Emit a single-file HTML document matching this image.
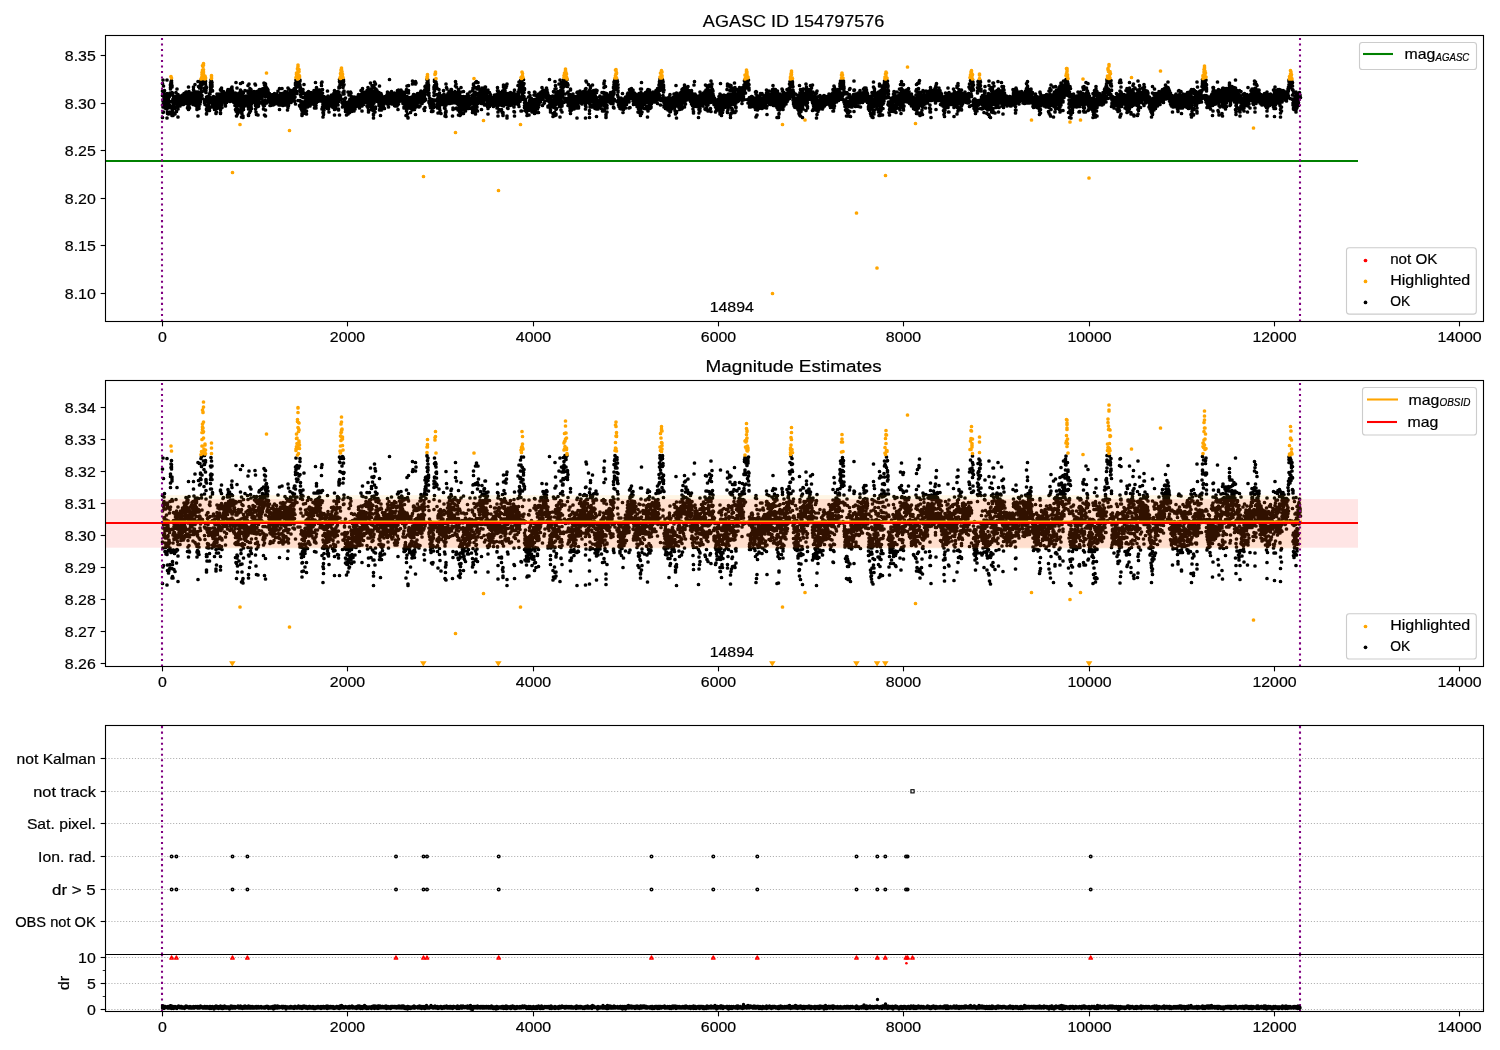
<!DOCTYPE html>
<html><head><meta charset="utf-8"><style>html,body{margin:0;padding:0;background:#fff;overflow:hidden}svg{display:block;will-change:transform}</style></head>
<body><svg width="1500" height="1050" viewBox="0 0 1500 1050" font-family="Liberation Sans, sans-serif">
<defs>
<clipPath id="c1"><rect x="105.5" y="35.5" width="1378.0" height="286.0"/></clipPath>
<clipPath id="c2"><rect x="105.5" y="380.5" width="1378.0" height="286.0"/></clipPath>
<clipPath id="c4"><rect x="105.5" y="954.5" width="1378.0" height="57.0"/></clipPath>
</defs>
<rect width="1500" height="1050" fill="#fff"/>
<text x="793.60" y="26.70" font-size="17.1" text-anchor="middle" textLength="181.46" lengthAdjust="spacingAndGlyphs" fill="#000" stroke="#000" stroke-width="0.2">AGASC ID 154797576</text>
<g clip-path="url(#c1)"><path transform="scale(.5)" d="M0 0m325 167h0m0 24h0m0-9h0m0 53h0m0-25h0m1 15h0m0-23h0m0 12h0m0-26h0m0-28h0m1 64h0m0-18h0m0-34h0m0 28h0m0-13h0m0 2h0m1-6h0m0 3h0m0 10h0m0 11h0m0-16h0m1 14h0m0-8h0m0-1h0m0-15h0m0 14h0m0 3h0m1 5h0m0-1h0m0 9h0m0 5h0m0-13h0m1-1h0m0 5h0m0 1h0m0-18h0m0 23h0m1-25h0m0 29h0m0-5h0m0-1h0m0-8h0m1-9h0m0 6h0m0-3h0m0 11h0m0 5h0m0 3h0m1-29h0m0-27h0m0 58h0m0 18h0m0-19h0m1 7h0m0-13h0m0-22h0m0-1h0m0 39h0m1-37h0m0 9h0m0 7h0m0 1h0m0 5h0m0-11h0m1 27h0m0-26h0m0 9h0m0-14h0m0 18h0m1-6h0m0-6h0m0 8h0m0 16h0m0-18h0m0 2h0m1-1h0m0-6h0m0 22h0m0-33h0m0 22h0m1-1h0m0 10h0m0-38h0m0 39h0m0-10h0m0-24h0m1-2h0m0-11h0m0-3h0m0-6h0m0 2h0m1-7h0m0 39h0m0-37h0m0 50h0m0-52h0m1 0h0m0 1h0m0-4h0m0 6h0m1 59h0m0-55h0m0 3h0m0-1h0m0 12h0m0 46h0m1-8h0m0-1h0m0-20h0m0-16h0m0 45h0m1-25h0m0 5h0m0-8h0m0 12h0m0-17h0m0 33h0m1-34h0m0-5h0m0 23h0m0-10h0m0 11h0m1-7h0m0-1h0m0 18h0m0-27h0m0 2h0m0-8h0m1 13h0m0-2h0m0-6h0m0 19h0m0-15h0m1 6h0m0-15h0m0 13h0m0-8h0m0 10h0m0 20h0m1-33h0m0 3h0m0-1h0m0 11h0m0-14h0m1 22h0m0-1h0m0-19h0m0 1h0m0-12h0m0 30h0m1-14h0m0-1h0m0-8h0m0 31h0m0-17h0m1 8h0m0-15h0m0-4h0m0-17h0m0 18h0m1 19h0m0-13h0m0 6h0m0 2h0m0-17h0m1 5h0m0 20h0m0 16h0m0-22h0m0-12h0m0-11h0m1 13h0m0-4h0m0-4h0m0-1h0m0 13h0m1-3h0m0-6h0m0 7h0m0 3h0m0-4h0m0-2h0m1-7h0m0 10h0m0 2h0m0-3h0m0-8h0m1 17h0m0-14h0m0-4h0m0 9h0m0 1h0m0 3h0m1-2h0m0-4h0m0-9h0m0 5h0m0 6h0m1 6h0m0-1h0m0-15h0m0 16h0m0-16h0m0 5h0m1-5h0m0 4h0m0 6h0m0-4h0m0 3h0m1 5h0m0-6h0m0-1h0m0 7h0m0-5h0m0-7h0m1 5h0m0 6h0m0-16h0m0 14h0m0-12h0m1 6h0m0-6h0m0 6h0m0 8h0m0-14h0m0 12h0m1 5h0m0-13h0m0 6h0m1 6h0m0-21h0m0 7h0m0-2h0m0 5h0m0-7h0m1 11h0m0-12h0m0 8h0m0 2h0m0-8h0m1 2h0m0 1h0m0 12h0m0-4h0m0 2h0m0-3h0m1-6h0m0 7h0m0-6h0m0 6h0m0-4h0m1-5h0m0-5h0m0-4h0m0 10h0m0-7h0m1 19h0m0-3h0m0-13h0m0-1h0m0-5h0m1 1h0m0 5h0m0 4h0m0-7h0m0 20h0m1-12h0m0 10h0m0-9h0m0 20h0m0-25h0m1 4h0m0-10h0m0 24h0m0-10h0m0-12h0m0 26h0m1-16h0m0 22h0m0-45h0m0 32h0m0-11h0m1-3h0m0 23h0m0-13h0m0 10h0m0-21h0m0-8h0m1 33h0m0-20h0m0 11h0m0-14h0m0-1h0m1-3h0m0 2h0m0 15h0m0-2h0m0-8h0m0-5h0m1 10h0m0-3h0m0-6h0m0 3h0m0-6h0m1 14h0m0-10h0m0 3h0m0 1h0m0 3h0m1-12h0m0 13h0m0-7h0m0 2h0m0 5h0m1-6h0m0-9h0m0 15h0m0-9h0m1-2h0m0 10h0m0-6h0m0 9h0m0-10h0m1-5h0m0-2h0m0 23h0m0-11h0m0-6h0m0 14h0m1-27h0m0 13h0m0 13h0m0-31h0m0 17h0m1 15h0m0-7h0m0-1h0m0-4h0m0-11h0m0 15h0m1-2h0m0-3h0m0-4h0m0 1h0m0 12h0m1-16h0m0 14h0m0-1h0m0-30h0m0 41h0m0-17h0m1 12h0m0-21h0m0 4h0m0 16h0m0-6h0m1 1h0m0-12h0m0 24h0m0-22h0m0 2h0m1 4h0m0-9h0m0 1h0m0 2h0m0 2h0m1-7h0m0 29h0m0 6h0m0-14h0m0 11h0m1-1h0m0-9h0m0-8h0m0-6h0m1-29h0m0 69h0m0-15h0m0-13h0m0 11h0m1-42h0m0 43h0m0-5h0m0-27h0m0 7h0m1 22h0m0 4h0m0-25h0m0 16h0m0-16h0m1 5h0m0-5h0m0 3h0m0-19h0m0 20h0m0-33h0m1 39h0m0-39h0m0 45h0m0-20h0m0 7h0m1 4h0m0-23h0m0-4h0m0-2h0m0 33h0m0-34h0m1-8h0m0 12h0m0 24h0m0-1h0m1-37h0m0 38h0m0-13h0m0-2h0m0-17h0m1 26h0m0-21h0m1 27h0m2-35h0m1 2h0m0 13h0m0-10h0m1 15h0m0 19h0m0 5h0m0-42h0m0-5h0m1 50h0m0-7h0m1-34h0m0-5h0m0-1h0m0 37h0m1-19h0m0-6h0m0-1h0m0 1h0m0 11h0m1 42h0m0 1h0m0-10h0m0-43h0m0 19h0m0 25h0m1 3h0m0-19h0m0 16h0m0-17h0m0 11h0m1-11h0m0-6h0m0 15h0m0-7h0m0-1h0m0-10h0m1 0h0m0 19h0m0-14h0m0 2h0m0 4h0m1-1h0m0 10h0m0-2h0m0-5h0m0 8h0m0-11h0m1 1h0m0-8h0m0 16h0m0-16h0m0 6h0m1 1h0m0 3h0m0 11h0m0 4h0m0-33h0m1-2h0m0 9h0m0 7h0m0-14h0m0 10h0m1-15h0m0-10h0m0 2h0m0 4h0m0-9h0m0-5h0m1 6h0m0 1h0m0-12h0m0 5h0m0 5h0m1 9h0m0-17h0m0 8h0m1-5h0m0 49h0m0-44h0m0 3h0m0 32h0m1-24h0m0 1h0m0 22h0m0 8h0m0-15h0m0 10h0m1-13h0m0 14h0m0-3h0m0 7h0m0-10h0m1 11h0m0-9h0m0-11h0m0 5h0m0 14h0m0-15h0m1 14h0m0-6h0m0 2h0m0-1h0m0-2h0m1 15h0m0-22h0m0 7h0m0 6h0m0-8h0m0-7h0m1 15h0m0-10h0m0 4h0m0-1h0m0 3h0m1-3h0m0-4h0m0 13h0m0-3h0m0-1h0m0 2h0m1 16h0m0-11h0m0 12h0m0-27h0m0 8h0m1-4h0m0-5h0m0 18h0m0 7h0m0-29h0m0 14h0m1 0h0m0-21h0m0 22h0m0-14h0m0-4h0m1 11h0m0 1h0m0-6h0m0 8h0m0 7h0m0-20h0m1-3h0m0 18h0m0-13h0m0 3h0m0 2h0m1-5h0m0 7h0m0-1h0m0-3h0m0-2h0m0 20h0m1-27h0m0 5h0m0-6h0m0 15h0m0 11h0m1-20h0m0 1h0m0-5h0m0 3h0m0 15h0m0 4h0m1-10h0m0-7h0m0 6h0m0 6h0m0-9h0m1 27h0m0-24h0m0 26h0m0-48h0m0 40h0m0-39h0m1 10h0m0-2h0m0 2h0m0 13h0m0-4h0m1-18h0m0 32h0m0-11h0m0-15h0m0 21h0m0-32h0m1 39h0m0-6h0m0-11h0m0 11h0m0-7h0m1-3h0m0 2h0m0-6h0m0 1h0m1 1h0m0-3h0m0-4h0m0-6h0m1 17h0m0-18h0m0 7h0m0-1h0m0 9h0m0-5h0m1-1h0m0 4h0m0-7h0m0 12h0m0-2h0m1-11h0m0 3h0m0 13h0m0-13h0m0 2h0m0-4h0m1 6h0m0-1h0m0 7h0m0-6h0m0 2h0m1-6h0m0 16h0m0-13h0m0-7h0m0 25h0m0-22h0m1 2h0m0 2h0m0-2h0m0 7h0m0-10h0m1 3h0m0 13h0m0-15h0m0 11h0m0-2h0m0-8h0m1 5h0m0-3h0m0-2h0m0 3h0m0-3h0m1 11h0m0-20h0m0 5h0m0 9h0m0-2h0m0-11h0m1 15h0m0 4h0m0-23h0m0 4h0m0 6h0m1-9h0m0 8h0m0-2h0m0 1h0m0-1h0m0 11h0m1-6h0m0-2h0m0 9h0m0 1h0m0-8h0m1-11h0m0 11h0m0-8h0m0-1h0m0-1h0m1 5h0m0 14h0m0 3h0m0-7h0m0-5h0m0-1h0m1 2h0m0-1h0m0-6h0m0 12h0m0-12h0m1 0h0m0 14h0m0-12h0m0 2h0m0-4h0m1 17h0m0-26h0m0 11h0m0-5h0m1 11h0m0-6h0m0 1h0m0-14h0m0 22h0m0-18h0m1 10h0m0 6h0m0-6h0m0-6h0m1 10h0m0-7h0m0 7h0m0-6h0m1 0h0m0 18h0m0-5h0m0 2h0m0-4h0m1-9h0m0 2h0m0 1h0m0 6h0m0-9h0m0 17h0m1-1h0m0-13h0m0 7h0m0-8h0m0 1h0m1 0h0m0 11h0m0-1h0m0 10h0m0-12h0m0 1h0m1 7h0m0-1h0m0-6h0m0-14h0m0 33h0m1 3h0m0-12h0m0-16h0m0-29h0m0 22h0m0 25h0m1-6h0m0 26h0m0-21h0m0-19h0m0 31h0m1-47h0m0 42h0m0-13h0m0 15h0m0-9h0m0-17h0m1 30h0m0-16h0m0 20h0m0-10h0m0-21h0m1 13h0m0 1h0m0-11h0m0 8h0m0-9h0m0-6h0m1-2h0m0 15h0m0-4h0m0 6h0m0-15h0m1 7h0m0-14h0m0 21h0m0-3h0m0 17h0m0-14h0m1 0h0m0-7h0m0-3h0m0 11h0m0-4h0m1-5h0m0 4h0m0-4h0m0 13h0m0-10h0m1-16h0m0 22h0m0-41h0m0 57h0m0-44h0m1 25h0m0-9h0m0 19h0m0-23h0m0 25h0m0-25h0m1 13h0m0-3h0m0-19h0m0 51h0m0-43h0m1 9h0m0 23h0m0-35h0m0 23h0m0 1h0m0 16h0m1-16h0m0-47h0m0 34h0m0 34h0m0-22h0m1-23h0m0 47h0m0-3h0m0-33h0m0 5h0m0-8h0m1 23h0m0-34h0m0 9h0m0 20h0m0-14h0m1-1h0m0 7h0m0-4h0m0-1h0m0 6h0m0 1h0m1-9h0m0 13h0m0-15h0m0-2h0m0 8h0m1-5h0m0 7h0m0-9h0m0-15h0m0 16h0m0 3h0m1 0h0m0 9h0m0-4h0m0-3h0m0 2h0m1-5h0m0-7h0m0 17h0m0-5h0m0-5h0m0 9h0m1-2h0m0-9h0m0 1h0m0 9h0m1-10h0m0-2h0m0 8h0m0-2h0m0 2h0m1 3h0m0-9h0m0 13h0m0-28h0m0 12h0m1 12h0m0-35h0m0 30h0m0 12h0m0-28h0m0 6h0m1 14h0m0-2h0m0 15h0m0 13h0m0-2h0m1-40h0m0 29h0m0-16h0m0-34h0m0 50h0m0-13h0m1 5h0m0 15h0m0-31h0m0-1h0m0 11h0m1-1h0m0-10h0m0-16h0m0 15h0m0-2h0m1 20h0m0 12h0m0-40h0m0 33h0m0-23h0m1 9h0m0 12h0m0-15h0m0-19h0m0 5h0m0 20h0m1-2h0m0 15h0m0-9h0m0-5h0m0-4h0m1-4h0m0 6h0m0-10h0m0 13h0m0-10h0m0 11h0m1-4h0m0-3h0m0-4h0m0 9h0m0-2h0m1-2h0m0-3h0m0-8h0m0 5h0m0 6h0m1-10h0m0 1h0m0 7h0m0 6h0m1-1h0m0-5h0m0 7h0m0-5h0m0-16h0m0 12h0m1-4h0m0 14h0m0-20h0m0 16h0m0-4h0m1-2h0m0 2h0m0 7h0m0-15h0m0-21h0m0 35h0m1-19h0m0 34h0m0-26h0m0 19h0m0-41h0m1 38h0m0-22h0m0 11h0m0 27h0m0-26h0m0 1h0m1-16h0m0 19h0m0 27h0m0-15h0m0-9h0m1-18h0m0 14h0m0-16h0m0 14h0m0-8h0m0-5h0m1 8h0m0 16h0m0-25h0m0 13h0m0-11h0m1 43h0m0-33h0m0 1h0m0 6h0m0-5h0m0 14h0m1-1h0m0-22h0m0 10h0m0-13h0m0 4h0m1 12h0m0-8h0m0 2h0m0-8h0m0-9h0m0 13h0m1 3h0m0-17h0m0 15h0m0 3h0m0-2h0m1 11h0m0-23h0m0 2h0m0-1h0m0 4h0m0 4h0m1 2h0m0 2h0m0-9h0m0-2h0m0 1h0m1 11h0m0-18h0m0 16h0m0-5h0m0 1h0m1 2h0m0 11h0m0-7h0m0-3h0m0-10h0m0 8h0m1-4h0m0 9h0m0-5h0m0-9h0m0-5h0m1 9h0m0-1h0m0 3h0m0 3h0m0-1h0m0-10h0m1 20h0m0 8h0m0-25h0m0 21h0m0-18h0m1 31h0m0-28h0m0 17h0m0 5h0m0-35h0m0 41h0m1-52h0m0 23h0m0 18h0m0-2h0m0 4h0m1 21h0m0-19h0m0-41h0m0 16h0m0-2h0m0-2h0m1-15h0m0 41h0m0-35h0m0 9h0m0 19h0m1-22h0m0-11h0m0 26h0m0-23h0m0 61h0m0-12h0m1-40h0m0 8h0m0-11h0m0 4h0m0-5h0m1 30h0m0-31h0m0 8h0m0 2h0m0 3h0m1-11h0m0 15h0m0-7h0m0-6h0m0 13h0m1 0h0m0-1h0m0 10h0m0-19h0m0 1h0m0-5h0m1 11h0m0-2h0m0-2h0m0-5h0m0 8h0m1 0h0m0 7h0m0-6h0m0 3h0m0-7h0m0 3h0m1 11h0m0-8h0m0 5h0m0-4h0m1-5h0m0 16h0m0-10h0m0 9h0m0-6h0m0 1h0m1 6h0m0 8h0m0-11h0m0 5h0m0-9h0m1 1h0m0-4h0m0 2h0m0 16h0m0-1h0m0-5h0m1-5h0m0-2h0m0 5h0m0-6h0m0 8h0m1-12h0m0 9h0m0 1h0m0-1h0m0-3h0m0-9h0m1 8h0m0-5h0m0 11h0m0-9h0m0-1h0m1-1h0m0 12h0m0-6h0m0-4h0m0 9h0m1-7h0m0-8h0m0 21h0m0-4h0m0-6h0m1-3h0m0 2h0m0-3h0m0-6h0m0 11h0m0 3h0m1-14h0m0 19h0m0-15h0m0-3h0m0 6h0m1 6h0m0-4h0m0 4h0m0-16h0m0 8h0m0 4h0m1-2h0m0-1h0m0-3h0m0 4h0m0 6h0m1-3h0m0 5h0m0 2h0m0-10h0m0 5h0m0-3h0m1-4h0m0-2h0m0 4h0m0 4h0m0-7h0m1 9h0m0-15h0m0 12h0m0-10h0m0 13h0m0-11h0m1 2h0m0 4h0m0-8h0m0 4h0m0 2h0m1 1h0m0-4h0m0 2h0m0 5h0m0-4h0m1 7h0m0 5h0m0-17h0m0 8h0m0-17h0m1 13h0m0-4h0m0 1h0m0 3h0m0 3h0m0 7h0m1-2h0m0 3h0m0 2h0m0 2h0m0-16h0m1 25h0m0-42h0m0 31h0m0-16h0m0 1h0m0-1h0m1 5h0m0 1h0m0-3h0m0-5h0m0 1h0m1 4h0m0 10h0m0-3h0m0-6h0m0-7h0m0-2h0m1 13h0m0-6h0m0 6h0m0 2h0m0-6h0m1-3h0m0 1h0m0 16h0m0-21h0m0 20h0m0-20h0m1-2h0m0-10h0m0 28h0m0-6h0m0-4h0m1-2h0m0 6h0m0-12h0m0 12h0m0-4h0m0 1h0m1-8h0m0 2h0m0 21h0m0-24h0m0 20h0m1-1h0m0-3h0m0-5h0m0-9h0m0 19h0m1-12h0m0-9h0m0 1h0m0 6h0m0 6h0m1-9h0m0 5h0m0 7h0m0 7h0m0-18h0m0-4h0m1-5h0m0 4h0m0 5h0m0 4h0m0-3h0m1-3h0m0 11h0m0-8h0m0 3h0m0-7h0m0 1h0m1 17h0m0-4h0m0-9h0m0-3h0m0 9h0m1-6h0m0 4h0m0 2h0m0-8h0m0-8h0m1 18h0m0-12h0m0 4h0m0 14h0m0 2h0m1 10h0m0-24h0m0-10h0m0 23h0m0-1h0m0-9h0m1 5h0m0 6h0m0-34h0m0 39h0m0-11h0m1-8h0m0-18h0m0 30h0m0-15h0m0 18h0m0-11h0m1-4h0m0 7h0m0-13h0m0 2h0m0 6h0m1-1h0m0-2h0m0-1h0m0-9h0m0 13h0m1-8h0m0-4h0m0 6h0m0-3h0m0-9h0m1 19h0m0 1h0m0-11h0m0 3h0m0-9h0m0 13h0m1-4h0m0-4h0m0 17h0m0-21h0m0 8h0m1 6h0m0-1h0m0-1h0m0-11h0m0 14h0m0-14h0m1 12h0m0-6h0m0 5h0m0-2h0m0-6h0m1 6h0m0 3h0m0-10h0m0-6h0m0 14h0m1 1h0m0 1h0m0 5h0m0-4h0m0-7h0m0 6h0m1-6h0m0-2h0m0-6h0m0 10h0m1 9h0m0-11h0m0-3h0m0-10h0m0 14h0m0 7h0m1 3h0m0-15h0m0 9h0m0-15h0m0-4h0m1 17h0m0-8h0m0 8h0m0-9h0m0-2h0m0-6h0m1-9h0m0 10h0m0-8h0m0-4h0m0 42h0m1-48h0m0 9h0m0-4h0m0 2h0m1 6h0m1 10h0m0 4h0m0-22h0m0 9h0m1-5h0m1 32h0m0-28h0m1-7h0m1 5h0m1-6h0m0 46h0m1-51h0m0 53h0m0-34h0m0-9h0m0-8h0m0 39h0m1-11h0m0-9h0m0-4h0m0-2h0m0 9h0m1-2h0m0-2h0m0 25h0m0 6h0m0 6h0m0-24h0m1 10h0m0 2h0m0 6h0m0-7h0m0 15h0m1 3h0m0 6h0m0 3h0m0-23h0m0 5h0m0-31h0m1 34h0m0 6h0m0-4h0m0-33h0m0 33h0m1-4h0m0-31h0m0 12h0m0 12h0m0 10h0m0-38h0m1 36h0m0-28h0m0 32h0m0 8h0m0-18h0m1 7h0m0-2h0m0-2h0m0-43h0m0 45h0m0-10h0m1 8h0m0-1h0m0-5h0m0 1h0m0 2h0m1-6h0m0-1h0m0 3h0m0 20h0m0-10h0m0 2h0m1-10h0m0-16h0m0 11h0m0 5h0m0-20h0m1 10h0m0 14h0m0-12h0m0-6h0m0 20h0m1-11h0m0 12h0m0 8h0m0-24h0m0 30h0m1-22h0m0-14h0m0 5h0m0 7h0m0-5h0m0 3h0m1-17h0m0 11h0m0-2h0m0 20h0m0-8h0m1 5h0m0-21h0m0 3h0m0 9h0m0-9h0m0 8h0m1 2h0m0-7h0m0 3h0m0-16h0m0 27h0m1-16h0m0 12h0m0-11h0m0 11h0m0 4h0m0-20h0m1 11h0m0-12h0m0 14h0m0 1h0m0-13h0m1 11h0m0-4h0m0 6h0m0-5h0m0 13h0m0-12h0m1-1h0m0-7h0m0 6h0m1 1h0m0-14h0m0 18h0m0-10h0m0 4h0m0 8h0m1-11h0m0-4h0m0 5h0m0 9h0m0-11h0m1 0h0m0 6h0m0-8h0m0 16h0m0-3h0m0-5h0m1-3h0m0-5h0m0 10h0m0-11h0m1-3h0m0 4h0m0 6h0m0 1h0m0 3h0m0 7h0m1-8h0m0 4h0m0-10h0m0-2h0m1 1h0m0-2h0m0 9h0m0-1h0m0-7h0m0-11h0m1 35h0m0-7h0m0-9h0m0 10h0m0-5h0m1-8h0m0 11h0m0-22h0m0 2h0m0-1h0m0 3h0m1-4h0m0 17h0m0-18h0m0 25h0m0-45h0m1 42h0m0-16h0m0 25h0m0-5h0m0-19h0m0-3h0m1-12h0m0 8h0m0-4h0m0-6h0m0 30h0m1-24h0m0 17h0m0-8h0m0 2h0m0-6h0m1 2h0m0 6h0m0 9h0m0-12h0m0 1h0m1-1h0m0-3h0m0-8h0m0 4h0m0 4h0m0 6h0m1 5h0m0-18h0m0 5h0m0 3h0m0 10h0m1-8h0m0-6h0m0 1h0m0 6h0m0-5h0m0 3h0m1 1h0m0-11h0m0 3h0m0 3h0m0 5h0m1-11h0m0 17h0m0-10h0m0 8h0m0 7h0m0-11h0m1 10h0m0-11h0m0 6h0m0-8h0m0 5h0m1 7h0m0-6h0m0 5h0m0-19h0m0 1h0m0 6h0m1-1h0m0-20h0m0 27h0m0 1h0m0-23h0m1 16h0m0 31h0m0-54h0m0 32h0m0-32h0m0 38h0m1 12h0m0-12h0m0-16h0m0 13h0m0-20h0m1 22h0m0 5h0m0 28h0m0-25h0m0-13h0m0 29h0m1 1h0m0-16h0m0 19h0m0-6h0m0-10h0m1 7h0m0-6h0m0-11h0m0 14h0m0-24h0m1 9h0m0-8h0m0 11h0m0-4h0m0 5h0m0 6h0m1-10h0m0 8h0m0-8h0m0 10h0m0-7h0m1 2h0m0-10h0m0 9h0m0-9h0m0 4h0m0-6h0m1 12h0m0-9h0m0 2h0m0 3h0m1-8h0m0 18h0m0-13h0m0 8h0m0-7h0m0-2h0m1 3h0m0 4h0m0 4h0m0 4h0m0-5h0m1-8h0m0 16h0m0-35h0m0 25h0m0 8h0m0-21h0m1-2h0m0 9h0m0 13h0m0-10h0m0-10h0m1 4h0m0 20h0m0-19h0m0-5h0m0 15h0m0 8h0m1-7h0m0-6h0m0 2h0m0 18h0m1-16h0m0-4h0m0-7h0m0 12h0m0-12h0m1-2h0m0 2h0m0 10h0m0-11h0m0 10h0m1-1h0m0 7h0m0-4h0m0-14h0m0 7h0m1 0h0m0 4h0m0-1h0m0 4h0m0-4h0m1-10h0m0 10h0m0-14h0m0 9h0m0 5h0m0-10h0m1 8h0m0-7h0m0 9h0m0-12h0m0 6h0m1 1h0m0-4h0m0 9h0m0 10h0m0-8h0m0-11h0m1-4h0m0 18h0m0-12h0m0 12h0m1 2h0m0-22h0m0 8h0m0 6h0m0-7h0m0 19h0m1-18h0m0 6h0m0 4h0m0-21h0m0 17h0m1 1h0m0 9h0m0 6h0m0-13h0m0-25h0m0 49h0m1-15h0m0-8h0m0-12h0m0 10h0m0-10h0m1 17h0m0-7h0m0-12h0m0 20h0m0-17h0m0-6h0m1 3h0m0 10h0m0-2h0m0-10h0m1 4h0m0-9h0m0 9h0m0 1h0m0 1h0m0-9h0m1 2h0m0 11h0m0-8h0m0 11h0m0-14h0m1 10h0m0-16h0m0-1h0m0 6h0m0 29h0m0-12h0m1-10h0m0-1h0m0-10h0m0 25h0m1 8h0m0 2h0m0-36h0m0 2h0m0 4h0m0 13h0m1-29h0m0 1h0m0 9h0m0-8h0m1-1h0m0-2h0m0-10h0m0-4h0m0 71h0m1-62h0m0 22h0m0-27h0m0 33h0m1-4h0m0-32h0m1 39h0m1-1h0m1-29h0m0-4h0m0 40h0m1-46h0m0 55h0m0-55h0m1 0h0m0 50h0m0-24h0m0-10h0m1-6h0m0-9h0m0 3h0m0 9h0m0-3h0m0 19h0m1-19h0m0 40h0m0-25h0m0-2h0m0 6h0m1 12h0m0 5h0m0-7h0m0 3h0m0 7h0m0-10h0m1 7h0m0 2h0m0 6h0m0-6h0m0-3h0m1 19h0m0-10h0m0-2h0m0-5h0m0 13h0m0-23h0m1 18h0m0 6h0m0-5h0m0-10h0m0 10h0m1 8h0m0-10h0m0-1h0m0 2h0m0 16h0m0-19h0m1-6h0m0 13h0m0-7h0m0 11h0m0-9h0m1-4h0m0 8h0m0-3h0m0 9h0m0-18h0m0 9h0m1 14h0m0-10h0m0-8h0m0 1h0m0-27h0m1 31h0m0-3h0m0 10h0m0-15h0m0 15h0m0-14h0m1 12h0m0 2h0m0-32h0m0 36h0m1-25h0m0 10h0m0 14h0m0-10h0m0 6h0m0-13h0m1-10h0m0-11h0m0 32h0m1-9h0m0 10h0m0-32h0m0 23h0m0 2h0m0-29h0m1 24h0m0 13h0m0-35h0m0 17h0m0 10h0m1-8h0m0-12h0m0 13h0m0-3h0m0 20h0m0-9h0m1 3h0m0-12h0m0 13h0m0 1h0m0-8h0m1-2h0m0-5h0m0-7h0m0 2h0m0 7h0m1 13h0m0-20h0m0 13h0m0-3h0m0-2h0m1 6h0m0-5h0m0-8h0m0-2h0m0-4h0m0 7h0m1 9h0m0-7h0m0 10h0m0 9h0m0-19h0m1 6h0m0 3h0m0-18h0m0 11h0m1-8h0m0 8h0m0-1h0m0-8h0m0 22h0m1-11h0m0 3h0m0-8h0m0 7h0m0-4h0m1 4h0m0 1h0m0-8h0m0-4h0m0 5h0m0 10h0m1-3h0m0-10h0m0 7h0m0-8h0m0 5h0m1-10h0m0 16h0m0-8h0m0-4h0m0 2h0m0 12h0m1-3h0m0-3h0m0 4h0m0-4h0m1-1h0m0 3h0m0-11h0m0-2h0m0 8h0m1-10h0m0 10h0m0-14h0m0 2h0m1 3h0m0 8h0m0-4h0m0 5h0m0-8h0m0 7h0m1 8h0m0 2h0m0-4h0m0 8h0m0-19h0m1-5h0m0 9h0m0 9h0m0-3h0m0 2h0m0 1h0m1-14h0m0 9h0m0-9h0m0 10h0m0 1h0m1-10h0m0-16h0m0 18h0m0 5h0m0-15h0m0 9h0m1 3h0m0 7h0m0-15h0m0 10h0m0 4h0m1-4h0m0-14h0m0 3h0m0 20h0m0 10h0m0-39h0m1 17h0m0-23h0m0 19h0m0-2h0m0 7h0m1-1h0m0-3h0m0 2h0m0-16h0m0 18h0m0 1h0m1-14h0m0 18h0m0-6h0m0-3h0m0 12h0m1-14h0m0 4h0m0-7h0m0 4h0m0 9h0m0 1h0m1-4h0m0-3h0m0-1h0m0 1h0m0-5h0m1 11h0m0-4h0m0-13h0m0 9h0m0-5h0m1 13h0m0-11h0m0 3h0m0 4h0m0-6h0m1-8h0m0 7h0m0 3h0m0-11h0m0 7h0m0-9h0m1 4h0m0 7h0m0 5h0m0-2h0m0-9h0m1 15h0m0-23h0m0 31h0m0-19h0m0-6h0m0 15h0m1 12h0m0-13h0m0-14h0m0 12h0m1-3h0m0 6h0m0-27h0m0 33h0m0-5h0m0-8h0m1-9h0m0 34h0m0 4h0m0-21h0m0 2h0m1-9h0m0-7h0m0 1h0m0 6h0m0 3h0m0-4h0m1 4h0m0-18h0m0 4h0m0 9h0m0-6h0m1 10h0m0-4h0m0-2h0m0 16h0m0-15h0m0 11h0m1-17h0m0 26h0m0-7h0m0-21h0m0-19h0m1 19h0m0 3h0m0 31h0m0-16h0m0-12h0m0 2h0m1-3h0m0-12h0m0-1h0m0 19h0m0 4h0m1 10h0m0-20h0m0-7h0m0-12h0m0 36h0m0-3h0m1 11h0m0-41h0m0 36h0m0-1h0m0-21h0m1 33h0m0-12h0m0-21h0m0 15h0m0-3h0m0-7h0m1 35h0m0 2h0m0 6h0m0-64h0m0 35h0m1-2h0m0-34h0m0 50h0m0-15h0m0 10h0m0-33h0m1 19h0m0-26h0m0-12h0m0 33h0m0-13h0m1 18h0m0-6h0m0 28h0m0-24h0m0-34h0m0 18h0m1 33h0m0-3h0m0-21h0m0-25h0m0 12h0m1 6h0m0-8h0m0 17h0m0-11h0m0 7h0m0 4h0m1-10h0m0 12h0m0-8h0m0-7h0m0 16h0m1-17h0m0 5h0m0 7h0m0 1h0m1-1h0m0 7h0m0-8h0m0-7h0m0 18h0m1-19h0m0 18h0m0-1h0m0-2h0m0-2h0m0-1h0m1-10h0m0 8h0m0-4h0m0 12h0m0-6h0m1 15h0m0-3h0m0-23h0m0 17h0m0-5h0m0-2h0m1 2h0m0 23h0m0-16h0m0-32h0m0 19h0m1 26h0m0-8h0m0 10h0m0-13h0m0 1h0m1 10h0m0 14h0m0-30h0m0 4h0m0-5h0m1-10h0m0 23h0m0-26h0m0 24h0m0-21h0m0 6h0m1 24h0m0-30h0m0 9h0m0 5h0m0 3h0m1-2h0m0 8h0m0 5h0m0-13h0m0-9h0m0 9h0m1-8h0m0 18h0m0-22h0m0 9h0m0 3h0m1-1h0m0-3h0m0 2h0m0-1h0m0 11h0m0-13h0m1 6h0m0 6h0m0-13h0m0 6h0m0-11h0m1 14h0m0-13h0m0 5h0m0 8h0m0-12h0m0 2h0m1-3h0m0 10h0m0 12h0m0-13h0m0-3h0m1-5h0m0-2h0m0-1h0m0 4h0m0 3h0m0 3h0m1-7h0m0 7h0m0-5h0m0 4h0m0-7h0m1 7h0m0 2h0m0-1h0m0-7h0m0 7h0m1-12h0m0 14h0m0-8h0m0 4h0m0 5h0m0-7h0m1-4h0m0-1h0m0 6h0m0 6h0m0-2h0m1-1h0m0-16h0m0 20h0m0-7h0m0-16h0m0 22h0m1-18h0m0 2h0m0 4h0m0 1h0m0 15h0m1-11h0m0 1h0m0-10h0m0 1h0m0 15h0m0 8h0m1-11h0m0-17h0m0 11h0m0 1h0m0-5h0m1-34h0m0 37h0m0 8h0m0-8h0m0 1h0m1-4h0m0 5h0m0-6h0m0 3h0m0 1h0m1-5h0m0 6h0m0 8h0m0-2h0m0-4h0m0-8h0m1 11h0m0-2h0m0-10h0m0-2h0m0 19h0m1-2h0m0-6h0m0-2h0m0 4h0m0 6h0m0-24h0m1 12h0m0-8h0m0 5h0m0 1h0m0 15h0m1-13h0m0 1h0m0-1h0m0 7h0m0 3h0m0-9h0m1-4h0m0-2h0m0 5h0m0 12h0m0-9h0m1 1h0m0 1h0m0 4h0m0-12h0m0 9h0m0-5h0m1-4h0m0 9h0m0-3h0m0 2h0m0-12h0m1 12h0m0 5h0m0-16h0m0 22h0m0-25h0m0 6h0m1 1h0m0 2h0m0-2h0m0 19h0m1-14h0m0 6h0m0 5h0m0-4h0m0-6h0m0-4h0m1 7h0m0-15h0m0 5h0m0 10h0m1 0h0m0-7h0m0-6h0m0 12h0m0-3h0m0-9h0m1 23h0m0-16h0m0 4h0m0 9h0m0-13h0m1-7h0m0 14h0m0 3h0m0-25h0m0 15h0m0 14h0m1-15h0m0-6h0m0 11h0m0 19h0m0-16h0m1 5h0m0-27h0m0 22h0m0-23h0m0 16h0m0-1h0m1-1h0m0-10h0m0 19h0m0-5h0m0-1h0m1-5h0m0 6h0m0-5h0m0-4h0m0 8h0m0-11h0m1 8h0m0 1h0m0-5h0m0 6h0m0-4h0m1 6h0m0 4h0m0-10h0m0-3h0m0 5h0m0-6h0m1 8h0m0-16h0m0 15h0m0-5h0m0 3h0m1 0h0m0 5h0m0-15h0m0 9h0m0 3h0m0-11h0m1 0h0m0 11h0m0-9h0m0-3h0m0 6h0m1 9h0m0-7h0m0 5h0m0 3h0m0-8h0m0-3h0m1 19h0m0-12h0m0 4h0m0-8h0m0 8h0m1 6h0m0-20h0m0 12h0m0-12h0m0 10h0m0 12h0m1 7h0m0 2h0m0-13h0m0-4h0m0-14h0m1 31h0m0-16h0m0-7h0m0-5h0m0 4h0m0 5h0m1-1h0m0 17h0m0-11h0m0 10h0m0-28h0m1 11h0m0 12h0m0 3h0m0 2h0m0-13h0m0 16h0m1-2h0m0 18h0m0-32h0m0-3h0m0-2h0m1 1h0m0 27h0m0-38h0m0-5h0m0 40h0m0-25h0m1-22h0m0 42h0m0 4h0m0-5h0m0-20h0m1 13h0m0-22h0m0 44h0m0-34h0m0-9h0m0 28h0m1 22h0m0 1h0m0-40h0m0 39h0m0-50h0m1 18h0m0-22h0m0 22h0m0-32h0m0 15h0m0 9h0m1 6h0m0 1h0m0-5h0m0 8h0m1 10h0m0 1h0m0-4h0m0-7h0m0 10h0m0-8h0m1-3h0m0-6h0m0 13h0m0 2h0m1-1h0m0-5h0m0-12h0m0 30h0m0-21h0m0-1h0m1-8h0m0 1h0m0 6h0m0 15h0m0-6h0m1-4h0m0 4h0m0-13h0m0 11h0m0 8h0m0-12h0m1-11h0m0 18h0m0 8h0m0-2h0m0-13h0m1-4h0m0 16h0m0 2h0m0-26h0m0-25h0m0-6h0m1 5h0m0 48h0m0-13h0m0 3h0m0 5h0m1 0h0m0-7h0m0-5h0m0-9h0m0 17h0m1 1h0m0-18h0m0 2h0m0 27h0m0-12h0m1 9h0m0-15h0m0 19h0m0-20h0m0 1h0m0 15h0m1-2h0m0 3h0m0-4h0m0-8h0m0-7h0m1-29h0m0 61h0m0-24h0m0 5h0m0-9h0m0-38h0m1 3h0m0 36h0m0-11h0m0 11h0m0-12h0m1 12h0m0-12h0m0 21h0m0-15h0m0-5h0m0 6h0m1 12h0m0-12h0m0 8h0m0-3h0m0-4h0m1-11h0m0 12h0m0 7h0m0-19h0m0 13h0m1 3h0m0-3h0m0 1h0m0-10h0m0 22h0m0-8h0m1-10h0m0 4h0m0 1h0m0 12h0m0-18h0m1 9h0m0-12h0m0 23h0m0-17h0m0-1h0m0-7h0m1 9h0m0 5h0m0-5h0m0 3h0m0-2h0m1 13h0m0-12h0m0-1h0m0-13h0m1-2h0m0 6h0m0 8h0m0-12h0m0 11h0m1 6h0m0 2h0m0-5h0m0-18h0m0 2h0m0 1h0m1 9h0m0 9h0m0-9h0m0 3h0m0 4h0m1-13h0m0 19h0m0-2h0m0-2h0m0-5h0m0-2h0m1-6h0m0-1h0m0 8h0m0 1h0m0-4h0m1-6h0m0 3h0m0-1h0m0-2h0m0 3h0m0 2h0m1 4h0m0 6h0m0-3h0m0-4h0m1-9h0m0-4h0m0 19h0m0-15h0m0-2h0m0 33h0m1-29h0m0 5h0m0 27h0m0-30h0m0-10h0m1-2h0m0 22h0m0-22h0m0-6h0m0 7h0m0 35h0m1-38h0m0 22h0m0-1h0m0-25h0m0-1h0m1 0h0m0 12h0m0-9h0m0-2h0m0 5h0m1-4h0m0 8h0m0-11h0m0 2h0m0 3h0m1-17h0m0 14h0m0-14h0m0 7h0m1 2h0m0-6h0m1-2h0m0 6h0m0 7h0m0-9h0m0 25h0m0-22h0m1 4h0m0-1h0m0 2h0m0 8h0m0-4h0m1 10h0m0 16h0m0-11h0m0 13h0m0-2h0m0 3h0m1-9h0m0 11h0m0-3h0m0-2h0m0 2h0m1-4h0m0 2h0m0 1h0m0 6h0m0-2h0m0 4h0m1 0h0m0 2h0m0-15h0m0 4h0m0 13h0m1-6h0m0-5h0m0 6h0m0-11h0m0 17h0m0-8h0m1 15h0m0-22h0m0 12h0m0-5h0m0-5h0m1 7h0m0 2h0m0 1h0m0-13h0m0-1h0m0 13h0m1-12h0m0 13h0m0 10h0m0-10h0m1-7h0m0-1h0m0 7h0m0-4h0m0 14h0m1-19h0m0-3h0m0 6h0m0 9h0m0-7h0m1-17h0m0-13h0m0-3h0m0 10h0m0-11h0m0 28h0m1-20h0m0-10h0m0-12h0m0 11h0m0-8h0m1 12h0m0 25h0m0-37h0m1 1h0m0-1h0m0 2h0m1 1h0m0-2h0m0 36h0m0 13h0m0-44h0m1-1h0m0 4h0m0 4h0m0-7h0m0 8h0m1-1h0m0 33h0m0-20h0m0 20h0m0-8h0m0 1h0m1 11h0m0-9h0m0 4h0m0 4h0m0 4h0m1-13h0m0-8h0m0 1h0m0 7h0m0-4h0m0 27h0m1-27h0m0 11h0m0-15h0m0-1h0m0 9h0m1 5h0m0-1h0m0-28h0m0 30h0m0-11h0m0-6h0m1-6h0m0 31h0m0-17h0m0 14h0m0-9h0m1-12h0m0 28h0m0-22h0m0 4h0m0-11h0m0 9h0m1-2h0m0 5h0m0-13h0m0 3h0m0 4h0m1 29h0m0-32h0m0 11h0m0-10h0m0 1h0m0-1h0m1 6h0m0-4h0m0 2h0m0 9h0m0-12h0m1 7h0m0-5h0m0-5h0m0-2h0m0 5h0m0 1h0m1 2h0m0 4h0m0-8h0m0 2h0m0 5h0m1-7h0m0 11h0m0-10h0m0 6h0m0 1h0m1-2h0m0 3h0m0-6h0m0-1h0m0-17h0m1 29h0m0-9h0m0-7h0m0-6h0m0 11h0m0-8h0m1 12h0m0-11h0m0 14h0m0 10h0m0-17h0m1 6h0m0-3h0m0 9h0m0 21h0m0-19h0m0 4h0m1 15h0m0-7h0m0-17h0m0-3h0m0 23h0m1 5h0m0-11h0m0 2h0m0-14h0m0-42h0m0 42h0m1-8h0m0-27h0m0 26h0m0 5h0m0-14h0m1 12h0m0-26h0m0 20h0m0 3h0m0-8h0m1 5h0m0 1h0m0-2h0m0 5h0m0-12h0m1-3h0m0 15h0m0-4h0m0-6h0m0 11h0m0-3h0m1-8h0m0 3h0m0-1h0m0 13h0m0-19h0m1 7h0m0 1h0m0-12h0m0 5h0m0 15h0m1-21h0m0 15h0m0-2h0m0 6h0m0-17h0m0 10h0m1-4h0m0-3h0m0 6h0m0 13h0m0-23h0m1 12h0m0 7h0m0-8h0m0 1h0m0-2h0m1-4h0m0-8h0m0 6h0m0 4h0m0-13h0m1 14h0m0-14h0m0 14h0m0 11h0m0-21h0m0 13h0m1 2h0m0-1h0m0-2h0m0-10h0m0 16h0m1 31h0m0-42h0m0-3h0m0 19h0m0-15h0m0-6h0m1 34h0m0-3h0m0-15h0m0-14h0m0 15h0m1-17h0m0 11h0m0-6h0m0 6h0m0-2h0m1 3h0m0 1h0m0-2h0m0-2h0m1 7h0m0-6h0m0-1h0m0-7h0m0 4h0m1-1h0m0 15h0m0-7h0m0-15h0m0 5h0m1-16h0m0-9h0m0 42h0m0 1h0m0-5h0m1-33h0m0 20h0m0 13h0m0 16h0m0-20h0m1 3h0m0-26h0m0 29h0m0 13h0m0-31h0m1 3h0m0 14h0m0-9h0m0 13h0m1-15h0m0 10h0m0-5h0m0-7h0m0 18h0m0-14h0m1 0h0m0-7h0m0 23h0m0-11h0m0 22h0m1-17h0m0-16h0m0-8h0m0 17h0m0 24h0m0 10h0m1-29h0m0 16h0m0-15h0m0 6h0m1-23h0m0 45h0m0-17h0m0-14h0m0-9h0m0 33h0m1 4h0m0-7h0m0-21h0m0 32h0m0-40h0m1 34h0m0 4h0m0-12h0m0-8h0m0 10h0m0-7h0m1-15h0m0 2h0m0 24h0m0-39h0m0-9h0m1 27h0m0-9h0m0 5h0m0 15h0m0-11h0m0 10h0m1 1h0m0-2h0m0-14h0m0 15h0m1-1h0m0-4h0m0 9h0m0-4h0m0 2h0m0-12h0m1 15h0m0-8h0m0-2h0m0-8h0m0 3h0m1 4h0m0 13h0m0-36h0m0 10h0m0 11h0m0 23h0m1-12h0m0 5h0m0-2h0m0-4h0m0 5h0m1-4h0m0-4h0m0-2h0m0 11h0m0-11h0m0-12h0m1 12h0m0 2h0m0-17h0m0 8h0m1 0h0m0 2h0m0 4h0m0-12h0m0 13h0m0 13h0m1-18h0m0-2h0m0 4h0m0-3h0m0 1h0m1 0h0m0-11h0m0 4h0m0 5h0m0 2h0m0 4h0m1 5h0m0-1h0m0-6h0m1-6h0m0 4h0m0 13h0m0-1h0m0-7h0m0-21h0m1 19h0m0-7h0m0 3h0m0 4h0m0-8h0m1 18h0m0-6h0m0 4h0m0-13h0m0-11h0m0 17h0m1 4h0m0-7h0m0 1h0m0-4h0m1 7h0m0-12h0m0-1h0m0 4h0m0 10h0m1-14h0m0-12h0m0 26h0m0-11h0m0 6h0m1-4h0m0 1h0m0-2h0m0 8h0m0-5h0m0 5h0m1-7h0m0 1h0m0 5h0m0-4h0m0 3h0m1-5h0m0-1h0m0 17h0m0-14h0m0 4h0m1-1h0m0-9h0m0 1h0m0 5h0m0-12h0m1 0h0m0 9h0m0-8h0m0-11h0m0 39h0m0 5h0m1-1h0m0-10h0m0-7h0m0-31h0m0 46h0m1-54h0m0 2h0m0 34h0m0 20h0m0-48h0m1 18h0m0 13h0m0-20h0m0 23h0m1-16h0m0 3h0m0 3h0m0-6h0m0 13h0m0-8h0m1 8h0m0-18h0m0 10h0m0 6h0m0-21h0m1 32h0m0 5h0m0-46h0m0 53h0m0-63h0m0 11h0m1 36h0m0 8h0m0-23h0m0 3h0m0 9h0m1 3h0m0 5h0m0-54h0m0 26h0m0 7h0m0 7h0m1-3h0m0-13h0m0 27h0m0-15h0m0 1h0m1 4h0m0-17h0m0 15h0m0-24h0m0-3h0m0 47h0m1-57h0m0 23h0m0 19h0m0-19h0m1 3h0m0 5h0m0-23h0m0 26h0m0-23h0m0 20h0m1-9h0m0 5h0m0-4h0m0 17h0m0-13h0m1 2h0m0-1h0m0 6h0m0 5h0m0-17h0m0 4h0m1-1h0m0-5h0m0 11h0m0-13h0m0 4h0m1 3h0m0 1h0m0-11h0m0 8h0m0-2h0m1 13h0m0-11h0m0 14h0m0-2h0m0-13h0m0 10h0m1 22h0m0-12h0m0-7h0m0-14h0m0 11h0m1-15h0m0 8h0m0 8h0m0-22h0m0 16h0m0 4h0m1 3h0m0-8h0m0 5h0m0-9h0m0-5h0m1 6h0m0 6h0m0-13h0m0 9h0m0-5h0m0 17h0m1-11h0m0-9h0m0 13h0m0-6h0m1-10h0m0 7h0m0-3h0m0 23h0m0-11h0m1-5h0m0 20h0m0-15h0m0-8h0m0-9h0m1 14h0m0-18h0m0 26h0m0-9h0m0-9h0m1-8h0m0 35h0m0-24h0m0 8h0m0 5h0m1-1h0m0-7h0m0-6h0m0 6h0m0 7h0m0-7h0m1-9h0m0 14h0m0-9h0m0-3h0m0 9h0m1 4h0m0 1h0m0-14h0m0 4h0m0 7h0m0-3h0m1 15h0m0-6h0m0 13h0m0-30h0m0 2h0m1-5h0m0 33h0m0-20h0m0 24h0m0 11h0m0-29h0m1 1h0m0 2h0m0 5h0m0-6h0m1 5h0m0-1h0m0 4h0m0-4h0m0-8h0m0 12h0m1-11h0m0 13h0m0-3h0m0-23h0m0 28h0m1-15h0m0 11h0m0-6h0m0-2h0m0-2h0m0 7h0m1 3h0m0-20h0m0 11h0m0 8h0m1 2h0m0-11h0m0-6h0m0 14h0m0 3h0m0-13h0m1 10h0m0-7h0m0 10h0m0-7h0m0 5h0m1-2h0m0 2h0m0-6h0m0 3h0m0-3h0m0 4h0m1-10h0m0 12h0m0-3h0m0-9h0m0 6h0m1 5h0m0-1h0m0 2h0m0-12h0m0 7h0m1 10h0m0-15h0m0-1h0m0-2h0m0 15h0m1-15h0m0 11h0m0-6h0m0 1h0m0-4h0m0 14h0m1-9h0m0-5h0m0-7h0m0 12h0m0-4h0m1-6h0m0 11h0m0-1h0m0-2h0m0-8h0m0 11h0m1-4h0m0 5h0m0-4h0m0-10h0m0 6h0m1 1h0m0 6h0m0 1h0m0-10h0m0-1h0m0 12h0m1-3h0m0 1h0m0-8h0m0 15h0m1-18h0m0-4h0m0 28h0m0-15h0m0 4h0m0 11h0m1-41h0m0 6h0m0 32h0m0-12h0m1-20h0m0 3h0m0 15h0m0 25h0m0 8h0m0-27h0m1-15h0m0-7h0m0 19h0m0 1h0m1-13h0m0 13h0m0-9h0m0 25h0m0-28h0m0 8h0m1-1h0m0-3h0m0 5h0m0 10h0m0-7h0m1-13h0m0 11h0m0 3h0m0-2h0m0 2h0m1 3h0m0-7h0m0 4h0m0 3h0m0-14h0m1 8h0m0-3h0m0-10h0m0-3h0m0 22h0m0-11h0m1 7h0m0 17h0m0-22h0m0 21h0m0 3h0m1-18h0m0-6h0m0-5h0m0 10h0m0-17h0m0 24h0m1 1h0m0-25h0m0 40h0m0-37h0m0-7h0m1 43h0m0 6h0m0-26h0m0-20h0m0 45h0m0-2h0m1-28h0m0-4h0m0-22h0m0-4h0m0 42h0m1-26h0m0 12h0m0-19h0m0 20h0m0 3h0m0-12h0m1 4h0m0 10h0m0-20h0m0 15h0m0-10h0m1 16h0m0-24h0m0 15h0m0 11h0m0 2h0m0-35h0m1 18h0m0-6h0m0 18h0m0-4h0m0 2h0m1-9h0m0 5h0m0-4h0m0 11h0m0-30h0m0 34h0m1-18h0m0 1h0m0-20h0m0 26h0m0-28h0m1 17h0m0 49h0m0-4h0m0-41h0m0-23h0m0 40h0m1-6h0m0-7h0m0 7h0m0-2h0m0 16h0m1 1h0m0-27h0m0 3h0m0 3h0m0-6h0m0 3h0m1 0h0m0-6h0m0 21h0m0-15h0m0 16h0m1-18h0m0 1h0m0 5h0m0-5h0m0 7h0m1-1h0m0-7h0m0 19h0m0-16h0m0-1h0m1-2h0m0 2h0m0 12h0m0-18h0m0 15h0m0 9h0m1-17h0m0 1h0m0-2h0m0-1h0m0-7h0m1 4h0m0 15h0m0-12h0m0 1h0m0 3h0m1-1h0m0 1h0m0-5h0m0 10h0m0 9h0m0-13h0m1 4h0m0-3h0m0-6h0m0 11h0m0-7h0m1 7h0m0-2h0m0 1h0m0-8h0m0 9h0m1-6h0m0 1h0m0-6h0m0-3h0m1 2h0m0-3h0m0 7h0m0-7h0m0 2h0m0 5h0m1-10h0m0 22h0m0 7h0m0 9h0m0-31h0m1 40h0m0-52h0m0 44h0m0-21h0m0-6h0m0-6h0m1 8h0m0-8h0m0-1h0m0 5h0m0 11h0m1-17h0m0 9h0m0 2h0m0-6h0m0 14h0m0-18h0m1 13h0m0-10h0m0 2h0m0 5h0m0-7h0m1 0h0m0 3h0m0-1h0m0-1h0m0 5h0m0 3h0m1-6h0m0 10h0m0-4h0m0-10h0m1 4h0m0-4h0m0 5h0m0 4h0m0-10h0m0 5h0m1-1h0m0 3h0m0-27h0m0 18h0m0-5h0m1 16h0m0-11h0m0 20h0m0-5h0m0-2h0m0-2h0m1-36h0m0 49h0m0-33h0m0 13h0m0 2h0m1 7h0m0-1h0m0-7h0m0-14h0m0 3h0m0-6h0m1-5h0m0 9h0m0 15h0m0-18h0m0 25h0m1-31h0m0 22h0m0 3h0m0-36h0m0 7h0m1 16h0m0-20h0m0 58h0m0-48h0m1 48h0m0-63h0m0 40h0m1-34h0m0 29h0m1-14h0m0-14h0m0 23h0m1-16h0m0 22h0m0 2h0m0-24h0m1-4h0m0-10h0m0 11h0m0 6h0m0 21h0m0-30h0m1 30h0m0-30h0m0 26h0m0-16h0m0 8h0m1-8h0m0 34h0m0-12h0m0-20h0m0 26h0m0 10h0m1 6h0m0-15h0m0 2h0m0 1h0m1-11h0m0 14h0m0-3h0m0-1h0m0-5h0m0 11h0m1 1h0m0-4h0m0 4h0m0 6h0m0-5h0m1 0h0m0 4h0m0 4h0m0-4h0m0-2h0m0-8h0m1-3h0m0 24h0m0-18h0m0 2h0m0-2h0m1-2h0m0 8h0m0 11h0m0-19h0m0 4h0m0-6h0m1 2h0m0 6h0m0-8h0m0 7h0m0-6h0m1 11h0m0-10h0m0 10h0m0-7h0m0-20h0m1 26h0m0 10h0m0-36h0m0-9h0m0 25h0m1-3h0m0-4h0m0 15h0m0-17h0m0 15h0m0-2h0m1 3h0m0-8h0m0-18h0m0 21h0m0 5h0m1-7h0m0 1h0m0 4h0m0-15h0m0 6h0m0 9h0m1-7h0m0-5h0m0 15h0m0 1h0m0-9h0m1 2h0m0 3h0m0-4h0m0 6h0m0-20h0m0 10h0m1-3h0m0 8h0m0-7h0m0 19h0m0-12h0m1-7h0m0 6h0m0-4h0m0 13h0m0-11h0m0-5h0m1-1h0m0 4h0m0 4h0m0-12h0m0 13h0m1-2h0m0-3h0m0-2h0m0-3h0m0 11h0m0-12h0m1 1h0m0 19h0m0-19h0m0 17h0m0-29h0m1-6h0m0 43h0m0-28h0m0 23h0m0-8h0m0-4h0m1 5h0m0-30h0m0 19h0m0-5h0m0-11h0m1 13h0m0 12h0m0-7h0m0 1h0m0-17h0m0 32h0m1-23h0m0 26h0m0-25h0m0 4h0m0-13h0m1 12h0m0-4h0m0 9h0m0-7h0m0 1h0m0 1h0m1 1h0m0-4h0m0 9h0m0-7h0m0-9h0m1 2h0m0 3h0m0 20h0m0-4h0m0 3h0m0-9h0m1-3h0m0-10h0m0 13h0m0 1h0m0-19h0m1 16h0m0 19h0m0-27h0m0 16h0m0-14h0m0-12h0m1 6h0m0 14h0m0-5h0m0 6h0m0-20h0m1 4h0m0 4h0m0-4h0m0-5h0m0 12h0m0-8h0m1-6h0m0 12h0m0-10h0m0 4h0m0 10h0m1-6h0m0 8h0m0-12h0m0 9h0m0-5h0m0 1h0m1-13h0m0 7h0m0 3h0m0-10h0m0 15h0m1-9h0m0 1h0m0 1h0m0-3h0m0 10h0m0-15h0m1 7h0m0-1h0m0 1h0m0 1h0m0-17h0m1 18h0m0 5h0m0-2h0m0 15h0m0-21h0m1 6h0m0-2h0m0 3h0m0-9h0m0-8h0m0 17h0m1-12h0m0 2h0m0-1h0m0 3h0m0-4h0m1-2h0m0 10h0m0 14h0m0-20h0m0 7h0m0-12h0m1 11h0m0-4h0m0 16h0m0-17h0m0 1h0m1-8h0m0 7h0m0-1h0m0 1h0m0 14h0m0-18h0m1 4h0m0-2h0m0 6h0m0-2h0m1-2h0m0-3h0m0-5h0m0 6h0m0-2h0m0 8h0m1-16h0m0 3h0m0 3h0m0 13h0m0-11h0m1 11h0m0-6h0m0 2h0m0 6h0m0-8h0m0-9h0m1 15h0m0-10h0m0 7h0m0 1h0m0-2h0m1-2h0m0 8h0m0 4h0m0-3h0m0 14h0m0 2h0m1-14h0m0-5h0m0 3h0m0 2h0m0 2h0m1 1h0m0-4h0m0 2h0m0-2h0m0-4h0m1-36h0m0 53h0m0-19h0m0 19h0m0-2h0m1-9h0m0 8h0m0-16h0m0 15h0m0-12h0m0 10h0m1-5h0m0 17h0m0 2h0m0-13h0m0 17h0m1-29h0m0 15h0m0 3h0m0-15h0m0 15h0m0 1h0m1-9h0m0 5h0m0-1h0m0-4h0m1 7h0m0-11h0m0 12h0m0-6h0m0 3h0m0-10h0m1 13h0m0-21h0m0 20h0m0-8h0m0 1h0m1-3h0m0 25h0m0 6h0m0-20h0m0-6h0m1 24h0m0-28h0m0-20h0m0 23h0m0-7h0m1 16h0m0-31h0m0 22h0m0-2h0m0 6h0m1-4h0m0-4h0m0 23h0m0-33h0m0 3h0m1 18h0m0 18h0m0-18h0m0 15h0m0-65h0m0 15h0m1 22h0m0 9h0m0-25h0m0 7h0m0-20h0m1 59h0m0-37h0m0 26h0m0-42h0m0 51h0m0-9h0m1-2h0m0-10h0m0-2h0m0-17h0m0 12h0m1-3h0m0-1h0m0 10h0m0-17h0m0 15h0m0-12h0m1 0h0m0 11h0m0-14h0m0 3h0m0 1h0m1 1h0m0-3h0m0-3h0m0 20h0m0-25h0m1 10h0m0-1h0m0 6h0m0-8h0m1 12h0m0 5h0m0-20h0m0 5h0m0 9h0m0-33h0m1 23h0m0-4h0m0 9h0m0-3h0m0 20h0m1-53h0m0 74h0m0-24h0m0-15h0m0 9h0m0-14h0m1 4h0m0-13h0m0 24h0m0-20h0m0 24h0m1 4h0m0-16h0m0-23h0m0 19h0m0 27h0m1-34h0m0 23h0m0-20h0m0-24h0m0 23h0m1 6h0m0 18h0m0 12h0m0-23h0m0-33h0m0 42h0m1-16h0m0 11h0m0-17h0m0-8h0m0-4h0m1 6h0m0-6h0m0-1h0m0-3h0m0 16h0m0-22h0m1 2h0m0 37h0m0-45h0m0 44h0m0-31h0m1-5h0m0-1h0m0-5h0m0 2h0m1 32h0m0-28h0m1 20h0m0-23h0m0-6h0m1 40h0m1-27h0m0-6h0m0-6h0m0 1h0m0 11h0m1 32h0m1-45h0m0 38h0m0 1h0m1-12h0m0-19h0m0 6h0m0-2h0m0-3h0m1 2h0m0 14h0m0 20h0m0-20h0m0 19h0m0 8h0m1-1h0m0-8h0m0-3h0m0-2h0m0 5h0m1 8h0m0-12h0m0 6h0m0 5h0m0-18h0m0 16h0m1-13h0m0 16h0m0-3h0m0-1h0m1 2h0m0-4h0m0-15h0m0 17h0m0 15h0m0-5h0m1-20h0m0-16h0m0 47h0m0-24h0m0-25h0m1 38h0m0-3h0m0-19h0m0 21h0m0 6h0m0-13h0m1 12h0m0-4h0m0-18h0m0 10h0m0-1h0m1-3h0m0 3h0m0 1h0m0-4h0m0 8h0m0-11h0m1 3h0m0-5h0m0 7h0m0-14h0m0 11h0m1 3h0m0-10h0m0 12h0m0-16h0m0-4h0m0 20h0m1 2h0m0-11h0m0-2h0m0 11h0m1 2h0m0 4h0m0-15h0m0 7h0m0 12h0m1-18h0m0-5h0m0 5h0m0 16h0m0-23h0m0 10h0m1 1h0m0-8h0m0 13h0m0 4h0m0-6h0m1-14h0m0 13h0m0 10h0m0-15h0m0 10h0m0-8h0m1 3h0m0-4h0m0 7h0m0-12h0m0-1h0m1 3h0m0 5h0m0-2h0m0-5h0m1 8h0m0 11h0m0 20h0m0-37h0m0-14h0m1 18h0m0 4h0m0 9h0m0-9h0m0-13h0m0-10h0m1 12h0m0 3h0m0-8h0m0 1h0m0 23h0m1-10h0m0 8h0m0 3h0m0-16h0m0 2h0m1-6h0m0 5h0m0-2h0m0 7h0m1-19h0m0 8h0m0 6h0m0-4h0m0 7h0m0-6h0m1 0h0m0 7h0m0-23h0m0 23h0m1-14h0m0 13h0m0-3h0m0-7h0m0 12h0m0-20h0m1 7h0m0 4h0m0-12h0m0 16h0m0-14h0m1 8h0m0-4h0m0 5h0m0 3h0m0-2h0m0-8h0m1 6h0m0 3h0m0 2h0m0 8h0m0-20h0m1 7h0m0 10h0m0-7h0m0-4h0m0 6h0m0-3h0m1-1h0m0-3h0m0 2h0m0-5h0m0-1h0m1 4h0m0 3h0m0-8h0m0-5h0m0 8h0m1-2h0m0-3h0m0 12h0m0-4h0m0-6h0m1 4h0m0-6h0m0 7h0m0-11h0m0 7h0m0 7h0m1 5h0m0-15h0m0 10h0m0 2h0m0 7h0m1 13h0m0-40h0m0 33h0m0-11h0m0 36h0m0-29h0m1-2h0m0 9h0m0-52h0m0 15h0m0 8h0m1-21h0m0 27h0m0 12h0m0-16h0m0-4h0m0 12h0m1-11h0m0 6h0m0 4h0m0 10h0m0-7h0m1 1h0m0-10h0m0 12h0m0-13h0m0-2h0m0 11h0m1 3h0m0 6h0m0-11h0m0 5h0m0-1h0m1 4h0m0-5h0m0-28h0m0 26h0m0 8h0m1-14h0m0 11h0m0-8h0m0 2h0m0 12h0m1 21h0m0-29h0m0 37h0m0-54h0m0 40h0m0-14h0m1-6h0m0 13h0m0-35h0m0 31h0m0-16h0m1-4h0m0-17h0m0 9h0m0-7h0m0 9h0m0 29h0m1-25h0m0 8h0m0-5h0m0 1h0m0-8h0m1 19h0m0-13h0m0 3h0m0 7h0m0-5h0m0-4h0m1 3h0m0 1h0m0 9h0m0-12h0m0 6h0m1 16h0m0-44h0m0 41h0m0-28h0m0 17h0m0-1h0m1-13h0m0 9h0m0 4h0m0-4h0m0-10h0m1 16h0m0-20h0m0 5h0m0 1h0m0 4h0m0 9h0m1-3h0m0-5h0m0-2h0m0 1h0m0 5h0m1 3h0m0-18h0m0 24h0m0-7h0m0 8h0m0-15h0m1 11h0m0-7h0m0-5h0m0 27h0m0-9h0m1 7h0m0-4h0m0 1h0m0-4h0m0-15h0m0 13h0m1-4h0m0-18h0m0 22h0m0 10h0m0-36h0m1 26h0m0 27h0m0-30h0m0-8h0m0 23h0m0-33h0m1 17h0m0-21h0m0 19h0m0 15h0m0 1h0m1 1h0m0-12h0m0 2h0m0 4h0m0 2h0m1 5h0m0-8h0m0 6h0m0-4h0m0-10h0m1 9h0m0-7h0m0 3h0m0 7h0m0-10h0m0 7h0m1-5h0m0 3h0m0-8h0m0 3h0m0 3h0m1 4h0m0-17h0m0 13h0m0-2h0m0 1h0m0 2h0m1 6h0m0-5h0m0 3h0m0-12h0m0-8h0m1 18h0m0-4h0m0-5h0m0 11h0m0-2h0m1-13h0m0 5h0m0 9h0m0-6h0m1 0h0m0 12h0m0-12h0m0-2h0m0-2h0m0 2h0m1 4h0m0-1h0m0-7h0m0-14h0m0 23h0m1-12h0m0 8h0m0 18h0m0-23h0m0 7h0m1 1h0m0-7h0m0 9h0m0 1h0m0-14h0m1-1h0m0-2h0m0 5h0m0 4h0m0-7h0m0-10h0m1-17h0m0 19h0m0-12h0m0 45h0m0-54h0m1 46h0m0-50h0m0 38h0m0 22h0m0-16h0m0-7h0m1 10h0m0-3h0m0-20h0m0 28h0m0 1h0m1-14h0m0 1h0m0-29h0m0 23h0m0-3h0m1 3h0m0 33h0m0-23h0m0 26h0m0-26h0m0 29h0m1-48h0m0 15h0m0-9h0m0-1h0m0 9h0m1 23h0m0-13h0m0-12h0m0 17h0m0-13h0m0 8h0m1-15h0m0 1h0m0 2h0m0-3h0m0-3h0m1 6h0m0-1h0m0-5h0m0 4h0m0 1h0m0 2h0m1 1h0m0 2h0m0-8h0m0 2h0m0 4h0m1-10h0m0-1h0m0 6h0m0 6h0m0-7h0m0 2h0m1-4h0m0 3h0m0-6h0m0 14h0m0-7h0m1 2h0m0-4h0m0 6h0m0 4h0m0-8h0m1-12h0m0 1h0m0 13h0m0-3h0m0-2h0m1 13h0m0-15h0m0-4h0m0 9h0m0 10h0m0-2h0m1-13h0m0 6h0m0-2h0m0-5h0m0 3h0m1 2h0m0 9h0m0-19h0m0 10h0m1-5h0m0 9h0m0-12h0m0 6h0m0 4h0m1 2h0m0-17h0m0 11h0m0-6h0m0 17h0m0 2h0m1-18h0m0 26h0m0-41h0m0 40h0m0-38h0m1 2h0m0-14h0m0 21h0m0 31h0m0-29h0m0-18h0m1 3h0m0-10h0m0 9h0m0 2h0m0 26h0m1-38h0m0-2h0m0 2h0m0 40h0m0-22h0m1-13h0m0-1h0m1 0h0m0-2h0m2-3h0m0 12h0m0-3h0m0-8h0m0 5h0m0 37h0m1-30h0m0 2h0m0-12h0m0 27h0m0-10h0m1-11h0m0 6h0m0 9h0m0-3h0m0 23h0m0-11h0m1 13h0m0 1h0m0-8h0m0 3h0m0 8h0m1-7h0m0-7h0m0 7h0m0 9h0m0-6h0m0 7h0m1-1h0m0-11h0m0 3h0m0-5h0m0 14h0m1-3h0m0 6h0m0-12h0m0 12h0m0 1h0m1-12h0m0 2h0m0 1h0m0-7h0m0 7h0m1 5h0m0-17h0m0 17h0m0-12h0m0 7h0m1-2h0m0 12h0m0-5h0m0 1h0m0-8h0m1 4h0m0-5h0m0 7h0m0-3h0m0-5h0m0 10h0m1-1h0m0-14h0m0 12h0m0-24h0m0 12h0m1 0h0m0 11h0m0-8h0m0 4h0m0 19h0m0-13h0m1-4h0m0-10h0m0 7h0m0 14h0m0-16h0m1 2h0m0-6h0m0 2h0m0 10h0m0 1h0m0-5h0m1 2h0m0-6h0m0 3h0m0-2h0m0-5h0m1 5h0m0 1h0m0-7h0m0-2h0m0 2h0m0 13h0m1-11h0m0 2h0m0-8h0m0 22h0m0-16h0m1-1h0m0-2h0m0 5h0m0-2h0m0 9h0m1-10h0m0 10h0m0-4h0m0-11h0m0 3h0m1 0h0m0-5h0m0 4h0m0 1h0m0 6h0m1-13h0m0 13h0m0-10h0m0 3h0m0-8h0m1 15h0m0-12h0m0 11h0m0-2h0m0-14h0m0 1h0m1 8h0m0-8h0m0 6h0m0 3h0m0-7h0m1 14h0m0 1h0m0 12h0m0-22h0m0 10h0m0-3h0m1-5h0m0 1h0m0-9h0m0 8h0m0-17h0m1 36h0m0-31h0m0 11h0m0-12h0m0 11h0m1-16h0m0 5h0m0 6h0m0 2h0m0-3h0m1 1h0m0 2h0m0-2h0m0-7h0m0 9h0m0 4h0m1-18h0m0 11h0m0-2h0m0 4h0m0 3h0m1-10h0m0-2h0m0 11h0m0 1h0m0-5h0m0-2h0m1 6h0m0-12h0m0 6h0m0 11h0m0-7h0m1-3h0m0 9h0m0-16h0m0 22h0m0-20h0m1 8h0m0 13h0m0-4h0m0 10h0m0-1h0m1-2h0m0-18h0m0 4h0m0 9h0m0-5h0m0 3h0m1-13h0m0 12h0m0-6h0m0-1h0m0-1h0m1-3h0m0 9h0m0 9h0m0-13h0m0 15h0m1-10h0m0-2h0m0 4h0m0-2h0m0 10h0m1-3h0m0 2h0m0-17h0m0 10h0m0 4h0m0 3h0m1-6h0m0 1h0m0 2h0m0 6h0m0-1h0m1 3h0m0 2h0m0-12h0m0 6h0m0-6h0m1 4h0m0 1h0m0 1h0m0-2h0m0-12h0m0 9h0m1 10h0m0-16h0m0 16h0m0 12h0m0-33h0m1 8h0m0 1h0m0-4h0m0 21h0m0 1h0m0-21h0m1 22h0m0-32h0m0 17h0m0 21h0m0-20h0m1 3h0m0-5h0m0 15h0m0-7h0m0-15h0m0 10h0m1 14h0m0-28h0m0 17h0m0-8h0m0-13h0m1-10h0m0 24h0m0 26h0m0-7h0m0 8h0m0 2h0m1-35h0m0 2h0m0 12h0m0-25h0m1-20h0m0 30h0m0-17h0m0 21h0m0 28h0m0-23h0m1 20h0m0-8h0m0-11h0m0 9h0m0-3h0m1-13h0m0 5h0m0-2h0m0 10h0m0-10h0m1 6h0m0-8h0m0 1h0m0 1h0m0-10h0m1 9h0m0-3h0m0 3h0m0-1h0m0-6h0m0-5h0m1 11h0m0 3h0m0-1h0m0-9h0m1 12h0m0 5h0m0 8h0m0-15h0m0-2h0m0 2h0m1-1h0m0-1h0m0 4h0m0-5h0m0 6h0m1-4h0m0-16h0m0 12h0m0 2h0m0 1h0m0-1h0m1-8h0m0 13h0m0-5h0m0 2h0m0-9h0m1 4h0m0 8h0m0 9h0m0-19h0m0-4h0m0 14h0m1-16h0m0 25h0m0 5h0m0-23h0m1 10h0m0-12h0m0 41h0m0-40h0m0 7h0m0-20h0m1 14h0m0 27h0m0-43h0m0 21h0m0-16h0m1 31h0m0-18h0m0-8h0m0-1h0m0 3h0m0 24h0m1-11h0m0 7h0m0-14h0m0 20h0m0-32h0m1 22h0m0-14h0m0 14h0m0-27h0m0 3h0m0 32h0m1 1h0m0-20h0m0 21h0m0-15h0m0-13h0m1 23h0m0-6h0m0-6h0m0-10h0m0 4h0m1 21h0m0-2h0m0-15h0m0-10h0m0 17h0m1 2h0m0-6h0m0-4h0m0 3h0m0-3h0m1 6h0m0-12h0m0 1h0m0 2h0m0 2h0m1 4h0m0 3h0m0-9h0m0 3h0m0-11h0m1 12h0m0-10h0m0-4h0m0 5h0m0 9h0m1-5h0m0 4h0m0-3h0m0 10h0m0-7h0m1-2h0m0-3h0m0 2h0m0 1h0m0 2h0m1-9h0m0 10h0m0-4h0m0 2h0m0 6h0m1-12h0m0-3h0m0 5h0m0 1h0m0-2h0m1-4h0m0 12h0m0-7h0m0-7h0m0 12h0m0-10h0m1 17h0m0-18h0m0-5h0m0 6h0m0 2h0m1 9h0m0 1h0m0-10h0m0 5h0m0-8h0m1 8h0m0-6h0m0 2h0m0 3h0m0 2h0m1-7h0m0 19h0m0-30h0m0 18h0m0-6h0m0-10h0m1 21h0m0-3h0m0-12h0m0 15h0m0-7h0m1 0h0m0-3h0m0 3h0m0-5h0m0-1h0m0-6h0m1-5h0m0 12h0m0-9h0m0-9h0m1 5h0m0 16h0m0-25h0m0 15h0m0-18h0m0 9h0m1-14h0m0 2h0m0 39h0m0-3h0m1-32h0m0 46h0m0-30h0m0-13h0m1-6h0m0 11h0m0 29h0m0-32h0m1 31h0m1-22h0m1-4h0m0-9h0m0-5h0m0 12h0m0-13h0m1 36h0m0-31h0m0 27h0m0-28h0m0 16h0m1-6h0m0-3h0m0 1h0m0 3h0m0 10h0m0-9h0m1 5h0m0 25h0m0-6h0m0 15h0m0-3h0m1-5h0m0 7h0m0-13h0m0 7h0m0-9h0m1 16h0m0-11h0m0-7h0m0 12h0m1-8h0m0 2h0m0 7h0m0 8h0m0-3h0m0-1h0m1-2h0m0-6h0m0-2h0m0 13h0m0-9h0m1-1h0m0-1h0m0 11h0m0 1h0m0-13h0m0 5h0m1 0h0m0-10h0m0 14h0m0 5h0m0-5h0m1-14h0m0 11h0m0-5h0m0-9h0m1 18h0m0-8h0m0 1h0m0 3h0m0-2h0m0 12h0m1-14h0m0 11h0m0-14h0m0 6h0m0 11h0m1-8h0m0-9h0m0 14h0m0 14h0m0-18h0m0-2h0m1 1h0m0-4h0m0-15h0m0 3h0m0-2h0m1 18h0m0-23h0m0 35h0m0-4h0m0-3h0m0-7h0m1-3h0m0 16h0m0-14h0m0-11h0m0 6h0m1 0h0m0-6h0m0-2h0m0 15h0m0-4h0m0 9h0m1-4h0m0-2h0m0 8h0m0-9h0m1-2h0m0 8h0m0-4h0m0-8h0m0 10h0m1-3h0m0-1h0m0-5h0m0-3h0m0 9h0m1-1h0m0-5h0m0 5h0m0-6h0m0 11h0m0-4h0m1-16h0m0 11h0m0 8h0m0-14h0m0 6h0m1 1h0m0-2h0m0-16h0m0 21h0m0 6h0m0-16h0m1 0h0m0 17h0m0-6h0m0-22h0m0 10h0m1-8h0m0 19h0m0-4h0m0 16h0m0-17h0m0-11h0m1 35h0m0-18h0m0 17h0m0-15h0m0 13h0m1-54h0m0 39h0m0 14h0m0-13h0m0-15h0m0 2h0m1 25h0m0-34h0m0 36h0m0-39h0m0 50h0m1-24h0m0-20h0m0 5h0m0 9h0m0-12h0m0 12h0m1-12h0m0-3h0m0-1h0m0 17h0m0-16h0m1 0h0m0 7h0m0-1h0m0 6h0m0-1h0m1-5h0m0-2h0m0 6h0m0 11h0m0-15h0m1 18h0m0-24h0m0 4h0m0 15h0m0-17h0m1 14h0m0 12h0m0-29h0m0 10h0m0 7h0m1-15h0m0 15h0m0-17h0m0-4h0m0 19h0m0-2h0m1-10h0m0 5h0m0 12h0m0-19h0m0 10h0m1-12h0m0 20h0m0-14h0m0-1h0m0 15h0m1 9h0m0-27h0m0-5h0m0 12h0m0-5h0m1 15h0m0 3h0m0-26h0m0-3h0m0-3h0m0 14h0m1 10h0m0 13h0m0-23h0m0-5h0m0 3h0m1-1h0m0 11h0m0-15h0m0-2h0m0-7h0m0 8h0m1-2h0m0 22h0m0-3h0m0-15h0m1 6h0m0 7h0m0-1h0m0-11h0m0 18h0m0-18h0m1 0h0m0-18h0m0 22h0m0 22h0m0-40h0m1 15h0m0 4h0m0 9h0m0-14h0m0 15h0m0-5h0m1 1h0m0-25h0m0 6h0m0 28h0m0-18h0m1 6h0m0-9h0m0-3h0m0 8h0m0-15h0m0 1h0m1 19h0m0-8h0m0 8h0m0 3h0m0-2h0m1-2h0m0-10h0m0 7h0m0 1h0m1-8h0m0-1h0m0-6h0m0 7h0m0-2h0m1 13h0m0-7h0m0-6h0m0 8h0m0-19h0m1 8h0m0 6h0m0-6h0m0 5h0m0 5h0m1-3h0m0 1h0m0-8h0m0 8h0m0-1h0m0 7h0m1-1h0m0-6h0m0-1h0m0-2h0m0 1h0m1 2h0m0 9h0m0-10h0m0 14h0m0-11h0m0-2h0m1-6h0m0 13h0m0-4h0m0 2h0m0 10h0m1-15h0m0 9h0m0-7h0m0 12h0m0-11h0m0-1h0m1 4h0m0-13h0m0 12h0m0-3h0m0 18h0m1-17h0m0 15h0m0-2h0m0-1h0m0-3h0m0-14h0m1 13h0m0-1h0m0 5h0m0-3h0m0 11h0m1-13h0m0 14h0m0 6h0m0-9h0m0-7h0m1 11h0m0 10h0m0-22h0m0 25h0m0-29h0m1-8h0m0 10h0m0-2h0m0-1h0m0-26h0m1-7h0m0 38h0m0 7h0m0 2h0m1-22h0m0 6h0m0 8h0m0-10h0m0 1h0m0 2h0m1 6h0m0-1h0m0-10h0m0 3h0m0 4h0m1 8h0m0-2h0m0-2h0m0 1h0m0-7h0m0 1h0m1 17h0m0-13h0m0-2h0m0 10h0m0 3h0m1-9h0m0-10h0m0 9h0m0-6h0m0-3h0m1 1h0m0 11h0m0-4h0m0 5h0m0 2h0m1-13h0m0 17h0m0-9h0m0 1h0m1-6h0m0 38h0m0-21h0m0-9h0m1-9h0m0-1h0m0 24h0m0-8h0m0 15h0m1-31h0m0 10h0m0-7h0m0 7h0m0 11h0m0 7h0m1-39h0m0 38h0m0-5h0m0-27h0m0 22h0m1-14h0m0-8h0m0 1h0m0 5h0m0 3h0m0-6h0m1 6h0m0-3h0m0 6h0m0 1h0m0 6h0m1-18h0m0 8h0m0-11h0m0 22h0m0-8h0m1 4h0m0-5h0m0 3h0m0-2h0m0-3h0m1-10h0m0 6h0m0 10h0m0-5h0m0-12h0m1 24h0m0-9h0m0-7h0m0 7h0m0-11h0m1 11h0m0-4h0m0-7h0m0-6h0m0 3h0m0 11h0m1-9h0m0 13h0m0-4h0m0-9h0m0 16h0m1-17h0m0 15h0m0-12h0m0 4h0m0-4h0m0 2h0m1 23h0m0-18h0m0-13h0m0 20h0m0-24h0m1 15h0m0 21h0m0-49h0m0 25h0m0 1h0m0-3h0m1-13h0m0 27h0m0-22h0m0 13h0m1 17h0m0-44h0m0 19h0m0 15h0m0-5h0m0 9h0m1-29h0m0 40h0m0-16h0m0-6h0m0-5h0m1 14h0m0-1h0m0-21h0m0-10h0m0 31h0m0-6h0m1 1h0m0 3h0m0-18h0m0 36h0m0-12h0m1-11h0m0-7h0m0-1h0m0-3h0m0 9h0m1 0h0m0-7h0m0-10h0m0 20h0m1 3h0m0-30h0m0 11h0m0-14h0m0 24h0m0 5h0m1-15h0m0 34h0m0-36h0m0 17h0m0 1h0m1-8h0m0 13h0m0-6h0m0-27h0m0 45h0m0-25h0m1 31h0m0-61h0m0 42h0m0-7h0m0-11h0m1 2h0m0-14h0m0-3h0m0 13h0m0-4h0m0 14h0m1-26h0m0 13h0m0 12h0m0-5h0m1 8h0m0-3h0m0 2h0m0-11h0m0-5h0m0 10h0m1-7h0m0 16h0m0-6h0m0 3h0m0-7h0m1 11h0m0-4h0m0 1h0m0 3h0m0 4h0m0-11h0m1 11h0m0-6h0m0 11h0m0 1h0m0-2h0m1 0h0m0-11h0m0 12h0m0-1h0m0 1h0m0-6h0m1-3h0m0 11h0m0-2h0m0-9h0m1 8h0m0 2h0m0 15h0m0-11h0m0-11h0m0 12h0m1 8h0m0-10h0m0 2h0m0-7h0m0 5h0m1-2h0m0-8h0m0 12h0m0 3h0m0-6h0m0-2h0m1 9h0m0-11h0m0 13h0m0-4h0m0-9h0m1-6h0m0 11h0m0-8h0m0 6h0m0 5h0m0-3h0m1-7h0m0-6h0m0 8h0m0-6h0m1-1h0m0 15h0m0 1h0m0-6h0m0-8h0m0-2h0m1 12h0m0-2h0m0 4h0m0-3h0m0-18h0m1 15h0m0 6h0m0-1h0m0 7h0m0-19h0m0 8h0m1-21h0m0 4h0m0 27h0m0 6h0m0 3h0m1-31h0m0-30h0m0 49h0m0 4h0m0-4h0m0 12h0m1-22h0m0 19h0m0-29h0m0 18h0m0 4h0m1 0h0m0-15h0m0 28h0m0-39h0m0 5h0m0-3h0m1 30h0m0-14h0m0-19h0m0 12h0m0 21h0m1-22h0m0 9h0m0-1h0m0-1h0m0 16h0m0-9h0m1 4h0m0-3h0m0-15h0m0-5h0m0 4h0m1-3h0m0 8h0m0 1h0m0 4h0m0-14h0m0 6h0m1-3h0m0 1h0m0-11h0m0 17h0m0-4h0m1 5h0m0-2h0m0-9h0m0 6h0m0 12h0m0-9h0m1-7h0m0 1h0m0 3h0m0-6h0m0 5h0m1-1h0m0-4h0m0 1h0m0 14h0m0-9h0m0-9h0m1 6h0m0-7h0m0 11h0m0-9h0m0 6h0m1 2h0m0-3h0m0-9h0m0 20h0m0-6h0m0 9h0m1-3h0m0-4h0m0 3h0m0-5h0m0-26h0m1 46h0m0-25h0m0-28h0m0-4h0m0 55h0m0-14h0m1-19h0m0 13h0m0 4h0m0 4h0m0 8h0m1-31h0m0 13h0m0 13h0m0-19h0m0-3h0m0 6h0m1-2h0m0 16h0m0-17h0m0 8h0m0 2h0m1 4h0m0-11h0m0-28h0m0 32h0m0-2h0m0 1h0m1 0h0m0-20h0m0 8h0m0-18h0m0 3h0m1 56h0m0-49h0m0 22h0m0-1h0m0 33h0m1-26h0m0-38h0m0 11h0m0 17h0m0 28h0m0-19h0m1-13h0m0-5h0m0 26h0m0-18h0m0 28h0m1-35h0m0 13h0m0-15h0m0 1h0m0 30h0m0-27h0m1-17h0m0 49h0m0-6h0m0-37h0m0 26h0m1-9h0m0 5h0m0-3h0m0 2h0m0-23h0m0 15h0m1 3h0m0-6h0m0 9h0m0 5h0m0 2h0m1-29h0m0 24h0m0 6h0m0-21h0m0-2h0m1-2h0m0 40h0m0-19h0m0-39h0m0 40h0m1 3h0m0-21h0m0 37h0m0-49h0m0-1h0m0 32h0m1 7h0m0-16h0m0 3h0m0-4h0m0-9h0m1 34h0m0-26h0m0 18h0m0-25h0m0 17h0m0 9h0m1-24h0m0-3h0m0 16h0m0-25h0m0 21h0m1 0h0m0-6h0m0 2h0m0 4h0m0-20h0m0 16h0m1-8h0m0 8h0m0 2h0m0-1h0m0 3h0m1-14h0m0 14h0m0-8h0m0-3h0m0 14h0m0-15h0m1 9h0m0-2h0m0 3h0m0-11h0m0 14h0m1-3h0m0-8h0m0-12h0m0 7h0m0-1h0m0 14h0m1-14h0m0 9h0m0 1h0m0-19h0m0 7h0m1 8h0m0 8h0m0-8h0m0-4h0m0 4h0m0-7h0m1 11h0m0-7h0m0-2h0m0 7h0m0 2h0m1-12h0m0 8h0m0-1h0m0 7h0m0-7h0m1-1h0m0 1h0m0-1h0m0 3h0m0-3h0m1 4h0m0-12h0m0 27h0m0-6h0m0-10h0m1 3h0m0-19h0m0 10h0m0-3h0m0 13h0m1-2h0m0 7h0m0-6h0m0-8h0m0 9h0m0-10h0m1 3h0m0 10h0m0-2h0m0-4h0m0-7h0m1 0h0m0 2h0m0-8h0m0-1h0m0-8h0m1 29h0m0-37h0m0 14h0m0-15h0m0 20h0m1-13h0m0-6h0m0-2h0m0 7h0m1 19h0m0-16h0m0-1h0m1 7h0m0-13h0m2 2h0m1 34h0m0-27h0m0-9h0m1 0h0m0-3h0m0 2h0m0 44h0m1-35h0m0-3h0m0 30h0m0-38h0m0 14h0m1-5h0m0 7h0m0 30h0m0-27h0m0 1h0m1 32h0m0 1h0m0 1h0m0-19h0m0 5h0m1-3h0m0 2h0m0 8h0m0 5h0m0-1h0m0 3h0m1-6h0m0 1h0m0-13h0m0 18h0m1-9h0m0 6h0m0-3h0m0-10h0m0 12h0m1-5h0m0-11h0m0-1h0m0 8h0m1-8h0m0 7h0m0 5h0m0 3h0m0-6h0m1 1h0m0-9h0m0 12h0m0-10h0m0 5h0m1 1h0m0-5h0m0 5h0m0 1h0m0 10h0m0-8h0m1 6h0m0-7h0m0 1h0m0 1h0m0 5h0m1-3h0m0-12h0m0 3h0m0 7h0m0-10h0m0 9h0m1 9h0m0-8h0m0-1h0m0 5h0m0-2h0m1-6h0m0 8h0m0-5h0m0-3h0m0 13h0m0-4h0m1 8h0m0-20h0m0-15h0m0 12h0m0 11h0m1-19h0m0 46h0m0-27h0m0-24h0m0 25h0m0-5h0m1 29h0m0-26h0m0-8h0m0 6h0m0-20h0m1 28h0m0-21h0m0 14h0m0-9h0m0 21h0m0 13h0m1-10h0m0-13h0m0-11h0m0 8h0m0-6h0m1 15h0m0-1h0m0-16h0m0-3h0m0 13h0m0-3h0m1 1h0m0-5h0m0 2h0m0 1h0m0 3h0m1 12h0m0-22h0m0 17h0m0-2h0m0 6h0m0-7h0m1 3h0m0-4h0m0 3h0m0-9h0m0 1h0m1 10h0m0-15h0m0 12h0m0-19h0m0 13h0m0-1h0m1 2h0m0-4h0m0-14h0m0 15h0m1 4h0m0 1h0m0-9h0m0-1h0m0 12h0m0-4h0m1 1h0m0 2h0m0-4h0m0 4h0m0 2h0m1-23h0m0 30h0m0-12h0m0-5h0m0 8h0m1 3h0m0-10h0m0-1h0m0-4h0m0 17h0m0-10h0m1-6h0m0-7h0m0 6h0m0 12h0m0-8h0m1 2h0m0-3h0m0-3h0m0-5h0m0 13h0m0-9h0m1 7h0m0 2h0m0-1h0m0-1h0m0-7h0m1 1h0m0 19h0m0-17h0m0-4h0m0 1h0m0-1h0m1 6h0m0-5h0m0 16h0m0-11h0m0 5h0m1 5h0m0-8h0m0-5h0m0 15h0m0-11h0m1-5h0m0 8h0m0-10h0m0 9h0m0-8h0m1 3h0m0-10h0m0-2h0m0 30h0m0-30h0m0-6h0m1 49h0m0-47h0m0 13h0m0 17h0m0-26h0m1 9h0m0 9h0m0-2h0m0-2h0m0-2h0m1 1h0m0 3h0m0-5h0m0-4h0m0-3h0m1 10h0m0 1h0m0 4h0m0-18h0m0 3h0m0 14h0m1 4h0m0-11h0m0 5h0m0-10h0m0-10h0m1 14h0m0 7h0m0-14h0m0-1h0m0 2h0m0 3h0m1 2h0m0-3h0m0 13h0m0-12h0m0 2h0m1-4h0m0 18h0m0-16h0m0-1h0m0 7h0m0-7h0m1 8h0m0-7h0m0 13h0m0-8h0m0-4h0m1 3h0m0-6h0m0 1h0m0 15h0m0-6h0m0-13h0m1 5h0m0-10h0m0 22h0m0-8h0m0-9h0m1 13h0m0-11h0m0 13h0m0-24h0m0 15h0m1 3h0m0 2h0m0-11h0m0 19h0m0-36h0m1 17h0m0-3h0m0 26h0m0-33h0m0 9h0m1 16h0m0-5h0m0 4h0m0 7h0m1-17h0m0-4h0m0-6h0m0 7h0m0-7h0m0 11h0m1 0h0m0-1h0m0 3h0m0-9h0m0 13h0m1-7h0m0 3h0m0-16h0m0 13h0m0 6h0m1-9h0m0 7h0m0-2h0m0 8h0m0 9h0m1-27h0m0 12h0m0 7h0m0 8h0m0-3h0m1-2h0m0 29h0m0-20h0m0-30h0m0 11h0m1-14h0m0 18h0m0 14h0m0-21h0m0 19h0m0-6h0m1 0h0m0 1h0m0 12h0m0-19h0m0 16h0m1-9h0m0 10h0m0-7h0m0-8h0m0 32h0m0 1h0m1-38h0m0 30h0m0 1h0m0-40h0m0 11h0m1 11h0m0-18h0m0 28h0m0-24h0m0 2h0m1 13h0m0-18h0m0-2h0m0-3h0m0 22h0m1-1h0m0-12h0m0 7h0m0-12h0m0 10h0m0 2h0m1 9h0m0-14h0m0 9h0m0-16h0m0 6h0m1-2h0m0 5h0m0 17h0m0-15h0m0 10h0m0-12h0m1 11h0m0-34h0m0 29h0m0-8h0m1-5h0m0 17h0m0-6h0m0-25h0m0 2h0m1 21h0m0 12h0m0 4h0m0-28h0m0 23h0m1-27h0m0 11h0m0 14h0m0-12h0m0-7h0m0 12h0m1 7h0m0-13h0m0-14h0m0 17h0m1 3h0m0-15h0m0 10h0m0-2h0m0-3h0m0 1h0m1 12h0m0-15h0m0 11h0m0 3h0m0-7h0m1-5h0m0 3h0m0 3h0m0-7h0m0 4h0m1 5h0m0 2h0m0-8h0m0 11h0m1-12h0m0-5h0m0-4h0m0 2h0m0 9h0m0 1h0m1-9h0m0 10h0m0-1h0m0-20h0m0 24h0m1-10h0m0 9h0m0-12h0m0 9h0m0-8h0m0-3h0m1 1h0m0-5h0m0-3h0m0 18h0m0-3h0m1-14h0m0 7h0m0-3h0m0 2h0m0-4h0m0 7h0m1-10h0m0 5h0m0-9h0m0 19h0m0-1h0m1-5h0m0 7h0m0-1h0m0-9h0m0-9h0m0-10h0m1 7h0m0 11h0m0-16h0m0-7h0m0 6h0m1 5h0m0 18h0m1-33h0m0 22h0m1 5h0m0-22h0m0-1h0m1 4h0m0-7h0m0 8h0m0-8h0m1 8h0m0-4h0m0 8h0m0 15h0m0 4h0m1 4h0m0-22h0m0 27h0m0-20h0m0 6h0m1-2h0m0 24h0m0-10h0m0-4h0m0 10h0m1-2h0m0-7h0m0 16h0m0-13h0m0 3h0m1-5h0m0 3h0m0 4h0m0-1h0m0 12h0m1-2h0m0-13h0m0 5h0m0-3h0m0-2h0m0 12h0m1-23h0m0 26h0m0-16h0m0 17h0m0-13h0m1 5h0m0 7h0m0-6h0m0 2h0m0-4h0m1 3h0m0-5h0m0-6h0m0 12h0m0 3h0m1-23h0m0 22h0m0 3h0m0-18h0m0 14h0m0-8h0m1 4h0m0 4h0m0-9h0m0 11h0m0-12h0m1 18h0m0-15h0m0 2h0m0 5h0m0 8h0m0-9h0m1-4h0m0-1h0m0-11h0m0 1h0m0 23h0m1-1h0m0 10h0m0-15h0m0-4h0m0-5h0m0 20h0m1-29h0m0 36h0m0-22h0m0-37h0m0 56h0m1-12h0m0-22h0m0-7h0m0-1h0m0 15h0m0-7h0m1 39h0m0-43h0m0 3h0m0-13h0m0 30h0m1-6h0m0 15h0m0 5h0m0-26h0m0 6h0m0 14h0m1-22h0m0-12h0m0 32h0m0-21h0m0 7h0m1-2h0m0-17h0m0 31h0m0-20h0m0 8h0m0-4h0m1 17h0m0-24h0m0-9h0m0 54h0m0-46h0m1 18h0m0 11h0m0-18h0m0-1h0m0-21h0m0 27h0m1-1h0m0 4h0m0-30h0m0 22h0m0-12h0m1 4h0m0 8h0m0-12h0m0-2h0m0 16h0m1-7h0m0-1h0m0-1h0m0 10h0m0-4h0m1-9h0m0-3h0m0 7h0m0 6h0m0-10h0m1-4h0m0 8h0m0-1h0m0-1h0m0-2h0m1 14h0m0-9h0m0 26h0m0-32h0m0 21h0m0-42h0m1 12h0m0-4h0m0-2h0m0 6h0m0 19h0m1-3h0m0-6h0m0 15h0m0 3h0m0-27h0m0 10h0m1-3h0m0 17h0m0 11h0m0-3h0m0-13h0m1-15h0m0 7h0m0 7h0m0-9h0m0-6h0m1 2h0m0 2h0m0 9h0m0-7h0m1 2h0m0-12h0m0 1h0m0 16h0m0-18h0m0 16h0m1-8h0m0-4h0m0 12h0m0-8h0m0 2h0m1-8h0m0 8h0m0 3h0m0-10h0m0 2h0m0-2h0m1 7h0m0 6h0m0-15h0m0 5h0m0-14h0m1 16h0m0 11h0m0-9h0m0-5h0m0 15h0m0-4h0m1-7h0m0 4h0m0-6h0m0 8h0m0-18h0m1 18h0m0-4h0m0 7h0m0-7h0m0 6h0m1 9h0m0-35h0m0 31h0m0 2h0m0 18h0m1-19h0m0-18h0m0 23h0m0-1h0m0-21h0m0 10h0m1-3h0m0 4h0m0 15h0m0 8h0m0-2h0m1-15h0m0 3h0m0-5h0m0-5h0m0 6h0m0-2h0m1 12h0m0 7h0m0-12h0m0-4h0m0 9h0m1 6h0m0-6h0m0-2h0m0-6h0m0 11h0m0-6h0m1 7h0m0-22h0m0 6h0m0 21h0m0-32h0m1-1h0m0 31h0m0-3h0m0-14h0m0 8h0m0-22h0m1-2h0m0 51h0m0-24h0m0-16h0m0-10h0m1 27h0m0 5h0m0-11h0m0 10h0m0-35h0m0 47h0m1-13h0m0-16h0m0 14h0m0-5h0m0 11h0m1-19h0m0 22h0m0-20h0m0 3h0m0 1h0m1 1h0m0 2h0m0-5h0m0-12h0m0 12h0m1 14h0m0-8h0m0-9h0m0 2h0m0 1h0m0 4h0m1 1h0m0 2h0m0 4h0m0-13h0m0-1h0m1-11h0m0 10h0m0 6h0m0-8h0m0 1h0m0 15h0m1-11h0m0-3h0m0 11h0m0-3h0m1-10h0m0 11h0m0-7h0m0 13h0m0-17h0m1-4h0m0 10h0m0 3h0m0 7h0m0-16h0m1-3h0m0 8h0m0 1h0m0 5h0m0-15h0m0 13h0m1-8h0m0 18h0m0-15h0m0-5h0m1-4h0m0 15h0m0-9h0m0-3h0m0 18h0m1-6h0m0-17h0m0 14h0m0-1h0m0-1h0m1-4h0m0 1h0m0 5h0m0-15h0m0 3h0m1 7h0m0 2h0m0 6h0m0-9h0m0 12h0m0-6h0m1-2h0m0-1h0m0 2h0m0-13h0m0 12h0m1-6h0m0 2h0m0 4h0m0-5h0m0 5h0m0 4h0m1 1h0m0-9h0m0 7h0m0-7h0m0 1h0m1-2h0m0 1h0m0 4h0m0-6h0m0 4h0m0-3h0m1 2h0m0 4h0m0-3h0m1 6h0m0-8h0m0 2h0m0 1h0m0 2h0m0-12h0m1 0h0m0 2h0m0 8h0m0-3h0m0-5h0m1 0h0m0 1h0m0-1h0m0-3h0m0 8h0m0 8h0m1-11h0m0 1h0m0-10h0m0 12h0m0-1h0m1-3h0m0 9h0m0-1h0m0 3h0m0-1h0m0-12h0m1-2h0m0 20h0m0-14h0m0-2h0m1-5h0m0 23h0m0-25h0m0 15h0m0 11h0m0-24h0m1 4h0m0 13h0m0 5h0m0-14h0m0-10h0m1 1h0m0 10h0m0-9h0m0 7h0m0 2h0m1-3h0m0 4h0m0 8h0m0-13h0m0 5h0m1-13h0m0 5h0m0 6h0m0 6h0m0-7h0m0-3h0m1 4h0m0-14h0m0-6h0m0 10h0m0 33h0m1 0h0m0-22h0m0 11h0m0 4h0m0-17h0m0 14h0m1 4h0m0-26h0m0 11h0m0-11h0m0-18h0m1 34h0m0-31h0m0 26h0m0-4h0m0-10h0m0 25h0m1-22h0m0 1h0m0-3h0m0-3h0m0 6h0m1 1h0m0-5h0m0 1h0m0-8h0m0 14h0m0-8h0m1-1h0m0-1h0m0 8h0m0 10h0m1-10h0m0 12h0m0-9h0m0 1h0m0-1h0m1-4h0m0-7h0m0 4h0m0 8h0m1-4h0m0-4h0m0 10h0m0-10h0m0-9h0m0 12h0m1 7h0m0-16h0m0 5h0m0 5h0m1-5h0m0-1h0m0 8h0m0-7h0m0 14h0m0-9h0m1 4h0m0-7h0m0-2h0m0-6h0m0 4h0m1 14h0m0-9h0m0-8h0m0 16h0m0-7h0m0-10h0m1 5h0m0-8h0m0-5h0m0-3h0m0-3h0m1 3h0m0 2h0m0-10h0m0 8h0m0-2h0m1-5h0m0 7h0m0 5h0m0-4h0m0 15h0m1 9h0m0-33h0m0 14h0m0-2h0m1 1h0m1 24h0m0-7h0m0-15h0m0-17h0m0 8h0m1 18h0m0-23h0m0 35h0m0-33h0m1 11h0m0-14h0m0 6h0m0-3h0m0 6h0m0 4h0m1 2h0m0 27h0m0-30h0m0 13h0m0-5h0m1 6h0m0 16h0m0 2h0m0-6h0m0 7h0m0-5h0m1-15h0m0 25h0m0 1h0m0-3h0m0-6h0m1 16h0m0-14h0m0 1h0m0 5h0m0-3h0m1-1h0m0 1h0m0 11h0m0-13h0m0 13h0m1-17h0m0 29h0m0-20h0m0 7h0m0-12h0m0 15h0m1-37h0m0 34h0m0-23h0m0 14h0m0 1h0m1-23h0m0 17h0m0 20h0m0-14h0m0 9h0m0-15h0m1 7h0m0 20h0m0-11h0m0-9h0m0-8h0m1-1h0m0 22h0m0-18h0m0 5h0m0-2h0m0-2h0m1 3h0m0 2h0m0 9h0m0-28h0m0 17h0m1-4h0m0-28h0m0 10h0m0 6h0m0 8h0m0 29h0m1-9h0m0-11h0m0-35h0m0 17h0m0-2h0m1 4h0m0 8h0m0-6h0m0 14h0m0-4h0m0 25h0m1-24h0m0-10h0m0 4h0m0-3h0m0 5h0m1-4h0m0 13h0m0-14h0m0 11h0m0-4h0m0 1h0m1-4h0m0 9h0m0-18h0m0 19h0m1-17h0m0 7h0m0 2h0m0-2h0m0-10h0m0 10h0m1-1h0m0-6h0m0 13h0m0-8h0m0-1h0m1 7h0m0-19h0m0 19h0m0-4h0m0-11h0m0 11h0m1-4h0m0 23h0m0-43h0m0-18h0m0 19h0m1 17h0m0-18h0m0 9h0m0 18h0m0-4h0m0-10h0m1 6h0m0 7h0m0-6h0m0-7h0m0 7h0m1 2h0m0-4h0m0 15h0m0-16h0m0-9h0m1 12h0m0 11h0m0-13h0m0 2h0m0 10h0m0-5h0m1-10h0m0 3h0m0 1h0m0-5h0m1 9h0m0-2h0m0-2h0m0-2h0m1-4h0m0 8h0m0-3h0m0 1h0m0-1h0m1-9h0m0 8h0m0-11h0m0 10h0m0 10h0m0-9h0m1 4h0m0-11h0m0 16h0m0-8h0m0 15h0m1-16h0m0 9h0m0-16h0m0 2h0m0 4h0m0-4h0m1 10h0m0-5h0m0 3h0m0-6h0m0 12h0m1-19h0m0 12h0m0 3h0m0-18h0m0-3h0m0 8h0m1 25h0m0-20h0m0 5h0m0 4h0m1-8h0m0 4h0m0-9h0m0 12h0m0-12h0m0 2h0m1-5h0m0 17h0m0-7h0m0-4h0m1 2h0m0 4h0m0-2h0m0-5h0m0 5h0m0-3h0m1 11h0m0-10h0m0-9h0m0 9h0m1 2h0m0-6h0m0 3h0m0 7h0m0-12h0m0 2h0m1-2h0m0-11h0m0 17h0m0-10h0m0 2h0m1-6h0m0-2h0m0 10h0m0 8h0m0-3h0m0-1h0m1-17h0m0 23h0m0-13h0m0 10h0m0 3h0m1-11h0m0 6h0m0-6h0m0 7h0m0-11h0m0-3h0m1 14h0m0-7h0m0 6h0m0 6h0m0 2h0m1-26h0m0 15h0m0 8h0m0-10h0m0 1h0m0 3h0m1-3h0m0 3h0m0 3h0m0-7h0m0-9h0m1 6h0m0 3h0m0 1h0m0-4h0m0-1h0m1 17h0m0 3h0m0-6h0m0-11h0m0-1h0m1 10h0m0-4h0m0 9h0m0-5h0m0 8h0m0-8h0m1 16h0m0 5h0m0-3h0m0-10h0m0-3h0m1-9h0m0 15h0m0-14h0m0 18h0m0-2h0m0-11h0m1 22h0m0-9h0m0-3h0m0 4h0m0-2h0m1-1h0m0-3h0m0 10h0m0-11h0m0 5h0m0-5h0m1 7h0m0-2h0m0 16h0m0-10h0m0-19h0m1 15h0m0-21h0m0 39h0m0-17h0m0-19h0m0 33h0m1-19h0m0 21h0m0-14h0m0-15h0m0 31h0m1-47h0m0 32h0m0 17h0m0-8h0m0-12h0m0-17h0m1-9h0m0 23h0m0-8h0m0 7h0m1-8h0m0 6h0m0 5h0m0 7h0m0-35h0m0 50h0m1-44h0m0 22h0m0 11h0m0-60h0m0 10h0m1 31h0m0 23h0m0-30h0m0 27h0m0-49h0m0 30h0m1-20h0m0-8h0m0 30h0m0-26h0m0 38h0m1-20h0m0 3h0m0-2h0m0 5h0m0-17h0m0 17h0m1-7h0m0 9h0m0-16h0m0 5h0m0 4h0m1 2h0m0-2h0m0 4h0m0 6h0m0 1h0m0-18h0m1 16h0m0-17h0m0 14h0m0-6h0m0-4h0m1 19h0m0-3h0m0-12h0m0-15h0m0 15h0m1 4h0m0-3h0m0 3h0m0-8h0m1-4h0m0 2h0m0 24h0m0-25h0m0 12h0m0 3h0m1-16h0m0 7h0m0-16h0m0 40h0m0-35h0m1 22h0m0-14h0m0 12h0m0 3h0m0 19h0m0-45h0m1 13h0m0 10h0m0-41h0m0 51h0m0-47h0m1 30h0m0 6h0m0 12h0m0-38h0m0 49h0m0-6h0m1-54h0m0 30h0m0 2h0m0 26h0m0-16h0m1-27h0m0 22h0m0 13h0m0-30h0m0 26h0m0-22h0m1-23h0m0 10h0m0 20h0m0 9h0m0 4h0m1-17h0m0 4h0m0-23h0m0 22h0m0-18h0m0 10h0m1-18h0m0 55h0m0-35h0m0 13h0m0-5h0m1 14h0m0-22h0m0 13h0m0-19h0m0-6h0m0 3h0m1 20h0m0-10h0m0-7h0m0 4h0m0-10h0m1-3h0m0 22h0m0-21h0m0-6h0m0 8h0m0-14h0m1 26h0m0-24h0m0-6h0m0-3h0m0 14h0m1 13h0m0-24h0m0 18h0m0-19h0m1 1h0m0 30h0m1-2h0m0 3h0m1-11h0m0-19h0m0-7h0m1 3h0m0 19h0m0 14h0m1 0h0m0-27h0m0 3h0m0-9h0m0 7h0m0 5h0m1-3h0m0 38h0m0-30h0m0-6h0m1 9h0m0 12h0m0-6h0m0 6h0m0 10h0m0 4h0m1-1h0m0 18h0m0-18h0m0-12h0m0 16h0m1-6h0m0 14h0m0-10h0m0-3h0m0 3h0m0 21h0m1-14h0m0-2h0m0 1h0m0-7h0m0 5h0m1 10h0m0-10h0m0 3h0m0-12h0m0 2h0m0 1h0m1-6h0m0 7h0m0 2h0m0 5h0m0-13h0m1 7h0m0-5h0m0 17h0m0-24h0m0 7h0m0-1h0m1 6h0m0 6h0m0-9h0m0 3h0m0 2h0m1-1h0m0-7h0m0 5h0m0 8h0m0-12h0m0-1h0m1 0h0m0 9h0m0 2h0m0-6h0m0-14h0m1 23h0m0 2h0m0-7h0m0 11h0m0-35h0m0 29h0m1-18h0m0 18h0m0-34h0m0 12h0m0 6h0m1-7h0m0 2h0m0 20h0m0-17h0m0 3h0m0-12h0m1 9h0m0 12h0m0-27h0m0 17h0m0 9h0m1 6h0m0-20h0m0 22h0m0-15h0m0-4h0m0 25h0m1-7h0m0 8h0m0-25h0m0 3h0m0-1h0m1 4h0m0-12h0m0 1h0m0-3h0m0 8h0m0 1h0m1-17h0m0 28h0m0-12h0m0-8h0m0 14h0m1-14h0m0 14h0m0-5h0m0 4h0m0-5h0m0 16h0m1-14h0m0-1h0m0 1h0m0-9h0m0 3h0m1 7h0m0-8h0m0 10h0m0-4h0m0-4h0m0 2h0m1-8h0m0 8h0m0 3h0m0-10h0m0 4h0m1-3h0m0-15h0m0 13h0m0 7h0m0 11h0m1-12h0m0 12h0m0-23h0m0 15h0m0 19h0m1-25h0m0-16h0m0 7h0m0 5h0m0-22h0m0 46h0m1-20h0m0 9h0m0-15h0m0 38h0m0-49h0m1 31h0m0-25h0m0-7h0m0 18h0m0-32h0m0 50h0m1-4h0m0-7h0m0-13h0m0-6h0m1 13h0m0 6h0m0-1h0m0 9h0m0-15h0m0 10h0m1-17h0m0 21h0m0-39h0m0 43h0m0-33h0m1 33h0m0 2h0m0 5h0m0-31h0m0-20h0m0 12h0m1 31h0m0-25h0m0 17h0m0-6h0m0-14h0m1 17h0m0-4h0m0-4h0m0 7h0m0-11h0m0 14h0m1-18h0m0 5h0m0 2h0m0-8h0m0 15h0m1-10h0m0 3h0m0-2h0m0 5h0m0 6h0m1 2h0m0-16h0m0-2h0m0 6h0m0 1h0m1 7h0m0-19h0m0 12h0m0-8h0m0 10h0m1-6h0m0-3h0m0 5h0m0-2h0m0-3h0m1 19h0m0-14h0m0-1h0m0 9h0m0-5h0m1-3h0m0 2h0m0-4h0m0 5h0m0-3h0m1 0h0m0-13h0m0 12h0m0 10h0m0-2h0m0-12h0m1-2h0m0 8h0m0 7h0m0-8h0m0 15h0m1-14h0m0 1h0m0 15h0m0-15h0m0-3h0m1 8h0m0 3h0m0 2h0m0-5h0m0-5h0m1 3h0m0-2h0m0-4h0m0 12h0m0 7h0m0-1h0m1-7h0m0-1h0m0-8h0m0 15h0m1-4h0m0 10h0m0-1h0m0-1h0m0-5h0m0-17h0m1 14h0m0-2h0m0 12h0m0-5h0m0 3h0m1-12h0m0 7h0m0-7h0m0 13h0m0-6h0m0-3h0m1-7h0m0-1h0m0 18h0m0-15h0m0 9h0m1-1h0m0 2h0m0-3h0m0 13h0m0-14h0m0 6h0m1-4h0m0 13h0m0-11h0m0 1h0m0-1h0m1-2h0m0-5h0m0 6h0m0-4h0m0 7h0m0 2h0m1-3h0m0-7h0m0-1h0m1 7h0m0 4h0m0-13h0m0-1h0m0 22h0m1-37h0m0 30h0m0-22h0m0 30h0m0-20h0m1 4h0m0-15h0m0 14h0m0 24h0m0-58h0m0 10h0m1 46h0m0-27h0m0-15h0m0 24h0m0 15h0m1-55h0m0 24h0m0 26h0m0-8h0m0-6h0m0 4h0m1-18h0m0 7h0m0 4h0m0-5h0m0 15h0m1-22h0m0-11h0m0 17h0m0 22h0m0-9h0m1 20h0m0-61h0m0-2h0m0 64h0m0-28h0m0 2h0m1 5h0m0-23h0m0 17h0m0 2h0m0-42h0m1 70h0m0-40h0m0 20h0m0 15h0m0 1h0m0-29h0m1-11h0m0 5h0m0-1h0m0 14h0m0-20h0m1 19h0m0-1h0m0-6h0m0 31h0m0-35h0m1 5h0m0-6h0m0-1h0m0 8h0m0 26h0m1-5h0m0-29h0m0 17h0m0-15h0m0 2h0m0 10h0m1 24h0m0-15h0m0-6h0m0-11h0m0 11h0m1-11h0m0-16h0m0 25h0m0 8h0m0-1h0m0-17h0m1 3h0m0-16h0m0 22h0m0 4h0m0-11h0m1-6h0m0-6h0m0-2h0m0 5h0m0 7h0m0 2h0m1 3h0m0-8h0m0 3h0m0 9h0m0-6h0m1 7h0m0-13h0m0-3h0m0 18h0m0-3h0m1-4h0m0 15h0m0-13h0m0-4h0m0-4h0m1 8h0m0-21h0m0 8h0m0 11h0m0 1h0m0-4h0m1-6h0m0-1h0m0 1h0m0 1h0m1 9h0m0-3h0m0-4h0m0-2h0m0 11h0m0-13h0m1-3h0m0 18h0m0-3h0m0-2h0m1-8h0m0-5h0m0-1h0m0 10h0m0 2h0m0-15h0m1 5h0m0 3h0m0 6h0m0 3h0m0-13h0m1 7h0m0 2h0m0 2h0m0-11h0m0-6h0m0 6h0m1 6h0m0 22h0m0-26h0m0 8h0m0-14h0m1 26h0m0 14h0m0-23h0m0-1h0m0-17h0m0 36h0m1-1h0m0-43h0m0 49h0m0-44h0m0 14h0m1 2h0m0 39h0m0-43h0m0-3h0m0 4h0m0-4h0m1-7h0m0 10h0m0-1h0m0 3h0m0 7h0m1-16h0m0 2h0m0 9h0m0-7h0m0 3h0m1 7h0m0-2h0m0-13h0m0 12h0m0-2h0m1-4h0m0-1h0m0-1h0m0 7h0m0-1h0m0-2h0m1 5h0m0-17h0m0 13h0m0-8h0m0 11h0m1-1h0m0-1h0m0 6h0m0-6h0m0-7h0m1-4h0m0 1h0m0-3h0m0 9h0m1-6h0m0-2h0m0 12h0m0-3h0m0-7h0m0-7h0m1 24h0m0-26h0m0 22h0m0 9h0m0-2h0m1 15h0m0-22h0m0-4h0m0-21h0m0 11h0m0-12h0m1 15h0m0-19h0m0 32h0m0 2h0m0-10h0m1 2h0m0-8h0m0 9h0m0 2h0m0-15h0m0 5h0m1-5h0m0 12h0m0-10h0m0 3h0m1-1h0m0 8h0m0 4h0m0 2h0m1-3h0m0 5h0m0-16h0m0 3h0m0 2h0m1-5h0m0 15h0m0-24h0m0 20h0m0-8h0m0 2h0m1 4h0m0-6h0m0 5h0m0-6h0m0-1h0m1 7h0m0-12h0m0 6h0m0 9h0m0 1h0m0-8h0m1 20h0m0-9h0m0-7h0m0-2h0m0 3h0m1 1h0m0 6h0m0 1h0m0-16h0m0 12h0m0-3h0m1 3h0m0-10h0m0 22h0m0-11h0m0 4h0m1-3h0m0-3h0m0 9h0m0-14h0m0 11h0m0-8h0m1 6h0m0-4h0m0 5h0m0-2h0m1 3h0m0-3h0m0 11h0m0 1h0m0-10h0m0 2h0m1 1h0m0 4h0m0 12h0m0-21h0m0-2h0m1 13h0m0 18h0m0-32h0m0 17h0m0-7h0m1 11h0m0-23h0m0 10h0m0 20h0m0 8h0m1-17h0m0 4h0m0-27h0m0 2h0m0 5h0m1 3h0m0-17h0m0 24h0m0-7h0m0 3h0m1 2h0m0-13h0m0 8h0m0 4h0m0-3h0m1 2h0m0 4h0m0-2h0m0-7h0m0 11h0m1-6h0m0-18h0m0 12h0m0 6h0m0-5h0m0 4h0m1 0h0m0-15h0m0 10h0m0-6h0m0 17h0m1 0h0m0-19h0m0-16h0m0 20h0m0 19h0m0-28h0m1 9h0m0 12h0m0 2h0m0-8h0m0 22h0m1-17h0m0 17h0m0-39h0m0 12h0m0-4h0m0 17h0m1-18h0m0 3h0m0 10h0m0-15h0m0 9h0m1-2h0m0-1h0m0 7h0m0-3h0m0-1h0m1-1h0m0 4h0m0-6h0m0 7h0m0 4h0m0-9h0m1 4h0m0-4h0m0-9h0m0 5h0m0-1h0m1 6h0m0 2h0m0-1h0m0-4h0m0-1h0m1 4h0m0 4h0m0-10h0m0 16h0m0-7h0m1-5h0m0-9h0m0 6h0m0-5h0m0 7h0m0 11h0m1-7h0m0 3h0m0-4h0m0 2h0m0 1h0m1-8h0m0-1h0m0-15h0m0 25h0m0-4h0m0-11h0m1 11h0m0 13h0m0-6h0m0 27h0m0-18h0m1-17h0m0 2h0m0 7h0m0-5h0m0-19h0m0 9h0m1 6h0m0 7h0m0-12h0m0 12h0m0 8h0m1-17h0m0-9h0m0 22h0m0 2h0m0-7h0m0-9h0m1 6h0m0 1h0m0 1h0m0-7h0m0-4h0m1 8h0m0-9h0m0 10h0m0-5h0m0 4h0m0 4h0m1-2h0m0 26h0m0-29h0m0-27h0m0 3h0m1 10h0m0 7h0m0-3h0m0-2h0m0 28h0m0-25h0m1-23h0m0 31h0m0 24h0m0-51h0m0 24h0m1 13h0m0-23h0m0 4h0m0 30h0m0-24h0m0 20h0m1-17h0m0-18h0m0-1h0m0 29h0m0-25h0m1 23h0m0 1h0m0-9h0m0-8h0m0 2h0m1 14h0m0-9h0m0 22h0m0-15h0m0 12h0m1-18h0m0-17h0m0 9h0m0 13h0m0-11h0m0 1h0m1 8h0m0-3h0m0 10h0m0-25h0m0 15h0m1 14h0m0 7h0m0-39h0m0 40h0m0-16h0m0 7h0m1-3h0m0-11h0m0-7h0m0 15h0m0-2h0m1-11h0m0 3h0m0-7h0m0 20h0m0-20h0m0-1h0m1 16h0m0-7h0m0-3h0m0 2h0m0-5h0m1-3h0m0 1h0m0 14h0m0-15h0m0 3h0m0 11h0m1 1h0m0-9h0m0 7h0m0 3h0m1-13h0m0 9h0m0-9h0m0 14h0m0-3h0m0-6h0m1-4h0m0-7h0m0 11h0m0 4h0m0 5h0m1-16h0m0 8h0m0-1h0m0 2h0m1-2h0m0-4h0m0 2h0m1 12h0m0-1h0m0-3h0m0-6h0m0-4h0m0-1h0m1 3h0m0 3h0m0 7h0m0-9h0m0-1h0m1 8h0m0-9h0m0 1h0m0 7h0m0-7h0m1 6h0m0-4h0m0-1h0m0 2h0m0 10h0m1-12h0m0 12h0m0-16h0m0 3h0m0-6h0m0 7h0m1 6h0m0-11h0m0-2h0m0-13h0m0 17h0m1-16h0m0 1h0m0 18h0m0 19h0m0-45h0m1 35h0m0-36h0m0 11h0m0 25h0m1-42h0m0 29h0m0 2h0m0-1h0m1-4h0m1 6h0m0-2h0m0-10h0m0 30h0m1-45h0m1-3h0m0-4h0m0 10h0m0 3h0m1-8h0m0 13h0m0-9h0m0 2h0m0 10h0m1-10h0m0 30h0m0 12h0m0-32h0m0 28h0m0-4h0m1 0h0m0 10h0m0 3h0m0-13h0m0 3h0m1 10h0m0-12h0m0 10h0m0-11h0m0-1h0m0-5h0m1 10h0m0 10h0m0-20h0m0 23h0m0-9h0m1 4h0m0-6h0m0-5h0m0-1h0m0 14h0m0 9h0m1-22h0m0-2h0m0 4h0m0-4h0m0 10h0m1-1h0m0 8h0m0-14h0m0 8h0m0-8h0m0 8h0m1 2h0m0 6h0m0-12h0m0 2h0m0-5h0m1 10h0m0-9h0m0-22h0m0 25h0m0-29h0m0-7h0m1 2h0m0 24h0m0-32h0m0 13h0m0-19h0m1 16h0m0-6h0m0 37h0m0-34h0m0-8h0m0 2h0m1-2h0m0 33h0m0-40h0m0 46h0m0-44h0m1 9h0m0-6h0m0-3h0m1 18h0m0 26h0m0-41h0m0-5h0m0 5h0m1-2h0m0 40h0m0 13h0m0-46h0m1 36h0m0-29h0m0 26h0m0-22h0m0 17h0m0 6h0m1-4h0m0-7h0m0 13h0m0-3h0m0-2h0m1-2h0m0 9h0m0-7h0m0 16h0m0-15h0m0 6h0m1-2h0m0-16h0m0 16h0m0 10h0m0-13h0m1-2h0m0 6h0m0-1h0m0-3h0m0 10h0m1-3h0m0-7h0m0 2h0m0-7h0m1 1h0m0 11h0m0-10h0m0-4h0m0 28h0m0-9h0m1-6h0m0-25h0m0-3h0m0 18h0m1 0h0m0-15h0m0-12h0m0 29h0m0-20h0m0 20h0m1 4h0m0-15h0m0 21h0m0-3h0m0-2h0m1 0h0m0 6h0m0-1h0m0-17h0m0 11h0m0 4h0m1 6h0m0-3h0m0-5h0m0 9h0m0-20h0m1 14h0m0-10h0m0 12h0m0-5h0m0 19h0m0-9h0m1-3h0m0-16h0m0 21h0m0-27h0m0 26h0m1-11h0m0-4h0m0 6h0m0 5h0m0-11h0m1 11h0m0-28h0m0 12h0m0 13h0m0 17h0m1-37h0m0-21h0m0 59h0m0-23h0m0-13h0m0-32h0m1 35h0m0 9h0m0 27h0m0-41h0m1 14h0m0-10h0m0-18h0m0 16h0m0 17h0m0-20h0m1 27h0m0-28h0m0 29h0m0 16h0m0-40h0m1 21h0m0-6h0m0-21h0m0 12h0m0 17h0m0-21h0m1-15h0m0 28h0m0-11h0m0 25h0m0-49h0m1 17h0m0-6h0m0 14h0m0-2h0m0 6h0m0 6h0m1-32h0m0 9h0m0 22h0m0-1h0m0-7h0m1-5h0m0-30h0m0 51h0m0 8h0m0-43h0m0 40h0m1-17h0m0-39h0m0 17h0m0 3h0m0 22h0m1-36h0m0 12h0m0 17h0m0 1h0m0-11h0m0 15h0m1-1h0m0-13h0m0 6h0m0 6h0m0-5h0m1 2h0m0 1h0m0-7h0m0 31h0m0-40h0m0 17h0m1-1h0m0-3h0m0-10h0m0 3h0m0 18h0m1 0h0m0-10h0m0 3h0m0 12h0m0-15h0m0 1h0m1-19h0m0 5h0m0 22h0m0-26h0m1 12h0m0 10h0m0-8h0m0-12h0m0 6h0m0-10h0m1 3h0m0 11h0m0-8h0m0 18h0m0-16h0m1 1h0m0 1h0m0-3h0m0-25h0m0 48h0m0-3h0m1-14h0m0 8h0m0-24h0m0 16h0m0 30h0m1-36h0m0 14h0m0 13h0m0-33h0m0 21h0m0-6h0m1-11h0m0 12h0m0-1h0m0-2h0m0-5h0m1 2h0m0-7h0m0 12h0m0-12h0m0 3h0m1 4h0m0 10h0m0-8h0m0-8h0m0-4h0m1 15h0m0-5h0m0-5h0m0-5h0m0 7h0m0 17h0m1-2h0m0-14h0m0 7h0m0-32h0m0 38h0m1-14h0m0 7h0m0-9h0m0-14h0m0 39h0m0-17h0m1 2h0m0-11h0m0 14h0m0-10h0m0 16h0m1-29h0m0 26h0m0 25h0m0-27h0m0-4h0m1 13h0m0-32h0m0 37h0m0-42h0m0 20h0m1-5h0m0 17h0m0 2h0m0-15h0m0-12h0m0 18h0m1-12h0m0 8h0m0 8h0m0-8h0m0-2h0m1 6h0m0-4h0m0 1h0m0-5h0m0 11h0m1-6h0m0 14h0m0-9h0m0 3h0m1-9h0m0 5h0m0 2h0m0-6h0m0 14h0m0-12h0m1 9h0m0-6h0m0-8h0m0 10h0m0 6h0m1 4h0m0-5h0m0 1h0m0 2h0m0-2h0m1 1h0m0-4h0m0 1h0m0-11h0m0 10h0m1 0h0m0-4h0m0 6h0m0 1h0m0-3h0m1 1h0m0-10h0m0 12h0m0-3h0m0-3h0m1-3h0m0-5h0m0 11h0m0-10h0m1 9h0m0 5h0m0-10h0m0 11h0m0-17h0m1 3h0m0 13h0m0-14h0m0 11h0m0-3h0m0-10h0m1 15h0m0 4h0m0-5h0m0-8h0m1 6h0m0 6h0m0-9h0m0 4h0m0-11h0m0 17h0m1-16h0m0 6h0m0-3h0m0-1h0m1 9h0m0-12h0m0 12h0m0-12h0m0 4h0m1 4h0m0-4h0m0-1h0m0-5h0m0 4h0m1 4h0m0-22h0m0 27h0m0 4h0m0-16h0m1-7h0m0 1h0m0-1h0m0-3h0m0 22h0m0-17h0m1 21h0m0-15h0m0 11h0m0-11h0m0-2h0m1 1h0m0 5h0m0 2h0m0-12h0m0-2h0m0 12h0m1 11h0m0-13h0m0-7h0m0 9h0m0 2h0m1-13h0m0-8h0m0 33h0m0 7h0m0-13h0m0 19h0m1-36h0m0 30h0m0-44h0m0 28h0m0-2h0m1-16h0m0 3h0m0 4h0m0-3h0m0 12h0m0-23h0m1 27h0m0-7h0m0 2h0m0-12h0m1-1h0m0 5h0m0 13h0m0-1h0m0-3h0m1-1h0m0-7h0m0 3h0m0 9h0m1-14h0m0 4h0m0 10h0m0-13h0m0 8h0m0-17h0m1 20h0m0-12h0m0 6h0m0 10h0m0-5h0m1 0h0m0-7h0m0-9h0m0 4h0m0-7h0m0 5h0m1-3h0m0 7h0m0-3h0m0 6h0m1-3h0m0 5h0m0-3h0m0 4h0m0-4h0m1-8h0m0 10h0m0 1h0m0-6h0m0 4h0m1 0h0m0-4h0m0-1h0m0 2h0m0-7h0m0-3h0m1 3h0m0 9h0m0 6h0m0-1h0m0-7h0m1 9h0m0-11h0m0 6h0m0-3h0m0-3h0m0 2h0m1 13h0m0-2h0m0-18h0m0 9h0m0-9h0m1 9h0m0-3h0m0 5h0m0-6h0m0-3h0m0 3h0m1-4h0m0 4h0m0 14h0m0-16h0m0-1h0m1 9h0m0-10h0m0 13h0m0-6h0m0-5h0m0 18h0m1-18h0m0 3h0m0-6h0m0 9h0m0-3h0m1 1h0m0-1h0m0 8h0m0-18h0m0 23h0m0-9h0m1-6h0m0 12h0m0-20h0m0 18h0m0 3h0m1-15h0m0-21h0m0 30h0m0-20h0m0 27h0m0-8h0m1-2h0m0-11h0m0 4h0m0 19h0m0-4h0m1-6h0m0-10h0m0-23h0m0 29h0m0-18h0m0-2h0m1 23h0m0 4h0m0-16h0m0 19h0m0-21h0m1 10h0m0-5h0m0 3h0m0 12h0m0-17h0m0 4h0m1 16h0m0-3h0m0-12h0m0 1h0m0 1h0m1-1h0m0 6h0m0-3h0m0-11h0m0 21h0m0 3h0m1-25h0m0 5h0m0-6h0m0-1h0m1 5h0m0 11h0m0-2h0m0-10h0m0 4h0m0-3h0m1-4h0m0 10h0m0-12h0m0 16h0m0-2h0m1-4h0m0 7h0m0-7h0m0 16h0m0-12h0m1-3h0m0 5h0m0 1h0m0-1h0m0 7h0m1-16h0m0 11h0m0 3h0m0-3h0m0 7h0m1 5h0m0-14h0m0 11h0m0-1h0m0 9h0m1-14h0m0-2h0m0 2h0m0 2h0m0 14h0m0-21h0m1 7h0m0 7h0m0-7h0m0 4h0m1 5h0m0-4h0m0 2h0m0-5h0m0 5h0m0-4h0m1 2h0m0-3h0m0-2h0m0 4h0m0-6h0m1 6h0m0-17h0m0 11h0m0-1h0m0 16h0m0-6h0m1-3h0m0-3h0m0 1h0m0-1h0m0 10h0m1-19h0m0 10h0m0-2h0m0 3h0m0 1h0m1-11h0m0 12h0m0-6h0m0-4h0m0 15h0m1-2h0m0 1h0m0-8h0m0 13h0m0-8h0m0-2h0m1 2h0m0 9h0m0-22h0m0 16h0m0-1h0m1-12h0m0 10h0m0 2h0m0-3h0m0-4h0m1-6h0m0 8h0m0-2h0m0 13h0m0-13h0m1-5h0m0-2h0m0 34h0m0-7h0m0-24h0m0 13h0m1-26h0m0 15h0m0 1h0m0 26h0m0-43h0m1 42h0m0-38h0m0 31h0m0-8h0m0 1h0m1-12h0m0 5h0m0-5h0m0 2h0m1-7h0m0-3h0m0-1h0m0 14h0m0-7h0m0 5h0m1-4h0m0-1h0m0 4h0m0-6h0m1 8h0m0 2h0m0 2h0m0 1h0m0-12h0m0-3h0m1 8h0m0 3h0m0-13h0m0 11h0m0 2h0m1-1h0m0-7h0m0 4h0m0-9h0m0 4h0m1 4h0m0 12h0m0-5h0m0-15h0m0 2h0m0 3h0m1 0h0m0 3h0m0 1h0m0 6h0m0-11h0m1 1h0m0 10h0m0 2h0m0-10h0m0 6h0m0-14h0m1 9h0m0 7h0m0-3h0m0 1h0m0-1h0m1-9h0m0 9h0m0 2h0m0 8h0m0-18h0m0 2h0m1 15h0m0-21h0m0 10h0m0-13h0m0 10h0m1 5h0m0-7h0m0-3h0m0 15h0m0-10h0m0-2h0m1 6h0m0 5h0m0-3h0m0-10h0m0 1h0m1 4h0m0-10h0m0 7h0m0-2h0m0 2h0m0 2h0m1 2h0m0-4h0m0 7h0m0-2h0m0 21h0m1-11h0m0 3h0m0-33h0m0 44h0m0-26h0m0-10h0m1 21h0m0-2h0m0-7h0m0 4h0m0 4h0m1-33h0m0 11h0m0 20h0m0 1h0m0-27h0m0 47h0m1-29h0m0-19h0m0 51h0m0-23h0m0-19h0m1-20h0m0 49h0m0-29h0m0-10h0m0 14h0m0 6h0m1 0h0m0 10h0m0-20h0m0 17h0m0-8h0m1 2h0m0-5h0m0 5h0m0-10h0m0 19h0m0 1h0m1-12h0m0 8h0m0-13h0m0-1h0m1 13h0m0-2h0m0-1h0m0-5h0m0 1h0m0-7h0m1 15h0m0-33h0m0 23h0m0-3h0m0 40h0m1-21h0m0-26h0m0 18h0m0-1h0m0 5h0m0-9h0m1-10h0m0 9h0m0-15h0m0 28h0m0-21h0m1 6h0m0 26h0m0-22h0m0-5h0m0 28h0m1-51h0m0 26h0m0 18h0m0-33h0m0 27h0m1-17h0m0 22h0m0-31h0m0 9h0m0 4h0m0 9h0m1 2h0m0-29h0m0 19h0m0-16h0m0 22h0m1-10h0m0 13h0m0-17h0m0 26h0m0-30h0m0 20h0m1-17h0m0 3h0m0 1h0m0-1h0m0-11h0m1 17h0m0-2h0m0-11h0m0 2h0m0-4h0m0 6h0m1 6h0m0-3h0m0-4h0m0-3h0m0 5h0m1 10h0m0-5h0m0-21h0m0 28h0m0-27h0m0 38h0m1-6h0m0 11h0m0-40h0m0 24h0m0-5h0m1-26h0m0 15h0m0 33h0m0-6h0m0 10h0m0-43h0m1 15h0m0 11h0m0-13h0m0-10h0m0-4h0m1-14h0m0 32h0m0-16h0m0-1h0m0 5h0m0 24h0m1-11h0m0-24h0m0 20h0m0-8h0m0 8h0m1-24h0m0 9h0m0 16h0m0 4h0m0-19h0m0-5h0m1 16h0m0-15h0m0 10h0m0 1h0m0-2h0m1 35h0m0-17h0m0-20h0m0 4h0m0-18h0m0 32h0m1-20h0m0-20h0m0 19h0m0-3h0m0 11h0m1-1h0m0-6h0m0 9h0m0 3h0m0 1h0m0-1h0m1-17h0m0 3h0m0-2h0m0 5h0m1 0h0m0-4h0m0-3h0m0-6h0m0 2h0m0 10h0m1-15h0m0-3h0m0-3h0m0 1h0m1 28h0m0-31h0m0 5h0m0 21h0m0 2h0m1-17h0m2 10h0m0-17h0m0 8h0m1 20h0m0-12h0m0-11h0m0-1h0m0 6h0m1-1h0m0 7h0m0-4h0m0 11h0m0 39h0m1-33h0m0 16h0m0 7h0m0-28h0m0 21h0m0-8h0m1-7h0m0 12h0m0 30h0m0-50h0m0-1h0m1 20h0m0 17h0m0-48h0m0 3h0m0 34h0m1 12h0m0-45h0m0 30h0m0 4h0m0-7h0m1-15h0m0 11h0m0 2h0m0 11h0m0 23h0m0-7h0m1-5h0m0-4h0m0-13h0m0-1h0m0-1h0m1-7h0m0 5h0m0 2h0m0 5h0m0-17h0m0 19h0m1-7h0m0 20h0m0-33h0m0 24h0m0 4h0m1-27h0m0 16h0m0 1h0m0-21h0m0 16h0m1 2h0m0-2h0m0 9h0m0-4h0m0-22h0m1 17h0m0-11h0m0 17h0m0-3h0m0 3h0m0-6h0m1-8h0m0 10h0m0-1h0m0 7h0m0-15h0m1 1h0m0 4h0m0-6h0m0 2h0m0 5h0m1 9h0m0-10h0m0 5h0m0-7h0m0-4h0m0 8h0m1 8h0m0-18h0m0 2h0m0-1h0m0 14h0m1-6h0m0-7h0m0-2h0m0 1h0m0 18h0m0-22h0m1 14h0m0-1h0m0-9h0m0 8h0m1-4h0m0 1h0m0-1h0m0 3h0m0 4h0m0-3h0m1-2h0m0 1h0m0-7h0m0-12h0m0 29h0m1-14h0m0-2h0m0 16h0m0-6h0m0-1h0m0-2h0m1 2h0m0 2h0m0-18h0m0 34h0m0-31h0m1-4h0m0 4h0m0 30h0m0 1h0m0-17h0m0 5h0m1 1h0m0-28h0m0 28h0m0-22h0m0-6h0m1-1h0m0 5h0m0 7h0m0 13h0m0-10h0m1 1h0m0-15h0m0 7h0m0 5h0m0 8h0m1-2h0m0-5h0m0-4h0m0-4h0m0 3h0m0 2h0m1-5h0m0 12h0m0-3h0m0-5h0m1-2h0m0 5h0m0 8h0m0-11h0m0 10h0m0-13h0m1-16h0m0 31h0m0-32h0m0 13h0m1-11h0m0 3h0m0 31h0m0 5h0m0 7h0m1-49h0m0 51h0m0-12h0m0-4h0m0-13h0m1 9h0m0-10h0m0 10h0m0 1h0m0-14h0m0 25h0m1-8h0m0-9h0m0-4h0m0-7h0m0 9h0m1 27h0m0-22h0m0 6h0m0-6h0m0-8h0m0 4h0m1-33h0m0 37h0m0 6h0m0-12h0m0-3h0m1-17h0m0 26h0m0-16h0m0 2h0m0 2h0m1-1h0m0 12h0m0-6h0m0-6h0m0-8h0m1 3h0m0 5h0m0 1h0m0-3h0m0-5h0m1 39h0m0-19h0m0-35h0m0 20h0m0 13h0m1 6h0m0-8h0m0 22h0m0-8h0m0-24h0m0-1h0m1 10h0m0 3h0m0 7h0m0 9h0m1-6h0m0-5h0m0 10h0m0-2h0m0-21h0m0 14h0m1-10h0m0 8h0m0 5h0m0-2h0m0 6h0m1-13h0m0 1h0m0 1h0m0 3h0m0 5h0m0 3h0m1-9h0m0 6h0m0 2h0m0-1h0m1 4h0m0-4h0m0-5h0m0-1h0m0 9h0m0-6h0m1 3h0m0 5h0m0 3h0m0-13h0m0-8h0m1 7h0m0-5h0m0-3h0m0 21h0m0-11h0m1 9h0m0 19h0m0-38h0m0 26h0m0-36h0m1 35h0m0-6h0m0 13h0m0-10h0m0-31h0m0 22h0m1 0h0m0 16h0m0-29h0m0-6h0m0 19h0m1-9h0m0 30h0m0-50h0m0 29h0m0 3h0m0 3h0m1-15h0m0 7h0m0 21h0m0-26h0m0 11h0m1-7h0m0 27h0m0-47h0m0-1h0m0 22h0m0 24h0m1-28h0m0-26h0m0 13h0m0-18h0m0 58h0m1-42h0m0 25h0m0-15h0m0 7h0m0 16h0m1 10h0m0-21h0m0 4h0m0-32h0m0 31h0m1-21h0m0 17h0m0-16h0m0 5h0m0-5h0m0 7h0m1-3h0m0 7h0m0 5h0m0-17h0m0-2h0m1 8h0m0-10h0m0 20h0m0-6h0m0 3h0m0-8h0m1 11h0m0-9h0m0-3h0m0-5h0m0 8h0m1-13h0m0 20h0m0-10h0m0-8h0m0 20h0m0-7h0m1-3h0m0-7h0m0 3h0m0 12h0m0-4h0m1-1h0m0-8h0m0-4h0m0 9h0m0 7h0m0 2h0m1-13h0m0-4h0m0 10h0m0 5h0m0-1h0m1-8h0m0 12h0m0-7h0m0-4h0m0 11h0m0-14h0m1 8h0m0-11h0m0 18h0m0-20h0m0 16h0m1-10h0m0-4h0m0 7h0m0-4h0m0 1h0m0 1h0m1-9h0m0 15h0m0-12h0m0-6h0m0 6h0m1 10h0m0-8h0m0-2h0m0 16h0m0 1h0m1-22h0m0 5h0m0 2h0m0 4h0m0-7h0m1-5h0m0 5h0m0 10h0m0-7h0m0-14h0m0 16h0m1 7h0m0-17h0m0 14h0m0-5h0m0-17h0m1 6h0m0 21h0m0-19h0m0-3h0m0-4h0m0 16h0m1-1h0m0-20h0m0 22h0m0 9h0m0-25h0m1-5h0m0-2h0m0 20h0m0-19h0m0-5h0m1 7h0m0-13h0m0 4h0m0-5h0m0-2h0m1 38h0m0-13h0m0-22h0m1 2h0m0 23h0m1 2h0m0-11h0m2 7h0m0-26h0m1 3h0m0 34h0m1-32h0m0-1h0m0 7h0m0-2h0m1 2h0m0 24h0m0-33h0m0 7h0m0 21h0m0-22h0m1 5h0m0 41h0m0-33h0m0 1h0m0 14h0m1 1h0m0 16h0m0-6h0m0 2h0m0-8h0m0 6h0m1-13h0m0 11h0m0-9h0m0 16h0m0-9h0m1 1h0m0 7h0m0-8h0m0 4h0m0-11h0m0 3h0m1 7h0m0 3h0m0-3h0m0-8h0m0 6h0m1 4h0m0 1h0m0 8h0m0-18h0m0 11h0m0-5h0m1-2h0m0 7h0m0-3h0m0-4h0m0-7h0m1 11h0m0-1h0m0 2h0m0-8h0m0 12h0m1-6h0m0-1h0m0-5h0m0 1h0m0 7h0m1-2h0m0 5h0m0-7h0m0 8h0m0-10h0m1-14h0m0 13h0m0 5h0m0-11h0m1 8h0m0 4h0m0 5h0m0-16h0m0 24h0m0-19h0m1 10h0m0-18h0m0 13h0m0 5h0m0-21h0m1 34h0m0-30h0m0 1h0m0 28h0m0-4h0m0-2h0m1-7h0m0-7h0m0 3h0m0-8h0m0 8h0m1 7h0m0 4h0m0-8h0m0-1h0m0 2h0m0-12h0m1 6h0m0 18h0m0-7h0m0-4h0m0-45h0m1 28h0m0 19h0m0-15h0m0-15h0m0 52h0m0-73h0m1 70h0m0-46h0m0-25h0m0 42h0m0-14h0m1 40h0m0-54h0m0 10h0m0-19h0m0 20h0m0 24h0m1 2h0m0-1h0m0-3h0m0-20h0m0 26h0m1-6h0m0-3h0m0 4h0m0-3h0m0-12h0m0 8h0m1-3h0m0 3h0m0-5h0m0-4h0m0 4h0m1 2h0m0 6h0m0 3h0m0-9h0m0-2h0m0-2h0m1 5h0m0 6h0m0-9h0m0 7h0m1 2h0m0 3h0m0-4h0m0-10h0m0 2h0m0-7h0m1 7h0m0 1h0m0-5h0m0-1h0m0 9h0m1 16h0m0-17h0m0 4h0m0-13h0m0 7h0m0 6h0m1 4h0m0-12h0m0-4h0m0 16h0m0-12h0m1 7h0m0-6h0m0-15h0m0 30h0m0-17h0m0-13h0m1 20h0m0 16h0m0-7h0m0 8h0m0-20h0m1 27h0m0-48h0m0 38h0m0-14h0m0-4h0m0 11h0m1-15h0m0 6h0m0 25h0m0-8h0m0-38h0m1 23h0m0-16h0m0 13h0m0-12h0m0 9h0m0 9h0m1 7h0m0-21h0m0 13h0m0 12h0m0-30h0m1 13h0m0 4h0m0-10h0m0-4h0m0 34h0m0-34h0m1 26h0m0-38h0m0-11h0m0 52h0m0-20h0m1-10h0m0-1h0m0 16h0m0 3h0m0-13h0m0 1h0m1-12h0m0 20h0m0-15h0m0 4h0m0 7h0m1 31h0m0-29h0m0 4h0m0 22h0m0-35h0m0 20h0m1 3h0m0-10h0m0-18h0m0 2h0m1 6h0m0 2h0m0 16h0m0-6h0m0-7h0m0-1h0m1 3h0m0-17h0m0 1h0m0 25h0m0-27h0m1 16h0m0 13h0m0-40h0m0 8h0m0 9h0m0-7h0m1 17h0m0-30h0m0 33h0m0 29h0m0-29h0m1-15h0m0 44h0m0 2h0m0-27h0m0-27h0m0 10h0m1 10h0m0-8h0m0 12h0m0 4h0m0-10h0m1-20h0m0 30h0m0-9h0m0 12h0m0-18h0m0 2h0m1 0h0m0-1h0m0 11h0m0-7h0m0 1h0m1 4h0m0-11h0m0 1h0m0 10h0m0-6h0m0-3h0m1 2h0m0-2h0m0 4h0m0 3h0m0 8h0m1-3h0m0-8h0m0 15h0m0-11h0m1-9h0m0-11h0m0 10h0m0 11h0m0-15h0m0 45h0m1-35h0m0 23h0m0-57h0m0 66h0m0-41h0m1 9h0m0 17h0m0 4h0m0-14h0m0 5h0m0 13h0m1-8h0m0-27h0m0 3h0m0 24h0m1-17h0m0-4h0m0 4h0m0-1h0m0-24h0m0 11h0m1 5h0m0 15h0m0-25h0m0 19h0m0-5h0m1 24h0m0-30h0m0 20h0m0-8h0m0-13h0m0 9h0m1 4h0m0-10h0m0-2h0m0 5h0m0-3h0m1 11h0m0-7h0m0 3h0m0 10h0m0-14h0m0 5h0m1 0h0m0-3h0m0 2h0m0-7h0m0 9h0m1-7h0m0 7h0m0-7h0m0 3h0m0-5h0m0-11h0m1 15h0m0-4h0m0 10h0m0-3h0m0-4h0m1-6h0m0 15h0m0-5h0m0-12h0m0 26h0m0-19h0m1 8h0m0-28h0m0 31h0m0 11h0m0-37h0m1 0h0m0 14h0m0-14h0m0 21h0m0-5h0m0 5h0m1 2h0m0-8h0m0 4h0m0-13h0m0 16h0m1-5h0m0 15h0m0-15h0m0 5h0m0-5h0m1 3h0m0 6h0m0-12h0m0 4h0m0 5h0m1-14h0m0 7h0m0-5h0m0-1h0m0 9h0m0-4h0m1 4h0m0 4h0m0-2h0m0-13h0m0 10h0m1-9h0m0 6h0m0 15h0m0-8h0m0-6h0m0 5h0m1-2h0m0 2h0m0 7h0m0-11h0m0-5h0m1 15h0m0-3h0m0-4h0m0 8h0m0-8h0m1 9h0m0 2h0m0 9h0m0-15h0m0-2h0m1 11h0m0-6h0m0 6h0m0 1h0m0-15h0m0 4h0m1 20h0m0-17h0m0 4h0m0-9h0m0 9h0m1 2h0m0 7h0m0-4h0m0 7h0m0-14h0m1 8h0m0-4h0m0-3h0m0 19h0m0-11h0m1 5h0m0 8h0m0-15h0m0 24h0m0-10h0m1 2h0m0 1h0m0-6h0m0-4h0m0-8h0m1-36h0m0 53h0m0-10h0m0 5h0m0-35h0m0 43h0m1-10h0m0-20h0m0 4h0m0 10h0m0-16h0m1 14h0m0-1h0m0-14h0m0 2h0m0 4h0m1-3h0m0 11h0m0-21h0m0 31h0m0-21h0m1-9h0m0 28h0m0-7h0m0-9h0m0-24h0m0 12h0m1-2h0m0 19h0m0-9h0m0-1h0m0-10h0m1 30h0m0-15h0m0 1h0m0 1h0m0-14h0m0 16h0m1-8h0m0 2h0m0-3h0m0 9h0m0 3h0m1-22h0m0 7h0m0 7h0m0 4h0m0-5h0m0 1h0m1 1h0m0-7h0m0 3h0m0 3h0m0-3h0m1 5h0m0-7h0m0 1h0m0 15h0m0-17h0m0 7h0m1-2h0m0-6h0m0 4h0m0-3h0m0 11h0m1-15h0m0 7h0m0-9h0m0 6h0m0-6h0m1 2h0m0 5h0m0-3h0m0-10h0m0 12h0m1 3h0m0-7h0m0 12h0m0-10h0m0 4h0m0-4h0m1 16h0m0-20h0m0 4h0m0 6h0m0-10h0m1 9h0m0 6h0m0-1h0m0-5h0m0-3h0m1 2h0m0-6h0m0-1h0m0 10h0m0-14h0m1 13h0m0-10h0m0-1h0m0 6h0m0 2h0m0 4h0m1-19h0m0 22h0m0-8h0m0-1h0m0-8h0m1 2h0m0 6h0m0 2h0m0-17h0m0 15h0m0 3h0m1-15h0m0 11h0m0 5h0m0-11h0m0 6h0m1 12h0m0-12h0m0-5h0m0 12h0m0-9h0m0-8h0m1 10h0m0 5h0m0-3h0m0-10h0m0 8h0m1-7h0m0 4h0m0 4h0m0-12h0m0-5h0m0 18h0m1-9h0m0-1h0m0 1h0m0-10h0m1-6h0m0 14h0m0 3h0m0-6h0m0 9h0m1-8h0m0-3h0m0 4h0m0-2h0m0 17h0m1-7h0m0-6h0m0-5h0m0 11h0m0-10h0m0 4h0m1-5h0m0 5h0m0-9h0m0 11h0m0-13h0m1 11h0m0-6h0m0 11h0m0-3h0m0-7h0m0 16h0m1-14h0m0-18h0m0 21h0m0-10h0m1 12h0m0 3h0m0-11h0m0 5h0m0-7h0m1 18h0m0 2h0m0-16h0m0-1h0m0 1h0m0 8h0m1-7h0m0 8h0m0 4h0m0-3h0m0 11h0m1-16h0m0 1h0m0 10h0m0 6h0m0-12h0m0-5h0m1 22h0m0-12h0m0 3h0m0-12h0m0-1h0m1 19h0m0-3h0m0 8h0m0-12h0m0-1h0m0-6h0m1 21h0m0-1h0m0-13h0m0 1h0m0 6h0m1-3h0m0-3h0m0 4h0m0-11h0m0-1h0m0 8h0m1 5h0m0 7h0m0-5h0m0 18h0m1-19h0m0-3h0m0 2h0m0 10h0m0-14h0m1-2h0m0 11h0m0 5h0m0-5h0m0-5h0m1-12h0m0 7h0m0 3h0m0 6h0m0-4h0m0 6h0m1-12h0m0 5h0m0 7h0m0-7h0m0-10h0m1 15h0m0 3h0m0-5h0m0-2h0m0-3h0m0 3h0m1-6h0m0 5h0m0-2h0m0-9h0m0 19h0m1-1h0m0-8h0m0 8h0m0-3h0m0-19h0m0 22h0m1-1h0m0-9h0m0 3h0m0 11h0m0-13h0m1-8h0m0 11h0m0-5h0m0 5h0m0 5h0m1-10h0m0 1h0m0 18h0m0-23h0m0 7h0m1-4h0m0-7h0m0 21h0m0 3h0m0 7h0m0 1h0m1-13h0m0-10h0m0 9h0m0-27h0m0 33h0m1-34h0m0 22h0m0-11h0m0 10h0m0 7h0m0-4h0m1 3h0m0-8h0m0 3h0m0 9h0m0-23h0m1 9h0m0 17h0m0-5h0m0-3h0m0-3h0m0-1h0m1 5h0m0-17h0m0 25h0m0-16h0m0 4h0m1-11h0m0 16h0m0-2h0m0-24h0m0 20h0m0 3h0m1 3h0m0 3h0m0 15h0m0-12h0m1-8h0m0-12h0m0 17h0m0-6h0m0 7h0m1-7h0m0-13h0m0 20h0m0 3h0m0-7h0m1-6h0m0 8h0m0-13h0m0-10h0m0 8h0m0-3h0m1-1h0m0 5h0m0 4h0m0 11h0m1-1h0m0-4h0m0 2h0m0-2h0m0-8h0m0 4h0m1 1h0m0-15h0m0 15h0m0-2h0m0-7h0m1 8h0m0-9h0m0 12h0m0-14h0m0 7h0m0 14h0m1-11h0m0-4h0m0 6h0m0-6h0m0 6h0m1-7h0m0 6h0m0-10h0m0 4h0m0-4h0m1 12h0m0-2h0m0-5h0m0-9h0m0 7h0m1 19h0m0-27h0m0 9h0m0-10h0m0 25h0m0-5h0m1 2h0m0 6h0m0-30h0m0 18h0m0 7h0m1 5h0m0-7h0m0-16h0m0-6h0m0 7h0m0 11h0m1-5h0m0 18h0m0-5h0m0-11h0m0-4h0m1 3h0m0-2h0m0 5h0m0-2h0m0-3h0m0 3h0m1 1h0m0-1h0m0-13h0m0 18h0m0-22h0m1 22h0m0-13h0m0-4h0m0-2h0m0 17h0m0-12h0m1 24h0m0-18h0m0 12h0m0 1h0m0-18h0m1-2h0m0 10h0m0-20h0m0 30h0m0 18h0m0-20h0m1-1h0m0 26h0m0-52h0m0 23h0m0-26h0m1 44h0m0-12h0m0-4h0m0-22h0m0 17h0m0-3h0m1-13h0m0 16h0m0-1h0m0-18h0m0 37h0m1-34h0m0 16h0m0-1h0m0-3h0m0-3h0m0 5h0m1-21h0m0 50h0m0 1h0m0-33h0m0 20h0m1-14h0m0 1h0m0-3h0m0-6h0m0 24h0m0-13h0m1-19h0m0 14h0m0 1h0m0-21h0m0 15h0m1 8h0m0-9h0m0-1h0m0 11h0m0-12h0m0 7h0m1 11h0m0-18h0m0 1h0m0 1h0m1 8h0m0-1h0m0 4h0m0-15h0m0 3h0m0-11h0m1 12h0m0 9h0m0 3h0m0 4h0m1-47h0m0 62h0m0-10h0m0 7h0m0-37h0m0 11h0m1 6h0m0-17h0m0 20h0m0-13h0m0-19h0m1 26h0m0 1h0m0-10h0m0-3h0m0 12h0m1-7h0m0 3h0m0-9h0m0 12h0m0-1h0m1 7h0m0-5h0m0 2h0m0-8h0m0-6h0m0 11h0m1-16h0m0 14h0m0-10h0m0 4h0m0 7h0m1-3h0m0 9h0m0-13h0m0-9h0m0 10h0m1-10h0m0 12h0m0 1h0m0-2h0m0 3h0m0-5h0m1-9h0m0 11h0m0 4h0m0-4h0m0-6h0m1 7h0m0 10h0m0-6h0m0-16h0m0 11h0m0-9h0m1 9h0m0 4h0m0-6h0m0-10h0m0-8h0m1-3h0m0-6h0m0 4h0m0-1h0m0-3h0m0-5h0m1 17h0m0 18h0m1-33h0m0 14h0m0 19h0m0-16h0m1 18h0m1-5h0m1-21h0m1-7h0m0 36h0m0-29h0m0-9h0m0 8h0m1 22h0m0 6h0m0-37h0m0 44h0m1-34h0m0-1h0m0 7h0m0 3h0m0 3h0m0 20h0m1-10h0m0 14h0m0 1h0m0-10h0m0 18h0m1-8h0m0 2h0m0-5h0m0 9h0m0-6h0m0 1h0m1-3h0m0-4h0m0-3h0m0 7h0m0 5h0m1 1h0m0-1h0m0-16h0m0 4h0m0 2h0m0 3h0m1 10h0m0-14h0m0 8h0m0 5h0m1-8h0m0 5h0m0-15h0m0 2h0m0 4h0m0 1h0m1-3h0m0 18h0m0-3h0m0-9h0m0 3h0m1 11h0m0-15h0m0 5h0m0 3h0m0-12h0m0-2h0m1 12h0m0-5h0m0-2h0m0 3h0m0-3h0m1 9h0m0-3h0m0-8h0m0 2h0m0-12h0m0 16h0m1-1h0m0-5h0m0-2h0m0 2h0m0-12h0m1 11h0m0-8h0m0 20h0m0-23h0m0 9h0m0 34h0m1-48h0m0 4h0m0 35h0m0-24h0m0-23h0m1 33h0m0-33h0m0 33h0m0-29h0m0 19h0m0 4h0m1 1h0m0 4h0m0-9h0m0 11h0m0-19h0m1 8h0m0 2h0m0 1h0m0 3h0m0-7h0m1 7h0m0-1h0m0 3h0m0-15h0m0-1h0m1 13h0m0-2h0m0 7h0m0-13h0m0-11h0m1 18h0m0-10h0m0 14h0m0-20h0m0-4h0m1 14h0m0-2h0m0-10h0m0 10h0m0 10h0m0-10h0m1 12h0m0-16h0m0 3h0m0-7h0m0 6h0m1-1h0m0 8h0m0-8h0m0 7h0m0 3h0m0-37h0m1 57h0m0-27h0m0 11h0m0-2h0m0-8h0m1-1h0m0-15h0m0 45h0m0-35h0m0 10h0m0-19h0m1 31h0m0 19h0m0-33h0m0 5h0m0 4h0m1-4h0m0-16h0m0 14h0m0-15h0m0 5h0m0 13h0m1 11h0m0-24h0m0 13h0m0-1h0m0-12h0m1-4h0m0 10h0m0-1h0m0 6h0m0-7h0m1-2h0m0-11h0m0 13h0m0 5h0m0-13h0m1 12h0m0 2h0m0-8h0m0 3h0m0 17h0m1-12h0m0 27h0m0-25h0m0-18h0m0 16h0m1-11h0m0 3h0m0-15h0m0 33h0m0 22h0m0-23h0m1-3h0m0-25h0m0-5h0m0 30h0m0 5h0m1 3h0m0-10h0m0-17h0m0 11h0m0-13h0m0 8h0m1-7h0m0-1h0m0-1h0m0 9h0m1-8h0m0 8h0m0 6h0m0-6h0m0-6h0m0 11h0m1-21h0m0 28h0m0 5h0m0-5h0m0-27h0m1 20h0m0-10h0m0-2h0m0 32h0m0-21h0m0-19h0m1 2h0m0 14h0m0-9h0m0 4h0m0-7h0m1 31h0m0-7h0m0-29h0m0 14h0m0 10h0m0-15h0m1 1h0m0 10h0m0-9h0m0 1h0m0-6h0m1 5h0m0-2h0m0-4h0m0 4h0m0 5h0m0 4h0m1-3h0m0-4h0m0 2h0m1 3h0m0-16h0m0 12h0m0 11h0m0-12h0m0-9h0m1 10h0m0-5h0m0 17h0m0-23h0m0 2h0m1-8h0m0 11h0m0 14h0m0-26h0m0-2h0m0-3h0m1 45h0m0-34h0m0-4h0m0 23h0m1 10h0m0-6h0m0 9h0m0-24h0m0 14h0m0-11h0m1 0h0m0 3h0m0 5h0m0-2h0m0-17h0m1 23h0m0-14h0m0 7h0m0-2h0m0-3h0m1-15h0m0 11h0m0-2h0m0-1h0m0-2h0m0 4h0m1-6h0m0 7h0m0 5h0m0-3h0m1-10h0m0 19h0m0-5h0m0-4h0m0-1h0m0 2h0m1 4h0m0-5h0m0-2h0m0 10h0m0-7h0m1-2h0m0-10h0m0 19h0m0-12h0m1 20h0m0-26h0m0 28h0m0-19h0m0 15h0m1-7h0m0-13h0m0-4h0m0 9h0m0-1h0m0 4h0m1-12h0m0 5h0m0 38h0m0-59h0m0 44h0m1 20h0m0-13h0m0-14h0m0 6h0m0 26h0m0-49h0m1 28h0m0-15h0m0 20h0m0-24h0m0-2h0m1 28h0m0-11h0m0-15h0m0-8h0m0 21h0m0-5h0m1-6h0m0-2h0m0-4h0m0 1h0m0 17h0m1-12h0m0 12h0m0-7h0m0-4h0m0 2h0m0 5h0m1 5h0m0-11h0m0 3h0m0 22h0m0-29h0m1 3h0m0 29h0m0-33h0m0 7h0m0 3h0m0 21h0m1-2h0m0-13h0m0-9h0m0 5h0m0-19h0m1 34h0m0 17h0m0-8h0m0-27h0m0-1h0m0-5h0m1 7h0m0-4h0m0 9h0m0-5h0m0-4h0m1 3h0m0 14h0m0 4h0m0-10h0m0-22h0m0 19h0m1 9h0m0-1h0m0-2h0m0-10h0m0-2h0m1 15h0m0-3h0m0-1h0m0 11h0m0-13h0m1-3h0m0 7h0m0-2h0m0-5h0m0 4h0m1-9h0m0 1h0m0 6h0m0-1h0m0 1h0m0-15h0m1 18h0m0 5h0m0 2h0m0-1h0m0-10h0m1 2h0m0 17h0m0-27h0m0 5h0m0 16h0m1-15h0m0 8h0m0-22h0m0 14h0m0 6h0m1 4h0m0-17h0m0 13h0m0-1h0m0-5h0m0 1h0m1 8h0m0-14h0m0 7h0m0-10h0m0 8h0m1-5h0m0-5h0m0 6h0m0 5h0m0 7h0m0-7h0m1 7h0m0-6h0m0-3h0m0-6h0m1 2h0m0 5h0m0-1h0m0 11h0m0-22h0m1 16h0m0-8h0m0 2h0m0 25h0m0-32h0m1 18h0m0-19h0m0-16h0m0 34h0m0-13h0m0 16h0m1-15h0m0 2h0m0 7h0m0-7h0m0-6h0m1 2h0m0-3h0m0 4h0m0 5h0m0 7h0m0-13h0m1 2h0m0-6h0m0 6h0m0-3h0m0 2h0m1 5h0m0-1h0m0 16h0m0-21h0m0 6h0m0-9h0m1-3h0m0 9h0m0-1h0m0-4h0m0-1h0m1-4h0m0 12h0m0-6h0m0-13h0m0 11h0m0-11h0m1 8h0m0 7h0m0-9h0m0-1h0m0 11h0m1-19h0m0 6h0m0 17h0m0-3h0m0-1h0m1-4h0m0-6h0m0-3h0m0 10h0m1-16h0m0 15h0m0 1h0m0-3h0m0-11h0m0 27h0m1-14h0m0 2h0m0 14h0m0-17h0m1 3h0m0-2h0m0 7h0m0-7h0m0 11h0m0-13h0m1-13h0m0-16h0m0 38h0m0-32h0m0 14h0m1-16h0m0 50h0m0 8h0m0-19h0m0-20h0m0-6h0m1 18h0m0-9h0m0-24h0m0 34h0m0-22h0m1 29h0m0-20h0m0 16h0m0-7h0m0 13h0m0-29h0m1-9h0m0 24h0m0-8h0m0 6h0m0-3h0m1-3h0m0 1h0m0-2h0m0-3h0m0-10h0m1 9h0m0 1h0m0 8h0m0 1h0m0-5h0m1 1h0m0-1h0m0 12h0m0-7h0m0 5h0m0-7h0m1 2h0m0-8h0m0 1h0m0 8h0m0-9h0m1 4h0m0-6h0m0 23h0m0-10h0m0 1h0m0-13h0m1 7h0m0-1h0m0 3h0m0 4h0m1-1h0m0 13h0m0-9h0m0 2h0m0-4h0m0 2h0m1 6h0m0-3h0m0 5h0m0-5h0m0-9h0m1 11h0m0-13h0m0 19h0m0-15h0m0 9h0m0-8h0m1 12h0m0-9h0m0-7h0m0 15h0m0-9h0m1-2h0m0 16h0m0-10h0m0 2h0m0 6h0m0-11h0m1 1h0m0 1h0m0 6h0m0-4h0m1-2h0m0-4h0m0 9h0m0 1h0m0-13h0m1 5h0m0 12h0m0-15h0m0-2h0m0-1h0m0 4h0m1 9h0m0-1h0m0-6h0m0-1h0m0 7h0m1-6h0m0 1h0m0 11h0m0-6h0m0-16h0m0 19h0m1-7h0m0 7h0m0-4h0m0-2h0m0 6h0m1-10h0m0-4h0m0 4h0m0 16h0m0-11h0m0 2h0m1-3h0m0-7h0m0 15h0m0-12h0m0 8h0m1-6h0m0 3h0m0-1h0m0-5h0m0-5h0m0 25h0m1-14h0m0 31h0m0-22h0m0-26h0m0 38h0m1-9h0m0 3h0m0-5h0m0-15h0m0 15h0m1 2h0m0-10h0m0-7h0m0 2h0m0-5h0m1 4h0m0 5h0m0-4h0m0 8h0m0-14h0m0 11h0m1 0h0m0-1h0m0-6h0m0 6h0m0 8h0m1-21h0m0 13h0m0 8h0m0 1h0m0-10h0m0 9h0m1-7h0m0 6h0m0-7h0m0-4h0m0 11h0m1-20h0m0 15h0m0-7h0m0-9h0m0 6h0m0-1h0m1 15h0m0 1h0m0-11h0m0-1h0m0-4h0m1 2h0m0 3h0m0 2h0m0 1h0m0-2h0m0 8h0m1-5h0m0-3h0m0-3h0m0 4h0m0-6h0m1 1h0m0-1h0m0 4h0m0 4h0m0-10h0m0 2h0m1 8h0m0-9h0m0-3h0m0 9h0m1 15h0m0-9h0m0-9h0m0-1h0m0 17h0m0-32h0m1 20h0m0 1h0m0 11h0m0-18h0m0 23h0m1-26h0m0 20h0m0-20h0m0 42h0m0-34h0m0-15h0m1 16h0m0-12h0m0 16h0m0-30h0m0 25h0m1 11h0m0 7h0m0-36h0m0 20h0m0-14h0m0 14h0m1-1h0m0-15h0m0 15h0m0-9h0m0 10h0m1 1h0m0-7h0m0 3h0m0 2h0m0-8h0m0 11h0m1-13h0m0 3h0m0 11h0m0-13h0m0 2h0m1-12h0m0 9h0m0-5h0m0 21h0m0-4h0m1-2h0m0 2h0m0-11h0m0 1h0m0-13h0m1 22h0m0-1h0m0-10h0m0 2h0m0 6h0m1-8h0m0 2h0m0 4h0m0-7h0m0 15h0m1-15h0m0-6h0m0 15h0m0-19h0m0 8h0m0 12h0m1-16h0m0 28h0m0-1h0m0-5h0m0-15h0m1 29h0m0 7h0m0 8h0m0-46h0m0-8h0m0 21h0m1-3h0m0 2h0m0 15h0m0-12h0m1-21h0m0 40h0m0-8h0m0-26h0m0-1h0m0 13h0m1-5h0m0 9h0m0-16h0m0-3h0m0 8h0m1-6h0m0-3h0m0 12h0m0-13h0m0 12h0m0-8h0m1 4h0m0 1h0m0-2h0m0-9h0m0 12h0m1-5h0m0-4h0m0 5h0m0 5h0m0-7h0m1 4h0m0 3h0m0-9h0m0-3h0m0 5h0m1 5h0m0 2h0m0-10h0m0 3h0m0 5h0m1 1h0m0 6h0m0-13h0m0 8h0m0 6h0m1-4h0m0 3h0m0-15h0m0 7h0m0 4h0m1-2h0m0 5h0m0-1h0m0-10h0m0 6h0m1-1h0m0 10h0m0-5h0m0-13h0m0 9h0m0-6h0m1 7h0m0-10h0m0 2h0m0-1h0m0 3h0m1 7h0m0-3h0m0-2h0m0 1h0m0 3h0m0 1h0m1-3h0m0 1h0m0-8h0m0 5h0m0-12h0m1 1h0m0 13h0m0-11h0m0-5h0m0-2h0m1 1h0m0-6h0m0-6h0m0-3h0m0 1h0m1 11h0m0-10h0m0 10h0m1-12h0m0 37h0m0-28h0m0 6h0m0-5h0m1 3h0m0-12h0m1 10h0m0-10h0m0 13h0m1-8h0m0-2h0m0 1h0m1 3h0m0 30h0m0-35h0m1 27h0m0-18h0m0-7h0m0 14h0m0 20h0m0-27h0m1 34h0m0-26h0m0 1h0m0-1h0m0 30h0m1-26h0m0 34h0m0-13h0m0 11h0m0-7h0m1-9h0m0 16h0m0-16h0m0 19h0m0-21h0m0 13h0m1-25h0m0 23h0m0 5h0m0-1h0m0-6h0m1 4h0m0-5h0m0 5h0m0-12h0m0-6h0m0 18h0m1-11h0m0 5h0m0-5h0m0-3h0m0 6h0m1 4h0m0 17h0m0-40h0m0 34h0m0-25h0m0 15h0m1-9h0m0 19h0m0-22h0m0 15h0m0 1h0m1-2h0m0-8h0m0 12h0m0-11h0m0 12h0m0-26h0m1 22h0m0-18h0m0 13h0m0 3h0m0-4h0m1-8h0m0-3h0m0-5h0m0 8h0m0-6h0m0 11h0m1 9h0m0-23h0m0 7h0m0-3h0m0 13h0m1-11h0m0-1h0m0-7h0m0 13h0m0-8h0m0 3h0m1-3h0m0-6h0m0 6h0m0-3h0m0 1h0m1 2h0m0 1h0m0-1h0m0-1h0m1 5h0" fill="none" stroke="#000" stroke-width="7.40" stroke-linecap="round"/></g>
<g clip-path="url(#c1)"><path transform="scale(.5)" d="M0 0m342 153h0m1 3h0m59 2h0m1-2h0m1-3h0m0-8h0m0 4h0m1-6h0m0-3h0m0-9h0m0 11h0m1 0h0m0 3h0m0 12h0m0-24h0m1-6h0m0 12h0m0-9h0m0 14h0m0 4h0m1 7h0m0 2h0m1-1h0m1-4h0m0 6h0m1-3h0m0 2h0m12-6h0m0 3h0m0 3h0m42 188h0m15-96h0m53-103h0m46 115h0m13-106h0m1-2h0m0 2h0m0-9h0m0 3h0m1 2h0m0-3h0m1-11h0m0 1h0m0 15h0m0 5h0m1-28h0m0 3h0m0 9h0m1 0h0m0-3h0m0 18h0m0-13h0m1-1h0m0 9h0m0-1h0m0-12h0m0 11h0m1 4h0m0-2h0m81 4h0m1-3h0m0 4h0m0-10h0m1-7h0m0 10h0m0-3h0m0-2h0m1-2h0m0-7h0m0 8h0m0-5h0m0 8h0m1-4h0m1 5h0m0 1h0m0 4h0m1 2h0m161 198h0m7-196h0m0-3h0m1-5h0m0 3h0m0 2h0m15-5h0m0-1h0m1-4h0m0 3h0m1 10h0m39 108h0m37-108h0m19 84h0m30 140h0m44-132h0m1-94h0m1-1h0m0 1h0m0 2h0m1-4h0m0-9h0m0 9h0m1-6h0m0 7h0m0-2h0m1 3h0m82 0h0m0-4h0m1-1h0m0 5h0m0-9h0m1 4h0m0 3h0m0-3h0m1-12h0m0 3h0m0 4h0m0 4h0m1-4h0m1 10h0m0-1h0m0-6h0m1 9h0m0 1h0m0-1h0m96-1h0m1-2h0m0-14h0m0 11h0m1-12h0m0 8h0m0-6h0m0 13h0m1-9h0m0 2h0m0-2h0m0 2h0m0 9h0m87-2h0m1-8h0m0 10h0m1-8h0m1-7h0m0 15h0m0-12h0m0-1h0m0 8h0m1 2h0m0-2h0m0 4h0m0-11h0m166 6h0m0 8h0m1-8h0m0 4h0m1 0h0m0-4h0m0 1h0m0 3h0m1-8h0m0 3h0m0-9h0m0 10h0m0-7h0m1 10h0m0-9h0m0 4h0m0 8h0m1 0h0m0-3h0m1 2h0m0-1h0m49 433h0m20-338h0m16-94h0m0 2h0m0 1h0m0-4h0m1-6h0m0 4h0m0 5h0m1-15h0m0 3h0m0 4h0m1 6h0m1 2h0m25 83h0m73-84h0m0-6h0m1-4h0m0 3h0m1 1h0m1 6h0m27 270h0m41 110h0m16-379h0m0-3h0m1 197h0m0-193h0m0-10h0m1-2h0m0-2h0m0 8h0m0-6h0m1 0h0m0 10h0m1 0h0m41-22h0m16 113h0m109-92h0m1-5h0m0 5h0m1 0h0m0-7h0m0-4h0m1-3h0m0 3h0m1 8h0m0 1h0m0-2h0m1-2h0m0 9h0m14-10h0m0 9h0m0-7h0m104 90h0m69-89h0m1-1h0m0-3h0m0 4h0m0-14h0m1 5h0m0-2h0m0-1h0m0-2h0m0 16h0m0-10h0m1 6h0m0 3h0m1 5h0m4 87h0m21-4h0m5-82h0m12 198h0m37-204h0m0 4h0m1-2h0m0 1h0m0-18h0m0 2h0m1 4h0m0-2h0m0 13h0m1 0h0m0-25h0m0 3h0m0-1h0m0 26h0m0-14h0m1 12h0m0-12h0m0 8h0m1-8h0m0 13h0m0-9h0m1 0h0m42 8h0m58-13h0m85 15h0m0-4h0m0-2h0m1 3h0m0-2h0m1 0h0m0-8h0m0-5h0m0 10h0m1-12h0m0-5h0m0 10h0m0-7h0m0 17h0m1-10h0m0 7h0m0 6h0m1-9h0m1 8h0m95 102h0m72-98h0m0-5h0m2 5h0m0-10h0m0-7h0m1 3h0m1 5h0m0 6h0m0 2h0m1 1h0" fill="none" stroke="#ffa500" stroke-width="7.40" stroke-linecap="round"/></g>
<line x1="105.5" y1="161" x2="1358" y2="161" stroke="#008000" stroke-width="2.08"/>
<line x1="162.00" y1="321.5" x2="162.00" y2="35.5" stroke="#800080" stroke-width="2.08" stroke-dasharray="2.08 3.44"/><line x1="1300.00" y1="321.5" x2="1300.00" y2="35.5" stroke="#800080" stroke-width="2.08" stroke-dasharray="2.08 3.44"/>
<text x="731.80" y="311.90" font-size="14.6" text-anchor="middle" textLength="44.19" lengthAdjust="spacingAndGlyphs" fill="#000" stroke="#000" stroke-width="0.2">14894</text>
<rect x="105.5" y="35.5" width="1378.00" height="286.00" fill="none" stroke="#000" stroke-width="1.11"/>
<line x1="162.50" y1="321.5" x2="162.50" y2="326.36" stroke="#000" stroke-width="1.11"/><text x="162.50" y="342.00" font-size="14.6" text-anchor="middle" textLength="8.84" lengthAdjust="spacingAndGlyphs" fill="#000" stroke="#000" stroke-width="0.2">0</text><line x1="347.50" y1="321.5" x2="347.50" y2="326.36" stroke="#000" stroke-width="1.11"/><text x="347.50" y="342.00" font-size="14.6" text-anchor="middle" textLength="35.35" lengthAdjust="spacingAndGlyphs" fill="#000" stroke="#000" stroke-width="0.2">2000</text><line x1="533.50" y1="321.5" x2="533.50" y2="326.36" stroke="#000" stroke-width="1.11"/><text x="533.50" y="342.00" font-size="14.6" text-anchor="middle" textLength="35.35" lengthAdjust="spacingAndGlyphs" fill="#000" stroke="#000" stroke-width="0.2">4000</text><line x1="718.50" y1="321.5" x2="718.50" y2="326.36" stroke="#000" stroke-width="1.11"/><text x="718.50" y="342.00" font-size="14.6" text-anchor="middle" textLength="35.35" lengthAdjust="spacingAndGlyphs" fill="#000" stroke="#000" stroke-width="0.2">6000</text><line x1="903.50" y1="321.5" x2="903.50" y2="326.36" stroke="#000" stroke-width="1.11"/><text x="903.50" y="342.00" font-size="14.6" text-anchor="middle" textLength="35.35" lengthAdjust="spacingAndGlyphs" fill="#000" stroke="#000" stroke-width="0.2">8000</text><line x1="1089.50" y1="321.5" x2="1089.50" y2="326.36" stroke="#000" stroke-width="1.11"/><text x="1089.50" y="342.00" font-size="14.6" text-anchor="middle" textLength="44.19" lengthAdjust="spacingAndGlyphs" fill="#000" stroke="#000" stroke-width="0.2">10000</text><line x1="1274.50" y1="321.5" x2="1274.50" y2="326.36" stroke="#000" stroke-width="1.11"/><text x="1274.50" y="342.00" font-size="14.6" text-anchor="middle" textLength="44.19" lengthAdjust="spacingAndGlyphs" fill="#000" stroke="#000" stroke-width="0.2">12000</text><line x1="1459.50" y1="321.5" x2="1459.50" y2="326.36" stroke="#000" stroke-width="1.11"/><text x="1459.50" y="342.00" font-size="14.6" text-anchor="middle" textLength="44.19" lengthAdjust="spacingAndGlyphs" fill="#000" stroke="#000" stroke-width="0.2">14000</text>
<line x1="100.64" y1="293.50" x2="105.5" y2="293.50" stroke="#000" stroke-width="1.11"/><text x="95.80" y="298.80" font-size="14.6" text-anchor="end" textLength="30.93" lengthAdjust="spacingAndGlyphs" fill="#000" stroke="#000" stroke-width="0.2">8.10</text><line x1="100.64" y1="245.50" x2="105.5" y2="245.50" stroke="#000" stroke-width="1.11"/><text x="95.80" y="250.80" font-size="14.6" text-anchor="end" textLength="30.93" lengthAdjust="spacingAndGlyphs" fill="#000" stroke="#000" stroke-width="0.2">8.15</text><line x1="100.64" y1="198.50" x2="105.5" y2="198.50" stroke="#000" stroke-width="1.11"/><text x="95.80" y="203.80" font-size="14.6" text-anchor="end" textLength="30.93" lengthAdjust="spacingAndGlyphs" fill="#000" stroke="#000" stroke-width="0.2">8.20</text><line x1="100.64" y1="150.50" x2="105.5" y2="150.50" stroke="#000" stroke-width="1.11"/><text x="95.80" y="155.80" font-size="14.6" text-anchor="end" textLength="30.93" lengthAdjust="spacingAndGlyphs" fill="#000" stroke="#000" stroke-width="0.2">8.25</text><line x1="100.64" y1="103.50" x2="105.5" y2="103.50" stroke="#000" stroke-width="1.11"/><text x="95.80" y="108.80" font-size="14.6" text-anchor="end" textLength="30.93" lengthAdjust="spacingAndGlyphs" fill="#000" stroke="#000" stroke-width="0.2">8.30</text><line x1="100.64" y1="55.50" x2="105.5" y2="55.50" stroke="#000" stroke-width="1.11"/><text x="95.80" y="60.80" font-size="14.6" text-anchor="end" textLength="30.93" lengthAdjust="spacingAndGlyphs" fill="#000" stroke="#000" stroke-width="0.2">8.35</text>
<rect x="1359.5" y="42.5" width="117" height="27" rx="2.8" fill="#fff" fill-opacity=".8" stroke="#cccccc" stroke-width="1.11"/>
<line x1="1363" y1="54" x2="1393" y2="54" stroke="#008000" stroke-width="2.08"/>
<text x="1404.50" y="59.30" font-size="14.6" text-anchor="start" textLength="30.86" lengthAdjust="spacingAndGlyphs" fill="#000" stroke="#000" stroke-width="0.2">mag</text>
<text x="1435.56" y="60.90" font-size="10.658" text-anchor="start" textLength="33.80" lengthAdjust="spacingAndGlyphs" font-style="italic" fill="#000" stroke="#000" stroke-width="0.2">AGASC</text>
<rect x="1346.5" y="247.7" width="129.8" height="66.4" rx="2.8" fill="#fff" fill-opacity=".8" stroke="#cccccc" stroke-width="1.11"/>
<circle cx="1365.5" cy="260.5" r="1.85" fill="#ff0000"/>
<text x="1390.20" y="263.90" font-size="14.6" text-anchor="start" textLength="47.20" lengthAdjust="spacingAndGlyphs" fill="#000" stroke="#000" stroke-width="0.2">not OK</text>
<circle cx="1365.5" cy="281.4" r="1.85" fill="#ffa500"/>
<text x="1390.20" y="284.80" font-size="14.6" text-anchor="start" textLength="80.07" lengthAdjust="spacingAndGlyphs" fill="#000" stroke="#000" stroke-width="0.2">Highlighted</text>
<circle cx="1365.5" cy="302.4" r="1.85" fill="#000"/>
<text x="1390.20" y="305.80" font-size="14.6" text-anchor="start" textLength="20.04" lengthAdjust="spacingAndGlyphs" fill="#000" stroke="#000" stroke-width="0.2">OK</text>
<text x="793.60" y="371.70" font-size="17.1" text-anchor="middle" textLength="175.93" lengthAdjust="spacingAndGlyphs" fill="#000" stroke="#000" stroke-width="0.2">Magnitude Estimates</text>
<g clip-path="url(#c2)"><path transform="scale(.5)" d="M0 0m325 938h0m0 84h0m0-31h0m0 176h0m0-83h0m1 50h0m0-78h0m0 40h0m0-85h0m0-95h0m1 215h0m0-62h0m0-112h0m0 92h0m0-42h0m0 6h0m1-19h0m0 9h0m0 33h0m0 38h0m0-56h0m1 49h0m0-26h0m0-4h0m0-50h0m0 48h0m0 8h0m1 19h0m0-4h0m0 28h0m0 17h0m0-43h0m1-4h0m0 18h0m0-1h0m0 3h0m0-58h0m0 77h0m1-86h0m0 99h0m0-17h0m0-4h0m0-26h0m1-31h0m0 19h0m0-9h0m0 36h0m0 17h0m0 11h0m1-98h0m0-89h0m0 192h0m0 61h0m0-64h0m1 24h0m0-44h0m0-72h0m0-5h0m0 132h0m1-125h0m0 31h0m0 24h0m0 2h0m0 19h0m0-40h0m1 94h0m0-89h0m0 31h0m0-46h0m0 58h0m1-18h0m0-20h0m0 24h0m0 55h0m0-61h0m0 8h0m1-3h0m0-20h0m0 73h0m0-112h0m0 75h0m1-5h0m0 33h0m0-126h0m0 133h0m0-36h0m0-81h0m1-5h0m0-39h0m0-9h0m0-18h0m0 5h0m1-25h0m0 131h0m0-124h0m0 170h0m0-177h0m1 1h0m0 5h0m0-13h0m0 17h0m1 199h0m0-183h0m0 8h0m0-4h0m0 41h0m0 157h0m1-27h0m0-6h0m0-65h0m0-56h0m0 151h0m1-83h0m0 16h0m0-26h0m0 40h0m0-57h0m0 113h0m1-115h0m0-16h0m0 75h0m0-33h0m0 37h0m1-25h0m0-2h0m0 62h0m0-92h0m0 6h0m0-27h0m1 45h0m0-6h0m0-23h0m0 65h0m0-50h0m1 18h0m0-48h0m0 44h0m0-27h0m0 33h0m0 66h0m1-109h0m0 8h0m0-1h0m0 37h0m0-47h0m1 72h0m0-3h0m0-63h0m0 5h0m0-43h0m0 101h0m1-46h0m0-5h0m0-27h0m0 104h0m0-56h0m1 29h0m0-54h0m0-13h0m0-57h0m0 62h0m1 63h0m0-42h0m0 18h0m0 7h0m0-57h0m1 16h0m0 70h0m0 51h0m0-74h0m0-40h0m0-35h0m1 42h0m0-11h0m0-14h0m0-4h0m0 45h0m1-13h0m0-18h0m0 24h0m0 9h0m0-14h0m0-7h0m1-22h0m0 32h0m0 7h0m0-10h0m0-26h0m1 55h0m0-45h0m0-15h0m0 30h0m0 3h0m0 12h0m1-6h0m0-16h0m0-30h0m0 17h0m0 21h0m1 21h0m0-6h0m0-48h0m0 53h0m0-52h0m0 17h0m1-19h0m0 13h0m0 20h0m0-13h0m0 10h0m1 18h0m0-21h0m0-3h0m0 23h0m0-18h0m0-22h0m1 16h0m0 23h0m0-56h0m0 49h0m0-41h0m1 18h0m0-18h0m0 19h0m0 29h0m0-50h0m0 41h0m1 16h0m0 1h0m0-42h0m0 20h0m0-3h0m1 22h0m0-71h0m0 25h0m0-7h0m0 16h0m0-22h0m1 34h0m0-40h0m0 27h0m0 8h0m0-27h0m1 8h0m0 2h0m0 41h0m0-14h0m0 6h0m0-10h0m1-20h0m0 23h0m0-20h0m0 22h0m0-14h0m1-19h0m0-15h0m0-15h0m0 35h0m0-25h0m1 64h0m0-10h0m0-43h0m0-2h0m0-18h0m1 2h0m0 3h0m0 15h0m0 15h0m0-24h0m0 66h0m1-38h0m0 33h0m0-31h0m0 66h0m0-84h0m1 13h0m0-32h0m0 81h0m0-35h0m0-41h0m0 89h0m1-54h0m0 74h0m0-151h0m0 108h0m0-37h0m1-10h0m0 78h0m0-44h0m0 33h0m0-72h0m0-26h0m1 111h0m0-66h0m0 36h0m0-47h0m0-5h0m1-8h0m0 7h0m0 49h0m0-7h0m0-27h0m0-15h0m1 31h0m0-8h0m0-20h0m0 9h0m0-19h0m1 48h0m0-35h0m0 9h0m0 5h0m0 9h0m1-40h0m0 42h0m0-21h0m0 6h0m0 16h0m1-20h0m0-28h0m0 49h0m0-30h0m0 1h0m1-9h0m0 34h0m0-21h0m0 33h0m0-34h0m1-18h0m0-7h0m0 79h0m0-40h0m0-17h0m0 44h0m1-91h0m0 47h0m0 42h0m0-104h0m0 56h0m1 50h0m0-24h0m0-3h0m0-12h0m0-38h0m0 50h0m1-4h0m0-12h0m0-13h0m0 5h0m0 40h0m1-57h0m0 48h0m0-1h0m0-100h0m0 137h0m0-58h0m1 39h0m0-69h0m0 12h0m0 54h0m0-19h0m1 2h0m0-40h0m0 82h0m0-74h0m0 7h0m1 12h0m0-30h0m0 2h0m0 10h0m0 6h0m1-24h0m0-1h0m0 97h0m0 21h0m0-48h0m0 38h0m1-3h0m0-32h0m0 3h0m0-30h0m0-18h0m1-99h0m0 234h0m0-52h0m0-44h0m0 39h0m1-141h0m0 143h0m0-16h0m0-91h0m0 23h0m0-1h0m1 75h0m0 15h0m0-85h0m0 52h0m0-53h0m1 16h0m0-17h0m0 10h0m0-62h0m0 65h0m0-108h0m1 129h0m0-129h0m0 152h0m0-69h0m0 23h0m1 15h0m0-80h0m0-11h0m0-9h0m0 113h0m0-115h0m1-29h0m0 42h0m0 82h0m0-4h0m1-124h0m0 125h0m0-42h0m0-6h0m0-57h0m1 87h0m0-70h0m1 89h0m2-117h0m1 7h0m0 44h0m0-34h0m1 49h0m0 66h0m0 17h0m0-142h0m0-18h0m1 168h0m0-23h0m1-112h0m0-20h0m0-3h0m0 126h0m1-66h0m0-17h0m0-5h0m0 2h0m0 37h0m1 142h0m0 4h0m0-35h0m0-143h0m0 64h0m0 83h0m1 9h0m0-62h0m0 53h0m0-57h0m0 39h0m1-37h0m0-21h0m0 50h0m0-23h0m0-3h0m0-35h0m1-1h0m0 66h0m0-47h0m0 5h0m0 16h0m1-4h0m0 32h0m0-5h0m0-17h0m0 25h0m0-36h0m1 4h0m0-29h0m0 55h0m0-55h0m0 22h0m1 3h0m0 10h0m0 37h0m0 15h0m0-113h0m1-5h0m0 29h0m0 24h0m0-46h0m0 33h0m1-50h0m0-35h0m0 8h0m0 11h0m0-28h0m0-18h0m1 21h0m0 3h0m0-41h0m0 19h0m0 14h0m1 30h0m0-56h0m0 27h0m1-17h0m0 164h0m0-147h0m0 10h0m0 108h0m1-82h0m0 3h0m0 76h0m0 26h0m0-49h0m0 32h0m1-41h0m0 45h0m0-12h0m0 27h0m0-36h0m1 37h0m0-30h0m0-35h0m0 17h0m0 44h0m0-47h0m1 44h0m0-19h0m0 6h0m0-3h0m0-7h0m1 50h0m0-74h0m0 25h0m0 20h0m0-28h0m0-24h0m1 52h0m0-35h0m0 15h0m0-5h0m0 12h0m1-12h0m0-13h0m0 46h0m0-12h0m0-3h0m0 8h0m1 53h0m0-39h0m0 43h0m0-93h0m0 29h0m1-13h0m0-17h0m0 58h0m0 24h0m0-98h0m0 50h0m1 0h0m0-72h0m0 75h0m0-48h0m0-12h0m1 35h0m0 5h0m0-21h0m0 25h0m0 23h0m0-66h0m1-10h0m0 62h0m0-44h0m0 10h0m0 6h0m1-17h0m0 23h0m0-3h0m0-10h0m0-5h0m0 68h0m1-92h0m0 16h0m0-19h0m0 49h0m0 37h0m1-66h0m0 1h0m0-14h0m0 8h0m0 51h0m0 14h0m1-33h0m0-25h0m0 20h0m0 21h0m0-31h0m1 90h0m0-79h0m0 86h0m0-160h0m0 133h0m0-131h0m1 33h0m0-4h0m0 6h0m0 44h0m0-15h0m1-59h0m0 106h0m0-35h0m0-51h0m0 70h0m0-107h0m1 129h0m0-19h0m0-38h0m0 37h0m0-21h0m1-11h0m0 6h0m0-18h0m0-3h0m0 1h0m0 3h0m1 4h0m0-10h0m0-1h0m0-11h0m0-21h0m1 56h0m0-58h0m0 22h0m0-4h0m0 31h0m0-18h0m1-2h0m0 11h0m0-21h0m0 38h0m0-6h0m1-35h0m0 8h0m0 45h0m0-43h0m0 6h0m0-15h0m1 20h0m0-2h0m0 22h0m0-19h0m0 5h0m1-19h0m0 55h0m0-42h0m0-25h0m0 83h0m0-73h0m1 5h0m0 7h0m0-4h0m0 22h0m0-34h0m1 12h0m0 42h0m0-51h0m0 37h0m0-5h0m0-29h0m1 19h0m0-13h0m0-4h0m0 8h0m0-11h0m1 40h0m0-68h0m0 17h0m0 31h0m0-9h0m0-35h0m1 48h0m0 16h0m0-79h0m0 15h0m0 19h0m1-29h0m0 26h0m0-6h0m0 2h0m0-3h0m0 37h0m1-22h0m0-6h0m0 30h0m0 4h0m0-26h0m1-36h0m0 35h0m0-26h0m0-3h0m0-2h0m1 14h0m0 50h0m0 9h0m0-23h0m0-17h0m0-4h0m1 7h0m0-4h0m0-20h0m0 39h0m0-39h0m1 0h0m0 48h0m0-40h0m0 4h0m0-11h0m1 57h0m0-88h0m0 38h0m0-19h0m1 39h0m0-20h0m0 3h0m0-49h0m0 74h0m0-61h0m1 34h0m0 19h0m0-19h0m0-18h0m1 34h0m0-25h0m0 1h0m0 23h0m0-20h0m1 0h0m0 59h0m0-17h0m0 6h0m0-12h0m1-32h0m0 9h0m0 4h0m0 21h0m0-33h0m0 57h0m1-1h0m0-44h0m0 21h0m0-27h0m0 6h0m1-1h0m0 38h0m0-4h0m0 33h0m0-42h0m0 5h0m1 25h0m0-6h0m0-20h0m0-46h0m0 112h0m1 10h0m0-40h0m0-55h0m0-99h0m0 75h0m0 83h0m1-19h0m0 87h0m0-69h0m0-63h0m0 102h0m1-158h0m0 141h0m0-42h0m0 48h0m0-29h0m0-57h0m1 102h0m0-56h0m0 68h0m0-32h0m0-71h0m1 42h0m0 6h0m0-39h0m0 26h0m0-29h0m0-21h0m1-7h0m0 51h0m0-13h0m0 19h0m0-50h0m1 25h0m0-48h0m0 70h0m0-9h0m0 58h0m0-47h0m1-2h0m0-23h0m0-10h0m0 37h0m0-15h0m1-15h0m0 15h0m0-17h0m0 44h0m0-32h0m1-54h0m0 75h0m0-139h0m0 190h0m0-145h0m1 82h0m0-28h0m0 62h0m0-76h0m0 83h0m0-85h0m1 45h0m0-12h0m0-61h0m0 170h0m0-145h0m1 32h0m0 77h0m0-119h0m0 79h0m0 3h0m0 53h0m1-52h0m0-161h0m0 116h0m0 114h0m0-74h0m1-76h0m0 155h0m0-9h0m0-111h0m0 18h0m0-28h0m1 80h0m0-117h0m0 30h0m0 67h0m0-47h0m1-1h0m0 23h0m0-14h0m0-3h0m0 19h0m0 5h0m1-31h0m0 42h0m0-48h0m0-7h0m0 25h0m1-17h0m0 25h0m0-31h0m0-49h0m0 53h0m0 12h0m1-2h0m0 31h0m0-14h0m0-10h0m0 7h0m1-16h0m0-24h0m0 57h0m0-16h0m0-17h0m0 28h0m1-6h0m0-29h0m0-2h0m0 5h0m0 29h0m1-33h0m0-6h0m0 28h0m0-9h0m0 8h0m1 10h0m0-30h0m0 42h0m0-92h0m0 39h0m1 40h0m0-118h0m0 103h0m0 40h0m0-96h0m0 22h0m1 47h0m0-6h0m0 48h0m0 46h0m0-7h0m1-136h0m0 99h0m0-56h0m0-114h0m0 168h0m0-44h0m1 19h0m0 50h0m0-106h0m0-3h0m0 36h0m1-2h0m0-32h0m0-3h0m0-51h0m0 48h0m0-6h0m1 69h0m0 39h0m0-135h0m0 113h0m0-79h0m1 30h0m0 43h0m0-53h0m0-65h0m0 18h0m0 69h0m1-10h0m0 52h0m0-29h0m0-19h0m0-13h0m1-11h0m0 17h0m0-33h0m0 44h0m0-33h0m0 36h0m1-12h0m0-12h0m0-12h0m0 30h0m0-8h0m1-4h0m0-12h0m0-25h0m0 15h0m0 21h0m0-1h0m1-32h0m0-1h0m0 5h0m0 21h0m0 21h0m1-2h0m0-18h0m0 25h0m0-19h0m0-53h0m0 40h0m1-13h0m0 47h0m0-67h0m0 52h0m0-13h0m1-5h0m0 5h0m0 24h0m0-50h0m0-72h0m0 120h0m1-64h0m0 113h0m0-86h0m0 63h0m0-137h0m1 127h0m0-74h0m0 38h0m0 91h0m0-89h0m0 4h0m1-54h0m0 63h0m0 93h0m0-51h0m0-30h0m1-63h0m0 50h0m0-56h0m0 48h0m0-26h0m0-19h0m1 28h0m0 54h0m0-83h0m0 42h0m0-36h0m1 143h0m0-110h0m0 2h0m0 22h0m0-18h0m0 48h0m1-4h0m0-73h0m0 32h0m0-44h0m0 16h0m1 40h0m0-28h0m0 8h0m0-27h0m0-30h0m0 42h0m1 10h0m0-55h0m0 50h0m0 9h0m0-7h0m1 36h0m0-76h0m0 7h0m0-2h0m0 11h0m0 14h0m1 7h0m0 6h0m0-31h0m0-5h0m0 3h0m1 37h0m0-61h0m0 55h0m0-16h0m1 7h0m0 37h0m0-21h0m0-13h0m0-33h0m0 29h0m1-15h0m0 33h0m0-18h0m0-32h0m0-15h0m1 31h0m0-5h0m0 11h0m0 10h0m0-5h0m0-32h0m1 66h0m0 26h0m0-82h0m0 69h0m0-60h0m1 105h0m0-95h0m0 59h0m0 15h0m0-116h0m0 137h0m1-174h0m0 76h0m0 59h0m0-4h0m0 12h0m1 71h0m0-65h0m0-136h0m0 54h0m0-9h0m0-4h0m1-51h0m0 136h0m0-116h0m0 30h0m0 63h0m1-73h0m0-39h0m0 89h0m0-78h0m0 206h0m0-41h0m1-134h0m0 27h0m0-36h0m0 11h0m0-16h0m1 101h0m0-103h0m0 25h0m0 8h0m0 9h0m1-36h0m0 49h0m0-22h0m0-21h0m0 44h0m1 0h0m0-4h0m0 35h0m0-65h0m0 3h0m0-17h0m1 39h0m0-9h0m0-4h0m0-19h0m0 28h0m1-2h0m0 25h0m0-20h0m0 10h0m0-22h0m0 7h0m1 40h0m0-27h0m0 17h0m0-13h0m1-17h0m0 51h0m0-32h0m0 29h0m0-19h0m0 2h0m1 21h0m0 27h0m0-38h0m0 17h0m0-28h0m1 2h0m0-15h0m0 9h0m0 52h0m0-3h0m0-17h0m1-16h0m0-8h0m0 19h0m0-20h0m0 27h0m1-42h0m0 32h0m0 1h0m0-1h0m0-10h0m0-31h0m1 26h0m0-15h0m0 34h0m0-28h0m0-3h0m1-5h0m0 40h0m0-1h0m0-20h0m0-12h0m0 30h0m1-22h0m0-29h0m0 73h0m0-13h0m0-22h0m1-12h0m0 10h0m0-11h0m0-20h0m0 38h0m0 9h0m1-46h0m0 63h0m0-51h0m0-9h0m0 20h0m1 18h0m0-14h0m0 15h0m0-52h0m0 26h0m0 12h0m1-7h0m0-2h0m0-11h0m0 14h0m0 21h0m1-10h0m0 17h0m0 7h0m0-34h0m0 16h0m0-9h0m1-16h0m0-7h0m0 16h0m0 13h0m0-25h0m1 30h0m0-48h0m0 40h0m0-33h0m0 42h0m0-38h0m1 8h0m0 12h0m0-24h0m0 11h0m0 8h0m1 2h0m0-12h0m0 5h0m0 20h0m0-2h0m0-13h0m1 23h0m0 15h0m0-56h0m0 28h0m0-57h0m1 42h0m0-12h0m0 2h0m0 13h0m0 8h0m0 24h0m1-7h0m0 10h0m0 6h0m0 9h0m0-55h0m1 85h0m0-141h0m0 103h0m0-53h0m0 4h0m0-3h0m1 17h0m0 1h0m0-10h0m0-16h0m0 4h0m1 13h0m0 34h0m0-12h0m0-20h0m0-22h0m0-8h0m1 43h0m0-19h0m0 19h0m0 7h0m0-20h0m1-11h0m0 6h0m0 53h0m0-71h0m0 67h0m0-66h0m1-7h0m0-35h0m0 95h0m0-20h0m0-13h0m1-7h0m0 19h0m0-38h0m0 37h0m0-12h0m0 2h0m1-26h0m0 8h0m0 71h0m0-83h0m0 68h0m1-3h0m0-8h0m0-18h0m0-30h0m0 64h0m1-42h0m0-30h0m0 5h0m0 20h0m0 20h0m1-31h0m0 17h0m0 24h0m0 23h0m0-62h0m0-14h0m1-15h0m0 13h0m0 18h0m0 11h0m0-8h0m1-11h0m0 38h0m0-27h0m0 10h0m0-23h0m0 1h0m1 58h0m0-12h0m0-30h0m0-11h0m0 29h0m1-19h0m0 1h0m0 12h0m0 7h0m0-25h0m0-28h0m1 61h0m0-43h0m0 15h0m0 46h0m0 7h0m1 34h0m0-79h0m0-36h0m0 79h0m0-4h0m0-30h0m1 17h0m0 20h0m0-116h0m0 134h0m0-37h0m1-29h0m0-60h0m0 102h0m0-50h0m0 58h0m0-37h0m1-12h0m0 22h0m0-42h0m0 6h0m0 21h0m1-3h0m0-9h0m0-1h0m0-33h0m0 47h0m1-30h0m0-12h0m0 21h0m0-11h0m0-30h0m1 64h0m0 2h0m0-35h0m0 11h0m0-31h0m0 43h0m1-14h0m0-12h0m0 57h0m0-73h0m0 28h0m1 21h0m0-5h0m0-3h0m0-36h0m0 46h0m0-46h0m1 39h0m0-20h0m0 16h0m0-5h0m0-20h0m1 20h0m0 10h0m0-33h0m0-21h0m0 47h0m1 2h0m0 5h0m0 16h0m0-14h0m0-23h0m0 21h0m1-19h0m0-9h0m0-20h0m0 33h0m1 31h0m0-37h0m0-9h0m0-34h0m0 49h0m0 23h0m1 10h0m0-50h0m0 29h0m0-49h0m0-16h0m1 57h0m0-27h0m0 27h0m0-29h0m0-6h0m0-22h0m1-28h0m0 34h0m0-29h0m0-15h0m0 144h0m1-162h0m0 29h0m0-12h0m0 6h0m1 19h0m1 36h0m0 11h0m0-74h0m0 32h0m1-16h0m1 107h0m0-95h0m1-23h0m1 16h0m1-20h0m0 156h0m1-171h0m0 177h0m0-113h0m0-32h0m0-26h0m0 131h0m1-36h0m0-33h0m0-13h0m0-7h0m0 32h0m1-6h0m0-8h0m0 85h0m0 21h0m0 19h0m0-82h0m1 35h0m0 6h0m0 21h0m0-26h0m0 53h0m1 11h0m0 17h0m0 11h0m0-75h0m0 16h0m0-105h0m1 113h0m0 22h0m0-13h0m0-113h0m0 113h0m1-16h0m0-104h0m0 40h0m0 40h0m0 35h0m0-127h0m1 121h0m0-93h0m0 105h0m0 29h0m0-61h0m1 23h0m0-7h0m0-8h0m0-143h0m0 152h0m0-35h0m1 26h0m0-1h0m0-17h0m0 4h0m0 6h0m1-20h0m0-4h0m0 11h0m0 66h0m0-32h0m0 5h0m1-33h0m0-54h0m0 36h0m0 19h0m0-68h0m1 34h0m0 47h0m0-40h0m0-22h0m0 2h0m0 66h0m1-36h0m0 39h0m0 28h0m0-82h0m0 102h0m1-76h0m0-44h0m0 14h0m0 26h0m0-18h0m0 10h0m1-56h0m0 37h0m0-9h0m0 68h0m0-27h0m1 16h0m0-68h0m0 8h0m0 29h0m0-28h0m0 26h0m1 7h0m0-22h0m0 8h0m0-51h0m0 88h0m1-53h0m0 40h0m0-36h0m0 38h0m0 13h0m0-68h0m1 36h0m0-39h0m0 48h0m0 2h0m0-45h0m1 37h0m0-14h0m0 21h0m0-15h0m0 41h0m0-38h0m1-4h0m0-23h0m0-1h0m0 21h0m0-2h0m1 4h0m0-47h0m0 60h0m0-33h0m0 14h0m0 28h0m1-39h0m0-13h0m0 17h0m0 30h0m0-37h0m1-1h0m0 23h0m0-28h0m0 52h0m0-8h0m0-18h0m1-8h0m0-18h0m0-1h0m0 35h0m0-37h0m1-12h0m0 14h0m0 20h0m0 4h0m0 10h0m0 23h0m1-24h0m0 13h0m0-34h0m0-8h0m1 3h0m0-4h0m0 28h0m0-2h0m0-26h0m0-36h0m1 117h0m0-22h0m0-32h0m0 35h0m0-19h0m1-25h0m0 36h0m0-73h0m0 5h0m0-2h0m0 11h0m1-15h0m0 58h0m0-60h0m0 84h0m0-151h0m1 140h0m0-52h0m0 83h0m0-18h0m0-62h0m0-10h0m1-42h0m0 27h0m0-13h0m0-19h0m0 101h0m1-83h0m0 58h0m0-27h0m0 9h0m0-22h0m0 1h0m1 7h0m0 19h0m0 30h0m0-41h0m0 3h0m1-2h0m0-11h0m0-27h0m0 15h0m0 14h0m0 20h0m1 14h0m0-59h0m0 17h0m0 12h0m0 32h0m1-26h0m0-21h0m0 3h0m0 19h0m0-14h0m0 8h0m1 3h0m0-37h0m0 12h0m0 9h0m0 16h0m1-37h0m0 57h0m0-34h0m0 29h0m0 21h0m0-35h0m1 33h0m0-37h0m0 21h0m0-28h0m0 18h0m1 24h0m0-22h0m0 17h0m0-63h0m0 2h0m0 21h0m1-5h0m0-66h0m0 91h0m0 5h0m0-80h0m1 54h0m0 106h0m0-181h0m0 107h0m0-108h0m0 127h0m1 40h0m0-40h0m0-54h0m0 44h0m0-65h0m1 72h0m0 18h0m0 94h0m0-85h0m0-44h0m0 97h0m1 4h0m0-53h0m0 63h0m0-20h0m0-34h0m1 24h0m0-20h0m0-38h0m0 48h0m0-80h0m1 31h0m0-29h0m0 38h0m0-14h0m0 17h0m0 21h0m1-35h0m0 27h0m0-26h0m0 33h0m0-23h0m1 6h0m0-33h0m0 32h0m0-31h0m0 13h0m0-20h0m1 39h0m0-29h0m0 1h0m0 6h0m0 8h0m1-24h0m0 58h0m0-44h0m0 28h0m0-23h0m0-7h0m1 10h0m0 13h0m0 15h0m0 11h0m0-14h0m1-27h0m0 53h0m0-117h0m0 82h0m0 29h0m0-73h0m1-6h0m0 29h0m0 44h0m0-33h0m0-35h0m1 14h0m0 70h0m0-65h0m0-18h0m0 52h0m0 26h0m1-24h0m0-18h0m0 6h0m0-1h0m0 59h0m1-50h0m0-1h0m0-14h0m0-25h0m0 40h0m0-40h0m1-5h0m0 7h0m0 32h0m0-38h0m0 37h0m1-6h0m0 26h0m0-15h0m0-48h0m0 23h0m1 2h0m0 12h0m0-1h0m0 13h0m0-13h0m1-36h0m0 34h0m0-48h0m0 31h0m0 19h0m0-35h0m1 27h0m0-24h0m0 32h0m0-42h0m0 22h0m1 3h0m0-15h0m0 31h0m0 33h0m0-27h0m0-36h0m1-14h0m0 61h0m0-40h0m0-2h0m0 41h0m1 8h0m0-74h0m0 27h0m0 18h0m0-21h0m0 64h0m1-62h0m0 19h0m0 14h0m0-71h0m0 59h0m1 1h0m0 32h0m0 19h0m0-42h0m0-85h0m0 165h0m1-50h0m0-27h0m0-42h0m0 36h0m0-34h0m1 56h0m0-23h0m0-39h0m0 65h0m0-55h0m0-22h0m1 11h0m0-1h0m0 35h0m0-6h0m0-35h0m1 14h0m0-31h0m0 30h0m0 5h0m0 3h0m0-33h0m1 9h0m0 35h0m0-26h0m0 38h0m0-49h0m1 35h0m0-53h0m0-4h0m0 22h0m0 94h0m0-38h0m1-36h0m0 2h0m0-3h0m0-34h0m0 84h0m1 26h0m0 6h0m0-121h0m0 8h0m0 13h0m0 46h0m1-99h0m0 1h0m0 2h0m0 31h0m0-27h0m1-3h0m0-8h0m0 1h0m0-36h0m0-10h0m0 237h0m1-208h0m0 72h0m0-90h0m0 111h0m1-14h0m0-105h0m1 128h0m1-1h0m1-99h0m0-13h0m0 136h0m1-155h0m0 186h0m0-185h0m1 0h0m0 166h0m0-81h0m0-33h0m1-21h0m0-28h0m0 9h0m0 31h0m0-10h0m0 62h0m1-64h0m0 136h0m0-85h0m0-6h0m0 18h0m1 44h0m0 14h0m0-21h0m0 9h0m0 24h0m0-34h0m1 23h0m0 7h0m0 21h0m0-23h0m0-7h0m1 61h0m0-31h0m0-8h0m0-15h0m0 44h0m0-78h0m1 59h0m0 21h0m0-19h0m0-32h0m0 32h0m1 29h0m0-36h0m0-3h0m0 8h0m0 53h0m0-64h0m1-18h0m0 41h0m0-21h0m0 37h0m0-32h0m1-13h0m0 27h0m0-11h0m0 33h0m0-64h0m0 31h0m1 48h0m0-34h0m0-25h0m0 2h0m0-92h0m1 104h0m0-8h0m0 33h0m0-49h0m0 47h0m0-45h0m1 41h0m0 7h0m0-108h0m0 119h0m1-82h0m0 34h0m0 46h0m0-32h0m0 18h0m0-43h0m1-34h0m0-36h0m0 106h0m0-1h0m0 3h0m1-30h0m0 34h0m0-108h0m0 77h0m0 5h0m0-96h0m1 79h0m0 44h0m0-118h0m0 60h0m0 31h0m1-27h0m0-39h0m0 43h0m0-10h0m0 67h0m0-28h0m1 10h0m0-41h0m0 42h0m0 5h0m0-28h0m1-7h0m0-17h0m0-22h0m0 6h0m0 23h0m1 45h0m0-67h0m0 44h0m0-11h0m0-9h0m1 21h0m0-16h0m0-26h0m0-8h0m0-14h0m0 24h0m1 29h0m0-21h0m0 33h0m0 30h0m0-65h0m1 21h0m0 12h0m0-64h0m0 38h0m1-25h0m0 26h0m0-4h0m0 2h0m0-27h0m0 72h0m1-35h0m0 7h0m0-24h0m0 22h0m0-14h0m1 13h0m0 5h0m0-28h0m0-13h0m0 16h0m0 36h0m1-12h0m0-33h0m0 23h0m0-26h0m0 15h0m1-31h0m0 54h0m0-26h0m0-15h0m0 7h0m0 40h0m1-10h0m0-10h0m0 14h0m0-14h0m0 1h0m1-4h0m0-1h0m0 9h0m0-37h0m0-5h0m0 26h0m1-33h0m0 1h0m0 33h0m0-47h0m0 5h0m1 12h0m0 27h0m0-16h0m0 19h0m0-27h0m0 24h0m1 26h0m0 7h0m0-13h0m0 25h0m0-64h0m1-17h0m0 33h0m0 28h0m0-10h0m0 7h0m0 5h0m1-48h0m0 29h0m0-31h0m0 35h0m0 4h0m1-34h0m0-54h0m0 60h0m0 19h0m0-53h0m0 33h0m1 10h0m0 23h0m0-51h0m0 34h0m0 14h0m1-15h0m0-46h0m0 8h0m0 68h0m0 35h0m0-133h0m1 57h0m0-77h0m0 65h0m0-5h0m0 21h0m1-4h0m0-10h0m0 8h0m0-54h0m0 60h0m0 4h0m1-46h0m0 60h0m0-20h0m0-10h0m0 40h0m1-48h0m0 13h0m0-23h0m0 12h0m0 32h0m0 4h0m1-13h0m0-11h0m0-2h0m0 1h0m0-17h0m1 38h0m0-14h0m0-44h0m0 32h0m0-1h0m0-15h0m1 42h0m0-36h0m0 10h0m0 13h0m0-21h0m1-26h0m0 24h0m0 11h0m0-39h0m0 22h0m0-30h0m1 15h0m0 25h0m0 15h0m0-6h0m0-31h0m1 51h0m0-79h0m0 106h0m0-65h0m0-18h0m0 50h0m1 40h0m0-43h0m0-48h0m0 40h0m1-11h0m0 21h0m0-92h0m0 111h0m0-16h0m0-26h0m1-30h0m0 112h0m0 15h0m0-71h0m0 6h0m1-29h0m0-22h0m0 3h0m0 19h0m0 10h0m0-12h0m1 11h0m0-61h0m0 15h0m0 32h0m0-23h0m1 33h0m0-13h0m0-5h0m0 52h0m0-48h0m0 35h0m1-57h0m0 89h0m0-25h0m0-71h0m0-63h0m1 63h0m0 12h0m0 104h0m0-55h0m0-41h0m0 7h0m1-9h0m0-40h0m0-4h0m0 62h0m0 14h0m1 34h0m0-65h0m0-25h0m0-39h0m0 120h0m0-10h0m1 36h0m0-136h0m0 118h0m0-72h0m1 110h0m0-39h0m0-70h0m0 50h0m0-10h0m0-23h0m1 117h0m0 7h0m0 19h0m0-216h0m0 119h0m1-6h0m0-115h0m0 167h0m0-51h0m0 35h0m0-112h0m1 65h0m0-87h0m0-42h0m0 113h0m0-43h0m1 59h0m0-19h0m0 92h0m0-78h0m0-115h0m0 60h0m1 109h0m0-10h0m0-70h0m0-84h0m0 42h0m1 19h0m0-28h0m0 60h0m0-38h0m0 23h0m0 14h0m1-35h0m0 40h0m0-26h0m0-24h0m0 53h0m1-55h0m0 15h0m0 24h0m0 2h0m0 3h0m1-3h0m0 21h0m0-27h0m0-23h0m0 63h0m1-65h0m0 61h0m0-3h0m0-9h0m0-6h0m0-4h0m1-31h0m0 26h0m0-13h0m0 39h0m0-20h0m1 52h0m0-11h0m0-77h0m0 56h0m0-16h0m0-6h0m1 6h0m0 78h0m0-56h0m0-106h0m0 62h0m1 89h0m0-27h0m0 32h0m0-42h0m0 2h0m0 2h0m1 31h0m0 49h0m0-101h0m0 12h0m0-17h0m1-33h0m0 77h0m0-85h0m0 80h0m0-70h0m0 19h0m1 82h0m0-101h0m0 27h0m0 20h0m0 8h0m1-8h0m0 30h0m0 15h0m0-44h0m0-28h0m0 29h0m1-25h0m0 59h0m0-76h0m0 31h0m0 12h0m1-6h0m0-7h0m0 6h0m0-6h0m0 38h0m0-42h0m1 19h0m0 20h0m0-42h0m0 18h0m0-36h0m1 46h0m0-43h0m0 16h0m0 27h0m0-38h0m0 6h0m1-9h0m0 33h0m0 40h0m0-43h0m0-13h0m1-17h0m0-6h0m0-4h0m0 14h0m0 9h0m0 12h0m1-22h0m0 21h0m0-15h0m0 12h0m0-24h0m1 24h0m0 6h0m0-1h0m0-26h0m0 24h0m1-39h0m0 48h0m0-29h0m0 13h0m0 19h0m0-25h0m1-11h0m0-5h0m0 21h0m0 19h0m0-8h0m1-2h0m0-52h0m0 67h0m0-25h0m0-53h0m0 74h0m1-60h0m0 4h0m0 14h0m0 5h0m0 50h0m1-36h0m0 3h0m0-34h0m0 1h0m0 52h0m0 26h0m1-35h0m0-58h0m0 38h0m0 1h0m0-14h0m1-115h0m0 124h0m0 26h0m0-28h0m0 5h0m1-12h0m0 15h0m0-20h0m0 12h0m0 1h0m1-16h0m0 20h0m0 28h0m0-7h0m0-13h0m0-28h0m1 36h0m0-6h0m0-34h0m0-6h0m0 63h0m1-6h0m0-21h0m0-6h0m0 15h0m0 20h0m0-81h0m1 39h0m0-26h0m0 16h0m0 5h0m0 50h0m1-45h0m0 4h0m0-2h0m0 21h0m0 10h0m0-28h0m1-14h0m0-9h0m0 18h0m0 41h0m0-31h0m1 2h0m0 6h0m0 11h0m0-38h0m0 29h0m0-17h0m1-12h0m0 29h0m0-10h0m0 7h0m0-40h0m1 41h0m0 17h0m0-55h0m0 73h0m0-83h0m0 22h0m1 0h0m0 1h0m0 7h0m0-7h0m0 64h0m1-47h0m0 20h0m0 17h0m0-14h0m0-19h0m0-14h0m1 23h0m0 2h0m0-53h0m0 17h0m0 34h0m1 0h0m0-23h0m0-18h0m0 37h0m0-10h0m0-29h0m1 77h0m0-53h0m0 14h0m0 30h0m0-45h0m1-24h0m0 49h0m0 11h0m0-84h0m0 50h0m0 47h0m1-53h0m0-19h0m0 37h0m0 63h0m0-52h0m1 17h0m0-92h0m0 74h0m0-76h0m0 51h0m1-5h0m0-35h0m0 65h0m0-17h0m0-3h0m1-16h0m0 19h0m0-16h0m0-15h0m0 27h0m0-37h0m1 28h0m0 3h0m0-17h0m0 22h0m0-16h0m1 22h0m0 13h0m0-35h0m0-9h0m0 16h0m0-21h0m1 28h0m0-53h0m0 50h0m0-17h0m0 11h0m1 1h0m0 14h0m0-50h0m0 32h0m0 9h0m0-38h0m1 2h0m0 36h0m0-30h0m0-10h0m0 20h0m1 31h0m0-24h0m0 15h0m0 12h0m0-29h0m0-8h0m1 63h0m0-39h0m0 12h0m0-25h0m0 25h0m1 21h0m0-68h0m0 42h0m0-41h0m0 35h0m0 39h0m1 23h0m0 6h0m0-41h0m0-15h0m0-47h0m1 103h0m0-51h0m0-24h0m0-19h0m0 15h0m0 15h0m1-2h0m0 56h0m0-38h0m0 35h0m0-93h0m1 36h0m0 41h0m0 11h0m0 4h0m0-41h0m0 53h0m1-6h0m0 61h0m0-108h0m0-10h0m0-7h0m1 3h0m0 91h0m0-127h0m0-18h0m0 136h0m0-87h0m1-74h0m0 142h0m0 13h0m0-15h0m0-69h0m1 44h0m0-75h0m0 149h0m0-115h0m0-31h0m0 97h0m1 74h0m0 2h0m0-134h0m0 131h0m0-169h0m1 61h0m0-73h0m0 75h0m0-111h0m0 51h0m0 32h0m1 21h0m0 3h0m0-1h0m0-18h0m0 27h0m1 34h0m0 5h0m0-14h0m0-23h0m0 32h0m0-28h0m1-9h0m0-19h0m0 44h0m0 6h0m1-2h0m0-18h0m0-41h0m0 101h0m0-69h0m0-6h0m1-24h0m0 2h0m0 20h0m0 49h0m0-20h0m1-11h0m0 13h0m0-46h0m0 40h0m0 24h0m0-38h0m1-37h0m0 60h0m0 25h0m0-7h0m0-44h0m1-13h0m0 55h0m0 8h0m0-88h0m0-84h0m0-20h0m1 16h0m0 163h0m0-45h0m0 11h0m0 16h0m1 0h0m0-23h0m0-17h0m0-30h0m0-2h0m0 58h0m1 5h0m0-63h0m0 9h0m0 88h0m0-39h0m1 30h0m0-51h0m0 66h0m0-69h0m0 5h0m0 50h0m1-7h0m0 10h0m0-14h0m0-26h0m0-25h0m1-97h0m0 206h0m0-80h0m0 16h0m0-30h0m0-129h0m1 9h0m0 124h0m0-38h0m0 37h0m0-41h0m1 41h0m0-40h0m0 70h0m0-50h0m0-16h0m0 21h0m1 38h0m0-39h0m0 27h0m0-13h0m0-11h0m1-36h0m0 40h0m0 21h0m0-61h0m0 44h0m1 7h0m0-7h0m0 1h0m0-33h0m0 74h0m0-28h0m1-33h0m0 13h0m0 5h0m0 39h0m0-60h0m1 30h0m0-41h0m0 77h0m0-57h0m0-4h0m0-21h0m1 31h0m0 16h0m0-18h0m0 12h0m0-10h0m1 46h0m0-42h0m0-2h0m0-2h0m0 2h0m0-45h0m1-6h0m0 21h0m0 27h0m0-42h0m0 39h0m1 18h0m0 8h0m0-17h0m0-61h0m0 6h0m0 3h0m1 31h0m0 31h0m0-30h0m0 10h0m0 15h0m1-45h0m0 64h0m0-8h0m0-7h0m0-14h0m0-9h0m1-20h0m0-2h0m0 28h0m0 3h0m0-16h0m1-20h0m0 11h0m0-4h0m0-6h0m0 11h0m0 6h0m1 13h0m0 20h0m0-11h0m0-13h0m1-30h0m0-14h0m0 65h0m0-50h0m0-6h0m0 108h0m1-96h0m0 17h0m0 90h0m0-101h0m0-32h0m1-6h0m0 71h0m0-74h0m0-18h0m0 24h0m0 116h0m1-127h0m0 75h0m0-3h0m0-85h0m0-5h0m1-1h0m0 43h0m0-31h0m0-5h0m0 16h0m0-1h0m1-13h0m0 26h0m0-35h0m0 6h0m0 9h0m1-58h0m0 50h0m0-49h0m0 23h0m1 8h0m0-22h0m1-5h0m0 19h0m0 26h0m0-33h0m0 85h0m0-73h0m1 12h0m0-2h0m0 5h0m0 27h0m0-12h0m1 33h0m0 53h0m0-35h0m0 44h0m0-9h0m0 12h0m1-30h0m0 35h0m0-10h0m0-7h0m0 9h0m1-16h0m0 8h0m0 4h0m0 18h0m0-5h0m0 14h0m1 0h0m0 6h0m0-51h0m0 14h0m0 43h0m1-19h0m0-18h0m0 22h0m0-40h0m0 60h0m0-27h0m1 48h0m0-71h0m0 38h0m0-18h0m0-16h0m1 24h0m0 7h0m0 5h0m0-45h0m0-4h0m0 43h0m1-38h0m0 43h0m0 34h0m0-34h0m0 1h0m1-25h0m0-3h0m0 25h0m0-1h0m0-13h0m0 47h0m1-65h0m0-9h0m0 19h0m0 32h0m0-26h0m1-57h0m0-44h0m0-7h0m0 31h0m0-37h0m0 94h0m1-65h0m0-36h0m0-39h0m0 38h0m0-27h0m1 37h0m0 86h0m0 1h0m0-125h0m1 4h0m0-5h0m0 6h0m1 3h0m0-6h0m0 122h0m0 44h0m0-149h0m1-1h0m0 12h0m0 12h0m0-21h0m0 26h0m1-3h0m0 110h0m0-67h0m0 68h0m0-26h0m0 1h0m1 36h0m0-29h0m0 15h0m0 13h0m0 12h0m1-42h0m0-29h0m0 4h0m0 26h0m0-17h0m0 91h0m1-90h0m0 38h0m0-49h0m0-6h0m0 32h0m1 15h0m0-1h0m0-97h0m0 101h0m0-35h0m0-22h0m1-20h0m0 107h0m0-59h0m0 47h0m0-29h0m1-40h0m0 93h0m0-73h0m0 11h0m0-36h0m0 32h0m1-8h0m0 17h0m0-45h0m0 12h0m0 13h0m1 98h0m0-108h0m0 35h0m0-33h0m0 6h0m0-5h0m1 21h0m0-13h0m0 7h0m0 27h0m0-40h0m1 26h0m0-18h0m0-17h0m0-7h0m0 16h0m0 4h0m1 6h0m0 16h0m0-27h0m0 4h0m0 19h0m1-23h0m0 35h0m0-34h0m0 23h0m0 3h0m0-1h0m1-8h0m0 11h0m0-22h0m0-1h0m0-59h0m1 98h0m0-28h0m0-26h0m0-21h0m0 38h0m0-25h0m1 38h0m0-37h0m0 49h0m0 33h0m0-57h0m1 19h0m0-9h0m0 30h0m0 70h0m0-65h0m0 16h0m1 51h0m0-25h0m0-57h0m0-9h0m0 77h0m1 15h0m0-35h0m0 5h0m0-46h0m0-141h0m0 141h0m1-25h0m0-92h0m0 87h0m0 17h0m0-46h0m1 39h0m0-88h0m0 68h0m0-1h0m0 11h0m0-28h0m1 18h0m0 3h0m0-8h0m0 18h0m0-41h0m1-10h0m0 50h0m0-13h0m0-20h0m0 38h0m0-10h0m1-27h0m0 8h0m0-3h0m0 46h0m0-64h0m1 21h0m0 5h0m0-42h0m0 19h0m0 51h0m1-71h0m0 50h0m0-8h0m0 21h0m0-56h0m0 32h0m1-13h0m0-10h0m0 20h0m0 43h0m0-77h0m1 39h0m0 25h0m0-25h0m0-2h0m0 4h0m0-7h0m1-12h0m0-29h0m0 19h0m0 16h0m0-43h0m1 45h0m0-48h0m0 49h0m0 35h0m0-70h0m0 44h0m1 8h0m0-4h0m0-6h0m0-33h0m0 51h0m1 105h0m0-142h0m0-10h0m0 66h0m0-52h0m0-18h0m1 114h0m0-12h0m0-50h0m0-48h0m0 51h0m1-57h0m0 37h0m0-21h0m0 20h0m0-4h0m1 8h0m0 5h0m0-6h0m0-7h0m0-1h0m1 23h0m0-19h0m0-3h0m0-23h0m0 12h0m1-2h0m0 48h0m0-22h0m0-49h0m0 15h0m1-55h0m0-30h0m0 143h0m0 2h0m0-18h0m1-109h0m0 67h0m0 43h0m0 56h0m0-68h0m1 10h0m0-89h0m0 98h0m0 44h0m0 1h0m0-105h0m1 10h0m0 47h0m0-31h0m0 1h0m0 42h0m1-50h0m0 34h0m0-16h0m0-25h0m0 61h0m0-48h0m1 3h0m0-25h0m0 77h0m0-37h0m0 73h0m1-54h0m0-57h0m0-24h0m0 56h0m0 82h0m0 33h0m1-99h0m0 55h0m0-53h0m0 22h0m0 1h0m1-77h0m0 151h0m0-59h0m0-46h0m0-29h0m0 110h0m1 13h0m0-25h0m0-70h0m0 109h0m0-134h0m1 112h0m0 14h0m0-41h0m0-24h0m0 32h0m0-25h0m1-47h0m0 3h0m0 82h0m0-131h0m0-31h0m1 93h0m0-32h0m0 19h0m0 48h0m0-36h0m0 35h0m1 2h0m0-2h0m0-4h0m0-47h0m0 49h0m1-3h0m0-13h0m0 29h0m0-12h0m0 8h0m0-42h0m1 50h0m0-28h0m0-6h0m0-27h0m0 9h0m1 15h0m0 43h0m0-121h0m0 34h0m0 38h0m0 77h0m1-40h0m0 16h0m0-5h0m0-15h0m0 16h0m1-11h0m0-16h0m0-4h0m0 37h0m0-38h0m0-41h0m1 40h0m0 7h0m0 1h0m0-60h0m0 30h0m1 0h0m0 6h0m0 13h0m0-41h0m0 46h0m0 41h0m1-59h0m0-8h0m0 13h0m0-9h0m0 2h0m1 3h0m0-38h0m0 12h0m0 18h0m0 8h0m0 13h0m1 15h0m0 1h0m0-3h0m0-21h0m0 1h0m1-21h0m0 12h0m0 46h0m0-6h0m0-23h0m0-70h0m1 64h0m0-21h0m0 7h0m0 16h0m0-27h0m1 60h0m0-21h0m0 12h0m0-42h0m0-37h0m0 55h0m1 15h0m0-23h0m0 4h0m0-14h0m1 22h0m0 1h0m0-40h0m0-2h0m0 13h0m0 34h0m1-47h0m0-42h0m0 89h0m0-38h0m0 20h0m1-13h0m0 4h0m0-8h0m0 27h0m0-18h0m0 17h0m1-22h0m0 4h0m0 16h0m0-12h0m0 9h0m1-19h0m0 1h0m0-2h0m0 55h0m0-45h0m0 12h0m1-2h0m0-32h0m0 3h0m0 17h0m0-39h0m1 1h0m0 29h0m0-26h0m0-39h0m0 132h0m0 17h0m1-4h0m0-33h0m0-22h0m0-105h0m0 155h0m1-183h0m0 9h0m0 113h0m0 65h0m0-160h0m1 60h0m0 44h0m0-66h0m0 78h0m1-56h0m0 12h0m0 11h0m0-21h0m0 43h0m0-28h0m1 28h0m0-59h0m0 32h0m0 21h0m0-72h0m1 106h0m0 19h0m0-154h0m0 177h0m0-212h0m0 37h0m1 122h0m0 27h0m0-79h0m0 11h0m0 30h0m1 9h0m0 19h0m0-182h0m0 86h0m0 25h0m0 23h0m1-9h0m0-43h0m0 90h0m0-50h0m0 4h0m1 12h0m0-56h0m0 49h0m0-79h0m0-13h0m0 158h0m1-191h0m0 76h0m0 66h0m0-1h0m0-63h0m1 9h0m0 18h0m0-79h0m0 90h0m0-78h0m0 67h0m1-31h0m0 16h0m0-12h0m0 57h0m0-44h0m1 6h0m0-1h0m0 19h0m0 15h0m0-55h0m0 14h0m1-4h0m0-16h0m0 35h0m0-42h0m0 14h0m1 9h0m0 2h0m0-36h0m0 28h0m0-7h0m1 43h0m0-37h0m0 47h0m0-8h0m0-42h0m0 32h0m1 74h0m0-38h0m0-26h0m0-47h0m0 37h0m1-49h0m0 26h0m0 27h0m0-72h0m0 52h0m0 13h0m1 12h0m0-27h0m0 15h0m0-29h0m0-18h0m1 20h0m0 20h0m0-41h0m0 27h0m0-14h0m0 57h0m1-37h0m0-31h0m0 43h0m0-19h0m1-36h0m0 3h0m0 22h0m0-12h0m0 80h0m0-39h0m1-14h0m0 66h0m0-51h0m0-27h0m0-29h0m1 47h0m0-62h0m0 87h0m0-30h0m0-31h0m0 1h0m1-27h0m0 118h0m0-81h0m0 27h0m0 18h0m1-4h0m0-22h0m0-22h0m0 22h0m0 23h0m0-25h0m1-31h0m0 49h0m0-31h0m0-11h0m0 31h0m1 14h0m0 4h0m0-47h0m0 12h0m0 23h0m0-8h0m1 49h0m0-20h0m0 42h0m0-100h0m0 8h0m1-16h0m0 111h0m0-68h0m0 81h0m0 36h0m0-98h0m1 4h0m0 5h0m0 20h0m0-22h0m0 1h0m1 15h0m0-1h0m0 13h0m0-13h0m0-27h0m0 39h0m1-37h0m0 45h0m0-11h0m0-76h0m0 91h0m1-49h0m0 38h0m0-22h0m0-5h0m0-7h0m0 22h0m1 10h0m0-66h0m0 36h0m0 29h0m1 6h0m0-37h0m0-19h0m0 44h0m0 11h0m0-43h0m1 33h0m0-22h0m0 33h0m0-23h0m0 16h0m1-7h0m0 8h0m0-23h0m0 14h0m0-13h0m0 16h0m1-35h0m0 39h0m0-9h0m0-30h0m0 19h0m1 18h0m0-3h0m0 5h0m0-38h0m0 21h0m0 1h0m1 33h0m0-51h0m0-1h0m0-8h0m0 50h0m1-48h0m0 36h0m0-22h0m0 5h0m0-14h0m0 46h0m1-31h0m0-14h0m0-25h0m0 42h0m0-15h0m1-19h0m0 37h0m0-3h0m0-8h0m0-26h0m0 36h0m1-12h0m0 15h0m0-13h0m0-34h0m0 21h0m1 2h0m0 21h0m0 3h0m0-33h0m0-4h0m0 41h0m1-9h0m0 3h0m0-29h0m0 51h0m1-60h0m0-15h0m0 95h0m0-50h0m0 14h0m0 37h0m1-136h0m0 17h0m0 108h0m0 1h0m0-42h0m1-66h0m0 10h0m0 52h0m0 83h0m0 27h0m0-92h0m1-49h0m0-25h0m0 66h0m0 3h0m1-46h0m0 44h0m0-30h0m0 86h0m0-94h0m0 25h0m1-1h0m0-12h0m0 18h0m0 33h0m0-22h0m1-46h0m0 39h0m0-3h0m0 10h0m0-6h0m0 8h0m1 10h0m0-22h0m0 12h0m0 10h0m0-49h0m1 29h0m0-12h0m0-34h0m0-9h0m0 74h0m0-36h0m1 24h0m0 55h0m0-71h0m0 69h0m0 11h0m1-61h0m0-20h0m0-17h0m0 33h0m0-56h0m0 79h0m1 4h0m0-83h0m0 135h0m0-125h0m0-25h0m1 146h0m0 20h0m0-89h0m0-65h0m0 151h0m0-9h0m1-91h0m0-14h0m0-74h0m0-14h0m0 142h0m1-88h0m0 39h0m0-62h0m0 65h0m0 10h0m0-39h0m1 12h0m0 34h0m0-66h0m0 50h0m0-34h0m1 52h0m0-78h0m0 51h0m0 34h0m0 7h0m0-117h0m1 61h0m0-21h0m0 60h0m0-12h0m0 6h0m1-30h0m0 19h0m0-17h0m0 39h0m0-101h0m0 116h0m1-63h0m0 4h0m0-65h0m0 85h0m0-94h0m1 57h0m0 165h0m0-12h0m0-140h0m0-75h0m0 134h0m1-21h0m0-23h0m0 23h0m0-8h0m0 55h0m1 4h0m0-91h0m0 8h0m0 12h0m0-21h0m0 9h0m1 2h0m0-20h0m0 70h0m0-51h0m0 55h0m1-61h0m0 3h0m0 17h0m0-17h0m0 23h0m1-4h0m0-21h0m0 64h0m0-56h0m0-2h0m1-7h0m0 6h0m0 41h0m0-60h0m0 49h0m0 30h0m1-56h0m0 4h0m0-7h0m0-5h0m0-21h0m1 13h0m0 50h0m0-39h0m0 12h0m1-3h0m0 3h0m0-18h0m0 33h0m0 32h0m0-45h0m1 15h0m0-10h0m0-20h0m0 37h0m0-25h0m1 25h0m0-8h0m0 4h0m0-28h0m0 30h0m1-20h0m0 2h0m0 3h0m0-22h0m0-9h0m1 8h0m0-12h0m0 25h0m0-26h0m0 8h0m0 17h0m1-34h0m0 75h0m0 22h0m0 33h0m0-106h0m1 134h0m0-173h0m0 147h0m0-70h0m0-21h0m0-20h0m1 28h0m0-27h0m0-5h0m0 18h0m0 36h0m1-57h0m0 30h0m0 6h0m0-18h0m0 46h0m0-59h0m1 43h0m0-34h0m0 5h0m0 19h0m0-24h0m1 0h0m0 10h0m0-5h0m0-3h0m0 19h0m0 7h0m1-19h0m0 33h0m0-13h0m0-34h0m1 16h0m0-15h0m0 16h0m0 14h0m0-33h0m0 16h0m1-1h0m0 7h0m0-90h0m0 62h0m0-17h0m1 53h0m0-37h0m0 69h0m0-17h0m0-8h0m0-7h0m1-120h0m0 165h0m0-113h0m0 43h0m0 8h0m1 24h0m0-5h0m0-21h0m0-47h0m0 8h0m0-19h0m1-16h0m0 30h0m0 51h0m0-60h0m0 81h0m1-104h0m0 76h0m0 8h0m0-119h0m0 22h0m1 53h0m0-65h0m0 193h0m0-159h0m1 160h0m0-210h0m0 132h0m1-112h0m0 96h0m1-48h0m0-47h0m0 78h0m1-53h0m0 73h0m0 7h0m0-81h0m1-14h0m0-31h0m0 36h0m0 18h0m0 73h0m0-102h0m1 102h0m0-102h0m0 89h0m0-56h0m0 28h0m1-27h0m0 113h0m0-40h0m0-68h0m0 88h0m0 33h0m1 21h0m0-49h0m0 6h0m0 3h0m1-37h0m0 47h0m0-8h0m0-5h0m0-17h0m0 37h0m1 3h0m0-13h0m0 14h0m0 21h0m0-19h0m1 1h0m0 13h0m0 13h0m0-12h0m0-6h0m0-28h0m1-9h0m0 79h0m0-60h0m0 7h0m0-6h0m1-9h0m0 29h0m0 37h0m0-64h0m0 12h0m0-19h0m1 5h0m0 21h0m0-25h0m0 22h0m0-19h0m1 37h0m0-35h0m0-1h0m0 35h0m0-25h0m0-67h0m1 88h0m0 35h0m0-122h0m0-30h0m0 85h0m1-12h0m0-12h0m0 48h0m0-54h0m0 48h0m0-4h0m1 9h0m0-29h0m0-58h0m0 71h0m0 17h0m1-27h0m0 5h0m0 12h0m0-48h0m0 20h0m0 30h0m1-23h0m0-16h0m0 48h0m0 3h0m0-28h0m1 6h0m0 9h0m0-12h0m0 20h0m0-67h0m0 32h0m1-8h0m0 27h0m0-25h0m0 64h0m0-40h0m1-24h0m0 21h0m0-13h0m0 43h0m0-38h0m0-15h0m1-5h0m0 14h0m0 12h0m0-40h0m0 43h0m1-4h0m0-10h0m0-9h0m0-8h0m0 37h0m0-40h0m1 3h0m0 61h0m0-63h0m0 57h0m0-97h0m1-19h0m0 144h0m0-94h0m0 79h0m0-29h0m0-12h0m1 17h0m0-104h0m0 64h0m0-16h0m0-35h0m1 44h0m0 40h0m0-25h0m0 4h0m0-58h0m0 109h0m1-78h0m0 88h0m0-85h0m0 13h0m0-43h0m1 41h0m0-15h0m0 31h0m0-25h0m0 3h0m0 6h0m1 3h0m0-13h0m0 30h0m0-23h0m0-31h0m1 7h0m0 10h0m0 67h0m0-15h0m0 12h0m0-30h0m1-12h0m0-34h0m0 46h0m0 3h0m0-66h0m1 57h0m0 61h0m0-90h0m0 56h0m0-48h0m0-40h0m1 18h0m0 48h0m0-18h0m0 21h0m0-67h0m1 12h0m0 15h0m0-15h0m0-14h0m0 39h0m0-27h0m1-21h0m0 43h0m0-34h0m0 14h0m0 31h0m1-18h0m0 27h0m0-42h0m0 30h0m0-16h0m0 1h0m1-43h0m0 25h0m0 10h0m0-33h0m0 51h0m1-32h0m0 5h0m0 3h0m0-11h0m0 32h0m0-50h0m1 24h0m0-1h0m0 2h0m0 3h0m0-56h0m1 60h0m0 17h0m0-8h0m0 50h0m0-70h0m1 20h0m0-7h0m0 10h0m0-28h0m0-28h0m0 58h0m1-40h0m0 5h0m0-2h0m0 11h0m0-14h0m1-7h0m0 34h0m0 44h0m0-64h0m0 21h0m0-41h0m1 39h0m0-15h0m0 56h0m0-58h0m0 3h0m1-25h0m0 21h0m0-2h0m0 2h0m0 49h0m0-61h0m1 14h0m0-2h0m0-5h0m0 20h0m0-8h0m1-8h0m0-7h0m0-19h0m0 19h0m0-5h0m0 28h0m1-56h0m0 13h0m0 9h0m0 43h0m0-37h0m1 36h0m0-17h0m0 5h0m0 21h0m0-28h0m0-30h0m1 50h0m0-32h0m0 21h0m0 6h0m0-10h0m1-4h0m0 28h0m0 12h0m0-11h0m0 49h0m0 4h0m1-45h0m0-16h0m0 9h0m0 6h0m0 7h0m1 4h0m0-14h0m0 5h0m0-7h0m0-12h0m1-120h0m0 177h0m0-63h0m0 64h0m0-6h0m1-32h0m0 27h0m0-55h0m0 53h0m0-40h0m0 33h0m1-19h0m0 59h0m0 8h0m0-45h0m0 55h0m1-95h0m0 51h0m0 8h0m0-51h0m0 51h0m0 3h0m1-28h0m0 16h0m0-3h0m0-2h0m0-11h0m1 22h0m0-35h0m0 39h0m0-20h0m0 10h0m0-35h0m1 44h0m0-69h0m0 68h0m0-27h0m0 3h0m1-11h0m0 2h0m0 82h0m0 19h0m0-67h0m0-20h0m1 81h0m0-92h0m0-68h0m0 75h0m0-24h0m1 57h0m0-105h0m0 75h0m0-7h0m0-2h0m0 22h0m1-15h0m0-13h0m0 77h0m0-110h0m0 10h0m1 60h0m0 62h0m0-61h0m0 50h0m0-220h0m0 51h0m1 75h0m0 31h0m0-85h0m0 22h0m0-65h0m1 198h0m0-125h0m0 87h0m0-142h0m0 172h0m0-32h0m1-5h0m0-33h0m0-6h0m0-57h0m0 40h0m1-10h0m0-6h0m0 36h0m0-59h0m0 51h0m0-39h0m1-1h0m0 36h0m0-46h0m0 11h0m0 3h0m1 4h0m0-1h0m0-9h0m0-12h0m0 68h0m0-84h0m1 34h0m0-4h0m0 20h0m0-1h0m0-26h0m1 42h0m0 16h0m0-69h0m0 18h0m0 31h0m0-112h0m1 77h0m0-12h0m0 31h0m0-11h0m0 66h0m1-177h0m0 247h0m0-79h0m0-51h0m0 30h0m0-45h0m1 11h0m0-42h0m0 80h0m0-66h0m0 81h0m1 13h0m0-55h0m0-78h0m0 65h0m0 89h0m0 1h0m1-115h0m0 77h0m0-66h0m0-79h0m0 76h0m1 20h0m0 61h0m0 38h0m0-76h0m0-109h0m0 140h0m1-54h0m0 36h0m0-57h0m0-26h0m0-13h0m1 20h0m0-20h0m0-2h0m0-11h0m0 53h0m0-74h0m1 5h0m0 126h0m0-152h0m0 149h0m0-105h0m1-15h0m0-6h0m0-15h0m0 7h0m1 108h0m0-95h0m1 67h0m0-76h0m0-23h0m1 136h0m1-90h0m0-23h0m0-19h0m0 4h0m0 36h0m1 109h0m1-153h0m0 130h0m0 4h0m1-42h0m0-62h0m0 18h0m0-5h0m0-10h0m1 5h0m0 46h0m0 68h0m0-68h0m0 66h0m0 27h0m1-3h0m0-27h0m0-12h0m0-7h0m0 17h0m1 28h0m0-40h0m0 19h0m0 17h0m0-60h0m0 52h0m1-41h0m0 52h0m0-10h0m0-2h0m0 1h0m1 4h0m0-13h0m0-49h0m0 57h0m0 50h0m0-17h0m1-66h0m0-54h0m0 158h0m0-83h0m0-82h0m1 127h0m0-11h0m0-64h0m0 71h0m0 21h0m0-43h0m1 38h0m0-13h0m0-60h0m0 34h0m0-3h0m1-9h0m0 9h0m0 5h0m0-15h0m0 26h0m0-36h0m1 10h0m0-16h0m0 21h0m0-45h0m0 35h0m1 10h0m0-32h0m0 41h0m0-53h0m0-15h0m0 68h0m1 7h0m0-38h0m0-8h0m0 37h0m1 6h0m0 17h0m0-53h0m0 24h0m0 41h0m1-62h0m0-16h0m0 18h0m0 52h0m0-76h0m0 32h0m1 3h0m0-25h0m0 42h0m0 13h0m0-18h0m1-48h0m0 46h0m0 32h0m0-52h0m0 35h0m0-28h0m1 10h0m0-13h0m0 24h0m0-41h0m0-1h0m1 9h0m0-1h0m0 1h0m0 17h0m0-7h0m0-16h0m1 27h0m0 37h0m0 66h0m0-124h0m0-48h0m1 60h0m0 13h0m0 32h0m0-32h0m0-43h0m0-33h0m1 40h0m0 11h0m0-26h0m0 1h0m0 80h0m1-36h0m0 27h0m0 10h0m0-54h0m0 7h0m0 2h0m1-20h0m0 16h0m0-6h0m0-3h0m0 27h0m1-65h0m0 25h0m0 20h0m0-11h0m0 23h0m0-21h0m1-1h0m0 25h0m0 1h0m0-79h0m0 77h0m1-45h0m0 41h0m0-8h0m0-26h0m0 43h0m0-69h0m1 24h0m0 15h0m0-43h0m0 54h0m0-45h0m1 26h0m0-12h0m0 15h0m0 10h0m0-5h0m0-29h0m1 22h0m0 9h0m0 7h0m0 28h0m0-69h0m1 24h0m0 33h0m0-21h0m0-14h0m0 18h0m0-8h0m1-3h0m0-12h0m0 8h0m0-18h0m0-3h0m1 15h0m0-3h0m0 10h0m0-24h0m0-20h0m0 27h0m1-4h0m0-10h0m0 38h0m0-12h0m0-22h0m1 14h0m0-19h0m0 22h0m0-36h0m0 23h0m0 25h0m1 15h0m0-48h0m0 33h0m0 8h0m0 21h0m1 44h0m0-135h0m0 114h0m0-38h0m0 119h0m0-97h0m1-6h0m0 31h0m0-174h0m0 50h0m0 26h0m1-72h0m0 93h0m0 39h0m0-53h0m0-16h0m0 42h0m1-35h0m0 18h0m0 14h0m0 32h0m0-20h0m1 3h0m0-37h0m0 41h0m0-42h0m0-8h0m0 39h0m1 9h0m0 19h0m0-38h0m0 19h0m0-5h0m1 14h0m0-17h0m0-93h0m0 89h0m0 26h0m1-48h0m0 36h0m0-24h0m0 6h0m0 39h0m1 72h0m0-98h0m0 124h0m0-183h0m0 135h0m0-47h0m1-21h0m0 47h0m0-121h0m0 106h0m0-54h0m1-15h0m0-54h0m0 29h0m0-25h0m0 30h0m0 100h0m1-84h0m0 26h0m0-16h0m0 1h0m0-27h0m1 65h0m0-45h0m0 13h0m0 23h0m0-19h0m0-14h0m1 13h0m0 1h0m0 31h0m0-41h0m0 21h0m1 54h0m0-147h0m0 138h0m0-95h0m0 56h0m0-4h0m1-43h0m0 31h0m0 13h0m0-12h0m0-35h0m1 54h0m0-65h0m0 16h0m0 2h0m0 12h0m0 31h0m1-7h0m0-19h0m0-7h0m0 3h0m0 16h0m1 12h0m0-60h0m0 79h0m0-23h0m0 27h0m0-51h0m1 38h0m0-22h0m0-17h0m0 88h0m0-30h0m1 23h0m0-11h0m0 2h0m0-11h0m0-52h0m0 44h0m1-15h0m0-58h0m0 74h0m0 31h0m0-121h0m1 87h0m0 91h0m0-101h0m0-27h0m0 80h0m0-112h0m1 58h0m0-70h0m0 61h0m0 50h0m0 6h0m1 2h0m0-41h0m0 7h0m0 13h0m0 2h0m0 6h0m1 16h0m0-26h0m0 19h0m0-13h0m0-32h0m1 30h0m0-24h0m0 11h0m0 22h0m0-32h0m0 23h0m1-18h0m0 10h0m0-27h0m0 11h0m0 11h0m1 13h0m0-59h0m0 46h0m0-7h0m0 3h0m0 6h0m1 21h0m0-19h0m0 12h0m0-41h0m0-26h0m1 61h0m0-16h0m0-14h0m0 37h0m0-8h0m0 1h0m1-45h0m0 16h0m0 30h0m0-20h0m0 3h0m1-2h0m0 41h0m0-40h0m0-8h0m0-7h0m0 7h0m1 14h0m0-4h0m0-24h0m0-45h0m0 77h0m1-40h0m0-1h0m0 26h0m0 62h0m0-78h0m0 22h0m1 4h0m0-23h0m0 32h0m0 3h0m0-49h0m1-3h0m0-7h0m0 16h0m0 13h0m0-20h0m0-36h0m1-56h0m0 63h0m0-41h0m0 152h0m0-181h0m1 154h0m0-168h0m0 128h0m0 74h0m0-55h0m0-23h0m1 34h0m0-9h0m0-70h0m0 96h0m0 4h0m1-48h0m0 3h0m0-98h0m0 78h0m0-9h0m1 9h0m0 112h0m0-78h0m0 88h0m0-86h0m0 97h0m1-161h0m0 50h0m0-32h0m0-4h0m0 30h0m1 77h0m0-41h0m0-41h0m0 56h0m0-43h0m0 26h0m1-50h0m0 3h0m0 6h0m0-9h0m0-11h0m1 21h0m0-4h0m0-14h0m0 13h0m0 4h0m0 4h0m1 5h0m0 7h0m0-27h0m0 5h0m0 14h0m1-32h0m0-3h0m0 20h0m0 19h0m0-24h0m0 6h0m1-12h0m0 11h0m0-21h0m0 45h0m0-20h0m1 4h0m0-14h0m0 22h0m0 13h0m0-28h0m1-38h0m0 2h0m0 43h0m0-8h0m0-8h0m1 42h0m0-50h0m0-14h0m0 31h0m0 36h0m0-8h0m1-42h0m0 18h0m0-6h0m0-18h0m0 10h0m1 8h0m0-1h0m0 32h0m0-64h0m0-2h0m0 36h0m1-19h0m0 30h0m0-39h0m0 19h0m0 15h0m1 5h0m0-55h0m0 37h0m0-21h0m0 58h0m0 5h0m1-58h0m0 86h0m0-138h0m0 135h0m0-129h0m1 8h0m0-48h0m0 69h0m0 107h0m0-100h0m0-61h0m1 12h0m0-35h0m0 31h0m0 6h0m0 89h0m1-129h0m0-7h0m0 7h0m0 136h0m0-76h0m1-42h0m0-3h0m1 0h0m0-6h0m2-12h0m0 41h0m0-11h0m0-26h0m0 17h0m0 124h0m1-99h0m0 5h0m0-40h0m0 90h0m0-33h0m1-36h0m0 20h0m0 31h0m0-10h0m0 76h0m0-36h0m1 43h0m0 2h0m0-25h0m0 8h0m0 27h0m1-23h0m0-24h0m0 26h0m0 30h0m0-20h0m0 21h0m1-3h0m0-36h0m0 11h0m0-17h0m0 46h0m1-10h0m0 20h0m0-40h0m0 38h0m0 1h0m0 3h0m1-38h0m0 6h0m0 2h0m0-23h0m0 24h0m1 18h0m0-59h0m0 57h0m0-40h0m0 23h0m1-5h0m0 40h0m0-18h0m0 3h0m0-27h0m1 14h0m0-16h0m0 23h0m0-11h0m0-14h0m0 32h0m1-5h0m0-44h0m0 40h0m0-83h0m0 42h0m1-1h0m0 39h0m0-29h0m0 14h0m0 65h0m0-46h0m1-11h0m0-34h0m0 24h0m0 48h0m0-57h0m1 8h0m0-19h0m0 7h0m0 31h0m0 5h0m0-17h0m1 7h0m0-20h0m0 10h0m0-8h0m0-16h0m1 17h0m0 4h0m0-23h0m0-9h0m0 6h0m0 44h0m1-36h0m0 7h0m0-27h0m0 72h0m0-51h0m1-3h0m0-9h0m0 18h0m0 1h0m0-9h0m0 32h0m1-36h0m0 36h0m0-15h0m0-35h0m0 9h0m1-1h0m0-16h0m0 15h0m0 1h0m0 22h0m0-2h0m1-43h0m0 46h0m0-37h0m0 11h0m0-26h0m1 49h0m0-39h0m0 36h0m0-6h0m0-47h0m0 2h0m1 29h0m0-26h0m0 18h0m0 12h0m0-24h0m1 47h0m0 2h0m0 42h0m0-76h0m0 36h0m0-10h0m1-17h0m0 2h0m0-32h0m0 30h0m0-58h0m1 120h0m0-103h0m0 37h0m0-40h0m0 35h0m1-52h0m0 16h0m0 20h0m0 7h0m0-12h0m1 6h0m0 6h0m0-8h0m0-21h0m0 30h0m0 12h0m1-61h0m0 39h0m0-9h0m0 15h0m0 9h0m1-33h0m0-7h0m0 36h0m0 5h0m0-17h0m0-7h0m1 20h0m0-39h0m0 18h0m0 37h0m0-24h0m1-8h0m0-1h0m0 30h0m0-53h0m0 75h0m0-68h0m1 26h0m0 43h0m0-12h0m0 33h0m0-3h0m1-5h0m0-62h0m0 13h0m0 29h0m0-15h0m0 10h0m1-44h0m0 39h0m0-18h0m0-5h0m0-2h0m1-11h0m0 30h0m0 31h0m0-43h0m0 50h0m1-33h0m0-9h0m0 16h0m0-6h0m0 31h0m1-9h0m0 6h0m0-57h0m0 35h0m0 11h0m0 11h0m1-19h0m0 1h0m0 9h0m0 19h0m0-4h0m1 12h0m0 7h0m0-41h0m0 19h0m0-20h0m1 14h0m0 3h0m0 5h0m0-8h0m0-39h0m0 28h0m1 35h0m0-53h0m0 52h0m0 41h0m0-112h0m1 28h0m0 2h0m0-13h0m0 70h0m0 6h0m0-72h0m1 73h0m0-105h0m0 55h0m0 72h0m0-69h0m1 12h0m0-18h0m0 51h0m0-23h0m0-51h0m0 32h0m1 50h0m0-95h0m0 56h0m0-25h0m0-46h0m1-33h0m0 81h0m0 89h0m0-25h0m0 27h0m0 8h0m1-119h0m0-2h0m0 10h0m0 39h0m0-86h0m1-64h0m0 100h0m0-58h0m0 72h0m0 92h0m0-75h0m1 66h0m0-26h0m0-38h0m0 31h0m0-12h0m1-41h0m0 17h0m0-1h0m0-7h0m0 33h0m0-33h0m1 21h0m0-27h0m0 2h0m0 4h0m0-33h0m1 28h0m0-8h0m0 8h0m0-4h0m0-18h0m0-17h0m1 37h0m0 10h0m0-1h0m0-3h0m0-29h0m1 38h0m0 17h0m0 29h0m0-51h0m0-6h0m0 6h0m1-3h0m0-5h0m0 16h0m0-18h0m0 21h0m1-14h0m0-54h0m0 40h0m0 6h0m0 5h0m0-4h0m1-27h0m0 43h0m0-16h0m0 6h0m0-29h0m1 11h0m0 29h0m0 28h0m0-62h0m0-15h0m0 49h0m1-53h0m0 82h0m0 17h0m0-76h0m1 34h0m0-41h0m0 137h0m0-135h0m0 24h0m0-68h0m1 48h0m0 91h0m0-144h0m0 72h0m0-55h0m1 102h0m0-61h0m0-25h0m0-4h0m0 12h0m0 78h0m1-35h0m0 23h0m0-47h0m0 66h0m0-107h0m1 73h0m0-45h0m0 47h0m0-91h0m0 10h0m0 109h0m1 1h0m0-67h0m0 70h0m0-49h0m0-43h0m1 77h0m0-19h0m0-2h0m0-21h0m0-32h0m0 11h0m1 73h0m0-7h0m0-50h0m0-36h0m0 59h0m1 6h0m0-18h0m0-2h0m0-11h0m0 9h0m0-12h0m1 20h0m0-39h0m0 4h0m0 7h0m0 5h0m1 13h0m0 12h0m0-30h0m0 9h0m0 2h0m0-37h0m1 38h0m0-34h0m0-13h0m0 16h0m0 30h0m1-17h0m0 15h0m0-10h0m0-2h0m0 35h0m0-24h0m1-7h0m0-9h0m0 7h0m0 3h0m0 8h0m1-32h0m0 34h0m0 1h0m0-12h0m0 4h0m0 22h0m1-42h0m0-10h0m0 18h0m0 3h0m0-6h0m1-16h0m0 41h0m0-23h0m0-23h0m0 40h0m0-32h0m1 55h0m0-61h0m0-15h0m0 18h0m0 7h0m1 31h0m0 1h0m0 1h0m0-31h0m0 14h0m0-26h0m1 28h0m0-20h0m0 6h0m0 10h0m0 9h0m1-26h0m0 63h0m0-100h0m0 61h0m0-21h0m0-31h0m1 68h0m0-9h0m0-41h0m0 50h0m0-24h0m1 3h0m0-11h0m0 11h0m0-19h0m0-3h0m0-20h0m1-18h0m0 43h0m0-31h0m0-31h0m1 16h0m0 53h0m0-84h0m0 51h0m0-59h0m0 30h0m1-45h0m0 5h0m0 131h0m0-11h0m1-106h0m0 155h0m0-101h0m0-44h0m1-20h0m0 36h0m0 99h0m0-109h0m1 103h0m1-74h0m1-13h0m0-29h0m0-16h0m0 37h0m0-43h0m0 1h0m1 120h0m0-101h0m0 89h0m0-93h0m0 53h0m1-20h0m0-10h0m0 1h0m0 11h0m0 33h0m0-28h0m1 16h0m0 84h0m0-20h0m0 49h0m0-10h0m1-14h0m0 22h0m0 1h0m0-46h0m0 23h0m0-28h0m1 54h0m0-37h0m0-23h0m0 39h0m1-25h0m0 5h0m0 22h0m0 30h0m0-12h0m0-2h0m1-8h0m0-20h0m0-5h0m0 42h0m0-32h0m1-1h0m0-5h0m0 38h0m0 3h0m0-42h0m0 17h0m1 0h0m0-35h0m0 48h0m0 15h0m0-17h0m1-46h0m0 36h0m0-16h0m0-31h0m1 60h0m0-25h0m0 3h0m0 11h0m0-9h0m0 41h0m1-45h0m0 35h0m0-47h0m0 21h0m0 36h0m1-26h0m0-30h0m0 46h0m0 48h0m0-61h0m0-7h0m1 5h0m0-14h0m0-52h0m0 11h0m0-6h0m1 59h0m0-78h0m0 119h0m0-14h0m0-10h0m0-23h0m1-12h0m0 55h0m0-45h0m0-40h0m0 21h0m1 1h0m0-20h0m0-8h0m0 50h0m0-12h0m0 31h0m1-15h0m0-7h0m0 28h0m0-31h0m1-5h0m0 24h0m0-12h0m0-28h0m0 2h0m0 33h0m1-9h0m0-6h0m0-17h0m0-7h0m0 28h0m1-3h0m0-16h0m0 16h0m0-20h0m0 37h0m0-13h0m1-53h0m0 36h0m0 27h0m0-48h0m0 22h0m1 3h0m0-6h0m0-56h0m0 73h0m0 17h0m0-51h0m1-3h0m0 58h0m0-18h0m0-75h0m0 33h0m1-28h0m0 64h0m0-13h0m0 53h0m0-55h0m0-38h0m1 118h0m0-59h0m0 55h0m0-50h0m0 43h0m1-180h0m0 132h0m0 47h0m0-44h0m0-52h0m0 9h0m1 84h0m0-115h0m0 120h0m0-130h0m0 167h0m1-80h0m0-68h0m0 17h0m0 31h0m0-41h0m0 41h0m1-40h0m0-12h0m0-2h0m0 56h0m0-53h0m1 1h0m0 24h0m0-1h0m0-3h0m0 18h0m0-2h0m1-17h0m0-8h0m0 20h0m0 40h0m0-52h0m1 62h0m0-81h0m0 13h0m0 49h0m0-57h0m1 48h0m0 39h0m0-96h0m0 34h0m0 22h0m1-48h0m0 49h0m0-56h0m0-14h0m0 61h0m0-5h0m1-32h0m0 14h0m0 41h0m0-64h0m0 36h0m1-42h0m0 67h0m0-46h0m0-4h0m0-1h0m0 52h0m1 29h0m0-88h0m0-18h0m0 39h0m0-16h0m1 51h0m0 9h0m0-89h0m0-8h0m0-9h0m0 45h0m1 36h0m0 42h0m0-77h0m0-16h0m0 8h0m1-1h0m0 37h0m0-51h0m0-6h0m0-27h0m0 27h0m1-5h0m0 74h0m0-9h0m0-2h0m0-49h0m1 18h0m0 24h0m0-1h0m0-39h0m0 63h0m0-61h0m1-1h0m0-59h0m0 71h0m0 74h0m0-132h0m1 49h0m0 15h0m0 28h0m0-45h0m0 48h0m0-14h0m1 3h0m0-86h0m0 22h0m0 94h0m0-62h0m1 21h0m0-31h0m0-11h0m0 29h0m0-50h0m0 3h0m1 64h0m0-28h0m0 27h0m0 11h0m0-7h0m1-7h0m0-2h0m0-33h0m0 2h0m0 22h0m0 4h0m1-25h0m0-7h0m0-18h0m0 24h0m0-6h0m1 42h0m0-25h0m0-17h0m0 24h0m0 2h0m0-66h0m1 27h0m0 21h0m0-19h0m0 15h0m0 19h0m1-10h0m0 2h0m0-26h0m0 26h0m0-4h0m0 23h0m1-2h0m0-20h0m0-2h0m0-8h0m0 3h0m1 8h0m0 28h0m0-32h0m0 45h0m0-35h0m0-8h0m1-18h0m0 42h0m0-12h0m0 4h0m0 35h0m1-51h0m0 30h0m0-24h0m0 41h0m0-36h0m0-5h0m1 15h0m0-44h0m0 40h0m0-11h0m0 62h0m1-58h0m0 53h0m0-9h0m0-4h0m0-8h0m0-48h0m1 45h0m0-5h0m0 17h0m0-10h0m0 36h0m1-43h0m0 1h0m0 47h0m0 20h0m0-32h0m0-23h0m1 39h0m0 34h0m0-76h0m0 86h0m0-98h0m1-29h0m0 35h0m0-6h0m0-6h0m0-87h0m1-22h0m0 128h0m0-1h0m0 23h0m0 8h0m1-74h0m0 20h0m0 26h0m0-33h0m0 3h0m0 6h0m1 22h0m0-4h0m0-34h0m0 12h0m0 13h0m1 27h0m0-7h0m0-8h0m0 5h0m0-24h0m0 4h0m1 57h0m0-44h0m0-8h0m0 35h0m0 8h0m1-29h0m0-35h0m0 30h0m0-20h0m0-8h0m1 3h0m0 38h0m0-14h0m0 14h0m0 10h0m1-45h0m0 56h0m0-30h0m0 3h0m1-18h0m0-2h0m0 130h0m0-70h0m0-34h0m1-29h0m0-4h0m0 82h0m0-28h0m0 52h0m1-106h0m0 36h0m0-25h0m0 24h0m0 36h0m0 26h0m1-133h0m0 127h0m0-17h0m0-88h0m0 73h0m1-49h0m0-24h0m0 1h0m0 16h0m0 10h0m0-18h0m1 19h0m0-8h0m0 18h0m0 3h0m0 20h0m1-60h0m0 26h0m0-36h0m0 76h0m0-1h0m0-26h0m1 11h0m0-15h0m0 9h0m0-5h0m0-11h0m1-32h0m0 19h0m0 32h0m0-16h0m0 1h0m0-41h0m1 79h0m0-27h0m0-24h0m0 23h0m0-38h0m1 39h0m0-17h0m0-21h0m0-20h0m0 11h0m0 36h0m1-31h0m0 43h0m0-12h0m0-30h0m0 53h0m1-57h0m0 50h0m0-41h0m0 15h0m0-14h0m0 5h0m1 78h0m0-59h0m0-44h0m0 66h0m0-79h0m1 48h0m0 71h0m0-162h0m0 84h0m0 3h0m0-11h0m1-45h0m0 93h0m0-76h0m0 43h0m0 3h0m1 54h0m0-147h0m0 65h0m0 50h0m0-16h0m0 29h0m1-98h0m0 137h0m0-55h0m0-20h0m0-17h0m1 47h0m0-2h0m0-74h0m0-32h0m0 104h0m0-20h0m1 2h0m0 13h0m0-61h0m0 119h0m0-40h0m1-38h0m0-22h0m0-4h0m0-8h0m0 31h0m1-1h0m0-26h0m0-32h0m0 68h0m1 10h0m0-100h0m0 34h0m0-47h0m0 82h0m0 17h0m1-49h0m0 112h0m0-122h0m0 60h0m0 1h0m1-25h0m0 43h0m0-20h0m0-91h0m0 151h0m0-82h0m1 102h0m0-205h0m0 143h0m0-24h0m0-38h0m1 8h0m0-48h0m0-12h0m0 47h0m0-14h0m0 46h0m1-89h0m0 47h0m0 38h0m0-15h0m0-1h0m1 26h0m0-9h0m0 6h0m0-37h0m0-15h0m0 32h0m1-23h0m0 54h0m0-22h0m0 11h0m0-22h0m1 34h0m0-11h0m0 3h0m0 8h0m0 15h0m0-37h0m1 38h0m0-22h0m0 37h0m0 4h0m0-7h0m1 1h0m0-38h0m0 40h0m0-4h0m0 4h0m0-20h0m1-9h0m0 35h0m0-4h0m0-31h0m0-1h0m1 27h0m0 7h0m0 49h0m0-34h0m0-37h0m0 38h0m1 30h0m0-35h0m0 8h0m0-24h0m0 15h0m1-5h0m0-28h0m0 42h0m0 8h0m0-20h0m0-5h0m1 30h0m0-38h0m0 45h0m0-15h0m0-32h0m1-18h0m0 35h0m0-25h0m0 21h0m0 15h0m0-11h0m1-22h0m0 1h0m0-21h0m0 26h0m0-20h0m1-3h0m0 51h0m0 2h0m0-19h0m0-27h0m0-6h0m1 39h0m0-5h0m0 11h0m0-7h0m0-64h0m1 51h0m0 23h0m0-5h0m0 24h0m0-63h0m0 24h0m1-69h0m0 12h0m0 93h0m0 20h0m0 8h0m1-104h0m0-99h0m0 165h0m0 14h0m0-15h0m0 39h0m1-73h0m0 64h0m0-96h0m0 59h0m0 12h0m1 3h0m0-52h0m0 95h0m0-131h0m0 16h0m0-10h0m1 99h0m0-47h0m0-62h0m0 41h0m0 69h0m1-74h0m0 33h0m0-5h0m0-5h0m0 56h0m0-30h0m1 12h0m0-11h0m0-51h0m0-16h0m0 14h0m1-10h0m0 27h0m0 3h0m0 14h0m0-46h0m0 20h0m1-12h0m0 3h0m0-35h0m0 56h0m0-12h0m1 17h0m0-9h0m0-28h0m0 18h0m0 41h0m0-28h0m1-24h0m0 3h0m0 11h0m0-22h0m0 15h0m1-2h0m0-13h0m0 2h0m0 48h0m0-28h0m0-33h0m1 21h0m0-22h0m0 34h0m0-27h0m0 19h0m1 6h0m0-11h0m0-30h0m0 69h0m0-22h0m0 30h0m1-10h0m0-13h0m0 11h0m0-17h0m0-87h0m1 156h0m0-85h0m0-95h0m0-12h0m0 185h0m0-50h0m1-62h0m0 43h0m0 15h0m0 12h0m0 26h0m1-102h0m0 43h0m0 45h0m0-64h0m0-12h0m0 20h0m1-6h0m0 54h0m0-58h0m0 27h0m0 8h0m1 13h0m0-36h0m0-95h0m0 108h0m0-10h0m0 5h0m1 0h0m0-67h0m0 27h0m0-59h0m0 10h0m1 186h0m0-165h0m0 76h0m0-3h0m0 110h0m1-88h0m0-128h0m0 37h0m0 57h0m0 97h0m0-65h0m1-44h0m0-19h0m0 88h0m0-60h0m0 95h0m1-118h0m0 45h0m0-53h0m0 3h0m0 102h0m0-90h0m1-58h0m0 164h0m0-19h0m0-124h0m0 88h0m1-31h0m0 17h0m0-9h0m0 4h0m0-76h0m0 52h0m1 8h0m0-18h0m0 28h0m0 18h0m0 7h0m1-99h0m0 82h0m0 19h0m0-70h0m0-7h0m1-7h0m0 136h0m0-66h0m0-131h0m0 134h0m1 10h0m0-70h0m0 126h0m0-166h0m0-4h0m0 108h0m1 25h0m0-56h0m0 10h0m0-11h0m0-30h0m1 115h0m0-89h0m0 60h0m0-85h0m0 58h0m0 32h0m1-83h0m0-9h0m0 53h0m0-82h0m0 70h0m1 0h0m0-20h0m0 5h0m0 13h0m0-67h0m0 53h0m1-24h0m0 27h0m0 4h0m0-3h0m0 13h0m1-49h0m0 49h0m0-30h0m0-7h0m0 47h0m0-51h0m1 31h0m0-10h0m0 13h0m0-39h0m0 46h0m1-7h0m0-28h0m0-40h0m0 24h0m0-4h0m0 47h0m1-47h0m0 31h0m0 1h0m0-64h0m0 24h0m1 26h0m0 30h0m0-28h0m0-15h0m0 15h0m0-25h0m1 38h0m0-23h0m0-9h0m0 24h0m0 9h0m1-41h0m0 26h0m0-4h0m0 25h0m0-24h0m0-1h0m1-2h0m0 5h0m0-4h0m0 9h0m0-9h0m1 12h0m0 2h0m0-41h0m0 89h0m0-19h0m0-35h0m1 9h0m0-61h0m0 33h0m0-12h0m0 45h0m1-6h0m0 22h0m0-19h0m0-28h0m0 32h0m0-35h0m1 12h0m0 33h0m0-8h0m0-12h0m0-23h0m1-1h0m0 8h0m0-27h0m0-4h0m0-28h0m0-1h0m1 99h0m0-124h0m0 47h0m0-51h0m0 68h0m1-43h0m0-23h0m0-6h0m0 25h0m1 64h0m0-55h0m0-2h0m1 21h0m0-42h0m2 5h0m1 115h0m0-89h0m0-33h0m1 2h0m0-9h0m0 5h0m0 148h0m1-118h0m0-8h0m0 100h0m0-130h0m0 48h0m1-16h0m0 24h0m0 100h0m0-89h0m0 1h0m1 107h0m0 4h0m0 6h0m0-65h0m0 16h0m1-11h0m0 9h0m0 24h0m0 19h0m0-5h0m0 13h0m1-23h0m0 3h0m0 1h0m0-44h0m0 63h0m1-31h0m0 18h0m0-9h0m0-32h0m0 39h0m1-18h0m0-38h0m0-1h0m0 26h0m1-27h0m0 23h0m0 20h0m0 8h0m0 1h0m0-22h0m1 6h0m0-33h0m0 41h0m0-35h0m0 17h0m1 4h0m0-17h0m0 19h0m0 2h0m0 35h0m0-28h0m1 22h0m0-27h0m0 5h0m0 3h0m0 16h0m1-9h0m0-40h0m0 9h0m0 25h0m0-34h0m0 31h0m1 29h0m0-28h0m0-3h0m0 16h0m0-4h0m1-20h0m0 24h0m0-16h0m0-10h0m0 45h0m0-14h0m1 26h0m0-65h0m0-52h0m0 42h0m0 35h0m1-62h0m0 154h0m0-90h0m0-84h0m0 85h0m0-17h0m1 98h0m0-85h0m0-28h0m0 20h0m0-67h0m1 93h0m0-71h0m0 49h0m0-31h0m0 72h0m0 40h0m1-30h0m0-46h0m0-35h0m0 25h0m0-21h0m1 53h0m0-3h0m0-57h0m0-7h0m0 42h0m0-9h0m1 3h0m0-16h0m0 5h0m0 5h0m0 8h0m1 40h0m0-71h0m0 57h0m0-7h0m0 19h0m0-24h0m1 9h0m0-12h0m0 10h0m0-31h0m0 4h0m1 34h0m0-51h0m0 40h0m0-63h0m0 43h0m0-4h0m1 8h0m0-15h0m0-46h0m0 51h0m1 13h0m0 5h0m0-32h0m0-4h0m0 42h0m0-13h0m1 3h0m0 5h0m0-14h0m0 17h0m0 4h0m1-77h0m0 101h0m0-40h0m0-17h0m0 26h0m1 10h0m0-33h0m0-4h0m0-12h0m0 59h0m0-36h0m1-20h0m0-24h0m0 20h0m0 42h0m0-26h0m1 4h0m0-10h0m0-8h0m0-18h0m0 45h0m0-32h0m1 23h0m0 7h0m0-1h0m0-4h0m0-26h0m1 3h0m0 65h0m0-55h0m0-15h0m0 3h0m0-4h0m1 21h0m0-16h0m0 52h0m0-36h0m0 18h0m1 15h0m0-1h0m0-26h0m0-15h0m0 51h0m0-39h0m1-15h0m0 24h0m0-33h0m0 30h0m0-25h0m1 9h0m0-33h0m0-7h0m0 100h0m0-99h0m0-22h0m1 167h0m0-160h0m0 44h0m0 57h0m0-87h0m1 31h0m0 28h0m0-7h0m0-5h0m0-7h0m0-1h0m1 3h0m0 13h0m0-18h0m0-13h0m0-10h0m1 32h0m0 5h0m0 14h0m0-61h0m0 9h0m0 49h0m1 14h0m0-40h0m0 17h0m0-31h0m0-34h0m1 45h0m0 23h0m0-46h0m0-2h0m0 7h0m0 8h0m1 9h0m0-13h0m0 45h0m0-40h0m0 5h0m1-11h0m0 60h0m0-55h0m0-2h0m0 23h0m0-22h0m1 24h0m0-23h0m0 43h0m0-25h0m0-15h0m1 10h0m0-21h0m0 6h0m0 51h0m0-21h0m0-45h0m1 19h0m0-34h0m0 75h0m0-30h0m0-28h0m1 44h0m0-40h0m0 45h0m0-79h0m0 49h0m1 9h0m0 7h0m0-36h0m0 65h0m0-124h0m1 59h0m0-1h0m0-11h0m0 88h0m0-109h0m0 30h0m1 55h0m0-18h0m0-2h0m0 15h0m0 24h0m1-58h0m0-12h0m0-20h0m0 22h0m0-25h0m0 39h0m1-2h0m0-2h0m0 10h0m0-30h0m0 43h0m1-22h0m0 9h0m0-55h0m0 46h0m0 19h0m1-31h0m0 26h0m0-9h0m0 27h0m0 30h0m1-90h0m0 41h0m0 24h0m0 27h0m0-10h0m0-2h0m1-5h0m0 96h0m0-68h0m0-99h0m0 35h0m1-44h0m0 59h0m0 46h0m0-71h0m0 64h0m0-20h0m1 1h0m0 4h0m0 39h0m0-61h0m0 53h0m1-32h0m0 35h0m0-23h0m0-29h0m0 110h0m1-126h0m0 102h0m0 2h0m0-133h0m0 37h0m1 36h0m0-62h0m0 95h0m0-82h0m0 3h0m0 4h0m1 45h0m0-59h0m0-9h0m0-10h0m0 76h0m1-3h0m0-42h0m0 25h0m0-42h0m0 35h0m0 6h0m1 31h0m0-47h0m0 29h0m0-55h0m0 20h0m1-6h0m0 17h0m0 56h0m0-50h0m0 36h0m0-42h0m1 36h0m0-112h0m0 1h0m0 96h0m0-29h0m1-17h0m0 60h0m0-22h0m0-82h0m0 5h0m1 70h0m0 43h0m0 14h0m0-96h0m0 77h0m1-90h0m0 36h0m0 47h0m0-40h0m0-24h0m0 42h0m1 23h0m0-43h0m0-50h0m0 60h0m1 9h0m0-50h0m0 32h0m0-5h0m0-10h0m0 1h0m1 42h0m0-51h0m0 39h0m0 9h0m0-25h0m1-17h0m0 10h0m0 11h0m0-23h0m0 12h0m1 19h0m0 6h0m0-26h0m0 37h0m1-42h0m0-16h0m0-15h0m0 8h0m0 30h0m0 3h0m1-28h0m0 31h0m0-3h0m0-67h0m0 83h0m1-36h0m0 31h0m0-42h0m0 32h0m0-29h0m0-8h0m1 3h0m0-18h0m0-10h0m0 62h0m0-12h0m1-44h0m0 21h0m0-8h0m0 7h0m0-15h0m0 23h0m1-33h0m0 17h0m0-30h0m0 63h0m0-2h0m1-18h0m0 24h0m0-4h0m0-30h0m0-29h0m0-34h0m1 22h0m0 37h0m0-54h0m0-23h0m0 20h0m1 19h0m0 60h0m1-112h0m0 75h0m1 17h0m0-75h0m0-2h0m1 13h0m0-23h0m0 26h0m0-26h0m1 26h0m0-15h0m0 29h0m0 50h0m0 14h0m1 14h0m0-77h0m0 93h0m0-69h0m0 21h0m1-5h0m0 79h0m0-34h0m0-11h0m0 33h0m1-7h0m0-26h0m0 54h0m0-43h0m0 1h0m0 10h0m1-18h0m0 11h0m0 14h0m0-3h0m0 38h0m1-5h0m0-45h0m0 17h0m0-9h0m0-8h0m0 41h0m1-76h0m0 85h0m0-52h0m0 55h0m0-42h0m1 17h0m0 22h0m0-18h0m0-2h0m0 7h0m0-11h0m1 10h0m0-18h0m0-20h0m0 39h0m0 9h0m1-74h0m0 73h0m0 10h0m0-60h0m0 47h0m0-29h0m1 15h0m0 13h0m0-30h0m0 38h0m0-42h0m1 59h0m0-50h0m0 7h0m0 18h0m0 29h0m0-31h0m1-16h0m0-1h0m0-39h0m0 5h0m0 77h0m1-3h0m0 33h0m0-50h0m0-14h0m0-16h0m0 66h0m1-97h0m0 122h0m0-76h0m0-123h0m0 186h0m1-39h0m0-72h0m0-24h0m0-5h0m0 50h0m0-21h0m1 131h0m0-144h0m0 7h0m0-42h0m0 100h0m1-18h0m0 49h0m0 17h0m0-89h0m0 22h0m0 46h0m1-72h0m0-43h0m0 107h0m0-68h0m0 24h0m1-7h0m0-58h0m0 103h0m0-66h0m0 26h0m0-14h0m1 59h0m0-82h0m0-28h0m0 181h0m0-156h0m1 61h0m0 35h0m0-57h0m0-6h0m0-71h0m0 92h0m1-5h0m0 14h0m0-100h0m0 75h0m0-40h0m1 11h0m0 27h0m0-38h0m0-7h0m0-1h0m0 54h0m1-24h0m0-3h0m0-4h0m0 36h0m0-15h0m1-29h0m0-13h0m0 24h0m0 21h0m0-35h0m1-12h0m0 28h0m0-4h0m0-4h0m0-8h0m1 48h0m0-29h0m0 87h0m0-108h0m0 71h0m0-140h0m1 38h0m0-13h0m0-7h0m0 20h0m0 65h0m1-11h0m0-21h0m0 54h0m0 6h0m0-90h0m0 34h0m1-9h0m0 57h0m0 36h0m0-9h0m0-43h0m1-52h0m0 25h0m0 23h0m0-31h0m0 2h0m0-20h0m1 4h0m0 9h0m0 28h0m0-23h0m1 9h0m0-41h0m0 1h0m0 55h0m0-62h0m0 55h0m1-26h0m0-14h0m0 40h0m0-25h0m0 5h0m1-25h0m0 26h0m0 10h0m0-35h0m0 8h0m0-8h0m1 23h0m0 23h0m0-51h0m0 16h0m0-48h0m1 53h0m0 40h0m0-31h0m0-17h0m0 48h0m0-12h0m1-22h0m0 12h0m0-19h0m0 25h0m0-61h0m1 63h0m0-15h0m0 25h0m0-23h0m0-2h0m0 22h0m1 28h0m0-117h0m0 105h0m0 6h0m0 60h0m1-61h0m0-63h0m0 78h0m0-3h0m0-71h0m0 33h0m1-10h0m0 13h0m0 53h0m0 25h0m0-5h0m1-51h0m0 9h0m0-17h0m0-16h0m0 19h0m0-5h0m1 39h0m0 23h0m0-41h0m0-13h0m0 30h0m1 21h0m0-19h0m0-7h0m0-20h0m0 36h0m0-20h0m1 22h0m0-73h0m0 22h0m0 68h0m0-107h0m1-3h0m0 104h0m0-9h0m0-47h0m0 28h0m0-77h0m1-4h0m0 170h0m0-81h0m0-54h0m0-34h0m1 92h0m0 18h0m0-39h0m0 34h0m0-118h0m0 157h0m1-42h0m0-55h0m0 47h0m0-16h0m0 37h0m1-64h0m0 74h0m0-66h0m0 10h0m0 2h0m0 2h0m1 0h0m0 9h0m0-18h0m0-40h0m0 42h0m1 47h0m0-29h0m0-28h0m0 6h0m0 2h0m0 13h0m1 4h0m0 8h0m0 13h0m0-45h0m0-1h0m1-39h0m0 36h0m0 20h0m0-28h0m0 3h0m0 50h0m1-37h0m0-10h0m0 37h0m0-9h0m0-2h0m1-31h0m0 34h0m0-23h0m0 45h0m0-59h0m0 3h0m1-13h0m0 32h0m0 9h0m0 26h0m0-55h0m1-11h0m0 27h0m0 2h0m0 19h0m0-50h0m0 42h0m1-26h0m0 60h0m0-49h0m0-1h0m0-18h0m1-11h0m0 48h0m0 1h0m0-31h0m0-10h0m0 62h0m1-21h0m0-56h0m0 47h0m0-5h0m0-1h0m1-16h0m0 3h0m0 19h0m0-51h0m0 9h0m1 24h0m0 9h0m0 17h0m0-30h0m0 40h0m0-17h0m1-8h0m0-5h0m0 9h0m0-43h0m0 38h0m1-21h0m0 8h0m0 15h0m0-17h0m0 15h0m0 13h0m1 3h0m0-30h0m0 24h0m0-22h0m0 3h0m1-8h0m0 5h0m0 13h0m0-20h0m0 12h0m0-11h0m1 9h0m0 12h0m0 1h0m0 2h0m0-10h0m1 18h0m0-26h0m0 5h0m0 3h0m0 9h0m0-40h0m1-1h0m0 7h0m0 26h0m0-9h0m0-18h0m1 0h0m0 4h0m0-2h0m0-10h0m0 25h0m0 27h0m1-36h0m0 3h0m0-35h0m0 40h0m0-3h0m1-8h0m0 27h0m0-1h0m0 8h0m0-43h0m1-5h0m0 66h0m0-48h0m0-6h0m0-1h0m1-15h0m0 78h0m0-84h0m0 50h0m0 35h0m0-79h0m1 14h0m0 45h0m0 14h0m0-47h0m0-34h0m1 4h0m0 36h0m0-2h0m0-31h0m0 23h0m0 9h0m1-13h0m0 15h0m0 27h0m0-43h0m0 16h0m1-44h0m0 18h0m0 21h0m0 18h0m0-22h0m0-11h0m1 15h0m0-48h0m0-21h0m0 33h0m0 112h0m1 1h0m0-74h0m0 37h0m0 13h0m0-59h0m0 47h0m1 14h0m0-88h0m0 38h0m0-36h0m0-62h0m1 114h0m0-103h0m0 88h0m0-15h0m0-32h0m0 82h0m1-72h0m0 1h0m0-7h0m0-11h0m0 19h0m1 4h0m0-16h0m0 3h0m0-25h0m0 46h0m0-29h0m1-1h0m0-5h0m0 27h0m0 35h0m1-34h0m0 38h0m0-29h0m0 4h0m0-3h0m0-1h0m1-14h0m0-22h0m0 14h0m0 27h0m1-14h0m0-16h0m0 35h0m0-33h0m0-31h0m0 41h0m1 24h0m0-54h0m0 16h0m0 16h0m1-14h0m0-5h0m0 28h0m0-23h0m0 44h0m0-29h0m1 13h0m0-21h0m0-10h0m0-19h0m0 14h0m1 47h0m0-30h0m0-27h0m0 54h0m0-23h0m0-34h0m1 17h0m0-27h0m0-16h0m0-13h0m0-9h0m1 11h0m0 7h0m0-35h0m0 26h0m0-4h0m1-17h0m0 22h0m0 16h0m0-13h0m0 53h0m1 28h0m0-112h0m0 50h0m0-9h0m1 3h0m1 81h0m0-24h0m0-49h0m0-58h0m0 26h0m1 63h0m0-78h0m0 117h0m0-111h0m1 38h0m0-49h0m0 22h0m0-11h0m0 20h0m0 13h0m1 6h0m0 91h0m0-98h0m0 43h0m0-17h0m1 20h0m0 55h0m0 4h0m0-17h0m0 21h0m0-16h0m1-50h0m0 83h0m0 4h0m0-10h0m0-19h0m1 52h0m0-46h0m0 1h0m0 1h0m0 19h0m0-12h0m1-2h0m0 3h0m0 36h0m0-44h0m0 45h0m1-58h0m0 97h0m0-66h0m0 22h0m0-41h0m0 51h0m1-125h0m0 115h0m0-78h0m0 49h0m0 3h0m1-76h0m0 55h0m0 67h0m0-47h0m0 32h0m0-52h0m1 24h0m0 69h0m0-37h0m0-32h0m0-27h0m1-3h0m0 73h0m0-59h0m0 15h0m0-6h0m0-5h0m1 10h0m0 7h0m0 31h0m0-97h0m0 58h0m1-13h0m0-94h0m0 35h0m0 19h0m0 26h0m0 97h0m1-29h0m0-36h0m0-118h0m0 57h0m0-8h0m1 13h0m0 27h0m0-19h0m0 46h0m0-13h0m0 86h0m1-83h0m0-32h0m0 12h0m0-9h0m0 15h0m1-11h0m0 43h0m0-48h0m0 38h0m0-14h0m0 2h0m1-12h0m0 29h0m0 2h0m0-61h0m0 62h0m1-57h0m0 24h0m0 7h0m0-7h0m0-32h0m0 32h0m1-3h0m0-20h0m0 43h0m0-27h0m0-4h0m1 26h0m0-65h0m0 64h0m0-14h0m0-36h0m0 36h0m1-11h0m0 75h0m0-145h0m0-59h0m0 64h0m1 56h0m0-60h0m0 29h0m0 60h0m0-13h0m0-31h0m1 18h0m0 25h0m0-20h0m0-26h0m0 26h0m1 4h0m0-12h0m0 50h0m0-54h0m0-29h0m1 39h0m0 39h0m0-46h0m0 9h0m0 33h0m0-16h0m1-33h0m0 10h0m0 2h0m0-16h0m1 30h0m0-8h0m0-6h0m0-1h0m0 2h0m0-8h0m1-12h0m0 27h0m0-13h0m0 3h0m0-2h0m1-31h0m0 28h0m0-37h0m0 34h0m0 33h0m0-30h0m1 13h0m0-36h0m0 52h0m0-27h0m0 51h0m1-52h0m0 30h0m0-55h0m0 9h0m0 13h0m0-16h0m1 35h0m0-16h0m0 10h0m0-22h0m0 40h0m1-64h0m0 40h0m0 11h0m0-61h0m0-7h0m0 26h0m1 83h0m0-68h0m0 19h0m0-2h0m0 14h0m1-28h0m0 13h0m0-29h0m0 40h0m0-38h0m0 5h0m1-16h0m0 56h0m0-22h0m0-1h0m0-13h0m1 7h0m0 13h0m0-8h0m0-16h0m0 17h0m0-9h0m1 35h0m0-34h0m0-28h0m0-1h0m0 30h0m1 6h0m0-18h0m0 10h0m0 22h0m0-40h0m0 7h0m1-7h0m0-38h0m0 59h0m0-35h0m0 6h0m1-19h0m0-6h0m0 34h0m0 25h0m0-9h0m0-2h0m1-57h0m0 75h0m0-41h0m0 33h0m0 9h0m1-36h0m0 19h0m0-19h0m0 23h0m0-37h0m0-12h0m1 47h0m0-22h0m0 21h0m0 19h0m0 6h0m1-85h0m0 50h0m0 26h0m0-35h0m0 3h0m0 12h0m1-10h0m0 11h0m0 10h0m0-25h0m0-31h0m1 22h0m0 9h0m0 1h0m0 2h0m0-14h0m0-4h0m1 58h0m0 11h0m0-19h0m0-37h0m0-4h0m1 32h0m0-11h0m0 29h0m0-16h0m0 27h0m0-29h0m1 55h0m0 17h0m0-9h0m0-34h0m0-11h0m1-29h0m0 48h0m0-47h0m0 60h0m0-6h0m0-38h0m1 77h0m0-30h0m0-13h0m0 15h0m0-8h0m1-3h0m0-9h0m0 35h0m0-39h0m0 19h0m0-17h0m1 22h0m0-8h0m0 54h0m0-32h0m0-63h0m1 47h0m0-70h0m0 131h0m0-57h0m0-63h0m0 112h0m1-66h0m0 72h0m0-47h0m0-50h0m0 104h0m1-159h0m0 109h0m0 56h0m0-28h0m0-40h0m0-56h0m1-32h0m0 79h0m0 1h0m0-29h0m0 25h0m1-28h0m0 21h0m0 16h0m0 24h0m0-117h0m0 168h0m1-148h0m0 72h0m0 38h0m0-202h0m0 35h0m1 105h0m0 77h0m0-103h0m0 94h0m0-165h0m0 99h0m1-68h0m0-25h0m0 101h0m0-87h0m0 128h0m1-69h0m0 11h0m0-6h0m0 14h0m0-54h0m0 57h0m1-24h0m0 28h0m0-53h0m0 17h0m0 12h0m1 7h0m0-5h0m0 12h0m0 21h0m0 3h0m0-62h0m1 55h0m0-56h0m0 48h0m0-22h0m0-14h0m1 64h0m0-10h0m0-38h0m0-51h0m0 49h0m1 13h0m0-11h0m0 2h0m0 10h0m0-26h0m1-13h0m0 4h0m0 82h0m0-83h0m0 39h0m0 11h0m1-54h0m0 22h0m0-52h0m0 132h0m0-114h0m1 71h0m0-45h0m0 41h0m0 7h0m0 66h0m0-150h0m1 43h0m0 31h0m0-136h0m0 171h0m0-158h0m1 101h0m0 21h0m0 40h0m0-127h0m0 162h0m0-20h0m1-181h0m0 102h0m0 6h0m0 89h0m0-55h0m1-89h0m0 72h0m0 42h0m0-98h0m0 86h0m0-74h0m1-79h0m0 34h0m0 68h0m0 33h0m0 12h0m1-58h0m0 13h0m0-76h0m0 72h0m0-58h0m0 31h0m1-57h0m0 183h0m0-116h0m0 42h0m0-17h0m1 47h0m0-73h0m0 42h0m0-63h0m0-21h0m0 12h0m1 67h0m0-33h0m0-25h0m0 12h0m0-32h0m1-11h0m0 76h0m0-73h0m0-18h0m0 25h0m0-45h0m1 87h0m0-80h0m0-22h0m0-10h0m0 47h0m1 45h0m0-83h0m0 60h0m0-62h0m1 2h0m0 104h0m1-9h0m0 12h0m1-38h0m0-65h0m0-21h0m1 8h0m0 66h0m0 45h0m1 0h0m0-92h0m0 12h0m0-32h0m0 23h0m0 18h0m1-9h0m0-2h0m0 128h0m0-99h0m0-21h0m1 29h0m0 43h0m0-21h0m0 20h0m0 34h0m0 13h0m1-2h0m0 59h0m0-60h0m0-41h0m0 56h0m1-23h0m0 47h0m0-32h0m0-11h0m0 11h0m0 69h0m1-45h0m0-9h0m0 4h0m0-22h0m0 15h0m1 34h0m0-32h0m0 9h0m0-40h0m0 7h0m0 4h0m1-21h0m0 23h0m0 6h0m0 16h0m0-41h0m1 23h0m0-19h0m0 58h0m0-80h0m0 24h0m0-4h0m1 21h0m0 19h0m0-28h0m0 9h0m0 6h0m1-2h0m0-24h0m0 16h0m0 26h0m0-40h0m0-3h0m1 1h0m0 29h0m0 6h0m0-20h0m0-47h0m1 79h0m0 5h0m0-22h0m0 36h0m0-118h0m0 99h0m1-61h0m0 59h0m0-113h0m0 41h0m0 19h0m1-22h0m0 6h0m0 66h0m0-56h0m0 9h0m0-40h0m1 32h0m0 40h0m0-91h0m0 58h0m0 30h0m1 17h0m0-66h0m0 75h0m0-50h0m0-14h0m0 84h0m1-24h0m0 26h0m0-82h0m0 8h0m0-1h0m1 12h0m0-42h0m0 4h0m0-9h0m0 27h0m0 2h0m1-57h0m0 94h0m0-40h0m0-26h0m0 47h0m1-46h0m0 48h0m0-18h0m0 12h0m0-16h0m0 53h0m1-46h0m0-5h0m0 5h0m0-31h0m0 11h0m1 23h0m0-27h0m0 34h0m0-14h0m0-14h0m0 7h0m1-25h0m0 27h0m0 8h0m0-32h0m0 13h0m1-9h0m0-53h0m0 45h0m0 23h0m0 36h0m1-39h0m0 39h0m0-74h0m0 49h0m0 62h0m1-84h0m0-53h0m0 26h0m0 13h0m0-74h0m0 155h0m1-67h0m0 32h0m0-52h0m0 128h0m0-162h0m1 102h0m0-85h0m0-24h0m0 63h0m0-108h0m0 169h0m1-16h0m0 2h0m0-23h0m0-45h0m0-20h0m1 43h0m0 20h0m0-3h0m0 32h0m0-50h0m0 34h0m1-60h0m0 71h0m0-131h0m0 146h0m0-113h0m1 112h0m0 7h0m0 17h0m0-104h0m0-69h0m0 40h0m1 107h0m0-86h0m0 58h0m0-21h0m0-47h0m1 57h0m0-13h0m0-15h0m0 26h0m0-38h0m0 47h0m1-61h0m0 18h0m0 7h0m0-29h0m0 50h0m1-33h0m0 1h0m0 10h0m0-6h0m0 15h0m0 20h0m1 10h0m0-56h0m0-7h0m0 20h0m0 5h0m1 24h0m0-66h0m0 41h0m0-25h0m0-1h0m0 32h0m1-19h0m0-11h0m0 18h0m0-8h0m0-9h0m1 63h0m0-48h0m0-2h0m0 31h0m0-19h0m1-8h0m0 8h0m0-14h0m0 15h0m0-9h0m1 0h0m0-45h0m0 42h0m0 34h0m0-7h0m0-42h0m1-4h0m0 25h0m0 22h0m0-24h0m0 50h0m1-50h0m0 5h0m0-1h0m0 51h0m0-49h0m0-10h0m1 25h0m0 11h0m0 8h0m0-19h0m0-17h0m1 10h0m0-4h0m0-15h0m0 40h0m0 23h0m0-1h0m1-23h0m0-4h0m0-29h0m0 53h0m1-15h0m0 34h0m0-4h0m0-3h0m0-17h0m0-57h0m1 46h0m0-4h0m0 37h0m0-17h0m0 11h0m1-39h0m0 24h0m0-25h0m0 45h0m0-21h0m0-12h0m1-22h0m0-4h0m0 60h0m0-48h0m0 31h0m1-3h0m0 3h0m0-8h0m0 45h0m0-49h0m0 21h0m1-16h0m0 46h0m0-38h0m0 4h0m0-4h0m1-5h0m0-17h0m0 18h0m0-11h0m0 24h0m0 7h0m1-11h0m0-26h0m0 2h0m0-4h0m1 23h0m0 14h0m0-45h0m0-4h0m0 77h0m1-125h0m0 102h0m0-75h0m0 100h0m0-66h0m1 14h0m0-53h0m0 49h0m0 81h0m0-195h0m0 32h0m1 156h0m0-91h0m0-49h0m0 78h0m0 51h0m1-185h0m0 80h0m0 88h0m0-26h0m0-20h0m0 12h0m1-61h0m0 24h0m0 15h0m0-17h0m0 49h0m1-73h0m0-38h0m0 59h0m0 73h0m0-32h0m1 69h0m0-206h0m0-4h0m0 212h0m0-91h0m0 6h0m1 15h0m0-77h0m0 57h0m0 7h0m0-142h0m1 238h0m0-134h0m0 65h0m0 51h0m0 3h0m0-97h0m1-36h0m0 15h0m0-2h0m0 46h0m0-68h0m1 65h0m0-3h0m0 1h0m0-22h0m0 105h0m0-117h0m1 14h0m0-18h0m0-5h0m0 27h0m0 89h0m1-17h0m0-98h0m0 57h0m0-50h0m0 5h0m0 35h0m1 81h0m0-52h0m0-17h0m0-39h0m0 36h0m1-35h0m0-55h0m0 84h0m0 27h0m0-4h0m0-56h0m1 11h0m0-56h0m0 74h0m0 14h0m0-36h0m1-19h0m0-20h0m0-7h0m0 16h0m0 22h0m0 8h0m1 11h0m0-28h0m0 9h0m0 32h0m0-21h0m1 23h0m0-44h0m0 1h0m0-9h0m0 58h0m0-10h0m1-14h0m0 52h0m0-43h0m0-13h0m0-14h0m1 27h0m0-72h0m0 28h0m0 37h0m0 2h0m0-13h0m1-20h0m0-4h0m0 6h0m0 3h0m1 30h0m0-12h0m0-12h0m0-7h0m0 36h0m0-44h0m1-8h0m0 58h0m0 3h0m0-12h0m0-6h0m1-27h0m0-18h0m0-2h0m0 32h0m0 8h0m0-51h0m1 18h0m0 8h0m0 23h0m0 7h0m0-42h0m1 23h0m0 7h0m0 6h0m0-37h0m0-18h0m0 17h0m1 21h0m0 74h0m0-86h0m0 25h0m0-45h0m1 87h0m0 47h0m0-78h0m0-1h0m0-60h0m0 123h0m1-3h0m0-146h0m0 165h0m0-150h0m0 51h0m1 6h0m0 129h0m0-145h0m0-9h0m0 14h0m0-15h0m1-22h0m0 34h0m0-3h0m0 8h0m0 23h0m1-52h0m0 7h0m0 31h0m0-1h0m0-25h0m0 12h0m1 23h0m0-6h0m0-45h0m0 40h0m0-5h0m1-16h0m0-3h0m0-2h0m0 24h0m0-4h0m0-8h0m1 19h0m0-59h0m0 45h0m0-28h0m0 37h0m1-3h0m0-1h0m0-1h0m0 18h0m0-17h0m0-24h0m1-16h0m0 6h0m0-1h0m0-11h0m0 30h0m1-18h0m0-7h0m0 38h0m0-11h0m0-23h0m0-22h0m1 82h0m0-87h0m0 71h0m0 31h0m0-5h0m1 49h0m0-75h0m0-12h0m0-72h0m0 37h0m0-38h0m1 49h0m0-62h0m0 104h0m0 10h0m0-37h0m1 10h0m0-28h0m0 30h0m0 6h0m0-49h0m0 17h0m1-19h0m0 2h0m0 40h0m0-32h0m0 7h0m1-2h0m0-1h0m0 29h0m0-2h0m0 13h0m0 6h0m1-8h0m0 15h0m0-52h0m0 9h0m0 7h0m1-16h0m0 51h0m0-80h0m0 65h0m0-25h0m0 6h0m1 13h0m0-21h0m0 18h0m0-22h0m0-1h0m1 24h0m0-43h0m0 23h0m0 29h0m0 2h0m0-27h0m1 69h0m0-30h0m0-24h0m0-8h0m0 11h0m1 2h0m0 21h0m0 3h0m0-54h0m0 43h0m0-12h0m1 10h0m0-32h0m0 72h0m0-37h0m0 16h0m1-12h0m0-11h0m0 30h0m0-47h0m0 38h0m0-26h0m1 20h0m0-2h0m0-14h0m0 20h0m0-9h0m1 11h0m0-8h0m0 36h0m0 4h0m0-36h0m0 9h0m1 3h0m0 11h0m0 41h0m0-70h0m0-5h0m1 43h0m0 61h0m0-109h0m0 56h0m0-21h0m1 34h0m0-75h0m0 33h0m0 68h0m0 27h0m1-58h0m0 15h0m0-3h0m0-89h0m0 6h0m0 18h0m1 11h0m0-59h0m0 79h0m0-22h0m0 9h0m1 9h0m0-43h0m0 25h0m0 12h0m0 2h0m0-12h0m1 7h0m0 15h0m0-8h0m0-24h0m0 37h0m1-19h0m0-60h0m0 39h0m0 20h0m0-16h0m0 14h0m1-1h0m0-48h0m0 33h0m0-21h0m0 56h0m1 0h0m0-63h0m0-55h0m0 69h0m0 63h0m0-92h0m1 27h0m0 43h0m0 6h0m0-28h0m0 74h0m1-55h0m0 57h0m0-132h0m0 41h0m0-13h0m0 56h0m1-60h0m0 9h0m0 33h0m0-50h0m0 31h0m1-6h0m0-5h0m0 24h0m0-10h0m0-3h0m1-2h0m0 11h0m0-21h0m0 26h0m0 14h0m0-30h0m1 11h0m0-12h0m0-31h0m0 16h0m0-2h0m1 21h0m0 6h0m0-5h0m0-12h0m0-5h0m1 14h0m0 16h0m0-35h0m0 55h0m0-25h0m1-16h0m0-31h0m0 20h0m0-17h0m0 25h0m0 34h0m1-22h0m0 12h0m0-16h0m0 9h0m0 1h0m1-27h0m0-3h0m0-49h0m0 84h0m0-14h0m0-38h0m1 36h0m0 45h0m0-18h0m0 89h0m0-59h0m1-57h0m0 4h0m0 24h0m0-18h0m0-61h0m0 28h0m1 21h0m0 26h0m0-42h0m0 40h0m0 27h0m1-58h0m0-28h0m0 73h0m0 6h0m0-24h0m0-28h0m1 19h0m0 1h0m0 4h0m0-24h0m0-11h0m1 27h0m0-32h0m0 35h0m0-17h0m0 12h0m0 13h0m1-6h0m0 88h0m0-96h0m0-94h0m0 11h0m1 36h0m0 23h0m0-12h0m0-6h0m0 95h0m0-83h0m1-78h0m0 103h0m0 82h0m0-172h0m0 81h0m1 42h0m0-77h0m0 14h0m0 102h0m0-81h0m0 66h0m1-57h0m0-62h0m0-2h0m0 99h0m0-86h0m1 77h0m0 4h0m0-29h0m0-27h0m0 7h0m1 47h0m0-32h0m0 74h0m0-51h0m0 41h0m1-58h0m0-59h0m0 32h0m0 44h0m0-39h0m0 2h0m1 27h0m0-9h0m0 33h0m0-83h0m0 51h0m1 47h0m0 24h0m0-131h0m0 133h0m0-55h0m0 25h0m1-11h0m0-38h0m0-20h0m0 48h0m0-5h0m1-38h0m0 10h0m0-22h0m0 68h0m0-68h0m0-4h0m1 54h0m0-25h0m0-8h0m0 5h0m0-18h0m1-7h0m0 3h0m0 47h0m0-52h0m0 12h0m0 36h0m1 3h0m0-32h0m0 26h0m0-1h0m0 11h0m1-45h0m0 31h0m0-32h0m0 48h0m0-10h0m0-19h0m1-13h0m0-25h0m0 38h0m0 11h0m0 18h0m1-54h0m0 28h0m0-5h0m0 1h0m0-1h0m0 8h0m1-8h0m0 1h0m0-14h0m0 9h0m1 39h0m0-3h0m0-12h0m0-19h0m0-12h0m0-4h0m1 8h0m0 11h0m0 24h0m0-30h0m0-4h0m1 28h0m0-30h0m0 3h0m0 23h0m0-24h0m1 20h0m0-12h0m0-4h0m0 8h0m0 31h0m1-40h0m0 41h0m0-55h0m0 11h0m0-21h0m0 25h0m1 19h0m0-36h0m0-7h0m0-42h0m0 56h0m1-53h0m0 2h0m0 62h0m0 62h0m0-149h0m1 116h0m0-122h0m0 39h0m0 84h0m1-141h0m0 96h0m0 6h0m0-2h0m1-15h0m1 21h0m0-5h0m0-36h0m0 101h0m1-150h0m1-11h0m0-13h0m0 33h0m0 10h0m1-26h0m0 43h0m0-31h0m0 7h0m0 36h0m1-35h0m0 103h0m0 39h0m0-109h0m0 95h0m0-14h0m1 2h0m0 31h0m0 12h0m0-44h0m0 11h0m1 32h0m0-41h0m0 34h0m0-37h0m0-4h0m0-16h0m1 35h0m0 33h0m0-67h0m0 76h0m0-30h0m1 12h0m0-20h0m0-14h0m0-4h0m0 47h0m0 29h0m1-72h0m0-8h0m0 14h0m0-14h0m0 33h0m1-3h0m0 27h0m0-45h0m0 25h0m0-28h0m0 27h0m1 6h0m0 24h0m0-41h0m0 6h0m0-18h0m1 33h0m0-30h0m0-73h0m0 85h0m0-99h0m0-23h0m1 7h0m0 81h0m0-108h0m0 45h0m0-64h0m1 53h0m0-22h0m0 125h0m0-114h0m0-26h0m0 7h0m1-7h0m0 111h0m0-136h0m0 155h0m0-146h0m1 29h0m0-19h0m0-11h0m1 59h0m0 88h0m0-137h0m0-15h0m0 16h0m1-9h0m0 1h0m0 135h0m0 42h0m0-155h0m1 123h0m0-98h0m0 86h0m0-71h0m0 56h0m0 21h0m1-13h0m0-24h0m0 41h0m0-8h0m0-6h0m1-7h0m0 29h0m0-22h0m0 52h0m0-50h0m0 21h0m1-7h0m0-52h0m0 52h0m0 33h0m0-42h0m1-7h0m0 18h0m0-2h0m0-12h0m0 2h0m0 32h0m1-9h0m0-23h0m0 6h0m0-25h0m1 6h0m0 35h0m0-32h0m0-14h0m0 95h0m0-31h0m1-19h0m0-2h0m0-84h0m0-8h0m0 60h0m1-2h0m0-49h0m0-40h0m0 97h0m0-67h0m0 66h0m1 13h0m0-48h0m0 70h0m0-12h0m0-7h0m1 3h0m0 20h0m0-4h0m0-59h0m0 39h0m0 13h0m1 19h0m0-10h0m0-18h0m0 31h0m0-66h0m1 46h0m0-33h0m0 42h0m0-19h0m0 64h0m0-29h0m1-9h0m0-54h0m0 68h0m0-91h0m0 88h0m1-37h0m0-13h0m0 20h0m0 17h0m0-1h0m0-36h0m1 36h0m0-92h0m0 40h0m0 44h0m0 56h0m1-123h0m0-71h0m0 197h0m0-77h0m0-44h0m0-107h0m1 119h0m0 29h0m0 92h0m0-137h0m0-2h0m1 49h0m0-37h0m0-60h0m0 55h0m0 59h0m0-67h0m1 88h0m0-94h0m0 99h0m0 53h0m0-135h0m1 72h0m0-22h0m0-69h0m0 41h0m0 57h0m0-71h0m1-50h0m0 94h0m0-38h0m0 83h0m0-164h0m1 57h0m0-20h0m0 49h0m0-10h0m0 22h0m0 20h0m1-107h0m0 30h0m0 75h0m0-4h0m0-25h0m1-17h0m0-100h0m0 172h0m0 25h0m0-145h0m0 137h0m1-59h0m0-130h0m0 58h0m0 8h0m0 74h0m1-122h0m0 42h0m0 58h0m0 4h0m0-39h0m0 51h0m1-4h0m0-43h0m0 20h0m0 19h0m0-15h0m1 7h0m0 3h0m0-25h0m0 107h0m0-137h0m0 60h0m1-4h0m0-13h0m0-30h0m0 10h0m0 57h0m1 0h0m0-32h0m0 10h0m0 41h0m0-50h0m0 1h0m1-63h0m0 19h0m0 72h0m0 2h0m0-90h0m1 41h0m0 34h0m0-26h0m0-40h0m0 19h0m0-34h0m1 9h0m0 38h0m0-28h0m0 61h0m0-53h0m1 3h0m0 5h0m0-10h0m0-86h0m0 162h0m0-11h0m1-45h0m0 26h0m0-82h0m0 54h0m0 103h0m1-123h0m0 49h0m0 41h0m0-110h0m0 70h0m0-19h0m1-36h0m0 38h0m0-3h0m0-6h0m0-15h0m1 5h0m0-23h0m0 40h0m0-42h0m0 13h0m0-2h0m1 14h0m0 35h0m0-27h0m0-27h0m0-16h0m1 53h0m0-16h0m0-18h0m0-17h0m0 25h0m0 56h0m1-6h0m0-48h0m0 24h0m0-107h0m0 126h0m1-46h0m0 24h0m0-32h0m0-45h0m0 131h0m0-59h0m1 8h0m0-39h0m0 47h0m0-33h0m0 56h0m1-98h0m0-1h0m0 87h0m0 83h0m0-91h0m0-12h0m1 43h0m0-107h0m0 126h0m0-144h0m0 68h0m1-15h0m0 57h0m0 7h0m0-51h0m0-40h0m0 59h0m1-39h0m0 27h0m0 26h0m0-26h0m0-7h0m1 20h0m0-15h0m0 5h0m0-18h0m0 37h0m0 1h0m1-22h0m0 49h0m0-31h0m0 9h0m0 1h0m1-29h0m0 16h0m0 7h0m0-19h0m0 46h0m0-40h0m1 29h0m0-21h0m0-24h0m0 32h0m0 20h0m1 14h0m0-17h0m0 2h0m0 7h0m0 2h0m0-8h0m1 2h0m0-12h0m0 3h0m0-38h0m0 35h0m1-1h0m0-11h0m0-1h0m0 19h0m0 4h0m0-9h0m1 4h0m0-36h0m0 42h0m0-12h0m0-10h0m1-8h0m0-19h0m0 38h0m0-1h0m0-34h0m0 1h0m1 29h0m0 18h0m0-33h0m0 36h0m0-57h0m1 12h0m0 41h0m0-44h0m0 36h0m0-11h0m0-33h0m1 49h0m0 15h0m0-16h0m0-29h0m0 2h0m1 18h0m0 22h0m0-31h0m0 12h0m0-34h0m0 54h0m1-52h0m0 19h0m0-9h0m0-5h0m0 1h0m1 31h0m0-39h0m0 40h0m0-42h0m0 15h0m1 11h0m0-11h0m0-6h0m0 2h0m0-18h0m0 15h0m1 12h0m0-74h0m0 92h0m0 13h0m0-53h0m1-23h0m0-1h0m0-9h0m0 74h0m0-59h0m1 70h0m0-50h0m0 38h0m0-38h0m0-5h0m1 1h0m0 18h0m0 8h0m0-42h0m0-8h0m0 41h0m1 37h0m0-44h0m0-24h0m0 31h0m0 6h0m1-41h0m0-29h0m0 112h0m0 23h0m0-45h0m0 66h0m1-121h0m0 99h0m0-146h0m0 95h0m0-7h0m1-54h0m0 10h0m0 12h0m0-8h0m0 40h0m0-77h0m1 90h0m0-23h0m0 6h0m0 1h0m0-43h0m1-3h0m0 1h0m0 17h0m0 43h0m0-2h0m0-10h0m1-5h0m0-23h0m0-1h0m0 10h0m0 30h0m1-45h0m0 14h0m0 33h0m0-43h0m0 24h0m0-57h0m1 68h0m0-41h0m0 20h0m0 34h0m0-16h0m1-1h0m0-22h0m0-31h0m0 15h0m0-24h0m0 17h0m1-10h0m0 23h0m0-9h0m0-2h0m0 21h0m1-11h0m0 18h0m0-10h0m0 12h0m0-14h0m0 2h0m1-28h0m0 34h0m0 4h0m0-21h0m0 15h0m1 0h0m0-13h0m0-4h0m0 4h0m0-20h0m0-13h0m1 12h0m0 29h0m0 22h0m0-4h0m0-25h0m1 31h0m0-36h0m0 17h0m0-8h0m0-11h0m0 7h0m1 46h0m0-8h0m0-62h0m0 32h0m0-32h0m1 31h0m0-10h0m0 18h0m0-23h0m0-8h0m0 11h0m1-13h0m0 13h0m0 46h0m0-54h0m0-4h0m1 32h0m0-36h0m0 45h0m0-21h0m0-14h0m0 58h0m1-61h0m0 11h0m0-19h0m0 28h0m0-7h0m1 0h0m0-1h0m0 26h0m0-60h0m0 76h0m0-28h0m1-22h0m0 42h0m0-67h0m0 60h0m0 10h0m1-50h0m0-71h0m0 100h0m0-66h0m0 90h0m0-28h0m1-7h0m0-37h0m0 14h0m0 64h0m0-12h0m1-23h0m0-30h0m0-80h0m0 99h0m0-63h0m0-7h0m1 79h0m0 14h0m0-55h0m0 66h0m0-71h0m1 34h0m0-18h0m0 9h0m0 42h0m0-56h0m0 12h0m1 55h0m0-11h0m0-40h0m0 2h0m0 3h0m1-4h0m0 22h0m0-11h0m0-37h0m0 73h0m0 7h0m1-82h0m0 17h0m0-22h0m0 2h0m0-3h0m1 17h0m0 36h0m0-6h0m0-37h0m0 16h0m0-10h0m1-14h0m0 35h0m0-43h0m0 57h0m0-8h0m1-14h0m0 23h0m0-24h0m0 54h0m0-40h0m1-11h0m0 18h0m0 5h0m0-4h0m0 23h0m1-55h0m0 36h0m0 12h0m0-2h0m0-7h0m0 22h0m1 16h0m0-45h0m0 35h0m0-3h0m0 31h0m1-47h0m0-6h0m0 7h0m0 5h0m0 48h0m0-72h0m1 24h0m0 24h0m0-22h0m0 13h0m0-2h0m1 18h0m0-14h0m0 8h0m0-19h0m0 17h0m0-12h0m1 8h0m0-13h0m0-6h0m0 12h0m0-18h0m1 21h0m0-59h0m0 37h0m0-3h0m0 55h0m0-21h0m1-10h0m0-10h0m0 3h0m0-2h0m0 32h0m1-64h0m0 34h0m0-8h0m0 12h0m0 2h0m1-37h0m0 43h0m0-20h0m0-15h0m0 52h0m1-9h0m0 5h0m0-29h0m0 43h0m0-26h0m0-7h0m1 8h0m0 28h0m0-71h0m0 52h0m0-4h0m1-38h0m0 33h0m0 7h0m0-11h0m0-12h0m1-21h0m0 25h0m0-6h0m0 44h0m0-43h0m1-16h0m0-9h0m0 115h0m0-22h0m0-81h0m0 44h0m1-88h0m0 50h0m0 3h0m0 89h0m0-145h0m1 140h0m0-126h0m0 104h0m0-28h0m0 2h0m0 2h0m1-41h0m0 1h0m0 16h0m0-18h0m0 6h0m1-22h0m0-10h0m0-2h0m0 47h0m0-24h0m0 16h0m1-14h0m0-3h0m0 14h0m0-19h0m1 27h0m0 4h0m0 9h0m0 3h0m0-41h0m0-9h0m1 26h0m0 11h0m0-43h0m0 36h0m0 6h0m1-5h0m0-22h0m0 13h0m0-29h0m0 13h0m1 13h0m0 41h0m0-17h0m0-51h0m0 5h0m0 11h0m1 0h0m0 11h0m0 3h0m0 20h0m0-36h0m1 4h0m0 33h0m0 5h0m0-34h0m0 22h0m0-48h0m1 31h0m0 25h0m0-13h0m0 4h0m0-1h0m1-31h0m0 31h0m0 7h0m0 25h0m0-59h0m0 6h0m1 50h0m0-69h0m0 33h0m0-46h0m0 35h0m1 17h0m0-26h0m0-8h0m0 49h0m0-31h0m0-7h0m1 18h0m0 17h0m0-9h0m0-34h0m0 2h0m1 15h0m0-32h0m0 22h0m0-7h0m0 7h0m0 7h0m1 8h0m0-16h0m0 24h0m0-8h0m0 72h0m1-36h0m0 10h0m0-110h0m0 147h0m0-87h0m0-34h0m1 70h0m0-5h0m0-25h0m0 13h0m0 14h0m1-111h0m0 38h0m0 67h0m0 2h0m0-91h0m0 157h0m1-94h0m0-66h0m0 170h0m0-75h0m0-63h0m1-69h0m0 164h0m0-98h0m0-33h0m0 48h0m0 21h0m1 0h0m0 33h0m0-66h0m0 57h0m0-27h0m1 7h0m0-18h0m0 17h0m0-35h0m0 64h0m0 4h0m1-41h0m0 27h0m0-43h0m0-2h0m1 41h0m0-6h0m0-4h0m0-17h0m0 5h0m0-24h0m1 50h0m0-111h0m0 77h0m0-9h0m0 135h0m1-72h0m0-86h0m0 59h0m0-3h0m0 17h0m0-29h0m1-34h0m0 28h0m0-48h0m0 92h0m0-70h0m1 22h0m0-1h0m0 89h0m0-77h0m0-15h0m0 95h0m1-174h0m0 90h0m0 58h0m0-111h0m0 93h0m1-57h0m0 74h0m0-104h0m0 29h0m0 15h0m0 27h0m1 9h0m0-99h0m0 63h0m0-51h0m0 74h0m1-34h0m0 43h0m0-58h0m0 89h0m0-103h0m0 68h0m1-56h0m0 8h0m0 3h0m0-1h0m0-37h0m1 57h0m0-8h0m0-37h0m0 8h0m0-14h0m0 20h0m1 19h0m0-9h0m0-13h0m0-9h0m0 16h0m1 32h0m0-16h0m0-68h0m0 94h0m0-92h0m0 129h0m1-21h0m0 36h0m0-134h0m0 80h0m0-15h0m1-90h0m0 52h0m0 110h0m0-21h0m0 34h0m0-143h0m1 49h0m0 38h0m0-46h0m0-31h0m0-14h0m1-48h0m0 107h0m0-54h0m0-1h0m0 17h0m0 80h0m1-37h0m0-81h0m0 66h0m0-27h0m0 30h0m1-82h0m0 30h0m0 54h0m0 12h0m0-63h0m0-16h0m1 54h0m0-50h0m0 34h0m0 1h0m0-6h0m1 119h0m0-59h0m0-68h0m0 13h0m0-57h0m0 107h0m1-67h0m0-69h0m0 64h0m0-9h0m0 37h0m1-3h0m0-23h0m0 33h0m0 8h0m0 3h0m0-3h0m1-55h0m0 7h0m0-4h0m0 18h0m0-2h0m1 2h0m0-16h0m0-9h0m0-21h0m0 7h0m0 32h0m1-48h0m0-12h0m0 1h0m0-11h0m0 5h0m1 94h0m0-105h0m0 18h0m0 69h0m0 9h0m1-59h0m2 32h0m0-56h0m0 29h0m1 65h0m0-40h0m0-36h0m0-3h0m0 20h0m1-5h0m0 24h0m0-11h0m0 34h0m0 134h0m1-114h0m0 54h0m0 26h0m0-96h0m0 70h0m0-27h0m1-22h0m0 42h0m0 98h0m0-167h0m0-3h0m1 67h0m0 55h0m0-158h0m0 8h0m0 114h0m1 40h0m0-152h0m0 102h0m0 16h0m0-24h0m1-51h0m0 37h0m0 7h0m0 36h0m0 77h0m0-25h0m1-15h0m0-13h0m0-43h0m0-6h0m0-1h0m1-24h0m0 15h0m0 8h0m0 16h0m0-57h0m0 64h0m1-23h0m0 67h0m0-112h0m0 81h0m0 15h0m1-90h0m0 53h0m0 3h0m0-72h0m0 54h0m1 7h0m0-5h0m0 30h0m0-16h0m0-72h0m1 59h0m0-37h0m0 55h0m0-8h0m0 9h0m0-22h0m1-27h0m0 33h0m0-1h0m0 22h0m0-48h0m1 3h0m0 11h0m0-20h0m0 9h0m0 16h0m1 29h0m0-31h0m0 16h0m0-26h0m0-13h0m0 27h0m1 27h0m0-59h0m0 7h0m0-3h0m0 45h0m1-18h0m0-26h0m0-4h0m0 3h0m0 61h0m0-77h0m1 48h0m0-2h0m0-31h0m0 25h0m0 1h0m1-13h0m0 3h0m0-2h0m0 11h0m0 12h0m0-12h0m1-4h0m0 2h0m0-24h0m0-40h0m0 98h0m1-46h0m0-9h0m0 56h0m0-21h0m0-3h0m0-8h0m1 9h0m0 4h0m0-61h0m0 116h0m0-104h0m1-14h0m0 14h0m0 102h0m0 3h0m0-58h0m0 15h0m1 6h0m0-96h0m0 94h0m0-73h0m0-20h0m1-3h0m0 16h0m0 25h0m0 43h0m0-34h0m1 4h0m0-52h0m0 26h0m0 15h0m0 26h0m1-5h0m0-17h0m0-13h0m0-16h0m0 11h0m0 8h0m1-16h0m0 40h0m0-11h0m0-17h0m1-8h0m0 17h0m0 26h0m0-35h0m0 34h0m0-46h0m1-51h0m0 104h0m0-107h0m0 42h0m1-38h0m0 12h0m0 104h0m0-1h0m0 18h0m0 24h0m1-166h0m0 171h0m0-39h0m0-15h0m0-44h0m1 31h0m0-33h0m0 34h0m0 4h0m0-47h0m0 83h0m1-27h0m0-32h0m0-13h0m0-24h0m0 31h0m1 91h0m0-74h0m0 23h0m0-23h0m0-28h0m0 15h0m1-111h0m0 124h0m0 22h0m0-43h0m0-9h0m1-57h0m0 87h0m0-53h0m0 6h0m0 6h0m0 1h0m1-3h0m0 39h0m0-18h0m0-20h0m0-27h0m1 9h0m0 16h0m0 3h0m0-7h0m0-18h0m1 130h0m0-64h0m0-117h0m0 68h0m0 45h0m1 19h0m0-27h0m0 74h0m0-29h0m0-79h0m0-2h0m1 33h0m0 8h0m0 26h0m0 28h0m1-18h0m0-20h0m0 34h0m0-5h0m0-71h0m0 46h0m1-31h0m0 26h0m0 17h0m0-8h0m0 21h0m1-44h0m0 4h0m0 3h0m0 12h0m0 15h0m0 10h0m1-30h0m0 20h0m0 5h0m0 2h0m0-6h0m1 14h0m0-12h0m0-17h0m0-4h0m0 33h0m0-22h0m1 11h0m0 16h0m0 9h0m0-43h0m0-28h0m1 26h0m0-17h0m0-12h0m0 72h0m0-36h0m1 28h0m0 64h0m0-128h0m0 87h0m0-120h0m1 117h0m0-20h0m0 46h0m0-34h0m0-104h0m0 74h0m1-3h0m0 54h0m0-95h0m0-22h0m0 66h0m1-30h0m0 101h0m0-171h0m0 100h0m0 9h0m0 9h0m1-50h0m0 24h0m0 70h0m0-88h0m0 40h0m1-25h0m0 90h0m0-157h0m0-4h0m0 75h0m0 79h0m1-94h0m0-87h0m0 43h0m0-60h0m0 196h0m1-143h0m0 86h0m0 1h0m0-54h0m0 25h0m0 53h0m1 34h0m0-70h0m0 12h0m0-107h0m0 106h0m1-70h0m0 56h0m0-53h0m0 16h0m0-18h0m0 26h0m1-10h0m0 22h0m0 18h0m0-57h0m0-9h0m1 28h0m0-33h0m0 65h0m0-19h0m0 10h0m0-26h0m1 36h0m0-29h0m0-11h0m0-18h0m0 27h0m1-43h0m0 67h0m0-33h0m0-27h0m0 67h0m0-24h0m1-8h0m0-24h0m0 8h0m0 40h0m0-10h0m1-6h0m0-27h0m0-13h0m0 32h0m0 21h0m0 7h0m1-43h0m0-12h0m0 34h0m0 14h0m0-4h0m1-25h0m0 41h0m0-24h0m0-14h0m0 37h0m0-45h0m1 25h0m0-38h0m0 61h0m0-65h0m0 53h0m1-33h0m0-13h0m0 21h0m0-14h0m0 4h0m0 5h0m1-31h0m0 50h0m0-40h0m0-20h0m0 19h0m1 34h0m0-26h0m0-6h0m0-3h0m0 56h0m0 2h0m1-74h0m0 17h0m0 8h0m0 12h0m0-23h0m1-16h0m0 16h0m0 34h0m0-23h0m0-47h0m0 52h0m1 23h0m0-56h0m0 49h0m0-19h0m0-55h0m1 18h0m0 73h0m0-65h0m0-11h0m0-13h0m0 53h0m1-4h0m0-65h0m0 72h0m0 33h0m0-87h0m1-15h0m0-6h0m0 67h0m0-64h0m0-17h0m1 22h0m0 2h0m0-44h0m0 13h0m0-16h0m0-9h0m1 130h0m0-43h0m0-75h0m1 5h0m0 77h0m1 9h0m0-39h0m2 24h0m0-87h0m1 10h0m0 115h0m1-107h0m0-5h0m0 25h0m0-7h0m1 6h0m0 80h0m0-112h0m0 24h0m0 72h0m0-75h0m1 19h0m0 138h0m0-113h0m0 5h0m0 48h0m1 2h0m0 53h0m0-19h0m0 5h0m0-26h0m0 20h0m1-44h0m0 36h0m0-30h0m0 54h0m0-27h0m1 0h0m0 24h0m0-25h0m0 13h0m0-36h0m0 8h0m1 22h0m0 13h0m0-11h0m0-28h0m0 23h0m1 10h0m0 4h0m0 30h0m0-61h0m0 35h0m0-16h0m1-6h0m0 23h0m0-10h0m0-13h0m0-24h0m1 35h0m0 2h0m0-3h0m0 7h0m0-28h0m0 40h0m1-21h0m0-2h0m0-19h0m0 7h0m0 23h0m1-8h0m0 17h0m0-24h0m0 2h0m0 26h0m0-35h0m1-45h0m0 41h0m0 16h0m0 3h0m0-39h0m1 29h0m0 12h0m0 18h0m0-54h0m0 79h0m0-64h0m1 33h0m0-57h0m0 41h0m0 18h0m0-71h0m1 114h0m0-101h0m0 3h0m0 94h0m0-14h0m0-6h0m1-23h0m0-24h0m0 10h0m0-26h0m0 28h0m1 23h0m0 11h0m0-26h0m0-2h0m0 6h0m0-40h0m1 20h0m0 62h0m0-26h0m0-11h0m0-154h0m1 96h0m0 64h0m0-52h0m0-49h0m0 176h0m0-248h0m1 235h0m0-154h0m0-82h0m0 140h0m0-49h0m1 136h0m0-182h0m0 36h0m0-65h0m0 67h0m0 82h0m1 6h0m0-3h0m0-10h0m0-67h0m0 86h0m1-20h0m0-11h0m0 14h0m0-10h0m0-41h0m0 29h0m1-12h0m0 11h0m0-16h0m0-14h0m0 13h0m1 7h0m0 21h0m0 10h0m0-32h0m0-5h0m0-7h0m1 14h0m0 21h0m0-29h0m0 22h0m1 8h0m0 10h0m0-12h0m0-35h0m0 5h0m0-20h0m1 22h0m0 3h0m0-17h0m0-2h0m0 28h0m1 54h0m0-55h0m0 13h0m0-44h0m0 22h0m0 21h0m1 14h0m0-40h0m0-15h0m0 56h0m0-40h0m1 21h0m0-19h0m0-50h0m0 100h0m0-55h0m0-47h0m1 69h0m0 55h0m0-24h0m0 25h0m0-67h0m1 90h0m0-161h0m0 130h0m0-48h0m0-14h0m0 35h0m1-49h0m0 19h0m0 85h0m0-26h0m0-127h0m1 75h0m0-52h0m0 42h0m0-40h0m0 31h0m0 32h0m1 23h0m0-72h0m0 43h0m0 41h0m0-100h0m1 44h0m0 14h0m0-36h0m0-12h0m0 114h0m0-113h0m1 86h0m0-127h0m0-38h0m0 177h0m0-68h0m1-35h0m0-4h0m0 55h0m0 10h0m0-44h0m0 3h0m1-39h0m0 65h0m0-49h0m0 12h0m0 26h0m1 104h0m0-100h0m0 15h0m0 75h0m0-120h0m0 68h0m1 12h0m0-36h0m0-61h0m0 8h0m1 20h0m0 7h0m0 55h0m0-21h0m0-25h0m0-3h0m1 13h0m0-59h0m0 4h0m0 83h0m0-92h0m1 56h0m0 44h0m0-135h0m0 28h0m0 30h0m0-24h0m1 56h0m0-102h0m0 112h0m0 99h0m0-98h0m1-52h0m0 148h0m0 7h0m0-90h0m0-90h0m0 32h0m1 36h0m0-29h0m0 42h0m0 11h0m0-32h0m1-68h0m0 103h0m0-32h0m0 41h0m0-60h0m0 5h0m1 1h0m0-3h0m0 36h0m0-23h0m0 2h0m1 14h0m0-37h0m0 3h0m0 36h0m0-23h0m0-7h0m1 5h0m0-7h0m0 13h0m0 9h0m0 30h0m1-12h0m0-26h0m0 1h0m0 49h0m0-38h0m1-28h0m0-38h0m0 35h0m0 35h0m0-50h0m0 152h0m1-118h0m0 76h0m0-191h0m0 224h0m0-141h0m1 30h0m0 59h0m0 14h0m0-49h0m0 18h0m0 44h0m1-26h0m0-93h0m0 10h0m0 82h0m1-59h0m0-11h0m0 13h0m0-3h0m0-80h0m0 35h0m1 19h0m0 49h0m0-84h0m0 63h0m0-16h0m1 80h0m0-99h0m0 67h0m0-29h0m0-41h0m0 30h0m1 11h0m0-34h0m0-7h0m0 17h0m0-8h0m1 38h0m0-25h0m0 12h0m0 32h0m0-46h0m0 16h0m1-1h0m0-10h0m0 7h0m0-22h0m0 30h0m1-26h0m0 25h0m0-23h0m0 10h0m0-19h0m0-34h0m1 49h0m0-14h0m0 34h0m0-9h0m0-16h0m1-19h0m0 50h0m0-18h0m0-37h0m0 87h0m0-65h0m1 29h0m0-95h0m0 102h0m0 39h0m0-126h0m1 0h0m0 48h0m0-48h0m0 73h0m0-17h0m0 16h0m1 5h0m0-25h0m0 12h0m0-42h0m0 54h0m1-19h0m0 52h0m0-51h0m0 15h0m0 2h0m0-16h0m1 10h0m0 18h0m0-38h0m0 13h0m0 16h0m1-46h0m0 22h0m0-18h0m0-1h0m0 29h0m0-13h0m1 12h0m0 17h0m0-9h0m0-44h0m0 35h0m1-31h0m0 21h0m0 49h0m0-27h0m0-18h0m0 15h0m1-6h0m0 5h0m0 23h0m0-34h0m0-19h0m1 52h0m0-2h0m0-9h0m0-13h0m0 25h0m0-26h0m1 30h0m0 9h0m0 28h0m0-48h0m0-9h0m1 37h0m0-18h0m0 18h0m0 4h0m0-50h0m0 14h0m1 66h0m0-57h0m0 15h0m0-32h0m0 32h0m1 5h0m0 24h0m0-13h0m0 1h0m0 23h0m0-48h0m1 27h0m0-13h0m0-11h0m0 63h0m0-34h0m1 15h0m0 28h0m0-50h0m0 80h0m0-34h0m1 6h0m0 5h0m0-23h0m0-13h0m0-25h0m1-123h0m0 180h0m0-35h0m0 19h0m0-120h0m0 147h0m1-35h0m0-67h0m0 13h0m0 35h0m0-55h0m1 46h0m0-2h0m0-49h0m0 8h0m0 14h0m1-12h0m0 38h0m0-70h0m0 105h0m0-71h0m1-30h0m0 94h0m0-24h0m0-31h0m0-79h0m0 41h0m1-9h0m0 66h0m0-31h0m0-3h0m0-35h0m1 100h0m0-50h0m0 5h0m0 4h0m0-48h0m0 54h0m1-29h0m0 9h0m0-10h0m0 28h0m0 10h0m1-72h0m0 23h0m0 25h0m0 13h0m0-19h0m0 3h0m1 5h0m0-24h0m0 11h0m0 9h0m0-10h0m1 19h0m0-26h0m0 5h0m0 48h0m0-57h0m0 23h0m1-6h0m0-19h0m0 15h0m0-10h0m0 36h0m1-53h0m0 27h0m0-32h0m0 21h0m0-2h0m0-19h0m1 7h0m0 15h0m0-9h0m0-32h0m0 40h0m1 9h0m0-23h0m0 41h0m0-34h0m0 13h0m0-14h0m1 56h0m0-69h0m0 14h0m0 21h0m0-36h0m1 31h0m0 20h0m0-4h0m0-17h0m0-9h0m1 8h0m0-20h0m0-6h0m0 35h0m0-46h0m1 44h0m0-35h0m0-3h0m0 19h0m0 8h0m0 13h0m1-64h0m0 75h0m0-29h0m0-2h0m0-26h0m1 5h0m0 20h0m0 9h0m0-59h0m0 49h0m0 12h0m1-52h0m0 39h0m0 17h0m0-36h0m0 19h0m1 39h0m0-40h0m0-15h0m0 40h0m0-30h0m0-29h0m1 34h0m0 16h0m0-7h0m0-37h0m0 29h0m1-22h0m0 10h0m0 13h0m0-38h0m0-19h0m0 62h0m1-30h0m0-2h0m0 2h0m0-33h0m1-21h0m0 49h0m0 8h0m0-21h0m0 32h0m0-1h0m1-27h0m0-11h0m0 14h0m0-6h0m0 58h0m1-25h0m0-18h0m0-18h0m0 38h0m0-34h0m0 11h0m1-14h0m0 16h0m0-29h0m0 37h0m0-47h0m1 40h0m0-21h0m0 37h0m0-11h0m0-24h0m0 56h0m1-49h0m0-58h0m0 70h0m0-36h0m1 40h0m0 11h0m0-37h0m0 17h0m0-24h0m1 61h0m0 6h0m0-54h0m0-3h0m0 4h0m0 28h0m1-24h0m0 25h0m0 13h0m0-9h0m0 38h0m1-54h0m0 3h0m0 36h0m0 17h0m0-39h0m0-16h0m1 75h0m0-41h0m0 9h0m0-42h0m0-3h0m1 65h0m0-12h0m0 27h0m0-38h0m0-5h0m0-18h0m1 69h0m0-2h0m0-43h0m0 1h0m0 22h0m1-13h0m0-9h0m0 16h0m0-40h0m0-2h0m0 28h0m1 15h0m0 24h0m0-18h0m0 2h0m0 59h0m1-63h0m0-10h0m0 8h0m0 33h0m0-2h0m0-44h0m1-8h0m0 38h0m0 15h0m0-17h0m0-17h0m1-40h0m0 24h0m0 10h0m0 19h0m0-12h0m0 21h0m1-42h0m0 16h0m0 24h0m0-22h0m0-35h0m1 52h0m0 8h0m0-17h0m0-5h0m0-9h0m0 9h0m1-19h0m0 16h0m0-8h0m0-29h0m0 64h0m1-6h0m0-25h0m0 26h0m0-8h0m0-66h0m0 74h0m1-4h0m0-30h0m0 10h0m0 38h0m0-45h0m1-24h0m0 34h0m0-14h0m0 14h0m0 19h0m0-1h0m1-34h0m0 4h0m0 59h0m0-74h0m0 20h0m1-11h0m0-24h0m0 72h0m0 10h0m0 21h0m0 5h0m1-44h0m0-34h0m0 32h0m0-91h0m0 111h0m1-114h0m0 72h0m0-36h0m0 31h0m0 26h0m0-14h0m1 11h0m0-29h0m0 10h0m0 32h0m0-77h0m1 29h0m0 58h0m0-16h0m0-10h0m0-12h0m0-2h0m1 14h0m0-54h0m0 84h0m0-54h0m0 11h0m1-35h0m0 54h0m0-8h0m0-81h0m0 68h0m0 11h0m1 9h0m0 12h0m0 48h0m0 2h0m0-42h0m1-26h0m0-42h0m0 57h0m0 1h0m0-21h0m0 25h0m1-24h0m0-44h0m0 67h0m0 12h0m0-26h0m1-18h0m0 28h0m0-46h0m0-34h0m0 27h0m0-8h0m1-4h0m0 15h0m0 15h0m0-1h0m0 39h0m1-5h0m0-15h0m0 9h0m0-7h0m0-26h0m0 12h0m1 3h0m0-50h0m0 52h0m0-8h0m0-25h0m1 27h0m0-30h0m0 42h0m0-48h0m0 23h0m0 47h0m1-35h0m0-15h0m0 20h0m0-19h0m0 21h0m1-24h0m0 18h0m0-33h0m0 15h0m0-15h0m0 1h0m1 40h0m0-6h0m0-19h0m0-28h0m0 21h0m1 64h0m0-91h0m0 31h0m0-34h0m0 86h0m0-17h0m1 6h0m0 21h0m0-100h0m0 60h0m0 22h0m1 17h0m0-22h0m0-53h0m0-21h0m0 24h0m0 37h0m1-19h0m0 60h0m0-16h0m0-37h0m0-12h0m1 9h0m0-8h0m0 17h0m0-6h0m0-9h0m0 11h0m1 3h0m0-5h0m0-42h0m0 59h0m0-73h0m1 72h0m0-44h0m0-11h0m0-9h0m0 60h0m0-43h0m1 81h0m0-60h0m0 40h0m0 5h0m0-61h0m1-8h0m0 36h0m0-67h0m0 99h0m0 60h0m0-67h0m1-3h0m0 88h0m0-175h0m0 76h0m0-85h0m1 147h0m0-40h0m0-13h0m0-74h0m0 57h0m0-10h0m1-46h0m0 54h0m0-3h0m0-59h0m0 122h0m1-114h0m0 55h0m0-4h0m0-10h0m0-9h0m0 15h0m1-70h0m0 167h0m0 5h0m0-110h0m0 67h0m1-47h0m0 3h0m0-10h0m0-22h0m0 80h0m0-42h0m1-63h0m0 48h0m0 1h0m0-69h0m0 49h0m1 29h0m0-32h0m0-2h0m0 37h0m0-40h0m0 23h0m1 35h0m0-59h0m0 4h0m0 1h0m1 27h0m0-3h0m0 14h0m0-52h0m0 12h0m0-39h0m1 42h0m0 31h0m0 8h0m0 14h0m0 2h0m1-160h0m0 210h0m0-35h0m0 26h0m0-125h0m0 36h0m1 21h0m0-59h0m0 69h0m0-43h0m0-65h0m1 88h0m0 2h0m0-31h0m0-12h0m0-1h0m0 41h0m1-23h0m0 9h0m0-29h0m0 39h0m0-1h0m1 21h0m0-15h0m0 5h0m0-27h0m0-19h0m0 36h0m1-53h0m0 47h0m0-33h0m0 13h0m0 24h0m1-11h0m0 32h0m0-45h0m0-30h0m0 34h0m1-35h0m0 40h0m0 5h0m0-6h0m0 9h0m0-15h0m1-34h0m0 39h0m0 12h0m0-12h0m0-20h0m1 22h0m0 36h0m0-20h0m0-55h0m0 37h0m0-29h0m1 27h0m0 16h0m0-20h0m0-35h0m0-26h0m1-12h0m0-20h0m0 14h0m0-2h0m0-12h0m0-15h0m1 56h0m0 61h0m1-110h0m0 47h0m0 65h0m0-56h0m1 62h0m1-16h0m1-74h0m1-21h0m0 118h0m0-95h0m0-29h0m0 25h0m1 73h0m0 21h0m0-124h0m0 147h0m1-115h0m0-2h0m0 23h0m0 11h0m0 8h0m0 67h0m1-33h0m0 47h0m0 4h0m0-34h0m0 61h0m1-27h0m0 6h0m0-14h0m0 31h0m0-21h0m0 3h0m1-11h0m0-12h0m0-12h0m0 24h0m0 16h0m1 5h0m0-5h0m0-54h0m0 13h0m0 7h0m0 11h0m1 35h0m0-48h0m0 26h0m0 17h0m1-28h0m0 19h0m0-50h0m0 7h0m0 11h0m0 4h0m1-9h0m0 61h0m0-12h0m0-29h0m0 10h0m1 37h0m0-52h0m0 17h0m0 10h0m0-39h0m0-7h0m1 40h0m0-16h0m0-9h0m0 13h0m0-12h0m1 30h0m0-8h0m0-27h0m0 8h0m0-42h0m0 55h0m1-5h0m0-16h0m0-9h0m0 7h0m0-38h0m1 37h0m0-28h0m0 67h0m0-77h0m0 30h0m0 114h0m1-160h0m0 12h0m0 118h0m0-80h0m0-77h0m1 110h0m0-111h0m0 112h0m0-98h0m0 63h0m0 12h0m1 5h0m0 13h0m0-30h0m0 37h0m0-64h0m1 28h0m0 8h0m0 1h0m0 11h0m0-25h0m1 26h0m0-6h0m0 12h0m0-51h0m0-3h0m1 44h0m0-8h0m0 24h0m0-44h0m0-38h0m1 61h0m0-31h0m0 47h0m0-70h0m0-12h0m1 48h0m0-7h0m0-34h0m0 32h0m0 35h0m0-35h0m1 43h0m0-57h0m0 11h0m0-22h0m0 20h0m1-5h0m0 27h0m0-27h0m0 24h0m0 11h0m0-124h0m1 189h0m0-91h0m0 39h0m0-7h0m0-28h0m1-3h0m0-49h0m0 150h0m0-118h0m0 34h0m0-63h0m1 106h0m0 61h0m0-108h0m0 14h0m0 14h0m1-12h0m0-54h0m0 47h0m0-51h0m0 16h0m0 43h0m1 37h0m0-81h0m0 46h0m0-3h0m0-41h0m1-13h0m0 34h0m0-4h0m0 18h0m0-23h0m1-7h0m0-34h0m0 42h0m0 17h0m0-42h0m1 38h0m0 8h0m0-27h0m0 8h0m0 60h0m1-40h0m0 89h0m0-85h0m0-58h0m0 53h0m1-39h0m0 12h0m0-51h0m0 110h0m0 75h0m0-78h0m1-11h0m0-82h0m0-19h0m0 103h0m0 18h0m1 8h0m0-34h0m0-58h0m0 40h0m0-46h0m0 27h0m1-23h0m0-3h0m0 1h0m0-6h0m0 31h0m1-25h0m0 27h0m0 18h0m0-21h0m0-17h0m0 35h0m1-69h0m0 93h0m0 17h0m0-17h0m0-89h0m1 65h0m0-35h0m0-6h0m0 109h0m0-72h0m0-61h0m1 4h0m0 47h0m0-30h0m0 16h0m0-27h0m1 107h0m0-26h0m0-95h0m0 45h0m0 35h0m0-51h0m1 4h0m0 32h0m0-29h0m0 5h0m0-21h0m1 16h0m0-6h0m0-14h0m0 13h0m0 18h0m0 11h0m1-7h0m0-3h0m0-13h0m0 2h0m0 6h0m1 10h0m0-54h0m0 39h0m0 39h0m0-42h0m0-29h0m1 33h0m0-16h0m0 57h0m0-78h0m0 6h0m1-26h0m0 38h0m0 46h0m0-87h0m0-8h0m0-8h0m1 149h0m0-112h0m0-15h0m0 1h0m0 77h0m1 33h0m0-20h0m0 31h0m0-80h0m0 46h0m0-37h0m1 1h0m0 8h0m0 18h0m0-6h0m0-58h0m1 76h0m0-45h0m0 23h0m0-7h0m0-11h0m1-49h0m0 35h0m0-6h0m0-3h0m0-5h0m0 13h0m1-23h0m0 26h0m0 15h0m0-10h0m1-33h0m0 66h0m0-18h0m0-15h0m0-2h0m0 6h0m1 15h0m0-18h0m0-7h0m0 33h0m0-24h0m1-4h0m0-1h0m0-35h0m0 64h0m0-41h0m0 2h0m1 68h0m0-89h0m0 96h0m0-65h0m0 51h0m1-24h0m0-45h0m0-14h0m0 31h0m0-3h0m0 14h0m1-42h0m0 17h0m0 131h0m0-200h0m0 147h0m1 68h0m0-44h0m0-46h0m0 21h0m0 85h0m0-163h0m1 94h0m0-53h0m0 69h0m0-82h0m0-5h0m1 95h0m0-40h0m0-50h0m0-27h0m0 71h0m0-17h0m1-19h0m0-8h0m0-11h0m0 2h0m0 56h0m1-40h0m0 41h0m0-25h0m0-11h0m0 5h0m0 16h0m1 20h0m0-40h0m0 10h0m0 75h0m0-95h0m1 8h0m0 97h0m0-109h0m0 24h0m0 9h0m0 71h0m1-9h0m0-43h0m0-30h0m0 19h0m0-65h0m1 114h0m0 58h0m0-28h0m0-90h0m0-3h0m0-19h0m1 24h0m0-13h0m0 30h0m0-17h0m0-13h0m1 11h0m0 46h0m0 14h0m0-33h0m0-74h0m0 62h0m1 30h0m0-3h0m0-6h0m0-34h0m0-5h0m1 51h0m0-13h0m0-1h0m0 37h0m0-46h0m0 2h0m1-11h0m0 24h0m0-9h0m0-15h0m0 12h0m1-28h0m0 1h0m0 22h0m0-5h0m0 6h0m0-51h0m1 60h0m0 15h0m0 9h0m0-6h0m0-32h0m1 6h0m0 2h0m0 56h0m0-92h0m0 18h0m0 53h0m1-48h0m0 26h0m0-73h0m0 45h0m0 21h0m1 14h0m0-56h0m0 41h0m0-4h0m0-14h0m0 3h0m1 26h0m0-47h0m0 24h0m0-36h0m0 28h0m1-16h0m0-17h0m0 19h0m0 19h0m0 23h0m0-24h0m1 24h0m0-20h0m0-2h0m0-9h0m0-20h0m1 6h0m0 17h0m0-1h0m0 35h0m0-75h0m1 56h0m0-29h0m0 7h0m0 84h0m0-106h0m1 61h0m0-64h0m0-54h0m0 115h0m0-46h0m0 54h0m1-49h0m0 5h0m0 24h0m0-24h0m0-21h0m1 10h0m0-12h0m0 13h0m0 19h0m0 21h0m0-43h0m1 6h0m0-20h0m0 22h0m0-12h0m0 9h0m1 15h0m0-4h0m0 56h0m0-73h0m0 23h0m0-33h0m1-9h0m0 32h0m0-4h0m0-15h0m0-2h0m1-14h0m0 39h0m0-20h0m0-41h0m0 34h0m0-36h0m1 26h0m0 24h0m0-30h0m0-2h0m0 34h0m1-61h0m0 18h0m0 3h0m0 57h0m0-13h0m0-1h0m1-15h0m0-21h0m0-10h0m0 2h0m0 32h0m1-52h0m0 50h0m0 4h0m0-10h0m0-37h0m0 89h0m1-46h0m0 6h0m0 48h0m0-57h0m1 10h0m0-7h0m0 24h0m0-26h0m0 40h0m0-46h0m1-44h0m0-52h0m0 126h0m0-107h0m0 47h0m1-54h0m0 171h0m0 26h0m0-64h0m0-67h0m0-20h0m1 59h0m0-29h0m0-82h0m0 116h0m0-77h0m1 98h0m0-66h0m0 52h0m0-23h0m0 45h0m0-98h0m1-31h0m0 80h0m0-24h0m0 19h0m0-11h0m1-10h0m0 1h0m0 1h0m0-5h0m0-11h0m0-32h0m1 30h0m0 4h0m0 26h0m0 4h0m0-17h0m1 3h0m0-5h0m0 41h0m0-23h0m0 18h0m0-25h0m1 8h0m0-27h0m0 2h0m0 29h0m0-31h0m1 13h0m0-21h0m0 78h0m0-32h0m0 2h0m0-43h0m1 24h0m0-3h0m0 10h0m0 12h0m1-5h0m0 44h0m0-30h0m0 8h0m0-14h0m0 8h0m1 19h0m0-8h0m0 16h0m0-17h0m0-30h0m1 34h0m0-43h0m0 64h0m0-50h0m0 32h0m0-29h0m1 40h0m0-30h0m0-22h0m0 49h0m0-30h0m1-5h0m0 51h0m0-32h0m0 7h0m0 20h0m0-37h0m1 2h0m0 4h0m0 21h0m0-14h0m0 1h0m1-9h0m0-13h0m0 30h0m0 6h0m0-44h0m1 16h0m0 40h0m0-50h0m0-8h0m0-1h0m0 14h0m1 30h0m0-5h0m0-19h0m0-3h0m0 24h0m1-23h0m0 4h0m0 36h0m0-20h0m0-54h0m0 65h0m1-22h0m0 23h0m0-14h0m0-6h0m0 19h0m1-33h0m0-14h0m0 14h0m0 53h0m0-37h0m0 6h0m1-8h0m0-23h0m0 48h0m0-38h0m0 27h0m1-22h0m0 9h0m0-19h0m0-17h0m0 84h0m1-47h0m0 104h0m0-75h0m0-86h0m0 129h0m1-32h0m0 12h0m0-17h0m0-51h0m0 1h0m0 49h0m1 5h0m0-33h0m0-23h0m0 8h0m0-16h0m1 12h0m0 17h0m0-14h0m0 29h0m0-49h0m0 37h0m1 2h0m0-6h0m0-20h0m0 21h0m0 28h0m1-73h0m0 45h0m0 28h0m0 4h0m0-37h0m0 31h0m1-22h0m0 19h0m0-25h0m0-12h0m0 38h0m1-68h0m0 51h0m0-24h0m0-31h0m0 20h0m0-1h0m1 49h0m0 2h0m0-35h0m0-5h0m0-13h0m1 8h0m0 10h0m0 7h0m0 2h0m0-5h0m0 26h0m1-16h0m0-12h0m0-9h0m0 14h0m0-20h0m1 1h0m0-1h0m0 11h0m0 16h0m0-36h0m0 8h0m1 28h0m0-33h0m0-8h0m0 31h0m0-2h0m1 50h0m0-28h0m0-33h0m0-3h0m0 57h0m0-106h0m1 66h0m0 5h0m0 38h0m0-62h0m0 76h0m1-86h0m0 68h0m0-68h0m0 141h0m0-115h0m0-50h0m1 55h0m0-40h0m0 53h0m0-101h0m0 85h0m1 34h0m0 24h0m0-121h0m0 69h0m0-48h0m0 47h0m1-4h0m0-48h0m0 50h0m0-33h0m0 36h0m1 2h0m0-23h0m0 11h0m0 7h0m0-26h0m0 36h0m1-46h0m0 13h0m0 35h0m0-42h0m0 6h0m1-40h0m0 29h0m0 2h0m0-18h0m0 70h0m0-12h0m1-7h0m0 6h0m0-37h0m0 5h0m0-44h0m1 71h0m0-3h0m0-33h0m0 7h0m0-1h0m0 21h0m1-28h0m0 8h0m0 15h0m0-25h0m0 51h0m1-51h0m0-20h0m0 51h0m0-65h0m0 29h0m0 40h0m1-55h0m0 93h0m0-1h0m0-19h0m0-48h0m1 96h0m0 23h0m0 26h0m0-154h0m0-26h0m0 71h0m1-11h0m0 1h0m0 5h0m0 51h0m0-40h0m1-72h0m0 136h0m0-27h0m0-89h0m0-1h0m0 43h0m1-17h0m0 30h0m0-52h0m0-10h0m0 25h0m1-19h0m0-10h0m0 41h0m0-44h0m0 40h0m0-27h0m1 12h0m0 3h0m0-6h0m0-31h0m0 42h0m1-18h0m0-13h0m0 1h0m0 17h0m0 15h0m0-22h0m1 14h0m0 9h0m0-29h0m0-12h0m0 18h0m1 15h0m0 8h0m0-32h0m0 7h0m0 3h0m0 14h0m1 4h0m0 22h0m0-45h0m0 26h0m0 20h0m1-13h0m0 12h0m0-51h0m0 24h0m0 11h0m1-4h0m0 14h0m0-3h0m0-31h0m0 17h0m1-1h0m0 34h0m0-19h0m0-42h0m0 28h0m0-17h0m1 23h0m0-33h0m0 5h0m0-4h0m0 12h0m1 21h0m0-10h0m0-4h0m0 11h0m0 4h0m1-9h0m0 3h0m0-27h0m0 15h0m0-40h0m1 6h0m0 41h0m0-34h0m0-19h0m0-7h0m1 3h0m0-20h0m0-20h0m0-11h0m0 5h0m1 38h0m0-34h0m0 35h0m1-43h0m0 126h0m0-96h0m0 21h0m0-17h0m1 12h0m0-43h0m1 36h0m0-3h0m0-31h0m0 41h0m1-26h0m0-6h0m0 3h0m1 10h0m0 100h0m0-117h0m1 92h0m0-62h0m0-22h0m0 46h0m0 69h0m0-92h0m1 114h0m0-89h0m0 5h0m0-4h0m0 101h0m1-87h0m0 115h0m0-45h0m0 37h0m0-22h0m1-30h0m0 54h0m0-55h0m0 65h0m0-71h0m0 44h0m1-85h0m0 77h0m0 16h0m0-1h0m0-20h0m1 12h0m0-18h0m0 17h0m0-39h0m0-19h0m0 59h0m1-38h0m0 18h0m0-18h0m0-8h0m0 21h0m1 11h0m0 58h0m0-136h0m0 114h0m0-83h0m0 50h0m1-30h0m0 64h0m0-74h0m0 51h0m0 2h0m1-6h0m0-26h0m0 40h0m0-35h0m0 40h0m0-89h0m1 75h0m0-61h0m0 44h0m0 10h0m0-12h0m1-28h0m0-10h0m0-18h0m0 27h0m0-20h0m0 38h0m1 30h0m0-79h0m0 24h0m0-10h0m0 45h0m1-39h0m0-2h0m0-22h0m0 43h0m0-29h0m0 10h0m1-8h0m0-23h0m0 23h0m0-12h0m0 5h0m1 5h0m0 2h0m0 3h0m0-6h0m0-1h0m1 15h0" fill="none" stroke="#000" stroke-width="7.40" stroke-linecap="round"/></g>
<g clip-path="url(#c2)"><path transform="scale(.5)" d="M0 0m342 892h0m1 10h0m59 7h0m1-6h0m1-11h0m0-27h0m0 14h0m1-20h0m0-11h0m0-28h0m0 34h0m1 2h0m0 9h0m0 41h0m0-81h0m0-1h0m1-20h0m0 40h0m0-30h0m0 49h0m0 13h0m1 22h0m0 7h0m1-2h0m1-13h0m0-2h0m0 20h0m1-8h0m0 7h0m12-21h0m0 10h0m0 11h0m57 307h0m53-346h0m46 386h0m13-353h0m0-3h0m1-5h0m0 5h0m0-30h0m0 9h0m1 10h0m0-11h0m1-37h0m0 4h0m0 48h0m0 19h0m1-94h0m0-1h0m0 10h0m0 30h0m1 2h0m0-12h0m0 62h0m0-44h0m1-3h0m0 29h0m0-4h0m0-39h0m0 36h0m1 15h0m0-7h0m81 12h0m1-10h0m0 12h0m0 2h0m0-34h0m1-24h0m0 33h0m0-9h0m0-7h0m1-5h0m0-26h0m0 30h0m0-20h0m0 30h0m1-15h0m0-1h0m1 16h0m0 4h0m0 13h0m1 9h0m168 5h0m0-11h0m1-15h0m0 10h0m0 5h0m15-14h0m0-5h0m1-12h0m0 10h0m1 33h0m39 361h0m37-361h0m19 281h0m74 27h0m1-314h0m1-5h0m0 5h0m0 5h0m1-12h0m0-30h0m0 30h0m1-20h0m0 22h0m0-7h0m1 10h0m82 2h0m0-14h0m1-3h0m0 15h0m0-31h0m1 15h0m0 11h0m0-11h0m1-40h0m0 10h0m0 14h0m0 12h0m1-12h0m1 32h0m0 1h0m0-3h0m0-20h0m1 31h0m0 2h0m0-2h0m96-6h0m1-5h0m0-46h0m0 35h0m1-41h0m0 28h0m0-19h0m0 44h0m1-32h0m0 6h0m0-6h0m0 8h0m0 29h0m87-8h0m1-27h0m0 34h0m1-25h0m1-23h0m0 50h0m0-41h0m0-4h0m0 27h0m1 6h0m0-5h0m0 12h0m0-36h0m166 20h0m0 28h0m1-29h0m0 13h0m1 2h0m0-14h0m0 2h0m0 11h0m1-26h0m0 10h0m0-32h0m0 35h0m0-25h0m1 36h0m0-30h0m0-2h0m0 15h0m0 25h0m1 1h0m0-10h0m1 8h0m0-4h0m69 318h0m16-315h0m0 6h0m0 4h0m0-13h0m1-21h0m0 15h0m0 15h0m1-50h0m0 10h0m0 14h0m1 20h0m1 6h0m25 280h0m73-281h0m0-20h0m1-15h0m0 9h0m1 6h0m1 19h0m84 3h0m0-11h0m1 14h0m0-32h0m1-8h0m0-8h0m0 26h0m0-17h0m1 0h0m0 31h0m1 0h0m0 2h0m41-73h0m16 377h0m109-308h0m1-17h0m0 17h0m1 0h0m0-1h0m0-21h0m0-16h0m1-8h0m0 9h0m1 26h0m0 3h0m0 3h0m0-7h0m1-9h0m0 29h0m14-33h0m0 31h0m0-21h0m104 301h0m69-299h0m1-4h0m0-11h0m0 13h0m0-45h0m1 17h0m0-7h0m0-3h0m0-6h0m0 53h0m0-34h0m1 19h0m0 9h0m1 19h0m4 293h0m21-14h0m5-276h0m49-21h0m0 13h0m1-6h0m0 4h0m0-61h0m0 7h0m1 14h0m0-7h0m0 43h0m1 1h0m0-86h0m0 12h0m0-2h0m0 87h0m0-48h0m1 38h0m0-38h0m0 28h0m1-27h0m0 41h0m0-30h0m0 2h0m1-1h0m42 26h0m58-42h0m85 51h0m0-14h0m0-7h0m1 9h0m0-8h0m1 2h0m0-26h0m0-18h0m0 35h0m1-40h0m0-18h0m0 34h0m0-24h0m0 58h0m1-34h0m0 22h0m0 20h0m0 1h0m1-31h0m1 29h0m95 343h0m72-332h0m0 2h0m0-19h0m2 18h0m0-32h0m0-1h0m0-23h0m1 9h0m1 18h0m0 18h0m0 7h0m1 3h0" fill="none" stroke="#ffa500" stroke-width="7.40" stroke-linecap="round"/></g>
<path d="M229.0 661.2h6.6l-3.3 5.2zM420.0 661.2h6.6l-3.3 5.2zM495.0 661.2h6.6l-3.3 5.2zM769.0 661.2h6.6l-3.3 5.2zM853.1 661.2h6.6l-3.3 5.2zM873.8 661.2h6.6l-3.3 5.2zM882.0 661.2h6.6l-3.3 5.2zM1085.8 661.2h6.6l-3.3 5.2z" fill="#ffa500" clip-path="url(#c2)"/>
<rect x="105.5" y="499.1" width="1252.5" height="48.6" fill="#ff0000" fill-opacity=".1"/>
<rect x="162.38" y="495.1" width="1139.6" height="53.4" fill="#ffa500" fill-opacity=".1"/>
<line x1="162.38" y1="521.6" x2="1302" y2="521.6" stroke="#ffa500" stroke-width="2.08"/>
<line x1="105.5" y1="523" x2="1358" y2="523" stroke="#ff0000" stroke-width="2.08"/>
<line x1="162.00" y1="666.5" x2="162.00" y2="380.5" stroke="#800080" stroke-width="2.08" stroke-dasharray="2.08 3.44"/><line x1="1300.00" y1="666.5" x2="1300.00" y2="380.5" stroke="#800080" stroke-width="2.08" stroke-dasharray="2.08 3.44"/>
<text x="731.80" y="656.60" font-size="14.6" text-anchor="middle" textLength="44.19" lengthAdjust="spacingAndGlyphs" fill="#000" stroke="#000" stroke-width="0.2">14894</text>
<rect x="105.5" y="380.5" width="1378.00" height="286.00" fill="none" stroke="#000" stroke-width="1.11"/>
<line x1="162.50" y1="666.5" x2="162.50" y2="671.36" stroke="#000" stroke-width="1.11"/><text x="162.50" y="687.00" font-size="14.6" text-anchor="middle" textLength="8.84" lengthAdjust="spacingAndGlyphs" fill="#000" stroke="#000" stroke-width="0.2">0</text><line x1="347.50" y1="666.5" x2="347.50" y2="671.36" stroke="#000" stroke-width="1.11"/><text x="347.50" y="687.00" font-size="14.6" text-anchor="middle" textLength="35.35" lengthAdjust="spacingAndGlyphs" fill="#000" stroke="#000" stroke-width="0.2">2000</text><line x1="533.50" y1="666.5" x2="533.50" y2="671.36" stroke="#000" stroke-width="1.11"/><text x="533.50" y="687.00" font-size="14.6" text-anchor="middle" textLength="35.35" lengthAdjust="spacingAndGlyphs" fill="#000" stroke="#000" stroke-width="0.2">4000</text><line x1="718.50" y1="666.5" x2="718.50" y2="671.36" stroke="#000" stroke-width="1.11"/><text x="718.50" y="687.00" font-size="14.6" text-anchor="middle" textLength="35.35" lengthAdjust="spacingAndGlyphs" fill="#000" stroke="#000" stroke-width="0.2">6000</text><line x1="903.50" y1="666.5" x2="903.50" y2="671.36" stroke="#000" stroke-width="1.11"/><text x="903.50" y="687.00" font-size="14.6" text-anchor="middle" textLength="35.35" lengthAdjust="spacingAndGlyphs" fill="#000" stroke="#000" stroke-width="0.2">8000</text><line x1="1089.50" y1="666.5" x2="1089.50" y2="671.36" stroke="#000" stroke-width="1.11"/><text x="1089.50" y="687.00" font-size="14.6" text-anchor="middle" textLength="44.19" lengthAdjust="spacingAndGlyphs" fill="#000" stroke="#000" stroke-width="0.2">10000</text><line x1="1274.50" y1="666.5" x2="1274.50" y2="671.36" stroke="#000" stroke-width="1.11"/><text x="1274.50" y="687.00" font-size="14.6" text-anchor="middle" textLength="44.19" lengthAdjust="spacingAndGlyphs" fill="#000" stroke="#000" stroke-width="0.2">12000</text><line x1="1459.50" y1="666.5" x2="1459.50" y2="671.36" stroke="#000" stroke-width="1.11"/><text x="1459.50" y="687.00" font-size="14.6" text-anchor="middle" textLength="44.19" lengthAdjust="spacingAndGlyphs" fill="#000" stroke="#000" stroke-width="0.2">14000</text>
<line x1="100.64" y1="663.50" x2="105.5" y2="663.50" stroke="#000" stroke-width="1.11"/><text x="95.80" y="668.80" font-size="14.6" text-anchor="end" textLength="30.93" lengthAdjust="spacingAndGlyphs" fill="#000" stroke="#000" stroke-width="0.2">8.26</text><line x1="100.64" y1="631.50" x2="105.5" y2="631.50" stroke="#000" stroke-width="1.11"/><text x="95.80" y="636.80" font-size="14.6" text-anchor="end" textLength="30.93" lengthAdjust="spacingAndGlyphs" fill="#000" stroke="#000" stroke-width="0.2">8.27</text><line x1="100.64" y1="599.50" x2="105.5" y2="599.50" stroke="#000" stroke-width="1.11"/><text x="95.80" y="604.80" font-size="14.6" text-anchor="end" textLength="30.93" lengthAdjust="spacingAndGlyphs" fill="#000" stroke="#000" stroke-width="0.2">8.28</text><line x1="100.64" y1="567.50" x2="105.5" y2="567.50" stroke="#000" stroke-width="1.11"/><text x="95.80" y="572.80" font-size="14.6" text-anchor="end" textLength="30.93" lengthAdjust="spacingAndGlyphs" fill="#000" stroke="#000" stroke-width="0.2">8.29</text><line x1="100.64" y1="535.50" x2="105.5" y2="535.50" stroke="#000" stroke-width="1.11"/><text x="95.80" y="540.80" font-size="14.6" text-anchor="end" textLength="30.93" lengthAdjust="spacingAndGlyphs" fill="#000" stroke="#000" stroke-width="0.2">8.30</text><line x1="100.64" y1="503.50" x2="105.5" y2="503.50" stroke="#000" stroke-width="1.11"/><text x="95.80" y="508.80" font-size="14.6" text-anchor="end" textLength="30.93" lengthAdjust="spacingAndGlyphs" fill="#000" stroke="#000" stroke-width="0.2">8.31</text><line x1="100.64" y1="471.50" x2="105.5" y2="471.50" stroke="#000" stroke-width="1.11"/><text x="95.80" y="476.80" font-size="14.6" text-anchor="end" textLength="30.93" lengthAdjust="spacingAndGlyphs" fill="#000" stroke="#000" stroke-width="0.2">8.32</text><line x1="100.64" y1="439.50" x2="105.5" y2="439.50" stroke="#000" stroke-width="1.11"/><text x="95.80" y="444.80" font-size="14.6" text-anchor="end" textLength="30.93" lengthAdjust="spacingAndGlyphs" fill="#000" stroke="#000" stroke-width="0.2">8.33</text><line x1="100.64" y1="407.50" x2="105.5" y2="407.50" stroke="#000" stroke-width="1.11"/><text x="95.80" y="412.80" font-size="14.6" text-anchor="end" textLength="30.93" lengthAdjust="spacingAndGlyphs" fill="#000" stroke="#000" stroke-width="0.2">8.34</text>
<rect x="1362.5" y="387.5" width="114" height="47.5" rx="2.8" fill="#fff" fill-opacity=".8" stroke="#cccccc" stroke-width="1.11"/>
<line x1="1367" y1="399.5" x2="1398" y2="399.5" stroke="#ffa500" stroke-width="2.08"/>
<text x="1408.50" y="404.60" font-size="14.6" text-anchor="start" textLength="30.86" lengthAdjust="spacingAndGlyphs" fill="#000" stroke="#000" stroke-width="0.2">mag</text>
<text x="1439.56" y="406.20" font-size="10.658" text-anchor="start" textLength="30.85" lengthAdjust="spacingAndGlyphs" font-style="italic" fill="#000" stroke="#000" stroke-width="0.2">OBSID</text>
<line x1="1367" y1="422" x2="1397" y2="422" stroke="#ff0000" stroke-width="2.08"/>
<text x="1407.50" y="427.10" font-size="14.6" text-anchor="start" textLength="30.86" lengthAdjust="spacingAndGlyphs" fill="#000" stroke="#000" stroke-width="0.2">mag</text>
<rect x="1346.5" y="613.7" width="129.8" height="45.3" rx="2.8" fill="#fff" fill-opacity=".8" stroke="#cccccc" stroke-width="1.11"/>
<circle cx="1365.5" cy="626.5" r="1.85" fill="#ffa500"/>
<text x="1390.20" y="629.90" font-size="14.6" text-anchor="start" textLength="80.07" lengthAdjust="spacingAndGlyphs" fill="#000" stroke="#000" stroke-width="0.2">Highlighted</text>
<circle cx="1365.5" cy="647.3" r="1.85" fill="#000"/>
<text x="1390.20" y="650.70" font-size="14.6" text-anchor="start" textLength="20.04" lengthAdjust="spacingAndGlyphs" fill="#000" stroke="#000" stroke-width="0.2">OK</text>
<line x1="105.5" y1="758.5" x2="1483.5" y2="758.5" stroke="#b0b0b0" stroke-width="1.11" stroke-dasharray="1.11 1.83"/>
<line x1="100.64" y1="758.50" x2="105.5" y2="758.50" stroke="#000" stroke-width="1.11"/>
<text x="95.80" y="763.80" font-size="14.6" text-anchor="end" textLength="79.24" lengthAdjust="spacingAndGlyphs" fill="#000" stroke="#000" stroke-width="0.2">not Kalman</text>
<line x1="105.5" y1="791.5" x2="1483.5" y2="791.5" stroke="#b0b0b0" stroke-width="1.11" stroke-dasharray="1.11 1.83"/>
<line x1="100.64" y1="791.50" x2="105.5" y2="791.50" stroke="#000" stroke-width="1.11"/>
<text x="95.80" y="796.80" font-size="14.6" text-anchor="end" textLength="62.51" lengthAdjust="spacingAndGlyphs" fill="#000" stroke="#000" stroke-width="0.2">not track</text>
<line x1="105.5" y1="823.5" x2="1483.5" y2="823.5" stroke="#b0b0b0" stroke-width="1.11" stroke-dasharray="1.11 1.83"/>
<line x1="100.64" y1="823.50" x2="105.5" y2="823.50" stroke="#000" stroke-width="1.11"/>
<text x="95.80" y="828.80" font-size="14.6" text-anchor="end" textLength="68.89" lengthAdjust="spacingAndGlyphs" fill="#000" stroke="#000" stroke-width="0.2">Sat. pixel.</text>
<line x1="105.5" y1="856.5" x2="1483.5" y2="856.5" stroke="#b0b0b0" stroke-width="1.11" stroke-dasharray="1.11 1.83"/>
<line x1="100.64" y1="856.50" x2="105.5" y2="856.50" stroke="#000" stroke-width="1.11"/>
<text x="95.80" y="861.80" font-size="14.6" text-anchor="end" textLength="57.68" lengthAdjust="spacingAndGlyphs" fill="#000" stroke="#000" stroke-width="0.2">Ion. rad.</text>
<line x1="105.5" y1="889.5" x2="1483.5" y2="889.5" stroke="#b0b0b0" stroke-width="1.11" stroke-dasharray="1.11 1.83"/>
<line x1="100.64" y1="889.50" x2="105.5" y2="889.50" stroke="#000" stroke-width="1.11"/>
<text x="95.8" y="894.80" font-size="14.6" text-anchor="end" textLength="43.83" lengthAdjust="spacingAndGlyphs" stroke="#000" stroke-width="0.2">dr &gt; 5</text>
<line x1="105.5" y1="921.5" x2="1483.5" y2="921.5" stroke="#b0b0b0" stroke-width="1.11" stroke-dasharray="1.11 1.83"/>
<line x1="100.64" y1="921.50" x2="105.5" y2="921.50" stroke="#000" stroke-width="1.11"/>
<text x="95.80" y="926.80" font-size="14.6" text-anchor="end" textLength="80.65" lengthAdjust="spacingAndGlyphs" fill="#000" stroke="#000" stroke-width="0.2">OBS not OK</text>
<circle cx="171.6" cy="856.5" r="1.25" fill="none" stroke="#000" stroke-width="1.5"/><circle cx="171.6" cy="889.5" r="1.25" fill="none" stroke="#000" stroke-width="1.5"/><circle cx="176.4" cy="856.5" r="1.25" fill="none" stroke="#000" stroke-width="1.5"/><circle cx="176.4" cy="889.5" r="1.25" fill="none" stroke="#000" stroke-width="1.5"/><circle cx="232.5" cy="856.5" r="1.25" fill="none" stroke="#000" stroke-width="1.5"/><circle cx="232.5" cy="889.5" r="1.25" fill="none" stroke="#000" stroke-width="1.5"/><circle cx="247.4" cy="856.5" r="1.25" fill="none" stroke="#000" stroke-width="1.5"/><circle cx="247.4" cy="889.5" r="1.25" fill="none" stroke="#000" stroke-width="1.5"/><circle cx="396" cy="856.5" r="1.25" fill="none" stroke="#000" stroke-width="1.5"/><circle cx="396" cy="889.5" r="1.25" fill="none" stroke="#000" stroke-width="1.5"/><circle cx="423.5" cy="856.5" r="1.25" fill="none" stroke="#000" stroke-width="1.5"/><circle cx="423.5" cy="889.5" r="1.25" fill="none" stroke="#000" stroke-width="1.5"/><circle cx="427" cy="856.5" r="1.25" fill="none" stroke="#000" stroke-width="1.5"/><circle cx="427" cy="889.5" r="1.25" fill="none" stroke="#000" stroke-width="1.5"/><circle cx="498.7" cy="856.5" r="1.25" fill="none" stroke="#000" stroke-width="1.5"/><circle cx="498.7" cy="889.5" r="1.25" fill="none" stroke="#000" stroke-width="1.5"/><circle cx="651.5" cy="856.5" r="1.25" fill="none" stroke="#000" stroke-width="1.5"/><circle cx="651.5" cy="889.5" r="1.25" fill="none" stroke="#000" stroke-width="1.5"/><circle cx="713.3" cy="856.5" r="1.25" fill="none" stroke="#000" stroke-width="1.5"/><circle cx="713.3" cy="889.5" r="1.25" fill="none" stroke="#000" stroke-width="1.5"/><circle cx="757.3" cy="856.5" r="1.25" fill="none" stroke="#000" stroke-width="1.5"/><circle cx="757.3" cy="889.5" r="1.25" fill="none" stroke="#000" stroke-width="1.5"/><circle cx="856.5" cy="856.5" r="1.25" fill="none" stroke="#000" stroke-width="1.5"/><circle cx="856.5" cy="889.5" r="1.25" fill="none" stroke="#000" stroke-width="1.5"/><circle cx="877.3" cy="856.5" r="1.25" fill="none" stroke="#000" stroke-width="1.5"/><circle cx="877.3" cy="889.5" r="1.25" fill="none" stroke="#000" stroke-width="1.5"/><circle cx="885.3" cy="856.5" r="1.25" fill="none" stroke="#000" stroke-width="1.5"/><circle cx="885.3" cy="889.5" r="1.25" fill="none" stroke="#000" stroke-width="1.5"/><circle cx="906" cy="856.5" r="1.25" fill="none" stroke="#000" stroke-width="1.5"/><circle cx="906" cy="889.5" r="1.25" fill="none" stroke="#000" stroke-width="1.5"/><circle cx="907.6" cy="856.5" r="1.25" fill="none" stroke="#000" stroke-width="1.5"/><circle cx="907.6" cy="889.5" r="1.25" fill="none" stroke="#000" stroke-width="1.5"/><circle cx="1090.7" cy="856.5" r="1.25" fill="none" stroke="#000" stroke-width="1.5"/><circle cx="1090.7" cy="889.5" r="1.25" fill="none" stroke="#000" stroke-width="1.5"/>
<rect x="910.9" y="789.7" width="3.2" height="3.2" fill="none" stroke="#000" stroke-width="1.1"/>
<line x1="105.5" y1="1009.5" x2="1483.5" y2="1009.5" stroke="#b0b0b0" stroke-width="1.11" stroke-dasharray="1.11 1.83"/>
<line x1="105.5" y1="983.5" x2="1483.5" y2="983.5" stroke="#b0b0b0" stroke-width="1.11" stroke-dasharray="1.11 1.83"/>
<line x1="105.5" y1="957.5" x2="1483.5" y2="957.5" stroke="#b0b0b0" stroke-width="1.11" stroke-dasharray="1.11 1.83"/>
<line x1="162.00" y1="954.5" x2="162.00" y2="725.5" stroke="#800080" stroke-width="2.08" stroke-dasharray="2.08 3.44"/><line x1="1300.00" y1="954.5" x2="1300.00" y2="725.5" stroke="#800080" stroke-width="2.08" stroke-dasharray="2.08 3.44"/>
<line x1="162.00" y1="1011.5" x2="162.00" y2="954.5" stroke="#800080" stroke-width="2.08" stroke-dasharray="2.08 3.44"/><line x1="1300.00" y1="1011.5" x2="1300.00" y2="954.5" stroke="#800080" stroke-width="2.08" stroke-dasharray="2.08 3.44"/>
<g clip-path="url(#c4)"><path transform="scale(.5)" d="M0 0m325 2014h0m0-2h0m0 4h0m1-1h0m0-1h0m1 0h0m0-2h0m0 4h0m1-1h0m0 2h0m1-3h0m0 1h0m0-1h0m1 1h0m1-2h0m0 1h0m0 1h0m1 0h0m1-1h0m1 1h0m1 1h0m0-2h0m0 1h0m1-2h0m0 2h0m0-1h0m1 1h0m0-1h0m1-1h0m0 1h0m1 0h0m0 2h0m0-2h0m1-2h0m0 4h0m0-1h0m1-3h0m0 3h0m1 0h0m1-1h0m0-2h0m0 5h0m1-2h0m0 1h0m0-1h0m1-1h0m0 1h0m1 0h0m0-2h0m0 3h0m1-2h0m0 3h0m0-3h0m1 0h0m0 1h0m1-1h0m0 1h0m1 1h0m0-3h0m0 3h0m1-1h0m0-1h0m0 2h0m1-2h0m0 1h0m0 1h0m1-2h0m0 1h0m1 2h0m0-3h0m0 1h0m1 0h0m0-1h0m0 1h0m1 0h0m0-2h0m1 1h0m0-2h0m1 2h0m1 0h0m0 1h0m1-1h0m0-1h0m1 1h0m0 1h0m1-1h0m0 2h0m0-3h0m1 1h0m0-1h0m0 3h0m1-1h0m1 0h0m1-1h0m0 1h0m1 0h0m1-1h0m0 1h0m0 1h0m1 1h0m0-2h0m1 1h0m0-1h0m0 1h0m1-2h0m0-1h0m0 2h0m1-3h0m0 3h0m1 0h0m1-1h0m0-1h0m0 2h0m1-2h0m0 2h0m0-1h0m1 0h0m0 1h0m1 0h0m0-1h0m1 2h0m0-1h0m0-1h0m1 1h0m0-1h0m1 0h0m0-1h0m0 3h0m1-1h0m0-1h0m1 1h0m0 1h0m0-1h0m1 1h0m0-2h0m1 1h0m0-1h0m0 1h0m1-1h0m1 0h0m0 1h0m0-1h0m1 0h0m0 1h0m0-2h0m1 1h0m0 2h0m0-2h0m1 2h0m1-1h0m0-1h0m1 1h0m0-1h0m0-1h0m1 2h0m1 0h0m1-2h0m0 1h0m0 1h0m1 1h0m0-1h0m0-1h0m1-1h0m0 3h0m1-1h0m0-1h0m1 2h0m1-2h0m0 1h0m0 1h0m1-2h0m0 1h0m1-1h0m0 1h0m0-3h0m1 3h0m1-1h0m0-1h0m0 2h0m1 0h0m0-1h0m1 1h0m0 1h0m0-2h0m1 1h0m0-1h0m1 1h0m0-1h0m0 2h0m1-1h0m0-1h0m1 1h0m0-2h0m0 1h0m1-1h0m0 2h0m1 0h0m0-1h0m0 2h0m1-1h0m1-1h0m0 2h0m1-2h0m0-1h0m0 2h0m1-1h0m1 1h0m1 1h0m0-1h0m1 0h0m1-2h0m0 4h0m1-2h0m1 0h0m0-2h0m0 2h0m1 2h0m0-2h0m1 0h0m0 1h0m1-2h0m0 1h0m1 0h0m0-2h0m0 1h0m1 1h0m0 1h0m0-2h0m1 0h0m0 1h0m0-1h0m1 4h0m0-3h0m1-1h0m1 2h0m0-3h0m0 3h0m1 0h0m0-1h0m0-1h0m1 2h0m0-4h0m1 3h0m0-2h0m1 3h0m0-1h0m1 0h0m0-2h0m0 3h0m1-2h0m1 1h0m0 2h0m0-3h0m1 2h0m0-1h0m0-1h0m1 0h0m0 1h0m0-2h0m1 3h0m0-3h0m1 0h0m0-1h0m0 1h0m1 1h0m1 1h0m1-1h0m0 3h0m1-1h0m0-3h0m0 3h0m1 0h0m0 1h0m0-2h0m1 1h0m0-2h0m0 1h0m1 0h0m0-2h0m1 3h0m0-4h0m1 3h0m0 1h0m0-2h0m1-1h0m0 3h0m0-2h0m1 1h0m0-1h0m1 1h0m0 1h0m1 0h0m0-2h0m1 0h0m0 1h0m1-1h0m0 2h0m1-2h0m0 2h0m1-1h0m0-1h0m1 4h0m0-2h0m1-1h0m0 1h0m0-2h0m1 1h0m0-1h0m0 1h0m1 0h0m0-3h0m0 3h0m1-1h0m1 0h0m0 2h0m1-1h0m0-2h0m0 1h0m1-1h0m0 3h0m1 0h0m0-2h0m1 0h0m0 2h0m0-3h0m1 2h0m0-1h0m1 0h0m0 2h0m0-3h0m1 2h0m0 1h0m1-1h0m0-1h0m1 1h0m0-1h0m1 1h0m0-1h0m1-1h0m0 2h0m1 0h0m0-3h0m0 3h0m1-1h0m0 1h0m1 0h0m0 1h0m0-3h0m1 0h0m0 3h0m1-1h0m0-1h0m1 2h0m0-4h0m0 4h0m1-2h0m0 2h0m0-1h0m1 0h0m0 1h0m1 0h0m0-1h0m0-1h0m1 1h0m0 2h0m0-3h0m1 1h0m0-1h0m0 1h0m1-2h0m0 3h0m1-1h0m0-1h0m1 1h0m0-1h0m1-2h0m0 4h0m0-3h0m1 1h0m0-1h0m1 1h0m0-1h0m1 3h0m0-2h0m0 1h0m1-1h0m1 2h0m1-1h0m0-1h0m0-1h0m1 1h0m0-2h0m0 2h0m1-1h0m0 3h0m0-1h0m1 0h0m0 1h0m1-3h0m0 1h0m0 1h0m1 0h0m0-1h0m1 1h0m0 1h0m0-3h0m1 2h0m1 0h0m0 1h0m1-1h0m0-2h0m0 2h0m1-1h0m0 2h0m0-2h0m1 0h0m0 1h0m1 1h0m0-2h0m0 1h0m1-1h0m1 0h0m0 1h0m1 0h0m0-1h0m1-1h0m0 3h0m1 0h0m0-2h0m0 1h0m1-1h0m0-1h0m0 2h0m1-1h0m0 2h0m1-1h0m0-1h0m1-1h0m0 2h0m0-1h0m1 1h0m0 1h0m1-2h0m0 1h0m1 0h0m0-1h0m1 1h0m0-1h0m1-1h0m0 2h0m1 1h0m0-2h0m1 1h0m0-1h0m1 1h0m1-1h0m1 1h0m0 1h0m1-1h0m0-1h0m1 2h0m0-2h0m1 1h0m0-1h0m1 2h0m0-2h0m0 1h0m1-2h0m0 2h0m1-2h0m0 1h0m1 0h0m0-1h0m1 0h0m0 2h0m0-1h0m1 1h0m0-2h0m0 2h0m1-1h0m0 3h0m1-3h0m1 2h0m0-1h0m0 1h0m1-2h0m0 2h0m0-2h0m1 0h0m0 2h0m1-1h0m0 1h0m1-1h0m0 1h0m0-1h0m1 0h0m0-1h0m1-1h0m0 2h0m1 0h0m1 3h0m0-1h0m1-2h0m0 1h0m0-2h0m1-2h0m0 5h0m0-2h0m1-1h0m1-2h0m0 3h0m0 1h0m1-2h0m0 1h0m0-1h0m1-1h0m0 2h0m0-1h0m1 2h0m0-2h0m1 0h0m0-2h0m0 3h0m1-2h0m0 1h0m0 2h0m1-1h0m0-1h0m1 0h0m0-1h0m1 1h0m0 1h0m1-1h0m0 1h0m1-1h0m0 1h0m1 0h0m1-1h0m0-1h0m1 0h0m0 2h0m0-1h0m1 1h0m0-2h0m0 3h0m1 0h0m0-2h0m1 1h0m0-2h0m0 1h0m1 1h0m0-2h0m1 2h0m0-1h0m0 1h0m1-1h0m0 1h0m1 0h0m0-2h0m0 2h0m1-1h0m0 4h0m0-2h0m1-1h0m0-1h0m0 2h0m1-2h0m0 1h0m1 0h0m0-1h0m0 1h0m1-1h0m0 1h0m1 0h0m1 1h0m0-2h0m1 2h0m0-1h0m0-1h0m1 1h0m1 0h0m0 1h0m0-3h0m1 0h0m0 2h0m1 0h0m1-1h0m0 2h0m1-2h0m0 2h0m1-2h0m0 2h0m1 0h0m0-1h0m1 0h0m0 1h0m0 1h0m1-4h0m0 1h0m1 1h0m0-2h0m0 1h0m1-1h0m0 1h0m0 1h0m1 0h0m0 1h0m0-1h0m1 0h0m1 1h0m0-2h0m0 1h0m1 0h0m0 1h0m0-2h0m1 1h0m0-1h0m0-1h0m1-1h0m0 2h0m1 1h0m0-2h0m0 3h0m1 0h0m0-1h0m1 0h0m0-1h0m1-1h0m0 3h0m1-1h0m0-1h0m1 2h0m0-1h0m0-1h0m1-1h0m0 1h0m0 3h0m1-4h0m0 3h0m1-1h0m0 1h0m0-2h0m1 0h0m0 1h0m1-2h0m0-1h0m0 2h0m1 1h0m0-2h0m1 1h0m0 1h0m0-1h0m1 0h0m0 2h0m0-3h0m1 3h0m0-2h0m1-1h0m0 1h0m1 2h0m0-1h0m1-1h0m0 2h0m0 1h0m1-2h0m0-1h0m1 0h0m0 2h0m1 0h0m0-2h0m0-1h0m1 2h0m0 1h0m0-3h0m1 2h0m0-2h0m0 3h0m1-1h0m0-1h0m1 2h0m0-2h0m1 0h0m0 2h0m1 0h0m0-1h0m1 1h0m1-3h0m0 1h0m1 1h0m0 2h0m0-2h0m1 0h0m0-1h0m0 1h0m1 2h0m0-3h0m1 1h0m0 1h0m1 0h0m0 1h0m0-3h0m1 2h0m0-1h0m0-1h0m1 1h0m0-1h0m1 2h0m0-2h0m1 1h0m0-2h0m1 1h0m1 1h0m0-2h0m1 2h0m0 1h0m1-1h0m0 1h0m1-2h0m0 1h0m0-1h0m1 0h0m0 2h0m1 1h0m0-2h0m0-2h0m1 2h0m0 1h0m0-2h0m1 0h0m0 2h0m0-1h0m1 1h0m0-2h0m1 1h0m0-2h0m1 0h0m1 3h0m0-2h0m1 1h0m0-1h0m1 0h0m0 2h0m0-2h0m1 1h0m0-2h0m0 1h0m1 0h0m1 0h0m0-1h0m0 1h0m1 3h0m0-5h0m0 2h0m1 1h0m0 2h0m0-3h0m1-1h0m0 2h0m1 0h0m0 1h0m0-3h0m1 0h0m0 2h0m0 1h0m1-1h0m1-1h0m1-1h0m0 1h0m0 1h0m1 0h0m0-2h0m0 3h0m1-2h0m0 1h0m1-1h0m0 1h0m1 1h0m0-2h0m1 1h0m0-1h0m0-1h0m1 1h0m0 2h0m1 1h0m0-3h0m1 1h0m0 1h0m1-1h0m1 1h0m0-1h0m0-1h0m1 2h0m0-2h0m1 1h0m0-2h0m1 0h0m0 1h0m1 2h0m0-2h0m0 2h0m1-2h0m0 1h0m1-1h0m0 1h0m0 1h0m1 0h0m0-1h0m0 2h0m1 0h0m0-3h0m0 1h0m1-3h0m0 2h0m1 0h0m0 2h0m0-2h0m1-1h0m0 2h0m0-1h0m1-1h0m0 1h0m0-3h0m1 4h0m1 0h0m0-1h0m0 1h0m1-2h0m0 3h0m0-2h0m1 2h0m0-1h0m0 1h0m1-1h0m0-1h0m1 2h0m0-1h0m1-1h0m0 1h0m1-1h0m0-1h0m1 1h0m0 1h0m1 0h0m1-1h0m0 1h0m1-1h0m0 2h0m0-2h0m1 0h0m0 2h0m1-2h0m0 2h0m1 0h0m0-2h0m0-1h0m1 1h0m0 1h0m0-2h0m1 2h0m0 1h0m1-2h0m0 1h0m0-1h0m1 1h0m0-1h0m0 1h0m1-1h0m0 1h0m0-2h0m1 1h0m0-2h0m1 3h0m0 1h0m0-2h0m1 0h0m0 1h0m0 1h0m1-2h0m1 0h0m1 2h0m0-1h0m1-1h0m0 2h0m1-2h0m0 2h0m1-2h0m0 2h0m1 1h0m0-1h0m0-2h0m1 1h0m0-2h0m0 1h0m1-1h0m0 1h0m1-2h0m0 4h0m0-3h0m1 2h0m0-2h0m0 1h0m1 1h0m0-2h0m1-1h0m0 4h0m1-2h0m0 1h0m0 1h0m1 1h0m0-3h0m0-1h0m1 3h0m0-2h0m0 1h0m1 1h0m0-2h0m1-1h0m0 1h0m0 2h0m1-1h0m0 2h0m0-2h0m1 0h0m0 1h0m0-1h0m1 1h0m0-2h0m1 1h0m1-4h0m0 2h0m0 2h0m1 1h0m0-1h0m0-2h0m1 1h0m0 2h0m1-3h0m0 2h0m1 2h0m0-3h0m1 0h0m0 1h0m1 0h0m1 0h0m0-1h0m0 3h0m1-2h0m0 1h0m0-1h0m1 0h0m0-1h0m1 0h0m0 1h0m1 1h0m0-1h0m0 1h0m1-2h0m0 1h0m0-1h0m1 1h0m0-1h0m1 3h0m0-2h0m1-1h0m0 1h0m0-2h0m1 3h0m0-1h0m0-1h0m1 0h0m0 1h0m1-1h0m0-2h0m1 1h0m0 2h0m1 2h0m0-4h0m0 2h0m1-3h0m0 4h0m0-1h0m1 1h0m1-1h0m1 1h0m0-3h0m0 1h0m1 2h0m0-1h0m0-1h0m1 2h0m0-2h0m1 3h0m0-3h0m0-2h0m1 3h0m0-3h0m0 3h0m1 1h0m0-2h0m0 1h0m1-2h0m0 2h0m1-1h0m0-2h0m0 2h0m1 1h0m0-1h0m1 2h0m0-2h0m1 1h0m0-1h0m1-1h0m0 1h0m0 1h0m1-2h0m0 2h0m0-2h0m1 0h0m0 1h0m0 1h0m1 0h0m0-1h0m1 0h0m0 2h0m0-1h0m1 0h0m0-2h0m1 1h0m0-1h0m1 2h0m1 1h0m0-4h0m0 2h0m1 0h0m0 1h0m0 2h0m1-3h0m0 2h0m1-2h0m0 1h0m0 1h0m1-3h0m0 1h0m1 2h0m0-2h0m1 0h0m0 2h0m1-2h0m0 1h0m1 0h0m0 1h0m1-1h0m0-2h0m0 4h0m1-2h0m0 1h0m1-3h0m0 3h0m0-1h0m1-1h0m0-1h0m0 1h0m1 0h0m0 1h0m0-2h0m1 2h0m0-1h0m1-1h0m0 2h0m1-1h0m0 1h0m1 0h0m0-1h0m0-1h0m1 0h0m0 2h0m1-1h0m0 1h0m1 0h0m0 1h0m0-3h0m1 3h0m0-2h0m0 2h0m1-1h0m1-2h0m0 2h0m0-1h0m1 1h0m0-1h0m1 0h0m1-2h0m0 4h0m1-2h0m0 1h0m1 0h0m0-1h0m0 1h0m1-2h0m0 2h0m1-1h0m0 2h0m1-1h0m0 1h0m1-4h0m0 3h0m0-1h0m1 1h0m0-2h0m0 1h0m1 1h0m0 1h0m1-1h0m0-3h0m0 2h0m1 0h0m0 2h0m1-1h0m0-1h0m0 2h0m1 1h0m0-3h0m1 3h0m0-1h0m0-2h0m1 1h0m0-1h0m0 1h0m1 0h0m1-1h0m1-1h0m0 5h0m0-3h0m1 1h0m0-1h0m0-2h0m1 4h0m0-2h0m1-1h0m1 1h0m0 1h0m0-2h0m1 0h0m0 1h0m1 0h0m0 2h0m0-1h0m1-2h0m0 1h0m1 0h0m0 1h0m0-1h0m1-1h0m0 2h0m0-1h0m1-1h0m0 1h0m0-1h0m1 1h0m1 0h0m0 1h0m1 0h0m0-2h0m0-2h0m1 3h0m0 1h0m1-1h0m0 1h0m1-1h0m0-1h0m1 1h0m0-1h0m1 1h0m1 0h0m1-1h0m0 1h0m1-2h0m0 3h0m0-2h0m1 1h0m1-2h0m0 1h0m0 1h0m1 0h0m0 1h0m0-4h0m1 3h0m0-1h0m1 1h0m1 1h0m0-3h0m0 1h0m1 1h0m0 2h0m1-3h0m0-1h0m1 2h0m0-1h0m1 1h0m0 1h0m0-1h0m1 0h0m0 1h0m0-2h0m1-1h0m0 2h0m1 0h0m0 2h0m1-2h0m0 2h0m0-1h0m1-2h0m0 1h0m0 1h0m1-1h0m0-1h0m0-1h0m1 2h0m0-4h0m1 4h0m0-1h0m1 0h0m0 2h0m0-2h0m1 2h0m0-1h0m1 1h0m0-1h0m1-1h0m0 1h0m1 1h0m0-2h0m1 1h0m0-1h0m1 1h0m1 0h0m0-4h0m0 4h0m1 0h0m0-1h0m1-1h0m0 2h0m0-2h0m1 2h0m1 1h0m0-1h0m0 1h0m1-1h0m0-1h0m1 1h0m0 1h0m0-1h0m1-1h0m1 1h0m0-1h0m0-2h0m1 3h0m0-1h0m1 0h0m0 2h0m0-3h0m1 2h0m0 1h0m1 0h0m0-2h0m1 2h0m0-1h0m0-2h0m1 3h0m0 1h0m0-3h0m1 1h0m1-1h0m0 2h0m1-1h0m0 1h0m1-2h0m1 1h0m0-2h0m1 2h0m0-2h0m1 1h0m1 1h0m0 2h0m0-1h0m1-2h0m1 1h0m0-1h0m1 1h0m0 1h0m1-3h0m0 1h0m1-1h0m0 3h0m1-1h0m1 0h0m0-1h0m1 0h0m0-1h0m1-1h0m0 3h0m1-2h0m0 1h0m0 2h0m1-1h0m0-2h0m0 1h0m1 1h0m0 1h0m1-2h0m0 1h0m1 1h0m0-1h0m1 0h0m0-2h0m0 2h0m1 1h0m0-2h0m1-1h0m0 1h0m1-1h0m0 2h0m0 1h0m1 0h0m0-1h0m0-1h0m1 1h0m0-1h0m1 0h0m0 3h0m1-3h0m0-1h0m0 2h0m1-2h0m0 3h0m0-1h0m1 0h0m0-2h0m1 2h0m0-1h0m0 1h0m1-1h0m0 1h0m0-1h0m1 1h0m1 0h0m1 0h0m0-2h0m0 1h0m1 3h0m0-2h0m1-1h0m0-2h0m0 3h0m1 0h0m0-1h0m1-1h0m0 1h0m0 1h0m1 0h0m0 1h0m0 1h0m1-2h0m0-1h0m0 1h0m1 0h0m1-1h0m0 1h0m0-1h0m1-2h0m0 4h0m0-1h0m1-1h0m0 2h0m1-1h0m0-1h0m1 2h0m0-3h0m0 3h0m1-2h0m0-2h0m0 2h0m1 0h0m0 1h0m1-1h0m0-1h0m1 2h0m0-1h0m1 0h0m0 1h0m1 0h0m0-2h0m0 2h0m1-1h0m1 1h0m0-2h0m0 1h0m1 1h0m0-1h0m0 2h0m1-1h0m0-2h0m0-1h0m1 4h0m0-2h0m1 0h0m0 2h0m0-3h0m1 2h0m0-2h0m0 3h0m1 0h0m0-1h0m0-1h0m1 1h0m1-1h0m0-3h0m0 5h0m1-2h0m0 4h0m1-5h0m0 2h0m0-1h0m1 1h0m0 2h0m1-2h0m0 4h0m0-4h0m1-1h0m0 1h0m0-1h0m1-1h0m0 1h0m0-1h0m1 2h0m1 0h0m0-2h0m1 1h0m0 2h0m0-1h0m1 0h0m0-1h0m0-1h0m1 2h0m0-1h0m1 1h0m0-1h0m1 0h0m0 1h0m1-1h0m0 2h0m0-4h0m1 3h0m0 1h0m1-1h0m0-1h0m0-1h0m1 1h0m0 1h0m1 0h0m1-1h0m1-1h0m0 3h0m1-1h0m0 1h0m1-2h0m0-1h0m1 1h0m0 1h0m0-1h0m1 1h0m0-2h0m0 3h0m1-1h0m0-1h0m0 1h0m1-2h0m0 3h0m1-2h0m1 1h0m0 1h0m0-1h0m1 0h0m0-2h0m1 1h0m1 0h0m1 1h0m0 1h0m0-3h0m1 2h0m0-2h0m0 1h0m1 1h0m1 0h0m0 1h0m0-1h0m1 0h0m0-2h0m1 2h0m0 1h0m1-1h0m0 1h0m1-2h0m0 1h0m0 1h0m1-1h0m0-2h0m0 1h0m1 2h0m0-1h0m0 1h0m1-2h0m0-2h0m1 2h0m0-1h0m0 2h0m1-1h0m0-1h0m0 3h0m1-2h0m0 3h0m1-2h0m0-1h0m1 2h0m0-1h0m0 2h0m1-3h0m0 1h0m0 1h0m1-1h0m0-1h0m1 2h0m0-2h0m1 4h0m0-3h0m1 1h0m0-3h0m0 1h0m1-1h0m0 1h0m1 1h0m0 2h0m1-2h0m0 2h0m0-3h0m1 0h0m0 1h0m0-1h0m1 1h0m1 0h0m0-1h0m1 0h0m0 1h0m1-1h0m1 2h0m0-2h0m1 0h0m1 1h0m0-2h0m0 3h0m1 0h0m0-3h0m1 3h0m0-2h0m1 3h0m0-4h0m1 2h0m1 0h0m0-1h0m1-1h0m0 2h0m0-1h0m1 2h0m0-2h0m1 1h0m0 2h0m0-5h0m1 3h0m0-1h0m0 1h0m1 1h0m0-2h0m0 3h0m1-2h0m0-2h0m1 3h0m1-1h0m0-1h0m0 1h0m1-1h0m0 1h0m1 0h0m0-1h0m1 0h0m0 1h0m0-1h0m1-1h0m0 4h0m0-2h0m1 2h0m0-2h0m1-1h0m0 2h0m0-3h0m1 3h0m0-2h0m0 1h0m1-3h0m0 3h0m1-2h0m0 1h0m1 0h0m0 2h0m1-3h0m0 2h0m0 1h0m1-1h0m0 1h0m0 1h0m1-3h0m0 3h0m1 0h0m0-2h0m0-1h0m1 1h0m0 2h0m0-2h0m1 0h0m0 1h0m1-3h0m0 2h0m1 0h0m0 1h0m1-1h0m1 0h0m0-1h0m0 1h0m1 1h0m0-2h0m1 2h0m0-2h0m1-1h0m0 3h0m0-3h0m1 2h0m0-1h0m0 1h0m1 0h0m1 1h0m0-3h0m1 2h0m0-1h0m1-2h0m0 3h0m0-1h0m1 1h0m1 0h0m0-2h0m1 1h0m0 1h0m1-3h0m0 2h0m0 1h0m1-2h0m0 2h0m1-1h0m0-1h0m0 1h0m1 0h0m0 1h0m0-2h0m1 1h0m0 1h0m0 2h0m1-3h0m0 1h0m1-1h0m1 0h0m0 1h0m1-2h0m0 2h0m0-1h0m1 3h0m0-1h0m1-2h0m0 1h0m1-2h0m0 3h0m0-1h0m1-1h0m0 1h0m1-1h0m0 1h0m1-1h0m0 3h0m0-2h0m1-1h0m0 1h0m0 1h0m1 1h0m0-1h0m0-2h0m1 1h0m0 1h0m1-3h0m0 2h0m1 0h0m0 1h0m1-1h0m0-1h0m1 3h0m0-2h0m1 1h0m0-1h0m0 1h0m1-2h0m0 1h0m0 1h0m1-2h0m0 1h0m0-2h0m1 4h0m0-3h0m1 1h0m0 1h0m0-3h0m1 2h0m0-1h0m0 2h0m1-4h0m0 3h0m1-1h0m0-1h0m1 1h0m0 1h0m0-1h0m1 0h0m0 1h0m0 2h0m1-1h0m0 1h0m0-3h0m1 1h0m0-1h0m1 2h0m0-2h0m0-2h0m1 2h0m0 1h0m0-1h0m1 0h0m0 2h0m1-1h0m0 2h0m1-3h0m0 1h0m0-1h0m1 0h0m0 2h0m1-2h0m0-1h0m1 2h0m0-1h0m1 0h0m0 1h0m0-1h0m1 0h0m0 1h0m0-2h0m1 2h0m0-1h0m1 0h0m0 1h0m1 0h0m0-1h0m1-1h0m0 1h0m1 1h0m0-1h0m1 2h0m0-1h0m0-2h0m1 2h0m0-1h0m1 0h0m0 3h0m0-1h0m1-2h0m0 2h0m1-4h0m0 2h0m0 1h0m1 2h0m0-2h0m1 0h0m1-1h0m0 1h0m1 1h0m0-1h0m1 0h0m0 1h0m0-1h0m1-1h0m0 2h0m0-2h0m1 0h0m1 3h0m0-4h0m0 1h0m1 1h0m0 1h0m0-2h0m1 2h0m0-2h0m1 1h0m1 0h0m0-1h0m0 2h0m1-1h0m1 0h0m1 1h0m0 1h0m1-2h0m0-2h0m1 1h0m0 1h0m0-2h0m1 0h0m0 2h0m0-1h0m1 2h0m0-1h0m1-1h0m0 1h0m1-1h0m0-1h0m0 1h0m1-2h0m0 2h0m1 0h0m1-1h0m0 1h0m0 1h0m1 0h0m0-1h0m0 1h0m1 0h0m0-1h0m0 1h0m1 0h0m0 1h0m1 0h0m0-3h0m1 2h0m0-1h0m0 1h0m1-2h0m0 2h0m0 1h0m1-1h0m0-2h0m1 2h0m0-1h0m1 0h0m0 1h0m1 0h0m0-1h0m0-1h0m1 1h0m0 1h0m1 0h0m0 1h0m1-1h0m0-1h0m1 0h0m0-1h0m0 2h0m1-1h0m0 1h0m1-1h0m0 1h0m1-2h0m0 3h0m1-1h0m0-1h0m0 2h0m1 0h0m0-2h0m1 0h0m0 1h0m0 1h0m1-1h0m0 1h0m1-2h0m0 1h0m1-1h0m0 1h0m1-1h0m0 2h0m0-2h0m1 0h0m0 2h0m1-2h0m0 3h0m1-2h0m0-3h0m0 3h0m1 0h0m1 1h0m0-1h0m1-2h0m0 3h0m1 0h0m0-1h0m1-1h0m0 1h0m0-1h0m1 0h0m0-1h0m0 2h0m1-1h0m0 1h0m1 1h0m0-3h0m0 1h0m1-1h0m0 1h0m0 1h0m1 0h0m0-1h0m1 1h0m0-1h0m1 0h0m0 2h0m0-2h0m1 2h0m0 1h0m0-2h0m1 0h0m1-1h0m1 1h0m0 2h0m0-3h0m1 0h0m1 1h0m0-2h0m0 2h0m1 0h0m1 0h0m0 1h0m0-2h0m1 1h0m0 1h0m0-2h0m1-2h0m0 4h0m0-1h0m1 1h0m0-3h0m1 1h0m0 2h0m0-1h0m1 0h0m0 1h0m0-1h0m1 1h0m0-1h0m0 1h0m1-2h0m0 2h0m1-1h0m0-2h0m0 2h0m1-1h0m0 1h0m0-1h0m1 0h0m1 1h0m0 2h0m1-6h0m0 3h0m1 0h0m0 1h0m0-1h0m1-2h0m0 1h0m1 1h0m1 0h0m0 1h0m1-1h0m0 1h0m0-1h0m1 1h0m1-1h0m0 1h0m1 0h0m0 1h0m1-2h0m0 1h0m0-1h0m1 4h0m0-4h0m0 3h0m1-4h0m0 4h0m1-3h0m1 1h0m0 1h0m0-1h0m1 0h0m0-1h0m0 1h0m1 1h0m1-1h0m0-1h0m0 1h0m1 0h0m0-1h0m1 0h0m0 1h0m1 1h0m0-2h0m1 1h0m0 1h0m0-2h0m1-3h0m0 4h0m0 1h0m1-2h0m0 1h0m1-2h0m0 3h0m1-1h0m0-1h0m1 0h0m0 2h0m0-2h0m1 1h0m0 1h0m1-2h0m0 2h0m0-3h0m1 0h0m0 2h0m0 2h0m1 0h0m0-3h0m0-1h0m1 3h0m0-5h0m1 4h0m0 2h0m1-5h0m0 2h0m1 0h0m1-1h0m0 1h0m1 0h0m0-2h0m0 4h0m1-1h0m1 0h0m0 1h0m0-2h0m1-1h0m0 3h0m1-2h0m1 2h0m0-2h0m1 0h0m0 1h0m1-1h0m0 2h0m1-4h0m0 4h0m0-1h0m1-1h0m0-1h0m0 2h0m1 0h0m0-2h0m0 2h0m1-1h0m0 2h0m1-1h0m0-1h0m0 1h0m1-1h0m0 1h0m1-1h0m1 0h0m0-1h0m1 1h0m0 2h0m0-2h0m1 0h0m0 2h0m0-1h0m1-1h0m0 1h0m1 1h0m0-2h0m1-1h0m0 3h0m1-1h0m0-2h0m1 3h0m0-3h0m0 2h0m1-1h0m0 1h0m1-1h0m0 1h0m0-1h0m1 1h0m0-2h0m0 5h0m1-3h0m0 1h0m0-1h0m1 0h0m0 1h0m1-3h0m0 1h0m1 1h0m0-1h0m1 1h0m0-1h0m0-1h0m1 5h0m0-4h0m1 0h0m0 3h0m0-1h0m1-3h0m0 2h0m0-1h0m1 1h0m0-1h0m0-1h0m1 1h0m1 0h0m0 2h0m0-1h0m1-4h0m0 5h0m1-1h0m0-3h0m1 3h0m1-1h0m0 1h0m0-1h0m1 1h0m0-2h0m0 2h0m1-2h0m0-1h0m0 4h0m1-1h0m0 1h0m1 0h0m0-3h0m0 1h0m1 0h0m0 1h0m0-2h0m1 2h0m0-2h0m0 1h0m1 1h0m0-1h0m1 0h0m0-1h0m1 1h0m0 2h0m0-2h0m1-1h0m0 2h0m0 2h0m1-4h0m0 2h0m1 0h0m0-2h0m0 2h0m1 1h0m0-1h0m1-3h0m0 1h0m1 2h0m0 1h0m0-2h0m1 2h0m0-1h0m1 0h0m0 1h0m0-3h0m1 3h0m0-1h0m1 2h0m0-1h0m0-2h0m1-1h0m0 3h0m0-1h0m1 0h0m0-3h0m0 1h0m1 2h0m0-3h0m1 4h0m0-1h0m1 1h0m0-2h0m0 1h0m1 0h0m1-3h0m0 2h0m1 1h0m0-1h0m1 0h0m0 1h0m0-1h0m1 1h0m0-3h0m1 2h0m0 1h0m1-1h0m0 1h0m0 1h0m1-3h0m0 2h0m0-2h0m1 2h0m0 1h0m0-3h0m1 1h0m1 1h0m0 1h0m0-1h0m1 0h0m1-1h0m0 1h0m1-1h0m1 0h0m0 2h0m0-1h0m1-1h0m0 1h0m1 1h0m0-1h0m0 1h0m1-2h0m0-1h0m1 2h0m0-1h0m1 3h0m0-4h0m1 4h0m0-4h0m0 4h0m1-2h0m0-1h0m1 0h0m0 2h0m0-1h0m1-1h0m0 3h0m1-2h0m0-1h0m0 1h0m1-2h0m0 1h0m1 0h0m0 1h0m0-2h0m1 2h0m0-1h0m0 1h0m1 1h0m0-1h0m0-2h0m1 0h0m0 1h0m1 3h0m0-3h0m1-1h0m0 1h0m1 1h0m0-2h0m0 1h0m1 1h0m0 2h0m1-4h0m0 2h0m0 1h0m1 0h0m0-1h0m0-2h0m1 0h0m0 3h0m1-2h0m1 1h0m0 1h0m1-1h0m0-2h0m1 1h0m0 1h0m1-1h0m0 1h0m1-1h0m0 1h0m1-1h0m0 1h0m1 1h0m0-4h0m0 4h0m1-3h0m0 1h0m1 2h0m0-1h0m1-1h0m0 1h0m1-1h0m0 1h0m0 1h0m1-1h0m0-1h0m1 1h0m0-2h0m0 1h0m1 0h0m0 2h0m0-1h0m1 1h0m0-2h0m1 1h0m0-1h0m0 1h0m1-1h0m0-1h0m0 3h0m1-2h0m0 3h0m0-2h0m1 1h0m0-1h0m1 0h0m1 2h0m0-3h0m0-1h0m1 0h0m0 1h0m0 2h0m1-1h0m0-1h0m1 1h0m0-3h0m1 4h0m0-2h0m0 1h0m1 0h0m0-1h0m1 0h0m0 1h0m1-3h0m0 2h0m0 1h0m1-1h0m0 1h0m0-1h0m1 1h0m0 1h0m0 1h0m1-4h0m1 1h0m0-1h0m1 3h0m0-2h0m1 1h0m0-2h0m0 2h0m1-1h0m0 1h0m1 0h0m0 1h0m1-3h0m0 1h0m1 1h0m1-1h0m0 2h0m1-2h0m1 0h0m0 2h0m1-2h0m0 1h0m0-1h0m1-1h0m0 1h0m1 0h0m1 0h0m0 2h0m0-2h0m1 0h0m0-1h0m1 0h0m0 3h0m1 0h0m0-2h0m1 2h0m0-2h0m1 2h0m0-1h0m0-3h0m1 3h0m1 0h0m0-1h0m0-1h0m1 1h0m0 1h0m1-1h0m0 1h0m0 1h0m1-2h0m0 2h0m1 0h0m0-1h0m1-2h0m0 1h0m0-1h0m1 2h0m0-1h0m1 2h0m0 1h0m1-4h0m1 2h0m0-1h0m1 2h0m0-1h0m0-1h0m1 2h0m1 0h0m0-2h0m1 3h0m0-5h0m0 3h0m1 0h0m0-1h0m1 0h0m0 1h0m1-1h0m0 1h0m0-2h0m1 2h0m0-1h0m0-1h0m1 1h0m0 3h0m0-3h0m1 1h0m1 1h0m0-1h0m1-1h0m0 1h0m1-2h0m0 2h0m1-2h0m0 3h0m1-1h0m1-2h0m0 4h0m0-2h0m1 1h0m0-3h0m1 2h0m0-2h0m1 1h0m0 1h0m1-1h0m0 1h0m0-2h0m1 0h0m0 1h0m1 1h0m0 1h0m0-1h0m1 0h0m0-2h0m0 4h0m1-1h0m0 1h0m0-2h0m1 2h0m0-3h0m1 1h0m0 1h0m0-2h0m1 0h0m0 3h0m0-3h0m1 2h0m0-2h0m0 1h0m1-1h0m0 1h0m1-2h0m0 2h0m0 2h0m1-3h0m0 1h0m0-3h0m1 2h0m0 2h0m1-2h0m1 2h0m0-2h0m0 1h0m1-2h0m0 1h0m0 2h0m1-2h0m1-1h0m0 1h0m1 2h0m0-2h0m0 1h0m1-3h0m0 2h0m1 1h0m0-1h0m0 1h0m1-1h0m0 2h0m1-2h0m0 1h0m1 0h0m0-1h0m0-1h0m1 2h0m0-1h0m0 2h0m1-1h0m0-2h0m1 2h0m0-1h0m0 1h0m1-4h0m0 2h0m0 1h0m1 2h0m0-1h0m0-2h0m1 1h0m0 1h0m1 3h0m0-4h0m0 2h0m1-2h0m0-1h0m0 1h0m1-1h0m0 3h0m0-3h0m1 1h0m1 0h0m0 1h0m0 1h0m1 0h0m0-2h0m0 2h0m1-2h0m0-1h0m1 2h0m0-1h0m1 2h0m0-1h0m0-3h0m1 0h0m0 4h0m0-1h0m1 1h0m0-4h0m0 2h0m1 0h0m0 2h0m1 0h0m0-3h0m0 1h0m1-1h0m0 1h0m0 3h0m1-2h0m0-2h0m1 2h0m0-1h0m1 1h0m0-1h0m0 1h0m1 0h0m0-1h0m1 0h0m0 1h0m1-1h0m1-1h0m0 2h0m1-2h0m0 3h0m1-2h0m0 2h0m0-3h0m1 1h0m0 1h0m1 3h0m0-1h0m0-3h0m1-1h0m0 1h0m0 1h0m1 2h0m0-2h0m0-2h0m1 1h0m1 0h0m0 1h0m1-1h0m0 1h0m1-2h0m0 2h0m1-1h0m0 3h0m0-1h0m1-2h0m0 1h0m1 1h0m0-2h0m1-1h0m1 1h0m0 1h0m1 0h0m0-1h0m0 1h0m1-1h0m1 2h0m0-1h0m1-1h0m0-1h0m1 2h0m0-2h0m1 3h0m0-4h0m0 3h0m1 0h0m0 2h0m1-4h0m0 2h0m0-3h0m1 2h0m0-1h0m0 2h0m1-1h0m0 1h0m1 1h0m0-1h0m1-1h0m1 0h0m0-1h0m1 2h0m0 1h0m1-2h0m1 1h0m1 0h0m0 2h0m0-3h0m1 0h0m0 1h0m0 1h0m1-3h0m0-4h0m0 7h0m1 0h0m0-2h0m1 1h0m0-1h0m1 1h0m1-1h0m1 0h0m0-1h0m0 2h0m1-2h0m0 3h0m1 0h0m0-2h0m1 1h0m1-4h0m0 4h0m0-1h0m1-1h0m0 2h0m1 1h0m0-4h0m0 2h0m1 1h0m0-1h0m1 0h0m0 1h0m0-2h0m1 1h0m0-2h0m0 3h0m1-2h0m0 1h0m1 0h0m1-1h0m0 2h0m0-2h0m1 3h0m0-2h0m1 2h0m0-1h0m0 1h0m1 0h0m0-3h0m1-1h0m0 4h0m0-1h0m1-1h0m0 1h0m1 1h0m1 0h0m0-3h0m1 3h0m0-2h0m0-1h0m1 1h0m0 1h0m0 1h0m1-1h0m0-2h0m0 1h0m1 0h0m0-1h0m1 2h0m0-2h0m0 2h0m1-2h0m0 2h0m0-1h0m1 2h0m0 1h0m0-1h0m1 0h0m0-1h0m1-1h0m0-1h0m1 1h0m0 1h0m1 1h0m0-2h0m0 1h0m1 2h0m0-1h0m1-2h0m0 1h0m1-2h0m0 4h0m0-3h0m1 2h0m0-3h0m1 1h0m0 1h0m0-1h0m1 2h0m0-1h0m0-1h0m1 0h0m0 1h0m0-1h0m1 1h0m0 1h0m1-1h0m0-1h0m1-1h0m0 1h0m1 3h0m0-5h0m1 4h0m0-2h0m1 1h0m1-1h0m0 2h0m0-1h0m1 0h0m0-1h0m0 1h0m1 0h0m1 0h0m0-1h0m0-2h0m1 3h0m1-1h0m0 2h0m0-2h0m1 1h0m0-1h0m1 1h0m0 1h0m0 1h0m1-2h0m0-2h0m1 1h0m0 2h0m0-3h0m1 1h0m0 1h0m1 0h0m0-1h0m0-1h0m1 1h0m0 1h0m0-2h0m1 2h0m0-2h0m0 1h0m1-1h0m0 2h0m1 0h0m0 1h0m0-2h0m1 2h0m1-2h0m0 1h0m1-1h0m1 2h0m0-1h0m1 0h0m0 2h0m1-2h0m0-2h0m0 2h0m1 2h0m0-3h0m1 0h0m0 1h0m1 0h0m0 1h0m0-2h0m1-2h0m0 3h0m0 1h0m1 0h0m0-1h0m1-2h0m0 2h0m0-1h0m1 2h0m0-3h0m1 3h0m0-2h0m0 1h0m1-1h0m1 1h0m0 1h0m1-2h0m0 2h0m0-1h0m1-1h0m0-1h0m0 1h0m1 2h0m1-2h0m1-1h0m0 1h0m0 1h0m1 0h0m0 1h0m0-2h0m1 0h0m0-1h0m1 1h0m0 1h0m0-2h0m1 3h0m0-3h0m0 1h0m1 1h0m0 1h0m0-2h0m1 1h0m0-1h0m1 1h0m0-4h0m1 5h0m0-1h0m1 1h0m0-2h0m0 3h0m1-4h0m0 2h0m1-1h0m0 1h0m1 0h0m0 1h0m0-1h0m1-1h0m0-1h0m0 2h0m1-1h0m0 2h0m1-1h0m0-2h0m1 1h0m0-1h0m0 2h0m1-1h0m0 1h0m1-2h0m0 3h0m1-2h0m0 2h0m0-5h0m1 4h0m0-1h0m0 2h0m1-3h0m0 3h0m1-1h0m0-2h0m1 2h0m0-2h0m0 4h0m1-1h0m0-2h0m0-1h0m1 3h0m0-1h0m1-1h0m0-1h0m0 3h0m1-3h0m0 1h0m1 1h0m0-2h0m0 2h0m1-1h0m0-2h0m1 3h0m0 1h0m0-1h0m1 1h0m0-3h0m0 2h0m1-2h0m0 1h0m1 0h0m0 3h0m1-2h0m0-1h0m0 1h0m1-2h0m0 2h0m1 0h0m0-2h0m0 2h0m1 0h0m0 2h0m1-2h0m0 1h0m0-3h0m1 3h0m0-2h0m1 1h0m0-1h0m1 1h0m0-1h0m1 0h0m0-1h0m0 2h0m1 0h0m0 1h0m1-2h0m0 1h0m0-1h0m1 1h0m0-1h0m1-1h0m0-1h0m0 3h0m1 1h0m0-1h0m0-2h0m1 1h0m0 1h0m0-2h0m1 0h0m0 3h0m1 0h0m0 1h0m0-3h0m1 0h0m0-1h0m0 2h0m1 0h0m0-1h0m0 2h0m1-2h0m1 1h0m0-1h0m1 0h0m0 1h0m0-1h0m1 1h0m0 1h0m1 1h0m0-4h0m1 2h0m0-2h0m1 4h0m0-1h0m0-1h0m1-2h0m0 1h0m1 1h0m1 0h0m0-1h0m1-1h0m0 1h0m0 2h0m1 0h0m0-2h0m1 1h0m0-2h0m1 4h0m0-2h0m0 1h0m1-1h0m0 1h0m0-2h0m1-1h0m0-1h0m1 2h0m0-1h0m1 3h0m0-1h0m0 1h0m1-1h0m0-2h0m1 1h0m0-1h0m0 1h0m1 0h0m1 2h0m0-2h0m0-1h0m1 2h0m0-2h0m0 2h0m1-1h0m0 4h0m1-2h0m0-2h0m0 2h0m1-2h0m0 2h0m0-2h0m1 0h0m0-3h0m0 3h0m1 3h0m0-3h0m1 1h0m0 2h0m1 0h0m0-2h0m0-1h0m1 2h0m0-1h0m1 0h0m0-2h0m1 0h0m0 1h0m1 1h0m0-2h0m0 2h0m1 1h0m0-1h0m0-2h0m1 2h0m0-1h0m1-1h0m0 2h0m0 1h0m1-3h0m0 1h0m1 0h0m0 1h0m1 0h0m0-1h0m1 0h0m0 1h0m0-3h0m1 5h0m0-3h0m0 1h0m1-1h0m0-2h0m1 4h0m0-1h0m1-2h0m0 2h0m1 0h0m0-1h0m1 1h0m0-1h0m0 1h0m1-1h0m1 2h0m0-1h0m0-1h0m1 2h0m0-2h0m0 1h0m1-1h0m0-1h0m0 3h0m1-1h0m0 1h0m1 0h0m0-1h0m1 0h0m0-1h0m0 1h0m1 1h0m0-1h0m0-1h0m1 0h0m0 1h0m1 1h0m0-3h0m0 2h0m1 1h0m0-2h0m1 0h0m0 1h0m0 1h0m1-1h0m1 1h0m0-1h0m1 1h0m0-2h0m0 1h0m1 0h0m0-1h0m0 2h0m1-1h0m1 0h0m0-2h0m0 2h0m1 0h0m0 1h0m1-2h0m0 1h0m0-1h0m1 2h0m0-2h0m1 1h0m0 1h0m0-3h0m1 2h0m0-2h0m1 1h0m0 1h0m0-2h0m1 3h0m0-1h0m1-2h0m0 1h0m0 1h0m1-1h0m0 2h0m1-2h0m0 2h0m0-2h0m1 0h0m1 1h0m0 1h0m0-3h0m1 2h0m0-1h0m1 1h0m0-1h0m1-1h0m1 2h0m0-2h0m1 1h0m1 1h0m0-1h0m1 1h0m1-1h0m0 1h0m1-1h0m0 1h0m1 0h0m1 2h0m0-3h0m0 1h0m1-3h0m0 4h0m0-2h0m1 0h0m0 1h0m0 1h0m1-1h0m1-1h0m1 3h0m0-3h0m1 1h0m0 2h0m0-2h0m1 0h0m1 0h0m0-1h0m0 1h0m1 0h0m0-1h0m1 1h0m0-1h0m0 1h0m1 1h0m1-2h0m0-1h0m0 1h0m1 1h0m0-1h0m1 1h0m0 1h0m0-1h0m1 1h0m0-1h0m1-1h0m0-4h0m0 5h0m1 0h0m0-2h0m0 2h0m1 0h0m0-1h0m0 2h0m1-1h0m0-1h0m1 1h0m0 2h0m0-3h0m1 1h0m0-2h0m0-1h0m1 1h0m0 4h0m0-3h0m1 2h0m0-1h0m1 0h0m0 1h0m0-3h0m1 1h0m0 1h0m0 1h0m1-2h0m0 1h0m1-1h0m1 1h0m0-1h0m0-2h0m1 3h0m0 1h0m0-2h0m1-1h0m0 1h0m1 1h0m1-1h0m0 1h0m1-2h0m0 3h0m0-1h0m1 1h0m0-2h0m1 2h0m0-1h0m1 0h0m0-1h0m0 2h0m1-3h0m0 3h0m1-2h0m0 1h0m0-1h0m1-1h0m0 2h0m1 0h0m1 0h0m0-2h0m0 1h0m1 1h0m0-3h0m0 3h0m1-16h0m0 15h0m1 0h0m1 0h0m1 2h0m0-2h0m1 0h0m0 2h0m1-2h0m0 2h0m1-1h0m0-2h0m1 1h0m0 1h0m1-1h0m0 2h0m1 1h0m0-4h0m0 2h0m1 1h0m0-4h0m0 4h0m1-3h0m0-1h0m1 3h0m1-2h0m0 1h0m1-1h0m0 3h0m0-2h0m1 2h0m0-5h0m0 5h0m1-8h0m0 5h0m1 1h0m0 1h0m0-3h0m1 2h0m0 1h0m0-2h0m1 2h0m1 0h0m0 2h0m1-2h0m0 1h0m0-4h0m1 4h0m0-2h0m0 1h0m1 0h0m0 1h0m1 0h0m0-1h0m0-1h0m1 1h0m0-1h0m0-1h0m1 2h0m0-1h0m1-1h0m0 3h0m1-2h0m0 2h0m0-2h0m1 2h0m0-2h0m0-1h0m1 2h0m0-2h0m1 5h0m0-5h0m1 1h0m0 2h0m0-2h0m1 2h0m0-1h0m0-1h0m1 0h0m1 1h0m1-3h0m0 3h0m0-2h0m1 3h0m0-1h0m1 0h0m0-1h0m0 1h0m1 0h0m0-2h0m1 1h0m0 1h0m0-1h0m1 0h0m0 1h0m1 1h0m0-1h0m0 2h0m1-1h0m0 2h0m1-2h0m1 0h0m0-1h0m1-2h0m0 1h0m0 2h0m1 0h0m0-2h0m1 1h0m0-1h0m0-1h0m1 3h0m0-2h0m0 3h0m1-1h0m0-2h0m0 1h0m1 2h0m0-1h0m1-1h0m0 1h0m0-3h0m1 1h0m0 2h0m0-1h0m1-2h0m0 1h0m0 2h0m1-1h0m0-2h0m1 2h0m0 1h0m0-2h0m1 0h0m0 1h0m0-1h0m1 3h0m0-2h0m0-1h0m1 1h0m1 0h0m0 1h0m0-2h0m1-1h0m0 1h0m0 1h0m1-2h0m0 1h0m0 2h0m1-2h0m1 0h0m0 1h0m0-1h0m1 1h0m0 1h0m0 1h0m1-2h0m0-2h0m0 3h0m1-4h0m1 2h0m0-1h0m0 2h0m1 0h0m0-2h0m0 3h0m1-1h0m0-1h0m1 2h0m0-1h0m1-3h0m0 1h0m0 1h0m1 3h0m0-2h0m0-1h0m1 0h0m0 1h0m0-1h0m1 1h0m0-1h0m1 2h0m0-3h0m1 2h0m0 2h0m0-2h0m1-1h0m0 1h0m1-2h0m0 2h0m1-1h0m0 1h0m0-1h0m1 2h0m0-1h0m1-2h0m0-1h0m1 3h0m0-2h0m1 1h0m0 1h0m1-1h0m0 2h0m0-2h0m1 1h0m0-2h0m1 1h0m0 2h0m1-2h0m0-1h0m0 1h0m1 1h0m0-2h0m1 3h0m0-2h0m1 0h0m0 1h0m1-1h0m0-1h0m0 3h0m1-2h0m0 2h0m1 0h0m0-1h0m1 1h0m0-1h0m0 1h0m1-1h0m1-1h0m0 1h0m1-1h0m0 1h0m1 0h0m0 1h0m0-2h0m1 0h0m0-2h0m0 3h0m1-2h0m0 2h0m1 1h0m0-1h0m1-2h0m0 1h0m1 1h0m0-1h0m0 2h0m1-1h0m0 2h0m1-3h0m0 1h0m1 2h0m0-1h0m0-1h0m1 1h0m0-1h0m1-2h0m0 2h0m0-1h0m1 1h0m0-1h0m1 1h0m1-1h0m0 1h0m0-3h0m1 1h0m0 1h0m0 2h0m1-3h0m0 3h0m1-1h0m0 1h0m1-2h0m0-1h0m0 4h0m1-1h0m0-2h0m1-1h0m0 2h0m1-1h0m0 1h0m0 1h0m1-1h0m0 1h0m1-1h0m0-1h0m0 1h0m1 0h0m0-1h0m1 2h0m0-1h0m0-1h0m1 1h0m0 1h0m1-3h0m0 2h0m1-2h0m0 2h0m1-1h0m0 1h0m0 1h0m1-2h0m1 1h0m0-1h0m1 2h0m0-2h0m1 1h0m0-1h0m0 2h0m1-3h0m0 1h0m0 2h0m1-1h0m1-3h0m1 2h0m0 2h0m0-2h0m1 1h0m0-2h0m0 2h0m1-3h0m0 5h0m0-3h0m1 0h0m0 2h0m1-2h0m0 1h0m1 1h0m0-1h0m0-3h0m1 3h0m0 2h0m0-4h0m1 2h0m1 0h0m0-1h0m0 2h0m1-2h0m0 2h0m1-2h0m0 1h0m1-2h0m0 1h0m0 1h0m1 1h0m0-1h0m0-1h0m1 2h0m0-2h0m0 1h0m1 0h0m0 1h0m1-2h0m0 1h0m1-1h0m0 1h0m1 0h0m1-3h0m1 3h0m0 1h0m0-1h0m1 1h0m0-2h0m1 1h0m0-2h0m0 2h0m1 1h0m0-2h0m1 2h0m0-4h0m0 2h0m1 1h0m0-1h0m1 1h0m0-1h0m0 2h0m1-1h0m0-1h0m1 0h0m0 1h0m0-1h0m1 2h0m0-3h0m0 4h0m1-3h0m0 2h0m1-3h0m0 3h0m1-1h0m0 1h0m0-1h0m1-1h0m0 1h0m0 1h0m1 0h0m0-3h0m0 2h0m1 0h0m1-1h0m0 1h0m0-1h0m1 0h0m0-1h0m0 3h0m1-1h0m0 1h0m0-2h0m1 1h0m1 0h0m0-1h0m1 1h0m0-3h0m0 2h0m1 0h0m0-1h0m0 3h0m1-4h0m0 3h0m1-1h0m1 0h0m0 1h0m0-1h0m1 0h0m1 1h0m0-1h0m1 0h0m0 1h0m0-2h0m1 3h0m0-1h0m1-1h0m0 1h0m1-1h0m0-2h0m1 3h0m0-4h0m0 3h0m1 1h0m0-1h0m0 1h0m1-2h0m0 3h0m0-2h0m1 0h0m0 1h0m1 1h0m0-1h0m1-2h0m0 2h0m0-1h0m1 0h0m0 1h0m0-1h0m1 1h0m0-3h0m1 4h0m0-3h0m0-1h0m1 3h0m0-1h0m1 0h0m0 1h0m1-1h0m1 0h0m0 3h0m1-3h0m1 2h0m0-1h0m1 1h0m0-1h0m1 0h0m0 1h0m0-3h0m1-2h0m0 4h0m0 1h0m1-2h0m0 2h0m0-1h0m1-3h0m0 3h0m1-2h0m0 2h0m0-1h0m1 2h0m0-2h0m0 1h0m1-1h0m0-1h0m1 1h0m0-2h0m1 1h0m0 2h0m0-1h0m1 2h0m0-3h0m0 1h0m1 1h0m0-2h0m1 3h0m0-1h0m0-1h0m1 0h0m0-1h0m1 3h0m0-2h0m1 2h0m0 1h0m1-3h0m0 1h0m1 1h0m0-3h0m0 2h0m1-1h0m0-1h0m0 1h0m1 0h0m1 3h0m0-3h0m1 2h0m0-2h0m1 0h0m0-1h0m0 2h0m1-2h0m0 1h0m1 0h0m0 3h0m0-2h0m1 1h0m0-2h0m0 1h0m1-1h0m0 1h0m1 0h0m0 1h0m1-4h0m0 5h0m0-2h0m1-1h0m0 2h0m0-3h0m1 2h0m0 1h0m0-2h0m1 2h0m0-3h0m1 2h0m0 1h0m0-1h0m1 0h0m0-1h0m1 2h0m0-1h0m1 1h0m0-1h0m1 2h0m0-2h0m1-1h0m0-1h0m1 1h0m0 2h0m1-1h0m1-2h0m0 2h0m0-3h0m1 1h0m0 2h0m0 1h0m1-1h0m0-1h0m1 0h0m0-1h0m1 2h0m0-1h0m1-1h0m0 1h0m1 1h0m0-1h0m1 1h0m0 1h0m1 0h0m0-1h0m0-1h0m1-1h0m0 1h0m0-1h0m1 2h0m1-1h0m0-1h0m1 1h0m0 1h0m0-2h0m1 2h0m0-2h0m0 2h0m1-1h0m0 1h0m1 0h0m0 1h0m1 0h0m0-1h0m0 1h0m1 0h0m0-2h0m1 1h0m0 1h0m1-1h0m1 0h0m0 1h0m0-2h0m1 0h0m0 2h0m0-2h0m1-1h0m0 2h0m1 0h0m0-1h0m1 2h0m0-4h0m0 3h0m1 0h0m0 1h0m0-3h0m1 2h0m1 0h0m1-1h0m0-1h0m0 1h0m1 0h0m0 1h0m1 2h0m0-4h0m1 1h0m1 1h0m0-1h0m0 2h0m1-2h0m0 1h0m0-1h0m1 0h0m0 1h0m1-1h0m0 2h0m0-3h0m1 2h0m0-1h0m0 2h0m1 0h0m0-1h0m1-2h0m0 1h0m1 1h0m0 1h0m0-2h0m1 1h0m0-1h0m1 1h0m0 2h0m1-2h0m0-1h0m1 1h0m0-1h0m0 1h0m1 0h0m0-1h0m0 1h0m1-1h0m0-1h0m0 4h0m1-3h0m0 1h0m1 0h0m0-1h0m0-1h0m1 3h0m0-2h0m1 1h0m0 2h0m0-1h0m1-1h0m0-1h0m1 1h0m0-1h0m0 1h0m1-1h0m0 2h0m0-1h0m1-1h0m0-1h0m0-2h0m1 2h0m0 3h0m1-2h0m0 1h0m0-3h0m1 4h0m0-1h0m1 0h0m1-1h0m1-1h0m0 2h0m0-1h0m1 2h0m0-1h0m0 1h0m1-3h0m0 1h0m0 1h0m1 0h0m0-2h0m1 2h0m0-1h0m0 2h0m1-1h0m0-2h0m1 2h0m0-1h0m1 0h0m0 1h0m1 0h0m0-2h0m0 2h0m1 0h0m0-2h0m0 1h0m1 1h0m1-1h0m0-1h0m1 2h0m0-2h0m0 3h0m1-1h0m0-1h0m1 0h0m0-1h0m0 2h0m1 1h0m1-2h0m0 1h0m1 1h0m0-3h0m0 2h0m1 1h0m0-1h0m1-1h0m1-1h0m0 2h0m1-1h0m0 1h0m0 1h0m1-1h0m1 0h0m0-1h0m1-2h0m0 4h0m1 0h0m0-3h0m0 2h0m1-1h0m0-1h0m0 1h0m1-1h0m1 1h0m0 1h0m0 1h0m1-2h0m0 2h0m0-2h0m1 0h0m0 1h0m1-2h0m0 1h0m1 1h0m0 1h0m0-1h0m1 1h0m0-2h0m0-2h0m1 2h0m0-1h0m1 2h0m0-1h0m1 1h0m0-1h0m1-1h0m0 2h0m0-1h0m1 0h0m0 1h0m1-2h0m0 3h0m1-2h0m0 1h0m1 1h0m0-2h0m0 1h0m1-1h0m0 2h0m1 2h0m0-1h0m0-1h0m1-2h0m0-1h0m0 1h0m1 2h0m0-2h0m0 1h0m1 1h0m0-2h0m1 0h0m0 1h0m0 1h0m1-4h0m0 4h0m0-4h0m1 2h0m0-2h0m0 5h0m1-3h0m1 1h0m1 1h0m0-1h0m1 1h0m0-2h0m0 4h0m1-3h0m0-1h0m1 1h0m0-1h0m0-1h0m1 1h0m0 1h0m1-3h0m0 3h0m0 1h0m1-1h0m1 0h0m1 0h0m0-1h0m1 1h0m0-2h0m1 1h0m0-1h0m1 3h0m0-2h0m1 1h0m0-1h0m1 3h0m0-5h0m0 2h0m1 1h0m0 1h0m1-1h0m0-1h0m0 2h0m1-3h0m0-2h0m0 4h0m1-2h0m0 2h0m1-1h0m0 4h0m1-3h0m0-1h0m0 1h0m1-1h0m0-2h0m0 3h0m1-1h0m0 1h0m0-2h0m1 3h0m0-2h0m1 0h0m0-1h0m0 4h0m1-3h0m1 0h0m0-1h0m0 2h0m1-1h0m1 1h0m1-1h0m0 2h0m1-2h0m0 1h0m0-1h0m1 1h0m0-1h0m1 0h0m1 1h0m0-1h0m0 3h0m1-4h0m0 1h0m1 2h0m0-1h0m1 1h0m0-3h0m0 1h0m1 0h0m0 1h0m1-1h0m0 1h0m0-1h0m1-1h0m0 3h0m1-3h0m0 1h0m1 1h0m0-1h0m0 1h0m1 2h0m0-1h0m0-2h0m1 1h0m1 1h0m0-1h0m1-2h0m0 3h0m1-2h0m0-1h0m1 1h0m1 0h0m0 2h0m0-2h0m1 0h0m0 1h0m0-1h0m1 0h0m1 0h0m0 2h0m1-1h0m0-1h0m0 1h0m1-2h0m0 2h0m0-1h0m1 1h0m1 0h0m0-1h0m0 1h0m1 0h0m0-1h0m0 1h0m1-2h0m0 4h0m0-4h0m1 1h0m0-1h0m1 1h0m0 1h0m1 0h0m0-1h0m0 1h0m1-1h0m0 1h0m0-3h0m1 2h0m0 2h0m1-4h0m0 2h0m1 1h0m0 1h0m1-3h0m0 2h0m0-1h0m1 2h0m1-1h0m1 0h0m0-1h0m1 0h0m0 1h0m0 1h0m1-1h0m0 1h0m1-2h0m0 2h0m1-3h0m0 1h0m1 0h0m0 3h0m0-2h0m1-1h0m0 1h0m1-1h0m0 3h0m0-1h0m1-1h0m0 1h0m1-1h0m0 1h0m0-3h0m1 2h0m0-2h0m1 1h0m0 1h0m1-2h0m0 2h0m0-2h0m1 2h0m0 1h0m1-3h0m1 3h0m0-3h0m0 2h0m1 1h0m0-2h0m0 3h0m1-3h0m0 1h0m0 1h0m1-1h0m0 1h0m1-1h0m0 2h0m0-2h0m1 0h0m0 1h0m1 0h0m0-1h0m0-4h0m1 6h0m0-3h0m1 1h0m0-2h0m0 2h0m1 0h0m0-2h0m0 1h0m1 1h0m0-1h0m1 0h0m0-2h0m1 3h0m0-1h0m1 2h0m0-1h0m0-1h0m1 0h0m0 2h0m1-1h0m1-2h0m0 2h0m1 0h0m0-1h0m1 1h0m1-2h0m0 1h0m1 1h0m0-1h0m0-2h0m1 3h0m0-1h0m0 2h0m1-1h0m0 1h0m1-1h0m0-1h0m1 1h0m1 0h0m0 1h0m0-1h0m1-1h0m0-1h0m1 1h0m0 2h0m0-1h0m1 1h0m0-3h0m1 0h0m0 1h0m0 1h0m1-2h0m0 2h0m1 1h0m0-4h0m0 2h0m1 0h0m0 1h0m1 0h0m0-1h0m0-1h0m1 2h0m1-3h0m0 4h0m1-2h0m0 2h0m0-1h0m1-1h0m0 2h0m0-2h0m1-1h0m1 0h0m0 2h0m0-2h0m1 2h0m0 1h0m1-2h0m0 1h0m1-1h0m0 2h0m1-3h0m0 1h0m0-1h0m1 1h0m0-1h0m0 3h0m1-1h0m0 1h0m0-2h0m1 3h0m0-1h0m1-1h0m0-1h0m1 1h0m0 4h0m0-6h0m1 2h0m1 1h0m1 0h0m0-2h0m1 3h0m0-4h0m0 4h0m1-2h0m0-1h0m0 1h0m1-1h0m0 2h0m1 0h0m0-2h0m0 2h0m1-2h0m1 1h0m0 1h0m0-1h0m1 1h0m0-1h0m1 0h0m0-1h0m1 1h0m0 2h0m0-1h0m1-2h0m0 3h0m1-1h0m0-1h0m1-1h0m1 2h0m0-2h0m0 2h0m1-2h0m0 1h0m1-3h0m0 3h0m1 0h0m0-2h0m0 1h0m1 1h0m0-3h0m1 3h0m0-1h0m1 1h0m0 2h0m1-2h0m0 1h0m1-2h0m0 1h0m0-2h0m1 1h0m0 2h0m0-2h0m1 1h0m0-1h0m1 1h0m0-2h0m0 2h0m1 0h0m0-2h0m0 2h0m1 0h0m0-1h0m1 1h0m0-1h0m1 3h0m0-2h0m1-1h0m0 1h0m1-1h0m0 1h0m0-1h0m1 1h0m1-2h0m0 1h0m0 1h0m1-1h0m0 3h0m1-2h0m0-2h0m1 2h0m0-1h0m1 1h0m0 1h0m0-2h0m1 2h0m0-2h0m1 2h0m0-1h0m1-1h0m0 1h0m0 1h0m1-1h0m0-1h0m1 1h0m0-1h0m0 1h0m1-3h0m0 4h0m1-2h0m0 3h0m0-4h0m1 2h0m0 1h0m0-1h0m1-1h0m0-1h0m0 1h0m1 1h0m0-1h0m1 1h0m0-2h0m0 1h0m1 0h0m0 1h0m1-1h0m0 2h0m0-2h0m1 2h0m0-1h0m1-2h0m0 1h0m0 1h0m1 0h0m0-1h0m0 1h0m1-1h0m0-1h0m1 2h0m1-1h0m0 1h0m0 1h0m1 0h0m0-1h0m0-2h0m1 1h0m0 1h0m1-2h0m0 2h0m1-1h0m0 1h0m1-1h0m0 1h0m0 1h0m1 0h0m0-1h0m1-1h0m0 1h0m1-1h0m0 2h0m0-2h0m1 0h0m1-1h0m0 1h0m1 0h0m0 1h0m1 0h0m0 1h0m0-2h0m1 1h0m1-3h0m0 5h0m0-3h0m1 0h0m0-1h0m1 2h0m0 1h0m1-2h0m0 2h0m0-3h0m1-1h0m0 2h0m0 1h0m1-1h0m0 1h0m1 1h0m0 2h0m0-3h0m1 0h0m0-1h0m1 3h0m0-1h0m0-1h0m1-2h0m0 3h0m1-1h0m0-1h0m0 2h0m1-1h0m1 0h0m0-1h0m1 2h0m0-1h0m1 1h0m0-1h0m1 0h0m0-1h0m1 0h0m0 2h0m0-2h0m1 1h0m0-2h0m1 2h0m0-1h0m1-2h0m0 4h0m0-1h0m1-1h0m0 3h0m0-3h0m1 2h0m0-3h0m1 3h0m0-2h0m0 2h0m1-3h0m0 1h0m0-1h0m1 0h0m0 2h0m1 1h0m0-2h0m1 0h0m0-1h0m0 2h0m1-1h0m0 1h0m0-1h0m1 1h0m1 0h0m0-2h0m0 2h0m1 2h0m0-2h0m0-2h0m1 2h0m0-2h0m0 2h0m1 1h0m0-2h0m1 3h0m0-3h0m0 2h0m1-2h0m0 3h0m0-3h0m1 0h0m0 1h0m0-1h0m1 1h0m1 1h0m0-2h0m0 1h0m1 0h0m0-1h0m1 2h0m0-3h0m0 3h0m1-1h0m0-1h0m1 2h0m0-1h0m1-1h0m0 1h0m1 1h0m0-3h0m0 2h0m1 0h0m0-1h0m1 1h0m0-1h0m0 2h0m1 0h0m0-3h0m0 2h0m1 1h0m0-2h0m0 1h0m1-1h0m1 0h0m0 2h0m0-1h0m1-3h0m0 2h0m1 0h0m0 1h0m1 0h0m0 1h0m1-4h0m0 3h0m1-2h0m0 1h0m0 3h0m1-3h0m0 2h0m1-1h0m0-2h0m1 1h0m0 2h0m0-1h0m1-2h0m0 1h0m1 1h0m0-1h0m1 3h0m0-4h0m1 3h0m0-1h0m0 3h0m1-4h0m0 1h0m0-1h0m1 1h0m0 1h0m0-1h0m1-2h0m0 1h0m1 2h0m0-1h0m0-1h0m1 1h0m1 0h0m0 2h0m1-2h0m0-3h0m1 2h0m0-1h0m1 3h0m0-1h0m0-2h0m1 1h0m0 1h0m1-1h0m0 1h0m1-2h0m0 1h0m0-3h0m1 4h0m0-2h0m1 3h0m0-2h0m0 1h0m1 1h0m0-2h0m1 1h0m0-1h0m1 1h0m0 1h0m1-1h0m0-1h0m0 1h0m1-1h0m0 2h0m1-2h0m0 2h0m0-2h0m1 1h0m0 1h0m1 0h0m0-1h0m1-2h0m0 2h0m1-2h0m0 1h0m1 1h0m0 2h0m0-2h0m1 1h0m0-1h0m0-1h0m1 0h0m0-1h0m1 2h0m0-1h0m0 2h0m1-1h0m0 1h0m1-1h0m0-1h0m1 0h0m0 1h0m1 0h0m1-1h0m0 2h0m1-2h0m0 2h0m1-1h0m0 1h0m0-4h0m1 5h0m0-2h0m0-1h0m1 1h0m0 1h0m1-3h0m0 2h0m1-1h0m0 1h0m0-1h0m1 3h0m0-2h0m0-2h0m1 3h0m0-1h0m1 0h0m0-2h0m1 1h0m1-2h0m0 2h0m1 1h0m0 1h0m1-2h0m0 2h0m1-2h0m0-2h0m0 3h0m1 0h0m0-1h0m0 2h0m1-2h0m0-1h0m0 1h0m1-2h0m0 4h0m1-1h0m0 1h0m1-2h0m0 1h0m1-4h0m0 2h0m0 2h0m1 0h0m0-1h0m1 2h0m0-1h0m0-2h0m1 1h0m0 1h0m1 0h0m1-2h0m0 1h0m1 0h0m0 2h0m0-1h0m1-2h0m0 3h0m1-1h0m1 1h0m1-3h0m0 2h0m0-1h0m1 0h0m0 1h0m0 1h0m1 0h0m0-3h0m0 3h0m1 1h0m0-4h0m1 2h0m0-2h0m0 3h0m1-1h0m0-1h0m1 1h0m0-2h0m0 2h0m1 0h0m1-1h0m0 1h0m1-1h0m0 2h0m0 1h0m1-2h0m0 1h0m0-1h0m1 0h0m0-1h0m1 1h0m1 0h0m0-1h0m1 4h0m0-3h0m0-1h0m1 1h0m0 1h0m1-2h0m0 1h0m0 1h0m1-1h0m0-1h0m1 1h0m0-1h0m0 2h0m1-1h0m0-2h0m1 2h0m0-1h0m1 1h0m0-1h0m1 1h0m0-2h0m0 1h0m1 2h0m0-3h0m1 0h0m0 2h0m1-1h0m0 1h0m1 1h0m0-3h0m1 1h0m0-1h0m1 2h0m0-2h0m0 2h0m1 0h0m0 2h0m0-2h0m1 0h0m0-2h0m1 2h0m0-1h0m1 1h0m0 1h0m0-1h0m1-1h0m0 2h0m0-1h0m1-2h0m0 1h0m1 2h0m0-2h0m0 1h0m1-1h0m0-1h0m0 1h0m1 1h0m0 1h0m0-1h0m1-3h0m0 3h0m1 0h0m0-1h0m1 0h0m0 1h0m0-1h0m1 1h0m1 2h0m0-1h0m1 0h0m0-2h0m1 0h0m0 1h0m0 1h0m1-2h0m0 1h0m0-1h0m1 1h0m1 1h0m0-3h0m0 2h0m1-1h0m0 1h0m0-1h0m1 0h0m0 1h0m1-1h0m0 2h0m1-2h0m0-1h0m0 3h0m1-3h0m0 2h0m1 1h0m0-2h0m0-1h0m1 2h0m1 1h0m0-3h0m0 4h0m1-2h0m0-1h0m0-1h0m1 2h0m0 1h0m1-1h0m0 1h0m1-4h0m0 2h0m1 1h0m0-1h0m1 1h0m0-1h0m1-1h0m0 3h0m1-2h0m0 1h0m0-2h0m1 2h0m0 1h0m0-2h0m1 3h0m0-3h0m1 2h0m0-1h0m1-1h0m0-1h0m0 1h0m1 0h0m0 1h0m0-1h0m1 1h0m0-2h0m0 2h0m1 2h0m0-4h0m1 1h0m0 1h0m0 1h0m1-1h0m0 2h0m0-2h0m1-2h0m0 3h0m0-2h0m1 1h0m0 1h0m1 0h0m1-2h0m0 1h0m1-1h0m0 1h0m1-1h0m1 1h0m0 1h0m0-1h0m1-1h0m0 1h0m0-2h0m1 2h0m0-3h0m0 5h0m1-2h0m0 1h0m1-2h0m0 1h0m0-3h0m1 1h0m0 1h0m1 3h0m0-1h0m0-1h0m1 0h0m1 0h0m0 1h0m1-2h0m0 1h0m1-2h0m0 2h0m0-1h0m1-1h0m0 1h0m1 1h0m0 1h0m0-1h0m1-1h0m1 0h0m1 1h0m0-1h0m0 1h0m1-3h0m0 5h0m0-2h0m1-2h0m0 1h0m0 2h0m1-1h0m0-2h0m1 3h0m0-4h0m0 2h0m1 1h0m0-1h0m0 1h0m1-1h0m0 4h0m0-4h0m1 0h0m1 3h0m0-2h0m0-1h0m1-1h0m0 1h0m0 1h0m1 1h0m0-1h0m0-2h0m1 2h0m0-1h0m1 0h0m0 2h0m0-1h0m1 0h0m0-2h0m0 3h0m1-1h0m1 0h0m1-1h0m0 1h0m0 1h0m1 2h0m0-3h0m0 2h0m1-3h0m0 2h0m0-2h0m1 0h0m1 0h0m0 3h0m0-4h0m1 2h0m0-1h0m0 1h0m1 1h0m0-1h0m0 1h0m1-3h0m0 3h0m1 0h0m0-3h0m0 2h0m1 0h0m0-1h0m0 1h0m1 0h0m0 1h0m1-1h0m0-1h0m1 0h0m0 2h0m0-2h0m1 2h0m0-2h0m0 3h0m1-3h0m0 1h0m0 1h0m1 1h0m0-3h0m1 2h0m0-2h0m1 1h0m0-1h0m1 0h0m0 1h0m1 1h0m0-1h0m1 0h0m0 1h0m1-2h0m0 2h0m0 1h0m1-5h0m0 2h0m0 3h0m1-4h0m0 2h0m1-2h0m0 2h0m0-1h0m1 1h0m0-1h0m1 1h0m0 1h0m0-3h0m1 0h0m0 2h0m1-1h0m0 3h0m0-1h0m1-4h0m0 3h0m0 1h0m1-1h0m0-1h0m1 2h0m0-1h0m1 0h0m0 2h0m0-3h0m1 1h0m0-2h0m0 2h0m1-1h0m0 1h0m0 1h0m1-1h0m0-1h0m1 2h0m0-2h0m0 1h0m1-2h0m0 2h0m1 0h0m0-1h0m0 1h0m1-1h0m0 2h0m1-1h0m0 1h0m0-1h0m1 0h0m0-1h0m1 0h0m1 2h0m0-1h0m1 0h0m0 1h0m1-3h0m0 3h0m0-2h0m1 0h0m1 0h0m0 1h0m0-2h0m1 3h0m0-1h0m1 1h0m0-2h0m0 1h0m1 1h0m0-2h0m1-1h0m1 4h0m0-3h0m1-2h0m0 2h0m0 1h0m1-2h0m0 3h0m1-1h0m1-1h0m0 3h0m1-2h0m0 1h0m0-1h0" fill="none" stroke="#000" stroke-width="6.80" stroke-linecap="round"/></g>
<path d="M169.9 959.0h3.4l-1.7-3.0z" fill="none" stroke="#ff0000" stroke-width="1.5" stroke-linejoin="round"/><path d="M174.7 959.0h3.4l-1.7-3.0z" fill="none" stroke="#ff0000" stroke-width="1.5" stroke-linejoin="round"/><path d="M230.8 959.0h3.4l-1.7-3.0z" fill="none" stroke="#ff0000" stroke-width="1.5" stroke-linejoin="round"/><path d="M245.7 959.0h3.4l-1.7-3.0z" fill="none" stroke="#ff0000" stroke-width="1.5" stroke-linejoin="round"/><path d="M394.3 959.0h3.4l-1.7-3.0z" fill="none" stroke="#ff0000" stroke-width="1.5" stroke-linejoin="round"/><path d="M421.8 959.0h3.4l-1.7-3.0z" fill="none" stroke="#ff0000" stroke-width="1.5" stroke-linejoin="round"/><path d="M425.3 959.0h3.4l-1.7-3.0z" fill="none" stroke="#ff0000" stroke-width="1.5" stroke-linejoin="round"/><path d="M497.0 959.0h3.4l-1.7-3.0z" fill="none" stroke="#ff0000" stroke-width="1.5" stroke-linejoin="round"/><path d="M649.8 959.0h3.4l-1.7-3.0z" fill="none" stroke="#ff0000" stroke-width="1.5" stroke-linejoin="round"/><path d="M711.6 959.0h3.4l-1.7-3.0z" fill="none" stroke="#ff0000" stroke-width="1.5" stroke-linejoin="round"/><path d="M755.6 959.0h3.4l-1.7-3.0z" fill="none" stroke="#ff0000" stroke-width="1.5" stroke-linejoin="round"/><path d="M854.8 959.0h3.4l-1.7-3.0z" fill="none" stroke="#ff0000" stroke-width="1.5" stroke-linejoin="round"/><path d="M875.6 959.0h3.4l-1.7-3.0z" fill="none" stroke="#ff0000" stroke-width="1.5" stroke-linejoin="round"/><path d="M883.6 959.0h3.4l-1.7-3.0z" fill="none" stroke="#ff0000" stroke-width="1.5" stroke-linejoin="round"/><path d="M904.3 959.0h3.4l-1.7-3.0z" fill="none" stroke="#ff0000" stroke-width="1.5" stroke-linejoin="round"/><path d="M905.9 959.0h3.4l-1.7-3.0z" fill="none" stroke="#ff0000" stroke-width="1.5" stroke-linejoin="round"/><path d="M1089.0 959.0h3.4l-1.7-3.0z" fill="none" stroke="#ff0000" stroke-width="1.5" stroke-linejoin="round"/><path d="M910.8 959.0h3.4l-1.7-3.0z" fill="none" stroke="#ff0000" stroke-width="1.5" stroke-linejoin="round"/>
<circle cx="906.4" cy="963.3" r="1.3" fill="#ff0000"/>
<rect x="105.5" y="725.5" width="1378.00" height="286.00" fill="none" stroke="#000" stroke-width="1.11"/>
<line x1="105.5" y1="954.5" x2="1483.5" y2="954.5" stroke="#000" stroke-width="1.11"/>
<line x1="162.50" y1="1011.5" x2="162.50" y2="1016.36" stroke="#000" stroke-width="1.11"/><text x="162.50" y="1032.00" font-size="14.6" text-anchor="middle" textLength="8.84" lengthAdjust="spacingAndGlyphs" fill="#000" stroke="#000" stroke-width="0.2">0</text><line x1="347.50" y1="1011.5" x2="347.50" y2="1016.36" stroke="#000" stroke-width="1.11"/><text x="347.50" y="1032.00" font-size="14.6" text-anchor="middle" textLength="35.35" lengthAdjust="spacingAndGlyphs" fill="#000" stroke="#000" stroke-width="0.2">2000</text><line x1="533.50" y1="1011.5" x2="533.50" y2="1016.36" stroke="#000" stroke-width="1.11"/><text x="533.50" y="1032.00" font-size="14.6" text-anchor="middle" textLength="35.35" lengthAdjust="spacingAndGlyphs" fill="#000" stroke="#000" stroke-width="0.2">4000</text><line x1="718.50" y1="1011.5" x2="718.50" y2="1016.36" stroke="#000" stroke-width="1.11"/><text x="718.50" y="1032.00" font-size="14.6" text-anchor="middle" textLength="35.35" lengthAdjust="spacingAndGlyphs" fill="#000" stroke="#000" stroke-width="0.2">6000</text><line x1="903.50" y1="1011.5" x2="903.50" y2="1016.36" stroke="#000" stroke-width="1.11"/><text x="903.50" y="1032.00" font-size="14.6" text-anchor="middle" textLength="35.35" lengthAdjust="spacingAndGlyphs" fill="#000" stroke="#000" stroke-width="0.2">8000</text><line x1="1089.50" y1="1011.5" x2="1089.50" y2="1016.36" stroke="#000" stroke-width="1.11"/><text x="1089.50" y="1032.00" font-size="14.6" text-anchor="middle" textLength="44.19" lengthAdjust="spacingAndGlyphs" fill="#000" stroke="#000" stroke-width="0.2">10000</text><line x1="1274.50" y1="1011.5" x2="1274.50" y2="1016.36" stroke="#000" stroke-width="1.11"/><text x="1274.50" y="1032.00" font-size="14.6" text-anchor="middle" textLength="44.19" lengthAdjust="spacingAndGlyphs" fill="#000" stroke="#000" stroke-width="0.2">12000</text><line x1="1459.50" y1="1011.5" x2="1459.50" y2="1016.36" stroke="#000" stroke-width="1.11"/><text x="1459.50" y="1032.00" font-size="14.6" text-anchor="middle" textLength="44.19" lengthAdjust="spacingAndGlyphs" fill="#000" stroke="#000" stroke-width="0.2">14000</text>
<line x1="100.64" y1="1009.50" x2="105.5" y2="1009.50" stroke="#000" stroke-width="1.11"/>
<text x="95.80" y="1014.80" font-size="14.6" text-anchor="end" textLength="8.84" lengthAdjust="spacingAndGlyphs" fill="#000" stroke="#000" stroke-width="0.2">0</text>
<line x1="100.64" y1="983.50" x2="105.5" y2="983.50" stroke="#000" stroke-width="1.11"/>
<text x="95.80" y="988.80" font-size="14.6" text-anchor="end" textLength="8.84" lengthAdjust="spacingAndGlyphs" fill="#000" stroke="#000" stroke-width="0.2">5</text>
<line x1="100.64" y1="957.50" x2="105.5" y2="957.50" stroke="#000" stroke-width="1.11"/>
<text x="95.80" y="962.80" font-size="14.6" text-anchor="end" textLength="17.67" lengthAdjust="spacingAndGlyphs" fill="#000" stroke="#000" stroke-width="0.2">10</text>
<line x1="102.72" y1="996.50" x2="105.5" y2="996.50" stroke="#000" stroke-width=".83"/>
<line x1="102.72" y1="970.50" x2="105.5" y2="970.50" stroke="#000" stroke-width=".83"/>
<text x="0" y="0" font-size="14.6" text-anchor="middle" textLength="14.53" lengthAdjust="spacingAndGlyphs" stroke="#000" stroke-width="0.2" transform="translate(68.5 983) rotate(-90)">dr</text>
</svg></body></html>
